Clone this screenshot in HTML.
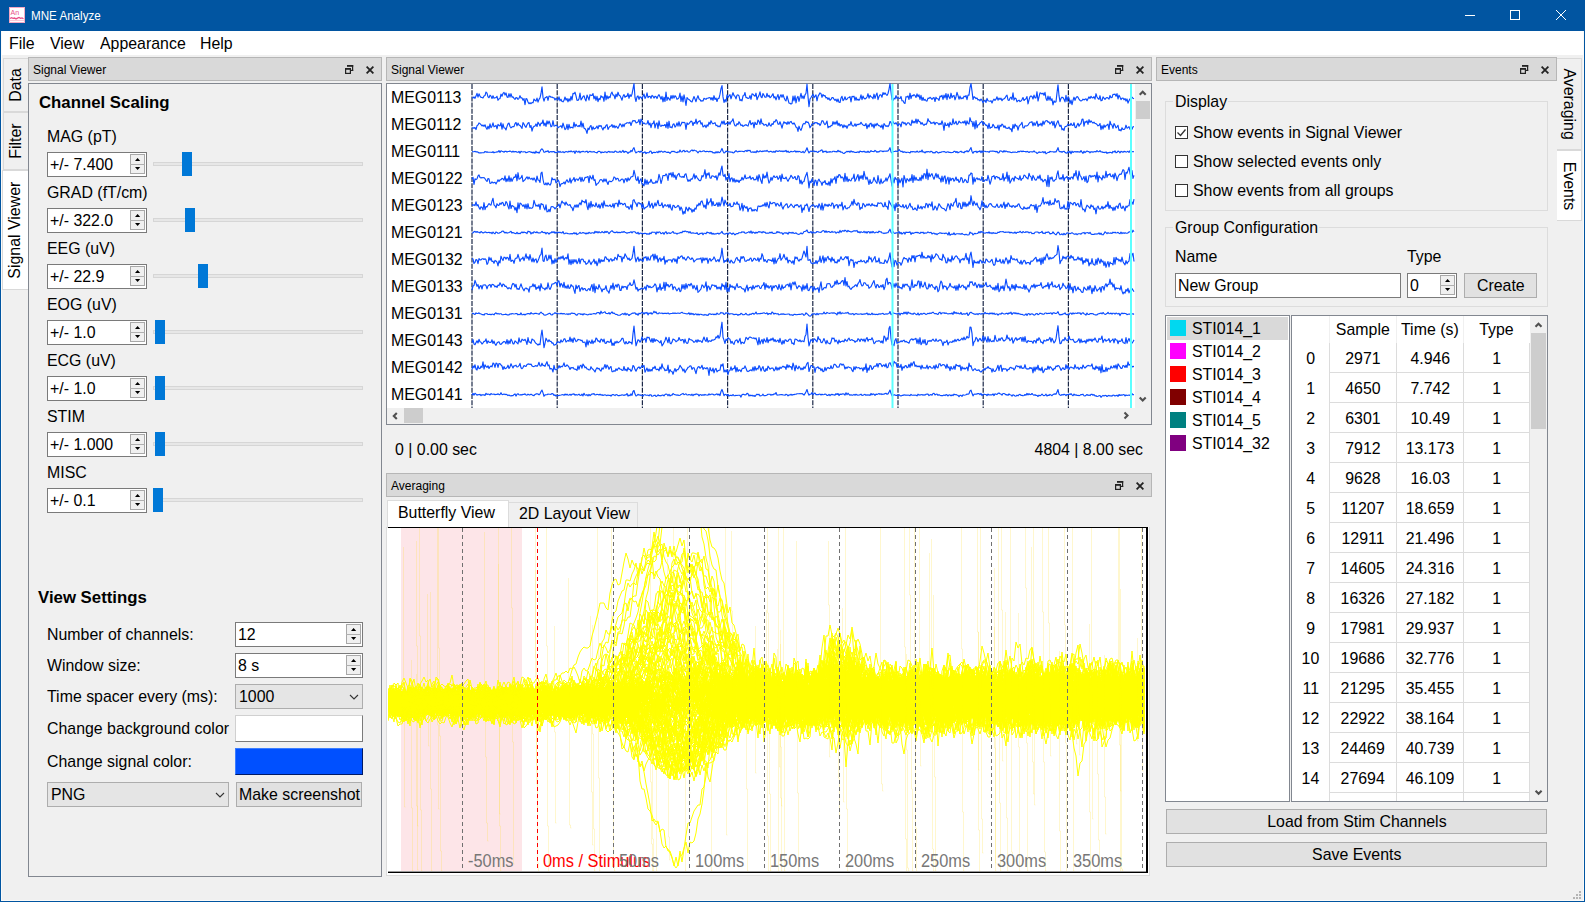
<!DOCTYPE html><html><head><meta charset="utf-8"><style>
*{box-sizing:border-box;margin:0;padding:0}
html,body{width:1585px;height:902px;overflow:hidden;background:#f0f0f0;font-family:"Liberation Sans",sans-serif;color:#000}
div{position:absolute}
.t{font-size:17px;line-height:19px;white-space:nowrap}
.s{display:inline-block;transform:scaleX(0.935);transform-origin:0 50%}
.c .s{transform-origin:50% 50%}
.r .s{transform-origin:100% 50%}
.dt{font-size:12px;line-height:14px;white-space:nowrap}
.dock{background:#d9d9d9;border:1px solid #b6b6b6}
.frame{border:1px solid #828790}
.spin{background:#fff;border:1px solid #7a7a7a}
.sbtn{background:#f0f0f0;border:1px solid #c8c8c8}
.btn{background:#e1e1e1;border:1px solid #adadad}
.groove{background:#e7e7e7;border:1px solid #d6d6d6}
.handle{background:#0078d7}
.grp{border:1px solid #dcdcdc}
svg{position:absolute}
</style></head><body><div class="" style="left:0px;top:0px;width:1585px;height:31px;background:#0155a1"></div><div class="" style="left:0px;top:0px;width:1px;height:902px;background:#0155a1;z-index:50"></div><div class="" style="left:1584px;top:0px;width:1px;height:902px;background:#0155a1;z-index:50"></div><div class="" style="left:0px;top:901px;width:1585px;height:1px;background:#0155a1;z-index:50"></div><div class="" style="left:1px;top:31px;width:1px;height:870px;background:#fbfaf8;z-index:49"></div><div class="" style="left:1583px;top:31px;width:1px;height:870px;background:#fbfaf8;z-index:49"></div><div class="" style="left:1px;top:900px;width:1583px;height:1px;background:#fbfaf8;z-index:49"></div><div class="" style="left:1579px;top:891px;width:2px;height:2px;background:#b4b4b4"></div><div class="" style="left:1576px;top:894px;width:2px;height:2px;background:#b4b4b4"></div><div class="" style="left:1579px;top:894px;width:2px;height:2px;background:#b4b4b4"></div><div class="" style="left:1573px;top:897px;width:2px;height:2px;background:#b4b4b4"></div><div class="" style="left:1576px;top:897px;width:2px;height:2px;background:#b4b4b4"></div><div class="" style="left:1579px;top:897px;width:2px;height:2px;background:#b4b4b4"></div><svg style="left:9px;top:7px" width="16" height="16" viewBox="0 0 16 16"><rect x="0" y="0" width="16" height="16" fill="#fff"/><rect x="0.5" y="0.5" width="15" height="15" fill="none" stroke="#f4a8c4"/><text x="1.6" y="7.6" font-size="7" font-family="Liberation Sans" fill="#e8508a">An</text><path d="M1 11.5l1.5 -0.8l1.5 0.6l1.5 -0.3l1.5 0.9l1.5 -0.8l1.5 -0.7l1.5 1l1.5 -0.5l1.5 0.9" fill="none" stroke="#e8508a" stroke-width="1.3"/><path d="M1 13.5h14" stroke="#f8c8d8" stroke-width="1.2"/></svg><div class="t b" style="left:30.5px;top:9px;color:#fff;font-size:12.3px;line-height:15px"><span style="display:inline-block;transform:scaleX(0.945);transform-origin:0 50%">MNE Analyze</span></div><div class="" style="left:1465px;top:15px;width:10px;height:1px;background:#fff"></div><div class="" style="left:1510px;top:10px;width:10px;height:10px;border:1px solid #fff"></div><svg style="left:1555px;top:9px" width="12" height="12" viewBox="0 0 12 12"><path d="M1 1L11 11M11 1L1 11" stroke="#fff" stroke-width="1"/></svg><div class="" style="left:1px;top:31px;width:1583px;height:24px;background:#fff"></div><div class="t" style="left:8.5px;top:34px;"><span class="s">File</span></div><div class="t" style="left:50px;top:34px;"><span class="s">View</span></div><div class="t" style="left:100px;top:34px;"><span class="s">Appearance</span></div><div class="t" style="left:200px;top:34px;"><span class="s">Help</span></div><div class="" style="left:3px;top:58px;width:25px;height:54px;background:#f0f0f0;border:1px solid #d9d9d9;border-right:none"></div><div class="t" style="left:3px;top:58px;width:54px;height:25px;transform-origin:0 0;transform:translate(0px,54px) rotate(-90deg);text-align:center;line-height:25px"><span class="s" style="transform-origin:50% 50%">Data</span></div><div class="" style="left:3px;top:112px;width:25px;height:58px;background:#f0f0f0;border:1px solid #d9d9d9;border-right:none"></div><div class="t" style="left:3px;top:112px;width:58px;height:25px;transform-origin:0 0;transform:translate(0px,58px) rotate(-90deg);text-align:center;line-height:25px"><span class="s" style="transform-origin:50% 50%">Filter</span></div><div class="" style="left:2px;top:170px;width:26px;height:120px;background:#ffffff;border:1px solid #d9d9d9;border-right:none"></div><div class="t" style="left:2px;top:170px;width:120px;height:26px;transform-origin:0 0;transform:translate(0px,120px) rotate(-90deg);text-align:center;line-height:26px"><span class="s" style="transform-origin:50% 50%">Signal Viewer</span></div><div class="dock" style="left:28px;top:57px;width:354px;height:24px;"></div><div class="dt" style="left:33px;top:62.5px;">Signal Viewer</div><svg style="left:345px;top:65px" width="9" height="10" viewBox="0 0 9 10"><g fill="#222"><rect x="2" y="0" width="6.2" height="1.8"/><rect x="7" y="0" width="1.2" height="6"/><rect x="6" y="4.8" width="2.2" height="1.2"/><rect x="0" y="3" width="6" height="1.8"/><rect x="0" y="3" width="1.2" height="6"/><rect x="4.8" y="3" width="1.2" height="6"/><rect x="0" y="7.8" width="6" height="1.2"/></g></svg><svg style="left:366px;top:66px" width="8" height="8" viewBox="0 0 8 8"><path d="M0.6 0.6L7.4 7.4M7.4 0.6L0.6 7.4" stroke="#222" stroke-width="1.8"/></svg><div class="frame" style="left:28px;top:83px;width:354px;height:794px;"></div><div class="t b" style="left:39px;top:93px;font-weight:bold;font-size:16.8px;line-height:19px">Channel Scaling</div><div class="t" style="left:47px;top:127px;"><span class="s">MAG (pT)</span></div><div class="spin" style="left:47px;top:152px;width:100px;height:25px;"></div><div class="t" style="left:50px;top:155px;"><span class="s">+/- 7.400</span></div><div class="" style="left:130px;top:154px;width:15px;height:20px;background:#f0f0f0;border:1px solid #a8a8a8"></div><div class="" style="left:130px;top:164px;width:15px;height:1px;background:#b0b0b0"></div><svg style="left:130px;top:152px" width="15" height="25"><path d="M5 9l2.6 -3l2.6 3z M5 15l2.6 3l2.6 -3z" fill="#000"/></svg><div class="groove" style="left:153px;top:162px;width:210px;height:4px;"></div><div class="handle" style="left:182px;top:152px;width:10px;height:24px;"></div><div class="t" style="left:47px;top:183px;"><span class="s">GRAD (fT/cm)</span></div><div class="spin" style="left:47px;top:208px;width:100px;height:25px;"></div><div class="t" style="left:50px;top:211px;"><span class="s">+/- 322.0</span></div><div class="" style="left:130px;top:210px;width:15px;height:20px;background:#f0f0f0;border:1px solid #a8a8a8"></div><div class="" style="left:130px;top:220px;width:15px;height:1px;background:#b0b0b0"></div><svg style="left:130px;top:208px" width="15" height="25"><path d="M5 9l2.6 -3l2.6 3z M5 15l2.6 3l2.6 -3z" fill="#000"/></svg><div class="groove" style="left:153px;top:218px;width:210px;height:4px;"></div><div class="handle" style="left:185px;top:208px;width:10px;height:24px;"></div><div class="t" style="left:47px;top:239px;"><span class="s">EEG (uV)</span></div><div class="spin" style="left:47px;top:264px;width:100px;height:25px;"></div><div class="t" style="left:50px;top:267px;"><span class="s">+/- 22.9</span></div><div class="" style="left:130px;top:266px;width:15px;height:20px;background:#f0f0f0;border:1px solid #a8a8a8"></div><div class="" style="left:130px;top:276px;width:15px;height:1px;background:#b0b0b0"></div><svg style="left:130px;top:264px" width="15" height="25"><path d="M5 9l2.6 -3l2.6 3z M5 15l2.6 3l2.6 -3z" fill="#000"/></svg><div class="groove" style="left:153px;top:274px;width:210px;height:4px;"></div><div class="handle" style="left:198px;top:264px;width:10px;height:24px;"></div><div class="t" style="left:47px;top:295px;"><span class="s">EOG (uV)</span></div><div class="spin" style="left:47px;top:320px;width:100px;height:25px;"></div><div class="t" style="left:50px;top:323px;"><span class="s">+/- 1.0</span></div><div class="" style="left:130px;top:322px;width:15px;height:20px;background:#f0f0f0;border:1px solid #a8a8a8"></div><div class="" style="left:130px;top:332px;width:15px;height:1px;background:#b0b0b0"></div><svg style="left:130px;top:320px" width="15" height="25"><path d="M5 9l2.6 -3l2.6 3z M5 15l2.6 3l2.6 -3z" fill="#000"/></svg><div class="groove" style="left:153px;top:330px;width:210px;height:4px;"></div><div class="handle" style="left:155px;top:320px;width:10px;height:24px;"></div><div class="t" style="left:47px;top:351px;"><span class="s">ECG (uV)</span></div><div class="spin" style="left:47px;top:376px;width:100px;height:25px;"></div><div class="t" style="left:50px;top:379px;"><span class="s">+/- 1.0</span></div><div class="" style="left:130px;top:378px;width:15px;height:20px;background:#f0f0f0;border:1px solid #a8a8a8"></div><div class="" style="left:130px;top:388px;width:15px;height:1px;background:#b0b0b0"></div><svg style="left:130px;top:376px" width="15" height="25"><path d="M5 9l2.6 -3l2.6 3z M5 15l2.6 3l2.6 -3z" fill="#000"/></svg><div class="groove" style="left:153px;top:386px;width:210px;height:4px;"></div><div class="handle" style="left:155px;top:376px;width:10px;height:24px;"></div><div class="t" style="left:47px;top:407px;"><span class="s">STIM</span></div><div class="spin" style="left:47px;top:432px;width:100px;height:25px;"></div><div class="t" style="left:50px;top:435px;"><span class="s">+/- 1.000</span></div><div class="" style="left:130px;top:434px;width:15px;height:20px;background:#f0f0f0;border:1px solid #a8a8a8"></div><div class="" style="left:130px;top:444px;width:15px;height:1px;background:#b0b0b0"></div><svg style="left:130px;top:432px" width="15" height="25"><path d="M5 9l2.6 -3l2.6 3z M5 15l2.6 3l2.6 -3z" fill="#000"/></svg><div class="groove" style="left:153px;top:442px;width:210px;height:4px;"></div><div class="handle" style="left:155px;top:432px;width:10px;height:24px;"></div><div class="t" style="left:47px;top:463px;"><span class="s">MISC</span></div><div class="spin" style="left:47px;top:488px;width:100px;height:25px;"></div><div class="t" style="left:50px;top:491px;"><span class="s">+/- 0.1</span></div><div class="" style="left:130px;top:490px;width:15px;height:20px;background:#f0f0f0;border:1px solid #a8a8a8"></div><div class="" style="left:130px;top:500px;width:15px;height:1px;background:#b0b0b0"></div><svg style="left:130px;top:488px" width="15" height="25"><path d="M5 9l2.6 -3l2.6 3z M5 15l2.6 3l2.6 -3z" fill="#000"/></svg><div class="groove" style="left:153px;top:498px;width:210px;height:4px;"></div><div class="handle" style="left:153px;top:488px;width:10px;height:24px;"></div><div class="t b" style="left:38px;top:588px;font-weight:bold;font-size:16.8px;line-height:19px">View Settings</div><div class="t" style="left:47px;top:625px;"><span class="s">Number of channels:</span></div><div class="t" style="left:47px;top:656px;"><span class="s">Window size:</span></div><div class="t" style="left:47px;top:687px;"><span class="s">Time spacer every (ms):</span></div><div class="t" style="left:47px;top:719px;"><span class="s">Change background color</span></div><div class="t" style="left:47px;top:752px;"><span class="s">Change signal color:</span></div><div class="spin" style="left:235px;top:622px;width:128px;height:25px;"></div><div class="t" style="left:238px;top:625px;"><span class="s">12</span></div><div class="" style="left:346px;top:624px;width:15px;height:20px;background:#f0f0f0;border:1px solid #a8a8a8"></div><div class="" style="left:346px;top:634px;width:15px;height:1px;background:#b0b0b0"></div><svg style="left:346px;top:622px" width="15" height="25"><path d="M5 9l2.6 -3l2.6 3z M5 15l2.6 3l2.6 -3z" fill="#000"/></svg><div class="spin" style="left:235px;top:653px;width:128px;height:25px;"></div><div class="t" style="left:238px;top:656px;"><span class="s">8 s</span></div><div class="" style="left:346px;top:655px;width:15px;height:20px;background:#f0f0f0;border:1px solid #a8a8a8"></div><div class="" style="left:346px;top:665px;width:15px;height:1px;background:#b0b0b0"></div><svg style="left:346px;top:653px" width="15" height="25"><path d="M5 9l2.6 -3l2.6 3z M5 15l2.6 3l2.6 -3z" fill="#000"/></svg><div class="btn" style="left:235px;top:684px;width:128px;height:25px;background:#e5e5e5"></div><div class="t" style="left:239px;top:687px;"><span class="s">1000</span></div><svg style="left:349px;top:694px" width="10" height="6"><path d="M1 1l4 4l4 -4" fill="none" stroke="#333" stroke-width="1.1"/></svg><div class="" style="left:235px;top:715px;width:128px;height:27px;background:#fff;border:1px solid #d0d0d0;border-right-color:#7a7a7a;border-bottom-color:#7a7a7a"></div><div class="" style="left:235px;top:748px;width:128px;height:27px;background:#0050ff;border:1px solid #3a7cff;border-right-color:#001a66;border-bottom-color:#001a66"></div><div class="btn" style="left:47px;top:782px;width:182px;height:25px;background:#e5e5e5"></div><div class="t" style="left:51px;top:785px;"><span class="s">PNG</span></div><svg style="left:215px;top:792px" width="10" height="6"><path d="M1 1l4 4l4 -4" fill="none" stroke="#333" stroke-width="1.1"/></svg><div class="btn" style="left:236px;top:782px;width:126px;height:25px;"></div><div class="t" style="left:238.5px;top:785px;"><span class="s">Make screenshot</span></div><div class="dock" style="left:386px;top:57px;width:766px;height:24px;"></div><div class="dt" style="left:391px;top:62.5px;">Signal Viewer</div><svg style="left:1115px;top:65px" width="9" height="10" viewBox="0 0 9 10"><g fill="#222"><rect x="2" y="0" width="6.2" height="1.8"/><rect x="7" y="0" width="1.2" height="6"/><rect x="6" y="4.8" width="2.2" height="1.2"/><rect x="0" y="3" width="6" height="1.8"/><rect x="0" y="3" width="1.2" height="6"/><rect x="4.8" y="3" width="1.2" height="6"/><rect x="0" y="7.8" width="6" height="1.2"/></g></svg><svg style="left:1136px;top:66px" width="8" height="8" viewBox="0 0 8 8"><path d="M0.6 0.6L7.4 7.4M7.4 0.6L0.6 7.4" stroke="#222" stroke-width="1.8"/></svg><div class="frame" style="left:386px;top:83px;width:766px;height:342px;"></div><div class="" style="left:387px;top:84px;width:748px;height:324px;background:#fff"></div><div class="" style="left:1135px;top:84px;width:16px;height:324px;background:#f0f0f0"></div><svg style="left:0;top:0" width="1585" height="902"><path d="M1139.7 94.8L1142.7 91.8L1145.7 94.8" fill="none" stroke="#505050" stroke-width="2.1"/></svg><svg style="left:0;top:0" width="1585" height="902"><path d="M1139.7 397.5L1142.7 400.5L1145.7 397.5" fill="none" stroke="#505050" stroke-width="2.1"/></svg><div class="" style="left:1136px;top:101px;width:14px;height:18px;background:#cdcdcd"></div><div class="" style="left:387px;top:408px;width:748px;height:15px;background:#f0f0f0"></div><svg style="left:0;top:0" width="1585" height="902"><path d="M396.8 413L393.8 416L396.8 419" fill="none" stroke="#505050" stroke-width="2.1"/></svg><svg style="left:0;top:0" width="1585" height="902"><path d="M1124.5 412.5L1127.5 415.5L1124.5 418.5" fill="none" stroke="#505050" stroke-width="2.1"/></svg><div class="" style="left:404px;top:408px;width:19px;height:15px;background:#cdcdcd"></div><div class="t" style="left:391px;top:88px;"><span class="s">MEG0113</span></div><div class="t" style="left:391px;top:115px;"><span class="s">MEG0112</span></div><div class="t" style="left:391px;top:142px;"><span class="s">MEG0111</span></div><div class="t" style="left:391px;top:169px;"><span class="s">MEG0122</span></div><div class="t" style="left:391px;top:196px;"><span class="s">MEG0123</span></div><div class="t" style="left:391px;top:223px;"><span class="s">MEG0121</span></div><div class="t" style="left:391px;top:250px;"><span class="s">MEG0132</span></div><div class="t" style="left:391px;top:277px;"><span class="s">MEG0133</span></div><div class="t" style="left:391px;top:304px;"><span class="s">MEG0131</span></div><div class="t" style="left:391px;top:331px;"><span class="s">MEG0143</span></div><div class="t" style="left:391px;top:358px;"><span class="s">MEG0142</span></div><div class="t" style="left:391px;top:385px;"><span class="s">MEG0141</span></div><div class="t" style="left:395px;top:440px;"><span class="s">0 | 0.00 sec</span></div><div class="t r" style="right:442px;top:440px"><span class="s">4804 | 8.00 sec</span></div><div class="dock" style="left:386px;top:473px;width:766px;height:24px;"></div><div class="dt" style="left:391px;top:478.5px;">Averaging</div><svg style="left:1115px;top:481px" width="9" height="10" viewBox="0 0 9 10"><g fill="#222"><rect x="2" y="0" width="6.2" height="1.8"/><rect x="7" y="0" width="1.2" height="6"/><rect x="6" y="4.8" width="2.2" height="1.2"/><rect x="0" y="3" width="6" height="1.8"/><rect x="0" y="3" width="1.2" height="6"/><rect x="4.8" y="3" width="1.2" height="6"/><rect x="0" y="7.8" width="6" height="1.2"/></g></svg><svg style="left:1136px;top:482px" width="8" height="8" viewBox="0 0 8 8"><path d="M0.6 0.6L7.4 7.4M7.4 0.6L0.6 7.4" stroke="#222" stroke-width="1.8"/></svg><div class="" style="left:386px;top:527px;width:764px;height:349px;background:#fff;border:1px solid #dcdcdc;border-top:none"></div><div class="" style="left:508px;top:502px;width:130px;height:26px;background:#f0f0f0;border:1px solid #dcdcdc;border-bottom:none"></div><div class="t" style="left:519px;top:504px;"><span class="s">2D Layout View</span></div><div class="" style="left:387px;top:500px;width:122px;height:28px;background:#fff;border:1px solid #dcdcdc;border-bottom:none"></div><div class="t" style="left:398px;top:503px;"><span class="s">Butterfly View</span></div><div class="dock" style="left:1156px;top:57px;width:401px;height:24px;"></div><div class="dt" style="left:1161px;top:62.5px;">Events</div><svg style="left:1520px;top:65px" width="9" height="10" viewBox="0 0 9 10"><g fill="#222"><rect x="2" y="0" width="6.2" height="1.8"/><rect x="7" y="0" width="1.2" height="6"/><rect x="6" y="4.8" width="2.2" height="1.2"/><rect x="0" y="3" width="6" height="1.8"/><rect x="0" y="3" width="1.2" height="6"/><rect x="4.8" y="3" width="1.2" height="6"/><rect x="0" y="7.8" width="6" height="1.2"/></g></svg><svg style="left:1541px;top:66px" width="8" height="8" viewBox="0 0 8 8"><path d="M0.6 0.6L7.4 7.4M7.4 0.6L0.6 7.4" stroke="#222" stroke-width="1.8"/></svg><div class="" style="left:1557px;top:58px;width:25px;height:92px;background:#f0f0f0;border:1px solid #d9d9d9;border-left:none"></div><div class="t" style="left:1557px;top:58px;width:92px;height:25px;transform-origin:0 0;transform:translate(25px,0px) rotate(90deg);text-align:center;line-height:25px"><span class="s" style="transform-origin:50% 50%">Averaging</span></div><div class="" style="left:1557px;top:150px;width:25px;height:71px;background:#ffffff;border:1px solid #d9d9d9;border-left:none"></div><div class="t" style="left:1557px;top:150px;width:71px;height:25px;transform-origin:0 0;transform:translate(25px,0px) rotate(90deg);text-align:center;line-height:25px"><span class="s" style="transform-origin:50% 50%">Events</span></div><div class="grp" style="left:1165px;top:101px;width:383px;height:110px;"></div><div class="" style="left:1173px;top:99px;width:55px;height:4px;background:#f0f0f0"></div><div class="t" style="left:1175px;top:92px;"><span class="s">Display</span></div><div class="" style="left:1175px;top:126px;width:13px;height:13px;background:#fff;border:1px solid #333"></div><div class="t" style="left:1193px;top:123px;"><span class="s">Show events in Signal Viewer</span></div><div class="" style="left:1175px;top:155px;width:13px;height:13px;background:#fff;border:1px solid #333"></div><div class="t" style="left:1193px;top:152px;"><span class="s">Show selected events only</span></div><div class="" style="left:1175px;top:184px;width:13px;height:13px;background:#fff;border:1px solid #333"></div><div class="t" style="left:1193px;top:181px;"><span class="s">Show events from all groups</span></div><svg style="left:1175px;top:126px" width="13" height="13"><path d="M2.5 6.5l3 3l5 -6" fill="none" stroke="#333" stroke-width="1.3"/></svg><div class="grp" style="left:1165px;top:227px;width:383px;height:80px;"></div><div class="" style="left:1173px;top:225px;width:146px;height:4px;background:#f0f0f0"></div><div class="t" style="left:1175px;top:218px;"><span class="s">Group Configuration</span></div><div class="t" style="left:1175px;top:247px;"><span class="s">Name</span></div><div class="t" style="left:1407px;top:247px;"><span class="s">Type</span></div><div class="" style="left:1175px;top:273px;width:226px;height:25px;background:#fff;border:1px solid #7a7a7a"></div><div class="t" style="left:1178px;top:276px;"><span class="s">New Group</span></div><div class="spin" style="left:1407px;top:273px;width:50px;height:25px;"></div><div class="t" style="left:1410px;top:276px;"><span class="s">0</span></div><div class="" style="left:1440px;top:275px;width:15px;height:20px;background:#f0f0f0;border:1px solid #a8a8a8"></div><div class="" style="left:1440px;top:285px;width:15px;height:1px;background:#b0b0b0"></div><svg style="left:1440px;top:273px" width="15" height="25"><path d="M5 9l2.6 -3l2.6 3z M5 15l2.6 3l2.6 -3z" fill="#000"/></svg><div class="btn" style="left:1464px;top:273px;width:73px;height:25px;"></div><div class="t" style="left:1476.5px;top:276px;"><span class="s">Create</span></div><div class="frame" style="left:1165px;top:315px;width:125px;height:487px;background:#fff"></div><div class="" style="left:1167px;top:317px;width:121px;height:23px;background:#d9d9d9"></div><div class="" style="left:1170px;top:320px;width:16px;height:16px;background:#00d8f0"></div><div class="t" style="left:1192px;top:319px;"><span class="s">STI014_1</span></div><div class="" style="left:1170px;top:343px;width:16px;height:16px;background:#ff00ff"></div><div class="t" style="left:1192px;top:342px;"><span class="s">STI014_2</span></div><div class="" style="left:1170px;top:366px;width:16px;height:16px;background:#ff0000"></div><div class="t" style="left:1192px;top:365px;"><span class="s">STI014_3</span></div><div class="" style="left:1170px;top:389px;width:16px;height:16px;background:#800000"></div><div class="t" style="left:1192px;top:388px;"><span class="s">STI014_4</span></div><div class="" style="left:1170px;top:412px;width:16px;height:16px;background:#008080"></div><div class="t" style="left:1192px;top:411px;"><span class="s">STI014_5</span></div><div class="" style="left:1170px;top:435px;width:16px;height:16px;background:#800080"></div><div class="t" style="left:1192px;top:434px;"><span class="s">STI014_32</span></div><div class="frame" style="left:1291px;top:315px;width:257px;height:487px;background:#fff"></div><div style="left:1329px;top:343px;width:1px;height:458px;background:#dcdcdc"></div><div style="left:1396px;top:343px;width:1px;height:458px;background:#dcdcdc"></div><div style="left:1463px;top:343px;width:1px;height:458px;background:#dcdcdc"></div><div style="left:1529px;top:343px;width:1px;height:458px;background:#dcdcdc"></div><div style="left:1330px;top:372px;width:199px;height:1px;background:#dcdcdc"></div><div style="left:1330px;top:402px;width:199px;height:1px;background:#dcdcdc"></div><div style="left:1330px;top:432px;width:199px;height:1px;background:#dcdcdc"></div><div style="left:1330px;top:462px;width:199px;height:1px;background:#dcdcdc"></div><div style="left:1330px;top:492px;width:199px;height:1px;background:#dcdcdc"></div><div style="left:1330px;top:522px;width:199px;height:1px;background:#dcdcdc"></div><div style="left:1330px;top:552px;width:199px;height:1px;background:#dcdcdc"></div><div style="left:1330px;top:582px;width:199px;height:1px;background:#dcdcdc"></div><div style="left:1330px;top:612px;width:199px;height:1px;background:#dcdcdc"></div><div style="left:1330px;top:642px;width:199px;height:1px;background:#dcdcdc"></div><div style="left:1330px;top:672px;width:199px;height:1px;background:#dcdcdc"></div><div style="left:1330px;top:702px;width:199px;height:1px;background:#dcdcdc"></div><div style="left:1330px;top:732px;width:199px;height:1px;background:#dcdcdc"></div><div style="left:1330px;top:762px;width:199px;height:1px;background:#dcdcdc"></div><div style="left:1330px;top:792px;width:199px;height:1px;background:#dcdcdc"></div><div style="left:1396px;top:316px;width:1px;height:27px;background:#f0f0f0"></div><div style="left:1463px;top:316px;width:1px;height:27px;background:#f0f0f0"></div><div style="left:1329px;top:316px;width:1px;height:27px;background:#f0f0f0"></div><div class="t c" style="left:1330px;top:320px;width:66px;text-align:center"><span class="s">Sample</span></div><div class="t c" style="left:1397px;top:320px;width:66px;text-align:center"><span class="s">Time (s)</span></div><div class="t c" style="left:1464px;top:320px;width:65px;text-align:center"><span class="s">Type</span></div><div class="t c" style="left:1292px;top:349px;width:37px;text-align:center"><span class="s">0</span></div><div class="t c" style="left:1330px;top:349px;width:66px;text-align:center"><span class="s">2971</span></div><div class="t c" style="left:1397px;top:349px;width:66px;text-align:center"><span class="s">4.946</span></div><div class="t c" style="left:1464px;top:349px;width:65px;text-align:center"><span class="s">1</span></div><div class="t c" style="left:1292px;top:379px;width:37px;text-align:center"><span class="s">1</span></div><div class="t c" style="left:1330px;top:379px;width:66px;text-align:center"><span class="s">4650</span></div><div class="t c" style="left:1397px;top:379px;width:66px;text-align:center"><span class="s">7.742</span></div><div class="t c" style="left:1464px;top:379px;width:65px;text-align:center"><span class="s">1</span></div><div class="t c" style="left:1292px;top:409px;width:37px;text-align:center"><span class="s">2</span></div><div class="t c" style="left:1330px;top:409px;width:66px;text-align:center"><span class="s">6301</span></div><div class="t c" style="left:1397px;top:409px;width:66px;text-align:center"><span class="s">10.49</span></div><div class="t c" style="left:1464px;top:409px;width:65px;text-align:center"><span class="s">1</span></div><div class="t c" style="left:1292px;top:439px;width:37px;text-align:center"><span class="s">3</span></div><div class="t c" style="left:1330px;top:439px;width:66px;text-align:center"><span class="s">7912</span></div><div class="t c" style="left:1397px;top:439px;width:66px;text-align:center"><span class="s">13.173</span></div><div class="t c" style="left:1464px;top:439px;width:65px;text-align:center"><span class="s">1</span></div><div class="t c" style="left:1292px;top:469px;width:37px;text-align:center"><span class="s">4</span></div><div class="t c" style="left:1330px;top:469px;width:66px;text-align:center"><span class="s">9628</span></div><div class="t c" style="left:1397px;top:469px;width:66px;text-align:center"><span class="s">16.03</span></div><div class="t c" style="left:1464px;top:469px;width:65px;text-align:center"><span class="s">1</span></div><div class="t c" style="left:1292px;top:499px;width:37px;text-align:center"><span class="s">5</span></div><div class="t c" style="left:1330px;top:499px;width:66px;text-align:center"><span class="s">11207</span></div><div class="t c" style="left:1397px;top:499px;width:66px;text-align:center"><span class="s">18.659</span></div><div class="t c" style="left:1464px;top:499px;width:65px;text-align:center"><span class="s">1</span></div><div class="t c" style="left:1292px;top:529px;width:37px;text-align:center"><span class="s">6</span></div><div class="t c" style="left:1330px;top:529px;width:66px;text-align:center"><span class="s">12911</span></div><div class="t c" style="left:1397px;top:529px;width:66px;text-align:center"><span class="s">21.496</span></div><div class="t c" style="left:1464px;top:529px;width:65px;text-align:center"><span class="s">1</span></div><div class="t c" style="left:1292px;top:559px;width:37px;text-align:center"><span class="s">7</span></div><div class="t c" style="left:1330px;top:559px;width:66px;text-align:center"><span class="s">14605</span></div><div class="t c" style="left:1397px;top:559px;width:66px;text-align:center"><span class="s">24.316</span></div><div class="t c" style="left:1464px;top:559px;width:65px;text-align:center"><span class="s">1</span></div><div class="t c" style="left:1292px;top:589px;width:37px;text-align:center"><span class="s">8</span></div><div class="t c" style="left:1330px;top:589px;width:66px;text-align:center"><span class="s">16326</span></div><div class="t c" style="left:1397px;top:589px;width:66px;text-align:center"><span class="s">27.182</span></div><div class="t c" style="left:1464px;top:589px;width:65px;text-align:center"><span class="s">1</span></div><div class="t c" style="left:1292px;top:619px;width:37px;text-align:center"><span class="s">9</span></div><div class="t c" style="left:1330px;top:619px;width:66px;text-align:center"><span class="s">17981</span></div><div class="t c" style="left:1397px;top:619px;width:66px;text-align:center"><span class="s">29.937</span></div><div class="t c" style="left:1464px;top:619px;width:65px;text-align:center"><span class="s">1</span></div><div class="t c" style="left:1292px;top:649px;width:37px;text-align:center"><span class="s">10</span></div><div class="t c" style="left:1330px;top:649px;width:66px;text-align:center"><span class="s">19686</span></div><div class="t c" style="left:1397px;top:649px;width:66px;text-align:center"><span class="s">32.776</span></div><div class="t c" style="left:1464px;top:649px;width:65px;text-align:center"><span class="s">1</span></div><div class="t c" style="left:1292px;top:679px;width:37px;text-align:center"><span class="s">11</span></div><div class="t c" style="left:1330px;top:679px;width:66px;text-align:center"><span class="s">21295</span></div><div class="t c" style="left:1397px;top:679px;width:66px;text-align:center"><span class="s">35.455</span></div><div class="t c" style="left:1464px;top:679px;width:65px;text-align:center"><span class="s">1</span></div><div class="t c" style="left:1292px;top:709px;width:37px;text-align:center"><span class="s">12</span></div><div class="t c" style="left:1330px;top:709px;width:66px;text-align:center"><span class="s">22922</span></div><div class="t c" style="left:1397px;top:709px;width:66px;text-align:center"><span class="s">38.164</span></div><div class="t c" style="left:1464px;top:709px;width:65px;text-align:center"><span class="s">1</span></div><div class="t c" style="left:1292px;top:739px;width:37px;text-align:center"><span class="s">13</span></div><div class="t c" style="left:1330px;top:739px;width:66px;text-align:center"><span class="s">24469</span></div><div class="t c" style="left:1397px;top:739px;width:66px;text-align:center"><span class="s">40.739</span></div><div class="t c" style="left:1464px;top:739px;width:65px;text-align:center"><span class="s">1</span></div><div class="t c" style="left:1292px;top:769px;width:37px;text-align:center"><span class="s">14</span></div><div class="t c" style="left:1330px;top:769px;width:66px;text-align:center"><span class="s">27694</span></div><div class="t c" style="left:1397px;top:769px;width:66px;text-align:center"><span class="s">46.109</span></div><div class="t c" style="left:1464px;top:769px;width:65px;text-align:center"><span class="s">1</span></div><div class="" style="left:1530px;top:316px;width:17px;height:485px;background:#f0f0f0"></div><div class="" style="left:1531px;top:333px;width:15px;height:96px;background:#cdcdcd"></div><svg style="left:0;top:0" width="1585" height="902"><path d="M1535.5 326.8L1538.5 323.8L1541.5 326.8" fill="none" stroke="#505050" stroke-width="2.1"/></svg><svg style="left:0;top:0" width="1585" height="902"><path d="M1535.6 790.8L1538.6 793.8L1541.6 790.8" fill="none" stroke="#505050" stroke-width="2.1"/></svg><div class="btn" style="left:1166px;top:809px;width:381px;height:25px;"></div><div class="t c" style="left:1166px;top:812px;width:381px;text-align:center"><span class="s">Load from Stim Channels</span></div><div class="btn" style="left:1166px;top:842px;width:381px;height:25px;"></div><div class="t c" style="left:1166px;top:845px;width:381px;text-align:center"><span class="s">Save Events</span></div><svg style="left:0;top:0" width="1585" height="902"><g fill="none"><line x1="472.0" y1="84" x2="472.0" y2="408" stroke="#1c2848" stroke-width="1.2" stroke-dasharray="5 1.2"/><line x1="557.2" y1="84" x2="557.2" y2="408" stroke="#1c2848" stroke-width="1.2" stroke-dasharray="5 1.2"/><line x1="642.4" y1="84" x2="642.4" y2="408" stroke="#1c2848" stroke-width="1.2" stroke-dasharray="5 1.2"/><line x1="727.6" y1="84" x2="727.6" y2="408" stroke="#1c2848" stroke-width="1.2" stroke-dasharray="5 1.2"/><line x1="812.8" y1="84" x2="812.8" y2="408" stroke="#1c2848" stroke-width="1.2" stroke-dasharray="5 1.2"/><line x1="898.0" y1="84" x2="898.0" y2="408" stroke="#1c2848" stroke-width="1.2" stroke-dasharray="5 1.2"/><line x1="983.2" y1="84" x2="983.2" y2="408" stroke="#1c2848" stroke-width="1.2" stroke-dasharray="5 1.2"/><line x1="1068.4" y1="84" x2="1068.4" y2="408" stroke="#1c2848" stroke-width="1.2" stroke-dasharray="5 1.2"/><g stroke="#0a4cff" stroke-width="1.15" stroke-linejoin="round"><polyline points="472,97.7 473,98.0 474,96.9 475,98.3 476,96.1 477,93.4 478,97.2 479,93.8 480,96.1 481,97.5 482,97.4 483,98.0 484,96.1 485,95.6 486,92.0 487,93.2 488,96.9 489,97.7 490,95.2 491,96.1 492,98.5 493,95.8 494,98.2 495,97.8 496,97.7 497,96.3 498,100.3 499,98.7 500,98.6 501,94.2 502,96.3 503,93.4 504,92.4 505,95.1 506,92.9 507,96.9 508,97.4 509,93.7 510,97.1 511,93.7 512,97.1 513,96.9 514,98.3 515,99.4 516,97.6 517,97.9 518,99.3 519,98.3 520,95.7 521,97.9 522,97.9 523,100.2 524,98.6 525,104.7 526,98.5 527,99.1 528,102.0 529,103.7 530,102.8 531,103.7 532,102.5 533,102.8 534,99.0 535,100.3 536,101.1 537,98.1 538,102.1 539,99.4 540,97.9 541,93.5 542,86.8 543,97.4 544,101.1 545,97.8 546,97.2 547,96.5 548,100.3 549,96.1 550,96.3 551,97.2 552,97.0 553,97.7 554,97.7 555,99.9 556,98.3 557,99.2 558,100.0 559,96.8 560,100.8 561,99.2 562,101.5 563,101.8 564,100.4 565,97.0 566,100.1 567,98.5 568,101.8 569,98.8 570,100.9 571,96.3 572,100.0 573,93.4 574,93.8 575,92.2 576,95.9 577,100.3 578,100.4 579,98.9 580,93.0 581,99.9 582,98.4 583,96.5 584,95.8 585,98.9 586,101.0 587,95.1 588,97.3 589,100.1 590,94.7 591,95.4 592,95.4 593,93.5 594,98.8 595,96.1 596,100.3 597,96.3 598,101.6 599,98.3 600,99.7 601,95.7 602,97.3 603,96.8 604,101.3 605,92.1 606,99.8 607,95.7 608,98.7 609,96.6 610,97.6 611,93.7 612,92.1 613,95.1 614,95.1 615,98.8 616,94.1 617,96.7 618,92.2 619,95.2 620,95.8 621,97.8 622,100.2 623,96.3 624,94.6 625,97.3 626,96.1 627,96.4 628,93.3 629,98.3 630,94.6 631,96.5 632,94.1 633,88.8 634,83.6 635,97.5 636,101.5 637,97.0 638,95.9 639,99.4 640,96.7 641,97.4 642,98.9 643,96.3 644,94.0 645,98.5 646,96.8 647,92.9 648,97.6 649,96.5 650,96.3 651,98.3 652,95.4 653,96.2 654,98.1 655,96.4 656,96.6 657,98.6 658,96.0 659,94.7 660,96.7 661,99.2 662,96.4 663,101.8 664,97.2 665,101.5 666,92.0 667,100.4 668,97.4 669,98.8 670,100.2 671,95.5 672,98.6 673,95.4 674,98.1 675,95.7 676,96.9 677,99.3 678,98.8 679,97.7 680,93.0 681,101.4 682,96.1 683,102.0 684,94.9 685,99.4 686,105.5 687,97.5 688,98.9 689,99.5 690,100.4 691,101.5 692,102.0 693,99.2 694,96.5 695,99.0 696,101.7 697,98.1 698,95.7 699,99.0 700,99.6 701,101.1 702,100.7 703,101.0 704,98.3 705,98.9 706,99.3 707,98.2 708,98.1 709,97.7 710,97.5 711,99.8 712,97.6 713,100.4 714,95.7 715,99.5 716,98.0 717,101.5 718,98.3 719,98.4 720,94.2 721,88.6 722,85.6 723,96.9 724,102.5 725,99.6 726,101.8 727,94.9 728,97.4 729,95.8 730,94.7 731,98.8 732,95.5 733,92.7 734,95.5 735,96.4 736,98.9 737,95.2 738,94.8 739,95.8 740,100.6 741,99.6 742,100.8 743,95.9 744,95.5 745,92.5 746,97.6 747,97.6 748,98.5 749,98.3 750,95.6 751,99.3 752,93.9 753,94.2 754,95.5 755,96.2 756,93.2 757,99.7 758,97.2 759,95.4 760,91.8 761,96.8 762,97.7 763,93.5 764,95.3 765,97.2 766,97.3 767,93.4 768,96.6 769,95.3 770,97.7 771,96.9 772,95.4 773,93.7 774,98.0 775,96.6 776,99.9 777,96.9 778,94.5 779,99.6 780,96.5 781,94.7 782,97.2 783,94.6 784,97.5 785,99.8 786,101.0 787,96.0 788,99.5 789,103.2 790,103.2 791,104.1 792,103.5 793,96.1 794,100.9 795,95.8 796,102.8 797,98.0 798,96.4 799,101.3 800,97.4 801,93.4 802,98.4 803,95.9 804,98.7 805,94.9 806,93.3 807,84.2 808,96.6 809,106.7 810,99.0 811,97.5 812,95.9 813,94.2 814,97.6 815,96.2 816,94.9 817,100.8 818,96.4 819,94.6 820,92.9 821,93.6 822,97.3 823,94.5 824,95.9 825,95.6 826,97.9 827,97.5 828,99.5 829,97.9 830,100.4 831,99.4 832,97.5 833,97.6 834,99.1 835,100.3 836,99.2 837,101.7 838,99.0 839,102.3 840,102.5 841,98.1 842,96.3 843,100.6 844,99.5 845,96.8 846,99.8 847,99.3 848,97.7 849,97.5 850,96.6 851,101.9 852,96.3 853,96.8 854,96.2 855,100.3 856,97.2 857,100.2 858,99.2 859,100.3 860,98.7 861,94.8 862,99.7 863,96.0 864,98.3 865,99.0 866,98.3 867,97.0 868,93.7 869,98.2 870,95.4 871,96.8 872,97.2 873,98.8 874,94.2 875,98.4 876,95.2 877,93.0 878,99.7 879,96.5 880,94.8 881,94.9 882,97.2 883,92.5 884,94.5 885,92.9 886,94.3 887,95.4 888,93.5 889,89.3 890,83.6 891,91.9 892,99.8 893,100.4 894,98.2 895,99.0 896,95.6 897,98.3 898,97.8 899,98.3 900,98.5 901,96.4 902,100.8 903,100.7 904,102.7 905,103.5 906,96.7 907,97.0 908,96.0 909,99.5 910,93.2 911,98.7 912,95.4 913,95.8 914,94.6 915,95.6 916,97.5 917,93.9 918,96.6 919,94.8 920,99.4 921,95.4 922,100.5 923,97.3 924,100.4 925,99.3 926,100.8 927,101.1 928,98.1 929,98.5 930,97.3 931,98.2 932,99.3 933,98.1 934,97.5 935,101.5 936,97.2 937,98.7 938,98.7 939,100.4 940,96.1 941,96.7 942,95.3 943,99.4 944,95.1 945,97.9 946,93.5 947,99.6 948,94.0 949,97.0 950,98.6 951,93.2 952,97.7 953,95.9 954,95.4 955,99.8 956,96.7 957,92.4 958,95.5 959,99.2 960,96.1 961,98.9 962,97.8 963,98.6 964,96.1 965,96.8 966,95.5 967,99.6 968,95.0 969,95.1 970,87.5 971,83.6 972,91.1 973,99.5 974,96.6 975,97.5 976,98.6 977,98.0 978,100.1 979,99.5 980,100.8 981,99.0 982,100.4 983,102.8 984,101.1 985,100.2 986,102.4 987,98.4 988,100.7 989,101.0 990,101.2 991,100.7 992,103.0 993,100.5 994,99.2 995,100.4 996,99.2 997,96.8 998,100.2 999,98.1 1000,99.5 1001,98.2 1002,100.7 1003,99.1 1004,98.9 1005,98.0 1006,96.2 1007,95.2 1008,100.0 1009,100.5 1010,98.1 1011,97.1 1012,99.5 1013,92.9 1014,100.1 1015,98.1 1016,98.6 1017,101.8 1018,100.7 1019,100.2 1020,101.6 1021,101.0 1022,99.6 1023,97.5 1024,100.5 1025,99.4 1026,98.8 1027,96.5 1028,103.8 1029,99.9 1030,96.7 1031,95.9 1032,96.5 1033,99.0 1034,95.1 1035,97.8 1036,97.8 1037,91.7 1038,101.0 1039,96.8 1040,92.9 1041,93.3 1042,94.0 1043,93.1 1044,95.3 1045,92.4 1046,98.5 1047,100.6 1048,96.1 1049,100.1 1050,96.6 1051,100.4 1052,98.8 1053,104.9 1054,100.8 1055,102.3 1056,101.8 1057,92.9 1058,84.9 1059,95.7 1060,101.6 1061,98.4 1062,97.2 1063,97.6 1064,99.3 1065,101.9 1066,95.4 1067,101.3 1068,97.2 1069,98.0 1070,103.7 1071,100.1 1072,104.6 1073,100.3 1074,97.2 1075,100.4 1076,97.8 1077,96.5 1078,97.3 1079,99.1 1080,100.4 1081,100.9 1082,100.5 1083,99.2 1084,99.9 1085,99.3 1086,98.8 1087,100.7 1088,98.7 1089,96.9 1090,98.4 1091,96.3 1092,97.6 1093,98.0 1094,96.6 1095,99.1 1096,93.7 1097,97.0 1098,98.5 1099,99.3 1100,95.7 1101,100.8 1102,100.5 1103,96.9 1104,98.2 1105,99.4 1106,98.1 1107,97.5 1108,98.1 1109,99.1 1110,95.5 1111,97.7 1112,97.5 1113,94.3 1114,94.5 1115,94.1 1116,96.2 1117,93.6 1118,99.0 1119,95.2 1120,97.1 1121,99.6 1122,98.2 1123,98.0 1124,99.8 1125,98.5 1126,101.1 1127,98.9 1128,103.1 1129,100.6 1130,98.8 1131,99.0 1132,97.2 1133,98.3 1134,98.7"/><polyline points="472,128.4 473,127.7 474,128.3 475,127.5 476,129.6 477,125.8 478,124.9 479,122.9 480,123.6 481,124.7 482,126.0 483,125.0 484,126.4 485,124.8 486,127.5 487,129.3 488,126.2 489,128.8 490,123.8 491,127.7 492,126.2 493,122.8 494,126.8 495,126.3 496,125.3 497,128.8 498,124.3 499,125.5 500,125.9 501,122.8 502,129.1 503,123.8 504,127.9 505,128.0 506,129.9 507,126.4 508,123.7 509,123.0 510,126.5 511,127.8 512,127.0 513,126.5 514,126.6 515,123.6 516,122.5 517,125.8 518,123.1 519,125.1 520,125.4 521,126.8 522,128.4 523,122.5 524,124.1 525,126.2 526,127.4 527,124.7 528,123.1 529,122.6 530,127.5 531,125.5 532,131.1 533,127.5 534,126.4 535,126.0 536,123.9 537,126.5 538,122.2 539,123.9 540,126.0 541,123.1 542,123.5 543,120.0 544,125.6 545,123.0 546,126.4 547,120.9 548,124.0 549,121.1 550,123.4 551,126.8 552,126.0 553,120.7 554,126.1 555,125.7 556,125.2 557,125.8 558,127.8 559,126.9 560,126.4 561,125.7 562,128.0 563,123.1 564,126.4 565,129.7 566,128.7 567,124.3 568,129.7 569,124.4 570,128.2 571,127.2 572,127.4 573,127.9 574,122.4 575,126.9 576,124.3 577,125.9 578,126.6 579,125.5 580,126.6 581,121.0 582,127.1 583,123.2 584,128.2 585,128.6 586,130.2 587,133.4 588,128.1 589,129.6 590,126.6 591,125.5 592,130.0 593,126.8 594,129.1 595,128.6 596,127.7 597,126.1 598,128.8 599,125.4 600,126.4 601,125.5 602,127.9 603,129.9 604,127.3 605,128.0 606,125.4 607,124.6 608,129.4 609,127.5 610,126.3 611,126.1 612,124.6 613,127.5 614,125.3 615,127.8 616,126.1 617,127.0 618,128.4 619,126.0 620,123.7 621,124.8 622,126.9 623,124.2 624,126.6 625,123.8 626,123.5 627,122.7 628,122.7 629,123.2 630,122.2 631,125.5 632,122.3 633,120.4 634,121.0 635,120.5 636,122.9 637,122.4 638,121.9 639,119.5 640,124.6 641,119.0 642,121.2 643,123.8 644,122.9 645,123.9 646,124.0 647,123.8 648,120.5 649,125.0 650,123.1 651,127.7 652,123.6 653,123.6 654,120.9 655,127.9 656,123.8 657,122.8 658,128.6 659,120.8 660,125.7 661,126.4 662,125.2 663,125.6 664,125.5 665,124.5 666,127.7 667,122.2 668,128.3 669,121.2 670,127.4 671,126.9 672,127.9 673,124.3 674,123.9 675,127.1 676,125.9 677,122.9 678,126.2 679,121.7 680,126.2 681,124.7 682,122.1 683,122.8 684,122.3 685,123.0 686,129.3 687,122.8 688,124.4 689,123.7 690,122.3 691,121.0 692,121.7 693,125.5 694,122.5 695,123.4 696,119.1 697,124.1 698,122.0 699,121.3 700,120.6 701,124.2 702,122.7 703,126.9 704,126.3 705,125.1 706,127.6 707,124.9 708,126.2 709,122.2 710,124.3 711,120.7 712,122.8 713,123.8 714,123.4 715,122.6 716,125.6 717,125.2 718,126.8 719,125.8 720,126.9 721,123.9 722,121.2 723,124.0 724,120.8 725,124.5 726,123.8 727,123.0 728,124.2 729,122.1 730,124.3 731,121.8 732,120.9 733,118.8 734,123.2 735,125.7 736,126.0 737,123.6 738,124.6 739,121.7 740,123.4 741,125.6 742,124.9 743,126.4 744,125.7 745,125.1 746,124.7 747,125.5 748,126.1 749,122.9 750,120.5 751,124.6 752,123.5 753,122.6 754,128.0 755,122.2 756,124.3 757,124.3 758,120.0 759,121.4 760,124.4 761,118.8 762,123.6 763,123.5 764,125.3 765,124.7 766,124.3 767,126.2 768,125.7 769,122.8 770,125.2 771,126.1 772,123.6 773,124.5 774,121.4 775,122.0 776,119.6 777,120.9 778,124.1 779,124.3 780,121.8 781,124.7 782,128.1 783,124.1 784,121.7 785,123.3 786,122.5 787,124.4 788,121.7 789,123.9 790,122.0 791,121.4 792,123.1 793,124.1 794,122.9 795,124.6 796,127.1 797,127.5 798,131.4 799,126.2 800,129.0 801,130.3 802,127.5 803,124.2 804,123.4 805,123.9 806,121.3 807,122.4 808,122.1 809,124.0 810,127.8 811,126.1 812,124.0 813,123.5 814,124.0 815,122.4 816,123.0 817,122.6 818,124.1 819,123.5 820,125.6 821,123.4 822,120.7 823,120.9 824,123.3 825,124.6 826,123.3 827,121.1 828,127.8 829,126.4 830,127.0 831,125.5 832,125.6 833,121.6 834,124.3 835,122.0 836,124.2 837,120.8 838,125.4 839,123.2 840,126.1 841,124.6 842,125.0 843,127.7 844,124.9 845,127.0 846,125.7 847,128.3 848,125.6 849,124.4 850,125.2 851,121.7 852,125.3 853,126.1 854,125.7 855,123.8 856,126.2 857,124.2 858,124.7 859,124.0 860,124.1 861,122.3 862,123.9 863,124.9 864,125.4 865,125.6 866,123.6 867,128.7 868,124.8 869,127.0 870,123.6 871,123.2 872,126.6 873,124.2 874,128.0 875,123.9 876,125.8 877,123.4 878,125.0 879,125.8 880,125.8 881,127.4 882,124.9 883,129.1 884,123.6 885,125.0 886,126.5 887,125.6 888,126.6 889,125.1 890,121.5 891,122.3 892,125.9 893,121.4 894,123.3 895,123.9 896,122.7 897,124.4 898,126.1 899,123.8 900,124.0 901,126.8 902,122.1 903,122.1 904,123.8 905,122.6 906,125.1 907,123.7 908,122.7 909,123.0 910,124.7 911,125.4 912,120.0 913,123.0 914,121.4 915,122.8 916,119.0 917,123.4 918,119.4 919,121.4 920,121.7 921,124.2 922,122.6 923,124.4 924,125.4 925,124.0 926,124.6 927,122.9 928,118.7 929,121.4 930,121.4 931,123.6 932,122.7 933,123.1 934,122.0 935,124.6 936,122.5 937,122.7 938,123.2 939,124.7 940,123.3 941,124.5 942,120.8 943,124.1 944,130.3 945,122.7 946,125.5 947,125.5 948,123.3 949,127.2 950,122.2 951,124.6 952,124.7 953,118.9 954,123.9 955,123.3 956,121.2 957,124.6 958,123.9 959,121.1 960,122.3 961,123.0 962,122.8 963,121.6 964,123.1 965,120.8 966,125.2 967,120.9 968,123.5 969,124.0 970,117.7 971,121.3 972,121.6 973,126.7 974,121.7 975,129.0 976,120.5 977,127.7 978,124.9 979,124.7 980,123.0 981,122.1 982,121.1 983,124.6 984,122.5 985,124.2 986,125.4 987,125.1 988,128.7 989,123.4 990,128.4 991,127.4 992,127.4 993,124.3 994,125.9 995,127.9 996,127.3 997,128.1 998,125.1 999,130.1 1000,125.2 1001,126.3 1002,124.0 1003,125.2 1004,127.4 1005,125.9 1006,128.2 1007,128.1 1008,128.5 1009,127.0 1010,129.1 1011,128.7 1012,131.7 1013,124.6 1014,128.4 1015,124.1 1016,126.1 1017,125.8 1018,130.2 1019,126.4 1020,125.2 1021,124.2 1022,122.3 1023,127.8 1024,128.0 1025,125.8 1026,126.0 1027,125.9 1028,125.1 1029,123.5 1030,122.3 1031,122.1 1032,121.7 1033,125.9 1034,122.6 1035,125.4 1036,123.2 1037,121.2 1038,126.4 1039,124.1 1040,125.2 1041,123.2 1042,126.0 1043,121.0 1044,124.4 1045,121.7 1046,120.7 1047,120.6 1048,122.1 1049,121.9 1050,123.9 1051,122.7 1052,121.4 1053,125.3 1054,121.4 1055,127.9 1056,125.0 1057,122.6 1058,120.7 1059,124.2 1060,126.5 1061,125.1 1062,129.8 1063,128.7 1064,130.4 1065,126.7 1066,126.4 1067,126.0 1068,124.1 1069,124.8 1070,125.5 1071,123.3 1072,125.2 1073,125.5 1074,122.7 1075,127.2 1076,127.7 1077,125.2 1078,123.3 1079,126.2 1080,124.5 1081,123.5 1082,119.4 1083,119.1 1084,126.2 1085,121.6 1086,122.3 1087,120.8 1088,124.4 1089,119.6 1090,122.5 1091,120.8 1092,122.1 1093,123.1 1094,122.1 1095,123.5 1096,123.6 1097,124.5 1098,125.9 1099,125.2 1100,123.6 1101,129.6 1102,125.7 1103,129.0 1104,124.9 1105,127.3 1106,125.6 1107,125.0 1108,124.1 1109,129.5 1110,121.2 1111,124.5 1112,125.1 1113,128.3 1114,123.5 1115,125.3 1116,127.9 1117,126.8 1118,125.3 1119,130.5 1120,129.7 1121,130.9 1122,127.8 1123,129.4 1124,129.5 1125,128.6 1126,125.2 1127,128.1 1128,127.7 1129,126.6 1130,129.4 1131,128.9 1132,129.2 1133,126.8 1134,126.6"/><polyline points="472,151.6 473,151.7 474,151.7 475,151.3 476,151.9 477,151.9 478,152.1 479,153.0 480,152.7 481,152.9 482,152.7 483,152.7 484,152.6 485,151.5 486,152.1 487,151.9 488,152.3 489,152.2 490,152.2 491,152.3 492,152.5 493,151.7 494,152.8 495,152.2 496,152.3 497,151.8 498,151.9 499,150.6 500,152.4 501,150.8 502,151.3 503,151.6 504,152.2 505,151.3 506,151.3 507,152.1 508,151.5 509,151.4 510,151.1 511,151.6 512,152.2 513,151.1 514,152.1 515,151.5 516,151.6 517,152.2 518,152.3 519,151.4 520,153.1 521,151.4 522,151.8 523,152.0 524,151.7 525,151.8 526,152.7 527,152.4 528,151.9 529,151.8 530,151.6 531,152.4 532,152.1 533,153.0 534,152.0 535,153.3 536,151.2 537,152.8 538,152.1 539,153.2 540,151.5 541,149.6 542,148.8 543,150.0 544,152.2 545,152.1 546,151.2 547,151.6 548,150.7 549,152.6 550,151.8 551,151.5 552,152.1 553,151.6 554,151.5 555,152.6 556,152.4 557,152.5 558,151.1 559,152.5 560,151.3 561,152.3 562,152.1 563,151.7 564,152.7 565,152.0 566,151.6 567,151.8 568,152.2 569,151.1 570,151.9 571,150.8 572,151.8 573,151.9 574,151.1 575,153.4 576,150.9 577,151.8 578,152.2 579,151.1 580,152.8 581,151.5 582,151.9 583,151.2 584,151.8 585,152.0 586,151.4 587,151.2 588,152.6 589,151.7 590,151.3 591,151.9 592,151.8 593,152.0 594,151.5 595,152.2 596,152.5 597,152.9 598,151.6 599,151.3 600,151.5 601,153.0 602,151.9 603,152.5 604,152.4 605,151.7 606,152.0 607,152.7 608,151.7 609,151.4 610,152.3 611,151.8 612,152.1 613,151.9 614,152.5 615,151.0 616,151.4 617,152.2 618,152.1 619,152.2 620,151.1 621,152.5 622,151.6 623,150.4 624,152.5 625,151.4 626,151.6 627,152.1 628,153.3 629,152.1 630,152.2 631,150.4 632,151.6 633,149.0 634,147.6 635,151.2 636,152.9 637,152.0 638,151.7 639,151.3 640,152.3 641,151.0 642,151.9 643,152.9 644,152.6 645,151.8 646,153.6 647,152.5 648,152.7 649,152.6 650,151.2 651,151.1 652,153.5 653,152.5 654,152.2 655,152.6 656,152.3 657,151.8 658,152.7 659,151.1 660,152.1 661,151.1 662,151.6 663,152.3 664,151.6 665,151.4 666,152.0 667,152.5 668,152.1 669,152.4 670,153.3 671,152.1 672,151.3 673,151.6 674,151.3 675,152.1 676,152.3 677,152.7 678,151.8 679,152.2 680,150.1 681,151.7 682,152.0 683,150.7 684,150.4 685,151.8 686,151.3 687,150.8 688,151.7 689,152.1 690,151.7 691,150.5 692,149.9 693,151.0 694,150.1 695,150.6 696,150.7 697,151.7 698,152.9 699,151.5 700,151.0 701,151.8 702,151.5 703,151.0 704,150.8 705,151.6 706,151.6 707,151.4 708,151.5 709,151.9 710,151.2 711,151.9 712,151.5 713,152.9 714,152.4 715,153.2 716,151.7 717,152.8 718,151.7 719,152.7 720,152.2 721,150.6 722,148.4 723,151.3 724,153.0 725,152.4 726,151.1 727,151.6 728,151.6 729,152.0 730,151.9 731,152.2 732,152.0 733,152.9 734,152.6 735,151.5 736,150.7 737,151.7 738,151.9 739,151.2 740,151.4 741,151.2 742,151.2 743,151.5 744,151.8 745,150.9 746,150.4 747,151.5 748,150.2 749,150.8 750,150.3 751,152.2 752,152.3 753,151.8 754,152.5 755,151.7 756,152.7 757,150.7 758,151.9 759,151.8 760,150.9 761,151.2 762,151.7 763,150.9 764,151.4 765,150.7 766,151.4 767,150.3 768,151.5 769,152.0 770,151.4 771,151.3 772,151.9 773,152.2 774,151.3 775,152.4 776,150.7 777,151.1 778,151.5 779,150.9 780,150.9 781,151.5 782,150.9 783,151.7 784,150.9 785,151.4 786,150.4 787,152.2 788,151.0 789,152.4 790,152.0 791,151.3 792,151.8 793,151.6 794,151.3 795,150.8 796,152.2 797,151.1 798,152.0 799,151.3 800,151.7 801,152.1 802,152.4 803,151.3 804,152.8 805,151.8 806,150.1 807,147.8 808,150.7 809,153.0 810,151.6 811,151.1 812,151.5 813,151.4 814,150.8 815,151.8 816,151.3 817,151.9 818,152.4 819,151.2 820,151.1 821,150.2 822,149.9 823,152.5 824,151.2 825,151.9 826,151.0 827,152.6 828,151.8 829,152.2 830,151.6 831,152.0 832,152.0 833,151.3 834,151.2 835,151.8 836,151.6 837,151.9 838,150.3 839,151.7 840,151.0 841,152.3 842,152.0 843,153.2 844,153.5 845,152.7 846,152.1 847,151.3 848,151.9 849,151.2 850,152.3 851,150.8 852,151.9 853,151.6 854,152.0 855,152.5 856,152.4 857,152.4 858,151.7 859,152.6 860,151.1 861,151.6 862,151.5 863,151.9 864,151.1 865,152.2 866,151.9 867,152.3 868,151.2 869,152.4 870,151.9 871,150.6 872,151.5 873,151.5 874,151.7 875,150.4 876,151.3 877,152.2 878,151.6 879,152.0 880,150.8 881,151.0 882,151.1 883,151.7 884,151.0 885,151.2 886,151.1 887,151.1 888,150.9 889,149.6 890,147.7 891,151.9 892,153.0 893,151.6 894,151.5 895,151.4 896,151.0 897,151.5 898,151.4 899,149.5 900,150.6 901,151.6 902,151.2 903,152.5 904,151.7 905,152.1 906,152.6 907,152.3 908,152.2 909,152.5 910,152.9 911,151.4 912,151.9 913,151.6 914,151.8 915,151.8 916,152.2 917,151.0 918,152.0 919,152.2 920,151.2 921,151.9 922,150.0 923,152.2 924,151.8 925,153.0 926,151.6 927,152.1 928,151.5 929,151.8 930,152.1 931,151.2 932,151.7 933,153.0 934,152.4 935,153.0 936,151.5 937,151.9 938,152.8 939,152.8 940,152.2 941,152.4 942,151.7 943,151.8 944,151.5 945,151.9 946,152.6 947,152.0 948,151.8 949,152.4 950,152.3 951,152.7 952,152.5 953,152.4 954,151.3 955,151.4 956,152.5 957,151.5 958,152.8 959,152.1 960,151.8 961,151.2 962,152.3 963,152.1 964,152.9 965,151.4 966,151.7 967,150.7 968,151.9 969,151.0 970,149.3 971,147.6 972,151.5 973,153.3 974,151.5 975,151.8 976,151.2 977,152.6 978,151.4 979,151.7 980,150.8 981,152.7 982,150.9 983,152.3 984,151.2 985,151.3 986,151.8 987,151.7 988,151.6 989,152.3 990,151.1 991,151.2 992,151.1 993,151.0 994,151.3 995,151.3 996,152.0 997,151.3 998,152.9 999,152.6 1000,150.9 1001,151.0 1002,151.4 1003,152.2 1004,150.6 1005,151.8 1006,150.9 1007,151.6 1008,151.9 1009,151.8 1010,152.1 1011,152.5 1012,152.6 1013,152.0 1014,152.3 1015,152.0 1016,152.3 1017,152.5 1018,151.3 1019,151.9 1020,151.3 1021,151.0 1022,151.7 1023,151.1 1024,151.5 1025,151.5 1026,151.9 1027,151.4 1028,151.8 1029,152.5 1030,151.7 1031,151.8 1032,151.9 1033,151.9 1034,150.9 1035,152.0 1036,152.2 1037,153.5 1038,152.8 1039,151.8 1040,152.4 1041,152.2 1042,152.2 1043,151.6 1044,152.8 1045,151.5 1046,153.8 1047,153.1 1048,152.4 1049,152.5 1050,151.4 1051,151.7 1052,151.7 1053,151.7 1054,152.1 1055,151.7 1056,151.9 1057,150.1 1058,147.6 1059,151.1 1060,151.9 1061,151.5 1062,152.3 1063,151.5 1064,151.3 1065,152.2 1066,153.0 1067,153.1 1068,151.5 1069,152.6 1070,151.2 1071,153.7 1072,151.2 1073,152.5 1074,151.7 1075,151.6 1076,152.0 1077,151.6 1078,151.9 1079,151.9 1080,152.2 1081,150.6 1082,152.2 1083,153.3 1084,151.3 1085,152.6 1086,151.7 1087,151.0 1088,151.6 1089,151.5 1090,152.8 1091,151.7 1092,151.9 1093,152.1 1094,151.7 1095,151.5 1096,151.9 1097,150.7 1098,151.7 1099,151.6 1100,150.7 1101,152.0 1102,151.8 1103,152.5 1104,152.2 1105,152.6 1106,151.9 1107,153.4 1108,152.5 1109,152.9 1110,152.2 1111,152.5 1112,153.1 1113,151.4 1114,152.1 1115,150.9 1116,152.7 1117,152.4 1118,151.1 1119,151.5 1120,152.9 1121,151.4 1122,151.7 1123,152.3 1124,151.4 1125,151.6 1126,152.1 1127,151.8 1128,151.3 1129,152.5 1130,150.7 1131,152.4 1132,151.5 1133,151.7 1134,151.6"/><polyline points="472,179.0 473,177.3 474,184.5 475,178.8 476,179.6 477,178.9 478,176.0 479,174.9 480,177.5 481,177.9 482,177.6 483,177.8 484,177.5 485,178.7 486,180.3 487,181.5 488,178.5 489,178.8 490,183.4 491,183.3 492,181.8 493,183.0 494,182.6 495,182.3 496,184.0 497,182.0 498,179.8 499,181.5 500,179.9 501,179.7 502,178.4 503,178.7 504,180.3 505,175.9 506,181.7 507,178.6 508,181.3 509,175.8 510,181.6 511,177.8 512,181.4 513,179.0 514,177.1 515,177.4 516,174.3 517,180.8 518,172.7 519,179.1 520,178.7 521,177.7 522,175.4 523,181.6 524,180.6 525,179.8 526,178.1 527,176.8 528,179.1 529,177.1 530,178.7 531,179.2 532,178.2 533,180.1 534,177.9 535,179.7 536,182.1 537,176.0 538,180.0 539,180.2 540,182.4 541,173.2 542,172.2 543,179.5 544,184.0 545,184.7 546,182.9 547,184.9 548,182.8 549,184.4 550,185.1 551,183.4 552,177.7 553,179.8 554,179.4 555,179.2 556,182.9 557,182.1 558,179.9 559,181.6 560,186.6 561,184.0 562,183.6 563,183.4 564,182.0 565,184.1 566,181.2 567,179.7 568,181.9 569,182.2 570,178.1 571,183.1 572,180.1 573,179.8 574,177.5 575,181.6 576,179.0 577,179.0 578,180.5 579,178.7 580,177.2 581,181.6 582,177.3 583,181.2 584,180.4 585,177.4 586,177.6 587,177.1 588,176.6 589,182.6 590,175.7 591,177.9 592,179.1 593,175.2 594,180.5 595,179.6 596,185.4 597,183.9 598,183.4 599,182.0 600,180.1 601,179.6 602,180.0 603,182.0 604,178.9 605,181.4 606,179.0 607,182.3 608,184.5 609,181.2 610,181.1 611,181.8 612,181.1 613,180.2 614,176.9 615,177.6 616,179.8 617,178.3 618,178.5 619,181.0 620,181.0 621,179.7 622,179.0 623,179.2 624,182.8 625,179.3 626,178.5 627,181.7 628,177.8 629,180.3 630,178.9 631,176.9 632,176.8 633,176.2 634,170.3 635,174.3 636,179.6 637,180.6 638,176.7 639,183.5 640,180.2 641,178.7 642,184.0 643,184.4 644,185.8 645,179.1 646,184.4 647,180.1 648,184.3 649,182.1 650,182.3 651,179.3 652,182.1 653,183.5 654,182.8 655,183.2 656,180.9 657,182.8 658,180.4 659,174.4 660,177.8 661,183.5 662,179.9 663,175.5 664,175.5 665,175.8 666,173.9 667,175.4 668,180.4 669,173.3 670,174.7 671,172.8 672,177.0 673,172.3 674,177.4 675,175.0 676,179.5 677,175.9 678,174.3 679,173.3 680,176.6 681,176.7 682,177.3 683,176.4 684,177.5 685,174.2 686,173.8 687,178.4 688,181.4 689,179.7 690,181.2 691,178.9 692,179.3 693,177.2 694,173.8 695,178.8 696,175.5 697,177.5 698,178.8 699,180.2 700,180.8 701,179.9 702,175.5 703,176.9 704,174.4 705,169.7 706,178.4 707,173.4 708,175.0 709,172.7 710,178.0 711,178.3 712,175.8 713,176.0 714,176.5 715,177.4 716,175.7 717,180.0 718,176.6 719,172.8 720,175.3 721,169.6 722,166.0 723,175.1 724,176.4 725,174.3 726,180.1 727,177.5 728,179.1 729,173.5 730,181.7 731,178.4 732,177.8 733,181.8 734,178.5 735,182.2 736,179.9 737,181.6 738,180.2 739,182.5 740,180.3 741,180.3 742,177.3 743,179.9 744,178.3 745,174.8 746,178.6 747,178.2 748,177.7 749,178.0 750,176.0 751,179.3 752,178.1 753,177.6 754,179.9 755,179.4 756,179.7 757,175.9 758,181.2 759,174.6 760,177.7 761,181.1 762,183.4 763,174.0 764,178.2 765,175.9 766,177.7 767,172.0 768,178.5 769,183.1 770,181.2 771,177.4 772,180.3 773,177.3 774,175.7 775,177.5 776,177.2 777,176.1 778,179.4 779,178.1 780,175.5 781,181.5 782,174.1 783,178.3 784,178.3 785,178.7 786,177.0 787,179.4 788,181.3 789,179.2 790,177.9 791,175.3 792,176.7 793,178.6 794,177.6 795,176.5 796,179.5 797,179.6 798,175.6 799,176.7 800,183.7 801,180.1 802,184.1 803,181.7 804,181.5 805,177.4 806,175.1 807,172.4 808,178.9 809,188.0 810,181.0 811,182.6 812,178.8 813,181.6 814,185.7 815,180.0 816,180.8 817,185.7 818,180.5 819,179.2 820,181.4 821,182.1 822,185.3 823,182.0 824,182.5 825,180.6 826,184.4 827,183.3 828,185.0 829,181.7 830,185.6 831,178.7 832,182.9 833,179.0 834,179.2 835,176.8 836,183.3 837,176.1 838,177.3 839,174.5 840,175.0 841,178.0 842,176.9 843,177.8 844,181.6 845,173.4 846,181.1 847,176.7 848,181.6 849,179.2 850,180.5 851,180.9 852,178.2 853,178.3 854,174.1 855,181.3 856,179.5 857,176.8 858,174.6 859,180.9 860,175.8 861,178.6 862,175.3 863,179.4 864,171.3 865,176.1 866,179.3 867,177.0 868,180.1 869,184.5 870,179.6 871,183.5 872,182.7 873,181.2 874,177.4 875,180.4 876,182.0 877,183.3 878,175.6 879,181.6 880,184.0 881,178.8 882,183.1 883,182.7 884,181.1 885,181.0 886,177.8 887,181.1 888,178.3 889,176.6 890,173.8 891,180.0 892,186.1 893,178.3 894,183.0 895,177.4 896,179.1 897,179.1 898,185.3 899,178.8 900,182.8 901,180.3 902,178.2 903,187.0 904,175.5 905,178.8 906,182.8 907,178.6 908,179.8 909,181.3 910,178.4 911,180.7 912,174.6 913,182.5 914,175.5 915,180.3 916,177.2 917,180.1 918,179.8 919,180.6 920,177.4 921,180.7 922,175.2 923,178.9 924,173.7 925,173.8 926,178.6 927,169.2 928,179.7 929,173.1 930,176.6 931,174.9 932,173.6 933,176.9 934,179.2 935,176.2 936,173.4 937,177.6 938,174.3 939,178.4 940,178.2 941,182.1 942,176.0 943,181.6 944,177.2 945,175.9 946,183.6 947,179.2 948,177.2 949,184.1 950,177.7 951,180.6 952,178.6 953,178.3 954,181.2 955,179.9 956,177.0 957,180.5 958,179.3 959,182.4 960,181.1 961,177.5 962,178.2 963,182.7 964,181.6 965,179.3 966,180.3 967,182.6 968,182.3 969,175.1 970,175.1 971,172.9 972,173.4 973,184.2 974,177.4 975,181.8 976,178.6 977,177.9 978,179.7 979,178.5 980,179.9 981,180.3 982,176.7 983,181.4 984,181.5 985,179.8 986,179.8 987,180.6 988,175.3 989,179.4 990,184.2 991,181.1 992,176.6 993,176.5 994,175.6 995,179.2 996,176.5 997,176.5 998,178.0 999,177.3 1000,179.8 1001,179.0 1002,179.4 1003,173.6 1004,180.9 1005,177.6 1006,178.3 1007,172.0 1008,181.2 1009,175.3 1010,183.1 1011,181.1 1012,178.8 1013,178.0 1014,181.2 1015,176.4 1016,177.8 1017,178.3 1018,178.8 1019,179.7 1020,175.7 1021,180.5 1022,178.8 1023,178.3 1024,175.1 1025,175.5 1026,177.2 1027,178.0 1028,179.0 1029,173.3 1030,176.1 1031,176.8 1032,180.5 1033,175.4 1034,177.4 1035,179.7 1036,180.2 1037,178.5 1038,176.2 1039,178.6 1040,175.0 1041,180.1 1042,179.1 1043,181.8 1044,180.6 1045,179.4 1046,180.7 1047,186.4 1048,175.4 1049,186.6 1050,177.4 1051,179.0 1052,176.9 1053,180.9 1054,181.2 1055,179.7 1056,179.4 1057,174.3 1058,170.8 1059,177.9 1060,179.2 1061,177.5 1062,179.2 1063,174.5 1064,180.7 1065,177.8 1066,177.6 1067,176.4 1068,179.4 1069,177.6 1070,179.5 1071,177.2 1072,177.1 1073,179.1 1074,173.6 1075,175.9 1076,170.5 1077,177.0 1078,180.2 1079,171.0 1080,175.6 1081,176.6 1082,179.8 1083,178.5 1084,176.6 1085,181.4 1086,176.1 1087,182.6 1088,181.4 1089,175.9 1090,175.3 1091,177.3 1092,175.7 1093,176.6 1094,175.8 1095,175.3 1096,179.1 1097,172.0 1098,182.0 1099,175.7 1100,177.5 1101,178.1 1102,180.0 1103,175.4 1104,177.9 1105,177.8 1106,171.2 1107,177.4 1108,174.5 1109,174.9 1110,173.6 1111,176.5 1112,176.8 1113,174.4 1114,178.9 1115,173.1 1116,175.9 1117,180.6 1118,177.0 1119,175.1 1120,174.0 1121,174.5 1122,172.3 1123,169.6 1124,170.4 1125,179.4 1126,172.3 1127,173.2 1128,170.4 1129,167.3 1130,173.3 1131,177.0 1132,170.5 1133,178.4 1134,175.4"/><polyline points="472,204.4 473,205.4 474,204.7 475,205.6 476,201.9 477,205.9 478,204.7 479,207.6 480,209.3 481,206.8 482,207.4 483,209.8 484,202.7 485,209.6 486,206.6 487,207.0 488,205.0 489,203.5 490,204.7 491,205.1 492,201.1 493,198.3 494,204.8 495,205.8 496,207.8 497,203.7 498,205.3 499,205.3 500,203.0 501,204.4 502,202.4 503,202.7 504,205.7 505,205.2 506,201.5 507,203.0 508,206.4 509,209.0 510,201.0 511,208.5 512,205.5 513,206.1 514,206.8 515,210.1 516,207.3 517,212.7 518,202.9 519,208.9 520,203.0 521,203.7 522,205.0 523,206.4 524,204.7 525,208.3 526,204.2 527,209.0 528,203.7 529,208.5 530,207.6 531,208.3 532,208.1 533,206.9 534,200.4 535,203.6 536,206.2 537,205.0 538,206.4 539,204.2 540,209.4 541,203.5 542,204.4 543,204.3 544,208.1 545,210.0 546,204.9 547,211.8 548,211.7 549,209.3 550,211.7 551,207.1 552,206.5 553,206.8 554,207.4 555,209.0 556,207.7 557,206.2 558,205.7 559,204.1 560,207.8 561,203.9 562,201.0 563,202.9 564,202.7 565,205.1 566,202.0 567,204.0 568,205.1 569,205.2 570,204.5 571,207.0 572,207.7 573,210.7 574,207.1 575,205.1 576,207.2 577,204.7 578,207.2 579,204.4 580,202.8 581,204.8 582,200.2 583,201.8 584,201.6 585,202.8 586,199.7 587,206.1 588,209.6 589,202.8 590,207.9 591,201.3 592,206.9 593,204.5 594,205.9 595,206.6 596,202.9 597,206.0 598,207.4 599,204.3 600,208.3 601,205.3 602,202.9 603,207.8 604,200.9 605,205.2 606,206.1 607,205.3 608,206.2 609,206.0 610,204.8 611,206.6 612,206.6 613,203.6 614,207.9 615,203.5 616,203.3 617,203.2 618,206.6 619,200.0 620,204.3 621,203.2 622,203.6 623,204.9 624,203.8 625,203.4 626,206.6 627,207.4 628,206.5 629,209.1 630,207.3 631,204.8 632,209.7 633,200.4 634,199.6 635,202.4 636,203.5 637,206.7 638,202.9 639,202.7 640,204.0 641,203.4 642,208.1 643,203.8 644,209.1 645,208.0 646,207.3 647,206.8 648,205.7 649,201.2 650,207.5 651,205.0 652,203.2 653,208.3 654,206.1 655,202.8 656,206.0 657,203.4 658,200.3 659,205.3 660,205.7 661,205.3 662,202.8 663,207.7 664,205.9 665,204.5 666,206.0 667,206.1 668,204.6 669,207.7 670,204.3 671,208.5 672,210.2 673,205.4 674,205.6 675,207.6 676,207.2 677,206.7 678,205.4 679,206.5 680,210.3 681,207.0 682,209.1 683,214.2 684,211.4 685,213.4 686,207.1 687,209.1 688,211.0 689,207.4 690,209.2 691,208.8 692,212.2 693,209.5 694,211.5 695,208.0 696,209.2 697,204.8 698,205.9 699,203.2 700,205.2 701,201.5 702,200.9 703,204.2 704,207.2 705,205.1 706,208.7 707,198.8 708,204.9 709,202.2 710,201.9 711,198.5 712,205.9 713,201.5 714,205.4 715,205.5 716,204.5 717,202.7 718,206.5 719,202.3 720,206.1 721,203.5 722,197.0 723,201.3 724,206.0 725,200.1 726,202.8 727,204.6 728,205.1 729,205.7 730,203.3 731,206.8 732,206.5 733,206.2 734,202.4 735,204.3 736,204.2 737,201.9 738,204.5 739,204.0 740,210.1 741,208.3 742,203.4 743,211.0 744,205.4 745,207.0 746,208.1 747,206.7 748,211.6 749,208.3 750,208.3 751,207.9 752,211.1 753,209.7 754,210.8 755,209.4 756,210.0 757,211.2 758,206.0 759,206.1 760,206.7 761,205.9 762,206.3 763,204.7 764,206.0 765,202.9 766,206.6 767,202.4 768,205.7 769,208.0 770,201.7 771,203.6 772,203.7 773,202.8 774,202.6 775,203.1 776,206.1 777,203.4 778,204.0 779,205.8 780,205.8 781,202.3 782,206.7 783,209.1 784,206.3 785,205.3 786,204.1 787,203.8 788,207.8 789,206.9 790,205.7 791,204.0 792,205.3 793,206.8 794,207.6 795,205.0 796,205.6 797,204.5 798,205.5 799,207.2 800,205.9 801,204.9 802,212.5 803,207.9 804,210.0 805,205.2 806,205.4 807,203.9 808,207.3 809,211.5 810,207.2 811,206.1 812,205.3 813,204.7 814,205.5 815,207.2 816,205.8 817,205.7 818,207.9 819,203.8 820,205.8 821,209.9 822,203.1 823,210.2 824,206.1 825,204.1 826,206.0 827,204.6 828,206.4 829,204.2 830,205.5 831,206.0 832,202.9 833,203.7 834,208.4 835,205.5 836,205.0 837,204.5 838,208.2 839,205.1 840,204.9 841,206.0 842,202.2 843,209.9 844,207.1 845,205.6 846,208.6 847,208.8 848,207.7 849,207.8 850,206.2 851,204.9 852,201.3 853,205.2 854,199.4 855,203.4 856,203.9 857,205.4 858,202.7 859,203.4 860,209.6 861,207.5 862,208.3 863,203.3 864,204.4 865,206.9 866,205.7 867,204.0 868,205.5 869,203.7 870,205.2 871,206.0 872,203.6 873,205.4 874,204.9 875,206.1 876,205.4 877,206.5 878,202.7 879,203.4 880,203.3 881,202.8 882,203.8 883,206.6 884,206.7 885,202.3 886,206.5 887,206.5 888,209.4 889,200.7 890,202.9 891,204.7 892,206.4 893,208.1 894,204.5 895,210.6 896,203.0 897,207.0 898,205.3 899,204.5 900,206.0 901,206.8 902,206.9 903,204.6 904,207.8 905,206.8 906,204.9 907,208.8 908,207.9 909,205.5 910,203.3 911,207.0 912,206.7 913,209.7 914,209.3 915,207.9 916,209.3 917,210.5 918,204.9 919,208.3 920,208.1 921,206.3 922,209.0 923,206.7 924,206.7 925,208.0 926,203.4 927,204.0 928,207.6 929,204.0 930,204.4 931,206.3 932,201.8 933,210.0 934,209.3 935,206.0 936,207.6 937,210.2 938,207.0 939,203.7 940,205.4 941,207.0 942,208.0 943,208.4 944,208.6 945,209.8 946,210.9 947,207.3 948,203.7 949,205.4 950,209.7 951,203.4 952,205.4 953,206.2 954,202.5 955,201.9 956,198.4 957,205.8 958,207.5 959,202.9 960,203.5 961,208.7 962,208.5 963,202.0 964,206.4 965,202.2 966,206.7 967,203.7 968,205.9 969,201.8 970,204.5 971,195.7 972,201.8 973,205.7 974,201.2 975,203.7 976,205.1 977,202.9 978,206.7 979,207.6 980,209.8 981,207.1 982,200.8 983,206.2 984,203.4 985,207.7 986,205.1 987,207.7 988,206.7 989,204.4 990,203.6 991,203.9 992,205.6 993,206.7 994,206.9 995,207.3 996,206.0 997,204.0 998,207.0 999,207.4 1000,206.3 1001,204.3 1002,207.5 1003,205.2 1004,202.1 1005,208.5 1006,204.3 1007,206.7 1008,202.8 1009,204.1 1010,206.5 1011,205.9 1012,207.3 1013,205.4 1014,206.0 1015,207.5 1016,205.8 1017,206.4 1018,204.3 1019,203.9 1020,206.7 1021,208.1 1022,208.8 1023,209.4 1024,206.8 1025,208.7 1026,208.0 1027,209.0 1028,207.3 1029,208.5 1030,206.2 1031,204.5 1032,205.6 1033,205.7 1034,205.2 1035,209.7 1036,204.3 1037,212.5 1038,206.6 1039,205.8 1040,206.2 1041,204.5 1042,202.5 1043,197.6 1044,204.2 1045,202.6 1046,202.0 1047,203.6 1048,201.6 1049,205.4 1050,200.3 1051,204.8 1052,204.3 1053,202.9 1054,204.3 1055,198.6 1056,201.4 1057,202.4 1058,200.5 1059,201.3 1060,208.1 1061,208.8 1062,207.1 1063,208.4 1064,204.9 1065,209.2 1066,208.6 1067,209.3 1068,201.3 1069,208.8 1070,202.3 1071,203.1 1072,203.7 1073,204.9 1074,202.5 1075,202.6 1076,205.6 1077,204.1 1078,203.4 1079,206.2 1080,207.0 1081,199.5 1082,207.1 1083,209.8 1084,209.1 1085,211.8 1086,207.8 1087,205.2 1088,206.1 1089,207.2 1090,208.5 1091,204.9 1092,206.7 1093,205.9 1094,209.5 1095,208.0 1096,213.8 1097,207.5 1098,206.0 1099,208.8 1100,209.2 1101,208.6 1102,206.3 1103,209.0 1104,207.0 1105,207.8 1106,205.0 1107,206.6 1108,201.7 1109,208.5 1110,205.2 1111,208.0 1112,207.5 1113,210.6 1114,207.2 1115,210.2 1116,206.2 1117,206.1 1118,208.4 1119,204.1 1120,203.2 1121,207.6 1122,208.5 1123,206.1 1124,207.9 1125,210.8 1126,206.0 1127,207.3 1128,205.7 1129,205.8 1130,199.7 1131,203.4 1132,201.9 1133,204.3 1134,199.1"/><polyline points="472,233.2 473,232.7 474,231.8 475,231.4 476,232.4 477,231.5 478,232.3 479,232.2 480,233.0 481,231.5 482,232.3 483,233.0 484,232.6 485,231.9 486,232.2 487,232.8 488,232.5 489,232.3 490,233.0 491,232.4 492,233.7 493,232.0 494,233.2 495,233.8 496,231.9 497,232.4 498,233.3 499,233.2 500,232.6 501,232.3 502,231.2 503,231.0 504,232.0 505,233.0 506,232.3 507,233.1 508,232.8 509,232.6 510,232.1 511,231.3 512,233.1 513,232.6 514,233.0 515,233.4 516,233.6 517,232.3 518,233.8 519,233.2 520,233.7 521,232.8 522,231.8 523,232.8 524,232.0 525,232.6 526,232.6 527,233.6 528,231.1 529,231.9 530,231.6 531,234.0 532,232.5 533,233.3 534,231.7 535,232.2 536,232.7 537,231.8 538,232.9 539,232.9 540,233.0 541,232.4 542,231.4 543,232.5 544,232.6 545,232.4 546,233.9 547,232.5 548,233.0 549,234.1 550,232.9 551,232.9 552,231.7 553,232.6 554,231.6 555,233.3 556,232.1 557,233.2 558,232.2 559,232.6 560,232.2 561,232.9 562,232.9 563,231.6 564,233.8 565,233.6 566,233.0 567,233.2 568,233.6 569,233.7 570,234.0 571,233.5 572,233.9 573,233.6 574,232.7 575,233.9 576,232.8 577,234.6 578,234.1 579,233.4 580,232.3 581,233.3 582,233.1 583,232.5 584,233.1 585,233.0 586,234.0 587,232.9 588,233.7 589,232.3 590,233.1 591,233.3 592,232.8 593,232.7 594,233.4 595,231.3 596,232.6 597,231.5 598,233.0 599,231.7 600,232.7 601,232.7 602,231.5 603,232.4 604,232.8 605,231.4 606,232.5 607,231.4 608,232.2 609,233.7 610,232.4 611,231.4 612,230.7 613,231.8 614,232.4 615,232.6 616,232.4 617,231.8 618,232.9 619,232.2 620,232.8 621,232.4 622,231.8 623,232.4 624,231.5 625,232.2 626,232.6 627,233.3 628,232.6 629,232.8 630,232.4 631,231.7 632,233.0 633,231.7 634,231.7 635,231.8 636,233.1 637,233.6 638,232.3 639,234.2 640,233.1 641,233.3 642,233.6 643,233.6 644,233.6 645,233.2 646,233.5 647,234.3 648,233.7 649,234.4 650,232.9 651,233.7 652,232.1 653,232.2 654,232.3 655,232.2 656,234.2 657,231.8 658,233.0 659,231.8 660,232.2 661,233.6 662,233.2 663,232.6 664,234.3 665,232.4 666,231.7 667,233.8 668,233.0 669,232.8 670,233.5 671,233.1 672,232.4 673,231.5 674,233.3 675,233.1 676,233.2 677,234.2 678,233.2 679,233.2 680,232.7 681,232.4 682,232.6 683,231.2 684,231.7 685,231.0 686,231.4 687,231.9 688,231.5 689,232.8 690,231.6 691,233.1 692,233.1 693,232.8 694,233.3 695,233.2 696,233.5 697,232.6 698,234.3 699,234.3 700,233.3 701,233.6 702,232.9 703,234.7 704,233.2 705,233.3 706,233.8 707,232.1 708,232.7 709,232.6 710,233.7 711,232.4 712,234.2 713,233.3 714,234.2 715,233.9 716,233.9 717,233.4 718,233.2 719,234.1 720,233.3 721,232.7 722,231.4 723,233.5 724,233.9 725,234.2 726,233.6 727,233.3 728,234.4 729,233.1 730,232.8 731,233.4 732,234.3 733,233.0 734,233.8 735,234.8 736,234.0 737,233.5 738,233.7 739,232.7 740,232.8 741,232.7 742,231.8 743,232.2 744,231.9 745,233.2 746,233.1 747,232.7 748,232.3 749,231.7 750,232.9 751,230.9 752,233.3 753,231.9 754,232.5 755,233.3 756,232.2 757,233.0 758,232.2 759,231.6 760,232.2 761,231.8 762,233.0 763,231.5 764,232.4 765,232.0 766,233.3 767,233.1 768,233.0 769,233.2 770,232.2 771,233.0 772,232.0 773,233.5 774,233.4 775,233.3 776,233.2 777,231.5 778,232.6 779,231.8 780,233.0 781,232.9 782,232.9 783,234.3 784,233.0 785,232.7 786,233.1 787,232.9 788,234.2 789,232.2 790,232.9 791,232.4 792,233.2 793,232.3 794,233.5 795,233.2 796,232.9 797,233.8 798,234.2 799,234.4 800,233.7 801,232.9 802,233.9 803,233.3 804,231.5 805,231.5 806,231.0 807,230.0 808,232.2 809,232.7 810,232.4 811,231.5 812,233.2 813,231.8 814,232.7 815,232.9 816,232.5 817,231.5 818,231.8 819,232.1 820,232.2 821,232.4 822,231.3 823,230.6 824,230.7 825,232.4 826,230.9 827,232.3 828,231.6 829,231.5 830,232.4 831,232.4 832,231.3 833,232.3 834,232.0 835,231.7 836,233.2 837,232.4 838,232.0 839,232.9 840,230.4 841,232.3 842,231.0 843,230.6 844,231.3 845,230.2 846,230.8 847,231.8 848,230.4 849,231.4 850,231.4 851,231.9 852,231.9 853,231.1 854,230.9 855,230.7 856,231.1 857,230.4 858,232.5 859,231.7 860,232.8 861,231.7 862,232.3 863,232.5 864,231.3 865,232.8 866,231.7 867,233.1 868,231.5 869,231.7 870,233.1 871,231.7 872,232.9 873,231.4 874,232.7 875,232.9 876,232.1 877,232.3 878,232.6 879,231.1 880,231.9 881,231.7 882,233.0 883,233.0 884,233.6 885,233.0 886,233.1 887,232.7 888,232.6 889,230.9 890,229.2 891,232.3 892,233.3 893,231.6 894,233.0 895,233.5 896,232.8 897,232.8 898,232.6 899,231.5 900,233.7 901,232.4 902,234.1 903,233.1 904,232.3 905,234.1 906,232.1 907,232.5 908,232.2 909,232.5 910,231.8 911,234.4 912,232.7 913,233.5 914,232.9 915,232.7 916,232.3 917,232.6 918,232.4 919,233.0 920,233.5 921,232.1 922,232.9 923,232.1 924,233.6 925,232.8 926,233.2 927,232.8 928,231.9 929,232.6 930,232.7 931,232.3 932,234.0 933,233.3 934,233.0 935,234.2 936,233.6 937,234.7 938,233.7 939,233.3 940,232.8 941,233.1 942,233.4 943,233.2 944,233.2 945,233.6 946,233.0 947,233.5 948,235.0 949,232.2 950,235.2 951,234.5 952,233.9 953,234.4 954,232.9 955,234.7 956,234.0 957,233.7 958,233.8 959,233.9 960,233.9 961,234.3 962,233.4 963,234.3 964,234.5 965,234.9 966,234.2 967,234.9 968,235.0 969,234.8 970,232.0 971,233.2 972,233.0 973,234.9 974,233.8 975,233.4 976,233.7 977,233.5 978,233.1 979,231.7 980,232.9 981,231.4 982,232.3 983,231.9 984,233.0 985,233.2 986,232.7 987,232.5 988,233.1 989,231.9 990,233.3 991,232.7 992,233.7 993,232.5 994,233.3 995,233.1 996,233.4 997,233.3 998,232.2 999,232.5 1000,231.6 1001,231.8 1002,231.7 1003,231.5 1004,232.2 1005,232.4 1006,232.1 1007,232.2 1008,232.1 1009,232.0 1010,233.0 1011,232.1 1012,232.9 1013,232.8 1014,233.1 1015,232.0 1016,233.5 1017,232.4 1018,232.4 1019,232.3 1020,231.3 1021,232.2 1022,232.9 1023,231.5 1024,232.2 1025,232.5 1026,231.7 1027,232.1 1028,231.8 1029,233.0 1030,232.3 1031,232.2 1032,233.7 1033,233.3 1034,233.7 1035,232.2 1036,232.0 1037,232.0 1038,232.1 1039,233.2 1040,232.5 1041,232.4 1042,231.3 1043,233.4 1044,233.1 1045,233.6 1046,232.2 1047,232.5 1048,231.9 1049,232.3 1050,233.9 1051,233.6 1052,233.5 1053,231.9 1054,233.3 1055,234.1 1056,234.8 1057,233.4 1058,232.0 1059,232.9 1060,234.7 1061,234.5 1062,233.8 1063,234.8 1064,233.4 1065,234.7 1066,234.0 1067,232.8 1068,233.0 1069,233.3 1070,233.7 1071,233.2 1072,232.7 1073,233.4 1074,234.1 1075,234.3 1076,233.6 1077,234.7 1078,233.9 1079,233.8 1080,233.7 1081,234.2 1082,233.0 1083,232.9 1084,232.4 1085,234.0 1086,232.7 1087,232.8 1088,232.6 1089,233.5 1090,232.3 1091,233.9 1092,234.5 1093,234.4 1094,234.5 1095,233.8 1096,234.2 1097,233.8 1098,233.8 1099,232.8 1100,234.4 1101,233.1 1102,234.7 1103,234.8 1104,233.7 1105,231.8 1106,232.6 1107,233.7 1108,232.6 1109,233.3 1110,233.2 1111,232.9 1112,233.5 1113,232.1 1114,232.9 1115,232.2 1116,233.0 1117,232.8 1118,232.4 1119,233.2 1120,233.6 1121,232.2 1122,233.6 1123,232.6 1124,233.4 1125,232.8 1126,233.1 1127,233.2 1128,232.9 1129,231.8 1130,231.9 1131,231.7 1132,232.4 1133,230.2 1134,231.7"/><polyline points="472,258.6 473,259.1 474,263.5 475,262.3 476,259.5 477,260.0 478,263.7 479,258.6 480,259.9 481,259.9 482,258.8 483,258.7 484,259.5 485,258.8 486,259.6 487,264.4 488,263.0 489,257.1 490,260.2 491,257.9 492,261.5 493,261.2 494,263.3 495,260.4 496,261.0 497,262.1 498,265.9 499,260.8 500,263.0 501,256.2 502,258.7 503,260.6 504,257.2 505,257.4 506,259.1 507,257.3 508,258.0 509,260.4 510,254.3 511,261.5 512,260.4 513,260.4 514,263.4 515,259.2 516,258.0 517,258.1 518,254.3 519,257.8 520,261.4 521,258.9 522,258.9 523,257.1 524,260.6 525,257.5 526,253.9 527,258.3 528,256.7 529,260.2 530,254.6 531,259.0 532,261.8 533,258.0 534,262.0 535,259.5 536,258.9 537,262.8 538,260.8 539,258.2 540,255.4 541,254.5 542,248.0 543,260.8 544,261.5 545,256.8 546,255.0 547,260.6 548,259.6 549,255.1 550,258.9 551,255.2 552,263.9 553,260.2 554,263.5 555,258.6 556,262.3 557,259.6 558,259.3 559,257.2 560,259.1 561,256.6 562,258.5 563,255.9 564,259.9 565,258.2 566,257.5 567,258.8 568,253.8 569,264.2 570,259.7 571,264.7 572,259.6 573,263.7 574,259.5 575,262.1 576,259.7 577,263.7 578,261.8 579,258.4 580,263.7 581,259.5 582,259.1 583,259.2 584,261.9 585,261.4 586,264.4 587,263.5 588,262.8 589,259.9 590,262.2 591,264.6 592,262.3 593,261.6 594,259.2 595,263.6 596,261.1 597,265.7 598,262.8 599,258.6 600,263.0 601,259.6 602,261.6 603,260.2 604,261.3 605,256.8 606,257.1 607,259.5 608,259.0 609,261.7 610,259.4 611,258.6 612,261.1 613,259.6 614,260.4 615,257.3 616,258.3 617,259.9 618,254.4 619,256.2 620,256.7 621,256.4 622,261.9 623,257.0 624,258.4 625,253.8 626,255.7 627,257.6 628,259.6 629,258.0 630,260.5 631,259.3 632,258.3 633,253.2 634,246.3 635,256.9 636,261.9 637,258.9 638,257.1 639,261.4 640,258.9 641,260.3 642,259.9 643,261.3 644,257.1 645,257.8 646,256.7 647,260.7 648,256.9 649,260.0 650,260.0 651,256.0 652,255.9 653,254.2 654,260.1 655,254.1 656,258.9 657,255.6 658,262.2 659,259.0 660,257.8 661,261.3 662,258.7 663,259.6 664,256.4 665,264.2 666,260.2 667,262.1 668,260.1 669,259.8 670,260.0 671,259.8 672,262.2 673,259.0 674,258.7 675,261.6 676,259.0 677,263.3 678,256.5 679,258.5 680,257.4 681,256.2 682,255.9 683,258.9 684,257.3 685,259.3 686,260.2 687,258.2 688,256.5 689,257.7 690,259.0 691,259.5 692,257.8 693,259.0 694,262.0 695,260.6 696,259.9 697,258.9 698,259.2 699,258.7 700,258.9 701,257.9 702,262.8 703,257.7 704,260.6 705,258.1 706,259.8 707,258.0 708,263.3 709,259.6 710,258.5 711,261.1 712,259.8 713,259.3 714,256.9 715,258.8 716,261.6 717,260.7 718,259.5 719,261.7 720,258.7 721,255.8 722,248.2 723,256.7 724,262.6 725,260.5 726,261.5 727,259.0 728,258.7 729,261.5 730,263.0 731,260.1 732,261.4 733,262.9 734,263.0 735,260.9 736,258.4 737,257.4 738,260.2 739,259.9 740,262.5 741,256.6 742,258.6 743,256.5 744,257.5 745,261.2 746,261.3 747,260.3 748,259.9 749,260.3 750,258.4 751,258.1 752,261.4 753,260.4 754,258.3 755,258.6 756,260.2 757,260.3 758,257.8 759,261.6 760,258.3 761,259.2 762,253.7 763,256.3 764,261.4 765,259.5 766,261.2 767,262.3 768,259.7 769,259.6 770,260.4 771,260.1 772,261.5 773,258.0 774,264.0 775,257.9 776,263.3 777,260.8 778,258.8 779,258.4 780,253.7 781,260.3 782,258.8 783,257.3 784,254.3 785,258.0 786,259.8 787,257.2 788,263.0 789,260.2 790,260.6 791,261.6 792,263.1 793,260.7 794,264.3 795,256.9 796,258.5 797,257.2 798,259.9 799,261.2 800,259.2 801,260.0 802,258.2 803,254.3 804,251.0 805,254.0 806,257.0 807,246.3 808,260.2 809,260.2 810,259.4 811,262.8 812,263.4 813,263.6 814,262.6 815,263.5 816,260.5 817,263.7 818,261.0 819,261.3 820,256.1 821,262.5 822,259.5 823,255.9 824,262.8 825,257.6 826,261.1 827,257.8 828,256.3 829,259.7 830,258.7 831,261.9 832,257.2 833,260.7 834,259.1 835,262.8 836,262.0 837,263.0 838,259.6 839,261.6 840,259.2 841,256.7 842,259.1 843,259.9 844,259.0 845,257.4 846,256.5 847,258.7 848,256.6 849,265.6 850,260.8 851,259.3 852,260.6 853,260.1 854,267.4 855,262.2 856,262.0 857,263.7 858,261.6 859,261.3 860,261.8 861,259.9 862,261.8 863,261.3 864,260.6 865,262.6 866,263.0 867,260.5 868,262.0 869,256.4 870,259.1 871,257.8 872,262.0 873,260.3 874,258.2 875,256.5 876,262.1 877,261.0 878,261.9 879,258.0 880,263.3 881,262.6 882,263.2 883,263.2 884,263.5 885,259.8 886,261.2 887,262.9 888,260.6 889,257.8 890,252.8 891,261.5 892,267.0 893,258.5 894,266.7 895,260.4 896,261.3 897,265.1 898,262.8 899,262.7 900,262.6 901,265.2 902,263.1 903,259.5 904,257.4 905,258.7 906,258.5 907,259.2 908,262.3 909,257.9 910,258.7 911,261.5 912,255.6 913,257.9 914,255.6 915,261.9 916,256.1 917,256.5 918,255.6 919,255.6 920,255.0 921,258.2 922,252.2 923,258.1 924,256.2 925,258.0 926,257.8 927,258.0 928,255.5 929,257.6 930,256.0 931,262.0 932,254.7 933,258.8 934,257.5 935,256.5 936,253.8 937,254.6 938,255.6 939,258.0 940,259.5 941,259.1 942,260.3 943,254.2 944,257.3 945,258.2 946,262.8 947,262.9 948,257.8 949,261.1 950,259.5 951,261.9 952,255.9 953,260.0 954,258.9 955,256.8 956,255.8 957,256.4 958,258.6 959,258.9 960,262.8 961,259.4 962,259.6 963,258.4 964,260.1 965,257.9 966,253.4 967,259.6 968,257.9 969,263.7 970,255.4 971,252.1 972,258.9 973,267.5 974,260.3 975,262.9 976,262.0 977,263.2 978,261.3 979,263.4 980,260.0 981,260.6 982,263.1 983,261.3 984,262.2 985,263.2 986,259.0 987,259.7 988,261.6 989,262.1 990,262.0 991,260.5 992,259.4 993,263.5 994,265.4 995,264.5 996,257.8 997,261.7 998,261.1 999,261.6 1000,259.2 1001,262.9 1002,263.0 1003,259.7 1004,263.6 1005,260.9 1006,257.8 1007,259.8 1008,263.9 1009,260.1 1010,262.8 1011,255.6 1012,258.7 1013,259.7 1014,258.6 1015,259.9 1016,260.0 1017,258.9 1018,262.0 1019,262.3 1020,263.8 1021,260.3 1022,264.3 1023,262.1 1024,260.3 1025,261.0 1026,264.0 1027,262.6 1028,262.6 1029,262.5 1030,264.6 1031,261.0 1032,261.3 1033,260.7 1034,259.4 1035,258.1 1036,257.3 1037,261.9 1038,259.5 1039,261.3 1040,258.4 1041,264.7 1042,257.8 1043,263.5 1044,257.0 1045,260.2 1046,255.8 1047,253.8 1048,257.2 1049,259.6 1050,257.3 1051,258.9 1052,257.9 1053,258.2 1054,257.2 1055,255.8 1056,255.1 1057,254.2 1058,245.5 1059,251.9 1060,263.6 1061,260.7 1062,260.0 1063,256.2 1064,258.4 1065,257.1 1066,259.1 1067,256.6 1068,256.0 1069,256.8 1070,258.6 1071,255.3 1072,257.9 1073,256.6 1074,260.2 1075,259.5 1076,260.1 1077,259.2 1078,256.9 1079,259.6 1080,258.1 1081,260.6 1082,257.5 1083,264.1 1084,260.5 1085,262.5 1086,258.6 1087,261.4 1088,259.1 1089,265.9 1090,262.8 1091,263.9 1092,258.5 1093,263.8 1094,264.7 1095,265.1 1096,259.3 1097,264.4 1098,258.0 1099,260.5 1100,263.3 1101,259.2 1102,262.0 1103,261.0 1104,265.7 1105,261.7 1106,267.3 1107,263.9 1108,261.5 1109,266.9 1110,262.1 1111,263.5 1112,263.5 1113,264.9 1114,257.6 1115,264.2 1116,257.3 1117,259.6 1118,258.9 1119,261.1 1120,259.7 1121,261.8 1122,257.1 1123,261.5 1124,263.4 1125,264.8 1126,260.6 1127,263.6 1128,261.9 1129,261.0 1130,253.7 1131,260.4 1132,254.8 1133,253.3 1134,261.5"/><polyline points="472,290.2 473,286.0 474,285.5 475,280.4 476,283.1 477,286.3 478,284.6 479,288.9 480,286.3 481,285.5 482,289.0 483,285.1 484,285.0 485,284.8 486,285.6 487,288.8 488,285.9 489,285.1 490,284.5 491,287.3 492,284.4 493,284.5 494,285.3 495,286.9 496,286.0 497,287.5 498,285.0 499,285.6 500,282.8 501,284.6 502,286.7 503,284.0 504,284.5 505,286.5 506,286.1 507,287.7 508,288.9 509,287.7 510,288.3 511,289.1 512,285.1 513,283.4 514,284.0 515,287.1 516,284.3 517,289.2 518,288.6 519,289.5 520,286.6 521,283.9 522,287.0 523,288.9 524,290.8 525,288.6 526,287.9 527,289.0 528,288.9 529,292.2 530,286.7 531,286.8 532,286.5 533,283.9 534,286.7 535,284.6 536,289.5 537,287.1 538,288.4 539,285.7 540,290.9 541,283.7 542,287.3 543,288.3 544,288.4 545,289.8 546,287.7 547,288.8 548,282.9 549,287.7 550,289.4 551,287.3 552,284.0 553,283.9 554,283.7 555,282.7 556,282.4 557,285.3 558,280.8 559,281.1 560,287.0 561,283.3 562,284.7 563,287.4 564,282.3 565,288.0 566,286.0 567,288.4 568,284.8 569,288.4 570,287.9 571,284.6 572,286.1 573,286.1 574,290.1 575,293.4 576,285.0 577,288.7 578,286.5 579,285.5 580,291.4 581,288.7 582,287.6 583,289.9 584,288.6 585,288.6 586,290.5 587,290.8 588,289.2 589,288.6 590,290.5 591,286.9 592,284.5 593,291.3 594,283.8 595,292.7 596,286.2 597,288.5 598,289.1 599,284.6 600,287.5 601,288.7 602,291.8 603,289.0 604,289.5 605,288.7 606,285.7 607,290.7 608,291.1 609,293.2 610,289.1 611,285.5 612,288.7 613,283.0 614,289.7 615,286.2 616,284.7 617,287.2 618,284.1 619,285.1 620,290.4 621,290.5 622,286.1 623,287.9 624,286.4 625,287.0 626,286.5 627,289.5 628,285.4 629,285.0 630,282.7 631,285.3 632,285.3 633,284.3 634,279.8 635,284.1 636,289.1 637,287.4 638,291.1 639,289.2 640,289.6 641,288.5 642,288.1 643,289.2 644,288.6 645,286.7 646,290.1 647,285.2 648,285.8 649,287.6 650,286.2 651,287.7 652,287.3 653,286.9 654,285.7 655,283.9 656,285.4 657,292.0 658,287.5 659,289.4 660,283.8 661,290.2 662,287.7 663,288.5 664,282.2 665,290.5 666,282.4 667,286.0 668,284.4 669,287.0 670,286.0 671,284.2 672,284.2 673,289.6 674,286.8 675,287.0 676,289.4 677,290.8 678,289.2 679,287.9 680,291.7 681,290.9 682,284.6 683,288.6 684,284.6 685,289.3 686,283.5 687,288.1 688,284.8 689,284.4 690,285.8 691,283.4 692,285.2 693,288.7 694,285.4 695,287.7 696,289.8 697,285.4 698,292.3 699,291.3 700,290.2 701,288.9 702,284.9 703,285.8 704,287.8 705,286.3 706,281.9 707,291.1 708,285.9 709,286.7 710,289.7 711,287.5 712,284.8 713,285.3 714,285.2 715,286.6 716,285.4 717,289.0 718,287.0 719,288.8 720,286.9 721,289.9 722,283.7 723,286.4 724,285.1 725,289.5 726,282.3 727,291.7 728,287.8 729,291.7 730,284.4 731,287.3 732,285.8 733,287.6 734,286.6 735,289.7 736,286.4 737,283.6 738,287.3 739,287.4 740,286.5 741,287.1 742,288.6 743,289.1 744,288.8 745,292.0 746,288.0 747,285.1 748,290.9 749,287.6 750,287.6 751,286.9 752,289.8 753,285.4 754,288.6 755,287.2 756,285.8 757,286.8 758,285.4 759,285.9 760,288.4 761,288.4 762,285.7 763,285.3 764,282.5 765,289.4 766,283.7 767,287.4 768,285.6 769,288.2 770,286.5 771,285.6 772,291.0 773,285.8 774,287.8 775,285.8 776,285.6 777,287.4 778,289.5 779,284.3 780,288.0 781,290.1 782,284.8 783,288.6 784,287.0 785,287.4 786,285.0 787,284.9 788,284.2 789,286.8 790,283.0 791,289.9 792,283.7 793,282.2 794,284.9 795,281.8 796,285.4 797,288.7 798,287.1 799,285.7 800,286.7 801,287.0 802,291.1 803,284.9 804,289.6 805,285.8 806,288.9 807,283.6 808,290.3 809,290.6 810,288.1 811,286.4 812,286.6 813,291.3 814,286.5 815,289.9 816,288.7 817,288.9 818,287.6 819,292.5 820,286.3 821,281.8 822,289.9 823,289.4 824,287.7 825,287.6 826,288.0 827,283.8 828,283.7 829,283.6 830,284.1 831,287.1 832,287.3 833,285.9 834,285.6 835,281.3 836,284.4 837,280.2 838,284.2 839,283.3 840,283.6 841,282.2 842,280.9 843,280.5 844,285.3 845,277.6 846,285.9 847,281.5 848,286.9 849,286.1 850,288.5 851,289.4 852,287.9 853,287.0 854,286.6 855,285.3 856,284.7 857,286.7 858,283.5 859,282.4 860,279.5 861,284.1 862,286.0 863,285.4 864,282.7 865,282.8 866,284.3 867,285.5 868,284.9 869,288.3 870,287.3 871,286.7 872,284.6 873,282.5 874,280.5 875,285.4 876,288.0 877,284.5 878,285.0 879,287.5 880,286.7 881,285.3 882,287.1 883,284.5 884,289.6 885,286.7 886,279.9 887,278.2 888,284.6 889,282.6 890,282.6 891,283.9 892,289.0 893,286.7 894,283.7 895,287.3 896,283.1 897,286.0 898,287.8 899,286.2 900,288.0 901,287.6 902,288.8 903,284.0 904,287.2 905,284.1 906,285.1 907,284.1 908,286.1 909,286.4 910,290.6 911,287.0 912,279.9 913,287.3 914,287.2 915,284.5 916,285.9 917,285.0 918,281.1 919,281.1 920,288.1 921,281.4 922,286.1 923,287.0 924,284.9 925,282.2 926,287.0 927,289.0 928,288.7 929,283.8 930,287.1 931,284.9 932,284.6 933,287.1 934,287.3 935,289.5 936,286.1 937,286.9 938,291.8 939,290.2 940,284.4 941,281.0 942,282.8 943,288.9 944,285.7 945,286.6 946,286.3 947,289.9 948,287.6 949,286.8 950,283.3 951,286.4 952,287.1 953,286.9 954,288.1 955,285.8 956,290.3 957,285.7 958,290.1 959,284.0 960,287.6 961,287.0 962,285.3 963,285.2 964,287.7 965,286.7 966,289.7 967,287.3 968,285.1 969,286.9 970,281.7 971,282.5 972,281.6 973,284.9 974,285.6 975,282.6 976,284.7 977,287.7 978,285.2 979,284.1 980,287.6 981,284.7 982,287.5 983,285.3 984,285.8 985,284.8 986,282.4 987,286.7 988,286.4 989,286.2 990,285.1 991,287.3 992,287.4 993,289.5 994,287.3 995,290.2 996,285.7 997,289.8 998,283.3 999,291.7 1000,290.2 1001,286.2 1002,288.5 1003,285.8 1004,290.6 1005,285.5 1006,279.1 1007,284.4 1008,288.0 1009,286.6 1010,290.8 1011,288.3 1012,284.5 1013,288.5 1014,285.3 1015,290.1 1016,284.2 1017,287.3 1018,286.6 1019,287.9 1020,286.5 1021,288.0 1022,287.9 1023,288.4 1024,284.4 1025,289.4 1026,285.5 1027,289.0 1028,289.1 1029,292.1 1030,289.6 1031,287.1 1032,285.4 1033,287.1 1034,284.1 1035,288.0 1036,285.0 1037,286.4 1038,285.2 1039,285.4 1040,285.2 1041,282.6 1042,287.0 1043,288.3 1044,286.4 1045,286.8 1046,285.4 1047,286.4 1048,282.6 1049,289.0 1050,284.2 1051,284.8 1052,281.8 1053,286.8 1054,286.7 1055,285.2 1056,287.5 1057,287.0 1058,286.2 1059,284.3 1060,289.7 1061,288.1 1062,287.2 1063,283.2 1064,285.8 1065,286.1 1066,288.6 1067,288.0 1068,285.1 1069,290.2 1070,283.6 1071,289.5 1072,287.1 1073,292.8 1074,286.8 1075,286.2 1076,290.8 1077,289.2 1078,287.0 1079,289.5 1080,289.3 1081,291.2 1082,292.5 1083,292.1 1084,287.1 1085,288.3 1086,289.7 1087,290.1 1088,286.3 1089,289.8 1090,285.5 1091,288.1 1092,293.7 1093,288.1 1094,291.4 1095,285.7 1096,288.6 1097,291.1 1098,289.7 1099,289.1 1100,287.3 1101,292.2 1102,286.6 1103,286.6 1104,290.1 1105,285.5 1106,283.7 1107,286.7 1108,284.3 1109,284.3 1110,279.1 1111,284.3 1112,282.8 1113,287.0 1114,284.1 1115,290.0 1116,287.7 1117,288.6 1118,288.2 1119,288.2 1120,289.8 1121,285.7 1122,291.1 1123,293.9 1124,292.0 1125,293.2 1126,289.5 1127,291.2 1128,288.3 1129,292.9 1130,290.5 1131,288.3 1132,288.6 1133,290.1 1134,291.7"/><polyline points="472,313.5 473,313.3 474,313.9 475,314.5 476,312.9 477,313.5 478,313.5 479,312.8 480,313.8 481,313.9 482,314.6 483,314.6 484,315.1 485,313.7 486,313.7 487,313.6 488,314.5 489,314.4 490,314.2 491,314.8 492,314.1 493,314.2 494,314.8 495,313.4 496,312.8 497,314.0 498,313.4 499,314.1 500,313.7 501,313.7 502,314.7 503,314.8 504,314.5 505,314.4 506,314.1 507,314.9 508,314.8 509,314.8 510,313.8 511,314.2 512,313.6 513,313.8 514,314.0 515,313.8 516,313.5 517,313.6 518,314.8 519,314.3 520,314.7 521,312.9 522,314.8 523,314.6 524,314.2 525,315.0 526,314.1 527,313.9 528,313.5 529,313.6 530,314.2 531,312.6 532,313.7 533,313.8 534,313.8 535,313.4 536,313.3 537,313.6 538,313.7 539,314.3 540,313.2 541,312.2 542,313.2 543,313.6 544,315.0 545,315.1 546,314.9 547,314.5 548,313.9 549,313.4 550,313.4 551,314.7 552,315.0 553,314.0 554,313.7 555,312.6 556,313.5 557,313.2 558,313.8 559,313.7 560,313.8 561,313.4 562,313.6 563,313.9 564,313.5 565,314.0 566,314.2 567,313.8 568,314.6 569,313.6 570,314.4 571,313.4 572,313.0 573,313.5 574,313.4 575,313.8 576,314.9 577,315.3 578,313.8 579,313.7 580,313.7 581,314.5 582,313.9 583,315.0 584,313.7 585,314.1 586,314.3 587,314.7 588,314.9 589,314.2 590,314.1 591,314.4 592,314.0 593,313.8 594,313.5 595,313.8 596,313.8 597,312.7 598,312.5 599,312.6 600,314.1 601,311.2 602,313.2 603,312.7 604,312.3 605,311.8 606,313.5 607,313.5 608,313.6 609,312.6 610,314.1 611,312.9 612,311.9 613,313.4 614,313.0 615,313.9 616,314.4 617,314.5 618,315.2 619,315.3 620,315.2 621,314.6 622,314.1 623,313.6 624,314.6 625,313.0 626,314.9 627,313.6 628,314.4 629,315.5 630,314.5 631,314.0 632,313.4 633,313.0 634,313.1 635,312.8 636,314.5 637,313.7 638,315.3 639,313.2 640,313.8 641,313.1 642,312.6 643,312.6 644,314.2 645,312.6 646,313.3 647,312.4 648,314.9 649,312.9 650,313.6 651,312.6 652,314.2 653,313.0 654,311.2 655,312.7 656,311.8 657,313.6 658,313.8 659,312.8 660,313.1 661,313.2 662,313.1 663,313.7 664,313.2 665,313.4 666,313.2 667,313.6 668,312.9 669,313.8 670,313.8 671,313.5 672,313.5 673,312.9 674,313.5 675,312.9 676,313.5 677,313.2 678,313.0 679,313.2 680,313.4 681,312.7 682,312.3 683,313.1 684,313.2 685,313.5 686,313.8 687,313.9 688,313.7 689,312.8 690,314.6 691,313.2 692,314.4 693,313.5 694,314.8 695,314.1 696,313.8 697,315.0 698,314.0 699,315.0 700,314.2 701,314.2 702,314.7 703,314.9 704,315.2 705,314.4 706,315.1 707,314.9 708,315.4 709,313.9 710,313.9 711,314.3 712,314.3 713,314.0 714,314.7 715,314.1 716,314.7 717,313.0 718,314.2 719,314.1 720,313.7 721,312.4 722,313.1 723,312.8 724,314.5 725,314.0 726,312.7 727,313.4 728,312.8 729,314.2 730,313.9 731,313.7 732,313.7 733,314.1 734,314.7 735,314.4 736,314.4 737,314.3 738,315.3 739,314.5 740,314.7 741,313.3 742,313.9 743,314.8 744,314.6 745,314.2 746,313.3 747,314.8 748,314.9 749,315.0 750,314.0 751,314.5 752,313.6 753,313.3 754,314.2 755,313.6 756,312.0 757,314.0 758,313.7 759,313.6 760,313.8 761,313.4 762,313.5 763,313.0 764,312.9 765,313.3 766,313.6 767,312.8 768,314.6 769,313.5 770,313.6 771,314.2 772,312.0 773,312.8 774,314.1 775,313.3 776,313.8 777,313.9 778,313.7 779,314.8 780,314.5 781,313.9 782,314.3 783,313.9 784,314.1 785,314.5 786,314.3 787,314.2 788,314.0 789,314.0 790,315.0 791,314.9 792,314.8 793,315.4 794,314.4 795,314.4 796,314.7 797,314.6 798,314.5 799,314.3 800,314.4 801,314.2 802,313.7 803,314.1 804,315.3 805,314.6 806,312.8 807,313.8 808,314.6 809,315.8 810,316.1 811,315.8 812,314.0 813,314.1 814,313.7 815,313.9 816,314.9 817,313.3 818,314.7 819,313.8 820,313.7 821,313.8 822,313.9 823,313.8 824,312.1 825,313.6 826,313.6 827,312.4 828,313.0 829,313.3 830,313.3 831,313.0 832,312.9 833,313.3 834,312.7 835,313.4 836,313.7 837,314.9 838,312.3 839,313.8 840,311.8 841,314.0 842,312.8 843,313.3 844,313.2 845,313.1 846,312.8 847,313.1 848,312.3 849,314.0 850,313.8 851,314.3 852,313.9 853,313.5 854,314.9 855,314.0 856,313.6 857,314.1 858,314.0 859,314.2 860,314.0 861,313.8 862,314.5 863,314.1 864,314.1 865,313.9 866,313.9 867,313.0 868,314.7 869,313.8 870,314.6 871,314.4 872,313.2 873,314.6 874,314.1 875,314.6 876,314.3 877,314.4 878,314.6 879,313.8 880,314.1 881,313.9 882,313.8 883,313.3 884,314.4 885,314.2 886,313.8 887,314.1 888,313.8 889,313.5 890,311.4 891,314.7 892,314.0 893,312.9 894,313.2 895,313.5 896,313.8 897,313.8 898,313.7 899,313.0 900,315.1 901,313.3 902,313.5 903,314.0 904,312.2 905,313.6 906,312.1 907,314.3 908,312.0 909,313.1 910,313.0 911,313.9 912,313.7 913,314.3 914,313.0 915,313.6 916,314.4 917,314.7 918,313.1 919,315.1 920,314.2 921,313.4 922,314.4 923,313.6 924,313.2 925,313.8 926,314.4 927,314.0 928,313.3 929,313.7 930,312.9 931,313.4 932,312.8 933,312.2 934,313.1 935,313.8 936,313.5 937,314.1 938,314.4 939,312.7 940,312.2 941,314.0 942,312.9 943,313.0 944,312.7 945,313.5 946,312.9 947,313.5 948,313.9 949,313.7 950,313.6 951,313.8 952,312.8 953,314.4 954,311.6 955,313.4 956,312.4 957,313.6 958,312.9 959,313.7 960,313.9 961,312.4 962,314.5 963,313.9 964,313.7 965,314.1 966,313.8 967,312.8 968,315.5 969,314.4 970,312.6 971,312.3 972,313.0 973,313.5 974,314.1 975,314.0 976,314.4 977,313.6 978,314.7 979,313.5 980,313.8 981,314.2 982,313.6 983,313.7 984,313.8 985,312.4 986,313.7 987,313.3 988,313.6 989,314.1 990,313.0 991,313.8 992,312.9 993,314.2 994,313.0 995,314.5 996,314.0 997,313.9 998,315.2 999,314.0 1000,313.8 1001,314.2 1002,312.9 1003,313.5 1004,314.0 1005,314.0 1006,313.4 1007,313.3 1008,314.2 1009,312.8 1010,313.5 1011,312.1 1012,314.5 1013,313.1 1014,312.7 1015,313.7 1016,312.8 1017,314.0 1018,313.1 1019,314.0 1020,313.9 1021,314.5 1022,314.4 1023,314.8 1024,315.1 1025,314.9 1026,313.8 1027,315.5 1028,313.7 1029,313.5 1030,314.8 1031,314.0 1032,313.9 1033,314.3 1034,315.1 1035,314.7 1036,313.8 1037,313.5 1038,314.6 1039,314.2 1040,313.2 1041,313.4 1042,313.9 1043,314.1 1044,314.2 1045,313.0 1046,313.0 1047,313.7 1048,313.3 1049,313.3 1050,313.3 1051,312.8 1052,314.3 1053,312.9 1054,312.7 1055,313.4 1056,313.5 1057,313.0 1058,311.7 1059,314.1 1060,315.0 1061,314.4 1062,314.7 1063,313.9 1064,313.9 1065,312.8 1066,314.4 1067,314.6 1068,314.4 1069,314.8 1070,313.2 1071,313.0 1072,314.3 1073,312.8 1074,313.9 1075,313.1 1076,313.2 1077,313.5 1078,312.7 1079,313.2 1080,312.9 1081,314.5 1082,313.2 1083,312.7 1084,313.8 1085,314.2 1086,315.1 1087,313.0 1088,314.5 1089,314.5 1090,313.6 1091,313.6 1092,313.5 1093,313.7 1094,314.5 1095,314.8 1096,314.8 1097,314.9 1098,313.9 1099,313.7 1100,313.4 1101,312.9 1102,313.8 1103,312.5 1104,313.6 1105,314.4 1106,314.1 1107,313.6 1108,312.3 1109,313.6 1110,313.7 1111,313.0 1112,314.2 1113,313.2 1114,313.3 1115,314.1 1116,313.1 1117,313.6 1118,313.9 1119,313.3 1120,315.6 1121,313.7 1122,313.1 1123,313.7 1124,313.2 1125,313.5 1126,313.6 1127,314.6 1128,314.2 1129,314.1 1130,314.1 1131,313.8 1132,314.0 1133,313.7 1134,314.5"/><polyline points="472,342.5 473,339.5 474,344.1 475,344.7 476,342.6 477,340.8 478,343.0 479,339.3 480,341.7 481,342.2 482,344.1 483,342.8 484,341.4 485,341.4 486,338.9 487,343.5 488,340.9 489,342.2 490,342.4 491,342.4 492,339.8 493,343.5 494,341.1 495,344.0 496,345.4 497,343.0 498,342.1 499,341.8 500,344.0 501,344.5 502,343.2 503,342.3 504,341.5 505,341.7 506,343.7 507,339.6 508,344.2 509,340.7 510,343.5 511,339.0 512,340.9 513,343.8 514,343.8 515,340.9 516,341.8 517,342.8 518,343.8 519,337.8 520,342.0 521,342.0 522,339.1 523,340.1 524,340.4 525,339.3 526,341.2 527,344.5 528,337.5 529,342.1 530,342.1 531,343.3 532,339.0 533,339.7 534,340.2 535,342.2 536,343.5 537,344.1 538,345.1 539,344.0 540,344.7 541,336.1 542,330.0 543,338.5 544,347.7 545,343.3 546,338.2 547,340.3 548,341.8 549,339.8 550,341.5 551,341.3 552,343.1 553,342.9 554,345.2 555,344.7 556,344.4 557,342.3 558,341.9 559,342.1 560,342.8 561,339.9 562,342.0 563,341.1 564,338.9 565,338.8 566,342.0 567,341.1 568,340.5 569,341.3 570,337.1 571,341.6 572,338.7 573,342.5 574,337.8 575,339.2 576,341.6 577,341.0 578,339.4 579,339.7 580,339.7 581,340.6 582,340.2 583,342.4 584,342.2 585,342.0 586,347.0 587,339.8 588,345.0 589,340.8 590,342.0 591,343.5 592,339.8 593,343.6 594,341.1 595,342.1 596,338.0 597,339.0 598,341.2 599,340.9 600,342.3 601,339.1 602,339.6 603,341.7 604,339.1 605,343.2 606,343.4 607,341.6 608,341.4 609,342.3 610,342.2 611,339.1 612,345.5 613,343.0 614,345.5 615,341.6 616,343.1 617,341.2 618,342.8 619,342.1 620,341.5 621,340.1 622,338.4 623,338.3 624,342.3 625,344.0 626,341.5 627,343.6 628,343.4 629,341.4 630,342.6 631,342.3 632,344.1 633,333.6 634,326.1 635,336.9 636,345.8 637,342.8 638,339.8 639,340.3 640,342.2 641,340.6 642,336.8 643,340.2 644,339.1 645,338.4 646,342.3 647,337.1 648,337.7 649,337.2 650,340.1 651,342.0 652,338.5 653,342.5 654,338.5 655,341.5 656,339.6 657,340.4 658,340.8 659,341.9 660,342.8 661,340.5 662,345.9 663,344.4 664,342.4 665,340.5 666,337.2 667,339.9 668,342.7 669,337.3 670,343.0 671,343.8 672,342.1 673,339.0 674,339.5 675,340.2 676,341.8 677,340.9 678,340.5 679,337.5 680,339.7 681,340.6 682,339.6 683,339.5 684,343.1 685,339.1 686,342.3 687,343.5 688,342.7 689,338.4 690,339.6 691,339.7 692,340.3 693,341.1 694,342.3 695,341.7 696,340.0 697,342.3 698,339.7 699,341.5 700,340.6 701,341.3 702,342.5 703,339.8 704,337.0 705,340.0 706,341.5 707,337.5 708,342.2 709,340.8 710,340.9 711,341.4 712,339.9 713,340.2 714,339.7 715,339.4 716,336.9 717,337.8 718,335.3 719,338.3 720,336.2 721,328.7 722,322.2 723,337.2 724,340.1 725,343.5 726,339.0 727,340.4 728,337.6 729,338.8 730,339.3 731,343.3 732,341.3 733,343.3 734,344.3 735,341.1 736,340.3 737,339.9 738,342.7 739,340.7 740,338.4 741,344.0 742,342.1 743,342.8 744,343.5 745,341.0 746,337.4 747,338.3 748,339.6 749,337.6 750,336.9 751,337.4 752,338.0 753,338.3 754,337.9 755,338.9 756,338.0 757,341.1 758,344.8 759,337.5 760,344.1 761,341.2 762,339.5 763,343.6 764,338.8 765,340.8 766,342.1 767,337.5 768,342.7 769,339.7 770,340.7 771,338.7 772,340.1 773,337.9 774,341.4 775,339.6 776,341.7 777,340.9 778,340.0 779,342.5 780,338.4 781,342.1 782,344.3 783,340.5 784,343.7 785,339.8 786,340.1 787,341.5 788,341.1 789,339.6 790,339.1 791,339.6 792,343.6 793,343.0 794,344.6 795,339.0 796,339.3 797,339.8 798,340.9 799,341.3 800,339.9 801,341.8 802,340.8 803,341.2 804,341.7 805,336.4 806,334.4 807,324.0 808,337.5 809,345.9 810,342.5 811,339.3 812,340.4 813,341.8 814,338.7 815,339.3 816,340.7 817,341.9 818,336.5 819,339.3 820,339.3 821,342.4 822,342.7 823,340.8 824,338.6 825,341.1 826,343.9 827,340.4 828,343.0 829,343.3 830,343.9 831,342.1 832,337.9 833,338.7 834,338.1 835,341.8 836,340.1 837,341.4 838,343.9 839,340.0 840,342.5 841,341.5 842,341.4 843,340.8 844,341.9 845,339.2 846,340.6 847,341.2 848,339.3 849,338.0 850,340.4 851,340.1 852,339.6 853,340.5 854,340.6 855,342.3 856,341.1 857,341.3 858,338.7 859,339.5 860,341.6 861,339.0 862,339.4 863,340.9 864,339.0 865,341.9 866,339.1 867,337.5 868,341.1 869,339.3 870,339.5 871,339.7 872,337.8 873,340.1 874,343.7 875,342.9 876,341.3 877,341.0 878,341.2 879,340.6 880,341.3 881,342.6 882,340.9 883,343.2 884,336.0 885,337.1 886,341.2 887,337.9 888,339.3 889,328.2 890,326.4 891,338.5 892,345.0 893,344.1 894,345.7 895,340.2 896,338.6 897,343.3 898,342.6 899,342.3 900,341.9 901,340.8 902,341.7 903,340.8 904,340.1 905,342.0 906,341.3 907,342.1 908,342.5 909,343.2 910,340.4 911,339.3 912,338.9 913,340.1 914,339.1 915,339.2 916,338.3 917,343.5 918,339.0 919,343.8 920,337.7 921,344.7 922,343.1 923,339.9 924,343.4 925,339.5 926,344.9 927,344.2 928,340.7 929,341.3 930,340.3 931,341.5 932,340.1 933,339.2 934,340.6 935,341.4 936,338.9 937,341.0 938,341.3 939,340.2 940,339.9 941,340.1 942,342.1 943,345.7 944,341.8 945,342.6 946,342.0 947,340.2 948,345.0 949,342.6 950,342.0 951,341.9 952,342.4 953,340.7 954,341.8 955,339.4 956,341.5 957,340.0 958,339.1 959,340.6 960,340.2 961,339.5 962,338.2 963,339.9 964,337.1 965,339.7 966,338.6 967,336.3 968,337.9 969,337.4 970,327.1 971,327.4 972,333.3 973,345.6 974,341.9 975,340.8 976,337.3 977,338.5 978,341.6 979,339.7 980,338.4 981,340.1 982,341.0 983,335.8 984,341.2 985,336.9 986,339.8 987,342.1 988,336.6 989,342.0 990,338.9 991,341.2 992,341.7 993,340.7 994,341.7 995,335.4 996,339.4 997,341.3 998,341.0 999,338.4 1000,340.6 1001,338.2 1002,337.7 1003,340.0 1004,341.1 1005,340.3 1006,339.3 1007,335.0 1008,338.9 1009,337.9 1010,340.7 1011,339.6 1012,337.7 1013,343.2 1014,341.0 1015,338.9 1016,337.7 1017,340.4 1018,338.8 1019,339.5 1020,337.7 1021,337.5 1022,341.4 1023,337.2 1024,341.6 1025,336.6 1026,341.6 1027,342.6 1028,340.5 1029,341.2 1030,341.4 1031,341.4 1032,341.4 1033,343.3 1034,340.5 1035,340.7 1036,343.0 1037,338.8 1038,340.5 1039,337.7 1040,339.5 1041,342.4 1042,342.0 1043,343.7 1044,340.1 1045,341.0 1046,340.9 1047,339.4 1048,340.5 1049,339.2 1050,337.4 1051,342.0 1052,338.2 1053,340.4 1054,343.0 1055,341.7 1056,338.9 1057,331.9 1058,325.7 1059,336.9 1060,343.7 1061,343.5 1062,340.8 1063,339.5 1064,340.7 1065,337.4 1066,339.7 1067,340.7 1068,340.4 1069,336.0 1070,339.4 1071,339.6 1072,339.7 1073,339.2 1074,341.5 1075,342.5 1076,342.0 1077,341.6 1078,340.4 1079,338.7 1080,342.8 1081,339.1 1082,342.3 1083,341.2 1084,341.8 1085,340.6 1086,343.2 1087,339.4 1088,341.4 1089,339.0 1090,340.6 1091,339.0 1092,341.6 1093,339.2 1094,340.1 1095,337.9 1096,340.2 1097,342.1 1098,342.0 1099,338.4 1100,339.4 1101,339.0 1102,336.0 1103,342.6 1104,340.2 1105,339.2 1106,341.2 1107,340.3 1108,340.1 1109,338.7 1110,342.4 1111,340.8 1112,340.1 1113,339.0 1114,342.8 1115,338.6 1116,340.0 1117,340.0 1118,343.7 1119,340.8 1120,341.4 1121,340.9 1122,338.8 1123,342.4 1124,343.0 1125,343.6 1126,337.6 1127,343.2 1128,340.5 1129,338.4 1130,341.3 1131,339.8 1132,343.2 1133,341.7 1134,339.9"/><polyline points="472,369.3 473,365.9 474,367.8 475,364.8 476,369.0 477,370.0 478,365.7 479,368.6 480,368.5 481,366.2 482,367.5 483,361.9 484,369.0 485,364.9 486,366.5 487,367.4 488,365.8 489,368.5 490,366.7 491,366.0 492,366.8 493,363.0 494,363.8 495,367.3 496,363.1 497,363.5 498,367.4 499,363.5 500,363.7 501,365.0 502,366.0 503,369.5 504,366.6 505,368.7 506,368.4 507,367.4 508,365.2 509,368.5 510,366.9 511,363.8 512,366.0 513,367.9 514,365.8 515,365.9 516,365.2 517,367.0 518,366.7 519,365.7 520,363.4 521,367.8 522,368.7 523,367.6 524,365.6 525,366.1 526,366.5 527,364.5 528,364.1 529,363.9 530,364.5 531,364.1 532,365.9 533,366.5 534,366.6 535,365.9 536,365.6 537,366.3 538,365.0 539,362.3 540,365.8 541,366.1 542,363.2 543,365.6 544,365.3 545,366.3 546,363.8 547,361.7 548,365.8 549,364.9 550,369.1 551,368.5 552,369.0 553,372.0 554,365.3 555,369.5 556,369.8 557,368.9 558,368.3 559,365.6 560,367.7 561,366.2 562,366.8 563,365.6 564,362.9 565,366.5 566,366.2 567,364.8 568,365.8 569,367.2 570,369.4 571,367.4 572,368.0 573,367.4 574,369.0 575,369.1 576,369.5 577,370.3 578,365.8 579,369.3 580,365.9 581,365.1 582,368.2 583,364.0 584,365.6 585,367.8 586,367.0 587,368.9 588,369.1 589,370.0 590,369.8 591,366.7 592,368.5 593,369.3 594,370.4 595,372.0 596,369.3 597,367.7 598,368.9 599,368.3 600,370.1 601,371.1 602,367.9 603,369.1 604,367.3 605,364.5 606,368.3 607,365.0 608,366.5 609,369.3 610,367.4 611,366.5 612,371.7 613,371.7 614,370.7 615,371.4 616,368.8 617,370.5 618,368.7 619,367.8 620,369.1 621,369.2 622,370.3 623,370.4 624,366.5 625,370.4 626,369.2 627,371.1 628,367.5 629,369.5 630,369.2 631,371.3 632,369.9 633,365.5 634,366.5 635,369.4 636,371.2 637,369.1 638,367.5 639,366.9 640,368.6 641,367.5 642,365.6 643,366.8 644,365.4 645,372.2 646,370.3 647,368.1 648,371.4 649,369.1 650,371.3 651,369.4 652,370.9 653,367.3 654,368.4 655,366.2 656,369.4 657,369.6 658,369.0 659,370.8 660,367.0 661,369.1 662,363.8 663,367.8 664,368.2 665,370.7 666,369.9 667,370.4 668,365.0 669,372.9 670,369.6 671,371.2 672,371.5 673,374.2 674,371.1 675,368.5 676,371.6 677,369.6 678,369.8 679,368.1 680,365.4 681,366.9 682,368.3 683,371.1 684,369.1 685,372.6 686,370.4 687,369.2 688,367.4 689,367.0 690,365.8 691,366.0 692,369.4 693,367.7 694,367.8 695,370.5 696,373.7 697,369.1 698,367.0 699,366.6 700,368.3 701,367.4 702,365.3 703,369.4 704,367.7 705,368.1 706,368.9 707,367.5 708,368.9 709,375.4 710,367.5 711,370.3 712,371.1 713,368.1 714,372.9 715,369.7 716,368.4 717,371.9 718,370.7 719,370.2 720,370.2 721,364.6 722,366.0 723,363.8 724,371.9 725,370.0 726,372.0 727,369.6 728,374.6 729,370.9 730,370.4 731,366.9 732,370.3 733,368.5 734,368.7 735,365.7 736,371.9 737,367.5 738,371.4 739,369.9 740,370.1 741,371.7 742,368.9 743,368.2 744,368.4 745,365.9 746,368.3 747,371.0 748,371.6 749,371.0 750,370.2 751,369.9 752,370.9 753,367.1 754,370.9 755,366.5 756,370.2 757,368.3 758,369.1 759,365.6 760,367.4 761,371.0 762,368.3 763,366.6 764,370.6 765,371.5 766,368.6 767,370.5 768,366.2 769,367.6 770,369.2 771,368.4 772,368.0 773,368.1 774,370.9 775,369.7 776,366.8 777,370.2 778,367.7 779,369.8 780,367.0 781,368.5 782,367.2 783,366.1 784,367.2 785,366.7 786,369.4 787,364.5 788,367.6 789,365.2 790,367.1 791,366.5 792,369.6 793,363.0 794,366.3 795,370.8 796,365.3 797,367.9 798,368.9 799,366.2 800,367.7 801,369.8 802,368.1 803,369.6 804,366.8 805,368.4 806,365.9 807,363.4 808,362.4 809,371.5 810,368.3 811,365.5 812,365.5 813,367.2 814,366.8 815,372.5 816,367.7 817,367.6 818,366.8 819,368.6 820,368.0 821,370.6 822,368.7 823,371.7 824,371.2 825,367.4 826,370.6 827,368.2 828,367.5 829,368.3 830,368.6 831,365.7 832,368.6 833,367.8 834,364.3 835,364.3 836,365.4 837,367.1 838,367.1 839,367.0 840,364.0 841,363.8 842,365.3 843,364.0 844,365.3 845,369.0 846,367.1 847,368.3 848,366.8 849,367.2 850,367.7 851,367.9 852,370.4 853,371.6 854,366.7 855,369.6 856,366.7 857,368.0 858,367.8 859,367.6 860,368.9 861,368.3 862,368.0 863,371.0 864,367.5 865,369.5 866,363.9 867,372.5 868,367.9 869,370.2 870,365.4 871,366.0 872,369.5 873,368.4 874,366.2 875,366.0 876,366.3 877,363.5 878,367.1 879,363.6 880,363.5 881,364.3 882,366.6 883,365.5 884,364.8 885,366.7 886,363.8 887,367.8 888,367.2 889,363.4 890,362.6 891,365.0 892,366.8 893,366.2 894,361.4 895,362.9 896,362.7 897,367.2 898,364.5 899,366.3 900,367.4 901,364.4 902,370.3 903,366.7 904,368.0 905,365.9 906,365.6 907,367.8 908,367.2 909,364.3 910,367.4 911,362.8 912,365.9 913,363.0 914,361.6 915,366.4 916,365.2 917,366.8 918,366.0 919,366.8 920,365.8 921,369.2 922,365.2 923,368.0 924,367.8 925,367.9 926,368.1 927,365.1 928,368.9 929,366.8 930,366.3 931,367.7 932,368.1 933,367.9 934,365.7 935,369.2 936,364.8 937,367.5 938,367.9 939,363.8 940,363.7 941,366.0 942,365.2 943,364.6 944,364.8 945,365.7 946,368.3 947,364.2 948,367.9 949,366.9 950,370.6 951,366.5 952,369.0 953,368.9 954,366.0 955,369.3 956,364.4 957,365.7 958,365.5 959,366.5 960,365.2 961,370.7 962,366.7 963,369.0 964,367.8 965,369.1 966,368.2 967,367.2 968,370.8 969,363.1 970,366.7 971,365.6 972,369.2 973,370.7 974,369.4 975,368.7 976,369.9 977,370.5 978,370.1 979,369.9 980,371.5 981,372.1 982,370.8 983,370.6 984,368.6 985,370.1 986,368.0 987,368.2 988,366.6 989,368.1 990,368.4 991,368.7 992,372.1 993,368.7 994,371.3 995,371.5 996,370.2 997,368.0 998,365.3 999,370.7 1000,366.2 1001,365.2 1002,371.5 1003,368.4 1004,369.2 1005,368.7 1006,368.9 1007,371.1 1008,369.4 1009,369.4 1010,367.6 1011,367.3 1012,368.3 1013,368.1 1014,370.0 1015,368.7 1016,365.9 1017,365.9 1018,366.8 1019,366.1 1020,368.2 1021,365.8 1022,368.4 1023,368.1 1024,368.1 1025,364.7 1026,368.5 1027,369.1 1028,368.7 1029,369.0 1030,367.4 1031,368.5 1032,367.8 1033,372.8 1034,367.0 1035,371.2 1036,367.0 1037,369.4 1038,365.2 1039,370.2 1040,368.4 1041,370.7 1042,367.1 1043,372.6 1044,371.3 1045,368.9 1046,369.1 1047,369.5 1048,366.0 1049,369.2 1050,366.6 1051,367.5 1052,368.9 1053,370.4 1054,368.4 1055,368.8 1056,366.0 1057,366.6 1058,365.5 1059,366.1 1060,367.8 1061,370.4 1062,368.8 1063,367.7 1064,369.3 1065,369.3 1066,364.7 1067,368.5 1068,365.7 1069,369.4 1070,367.5 1071,367.0 1072,367.7 1073,367.9 1074,368.8 1075,364.7 1076,367.9 1077,368.2 1078,367.1 1079,369.5 1080,368.0 1081,367.3 1082,368.8 1083,365.0 1084,367.1 1085,368.1 1086,367.0 1087,366.0 1088,365.4 1089,365.7 1090,365.9 1091,366.0 1092,363.9 1093,369.0 1094,367.9 1095,369.6 1096,366.0 1097,368.5 1098,366.8 1099,370.3 1100,366.5 1101,372.8 1102,364.7 1103,371.8 1104,370.4 1105,371.7 1106,367.4 1107,371.3 1108,368.1 1109,369.0 1110,369.0 1111,366.1 1112,368.0 1113,367.8 1114,365.5 1115,368.0 1116,364.9 1117,369.2 1118,363.9 1119,365.4 1120,366.8 1121,368.4 1122,368.4 1123,365.5 1124,365.7 1125,367.4 1126,365.2 1127,367.4 1128,361.8 1129,365.3 1130,364.4 1131,363.8 1132,367.1 1133,366.4 1134,366.6"/><polyline points="472,395.1 473,393.4 474,395.1 475,393.3 476,394.1 477,395.2 478,394.5 479,394.7 480,394.4 481,395.7 482,394.7 483,394.9 484,394.8 485,395.5 486,393.3 487,394.4 488,394.1 489,394.3 490,394.9 491,393.6 492,394.2 493,394.2 494,394.0 495,394.7 496,394.4 497,394.5 498,393.8 499,394.6 500,394.6 501,392.7 502,394.5 503,394.6 504,394.1 505,394.6 506,394.2 507,394.7 508,395.6 509,395.0 510,395.7 511,395.9 512,395.6 513,395.7 514,394.5 515,393.9 516,396.1 517,394.3 518,393.8 519,394.7 520,395.0 521,394.6 522,395.0 523,394.3 524,394.5 525,393.8 526,395.0 527,395.1 528,394.1 529,394.9 530,394.9 531,394.1 532,394.8 533,395.4 534,395.6 535,394.4 536,393.9 537,393.7 538,394.0 539,394.8 540,393.9 541,391.6 542,390.1 543,392.9 544,396.3 545,394.8 546,394.8 547,394.7 548,394.1 549,394.2 550,394.3 551,394.4 552,393.5 553,393.9 554,395.4 555,394.8 556,396.1 557,395.4 558,395.8 559,395.4 560,395.2 561,395.0 562,394.7 563,394.6 564,395.3 565,394.0 566,395.0 567,394.2 568,395.2 569,395.0 570,394.3 571,395.2 572,394.3 573,394.1 574,393.9 575,395.2 576,394.5 577,395.1 578,394.8 579,394.1 580,395.3 581,395.4 582,394.1 583,395.9 584,393.3 585,395.0 586,395.2 587,394.6 588,396.0 589,394.4 590,395.7 591,394.8 592,393.8 593,394.2 594,393.5 595,395.0 596,394.7 597,394.4 598,394.5 599,395.0 600,394.2 601,395.2 602,394.7 603,395.5 604,395.0 605,394.8 606,395.2 607,395.6 608,395.0 609,395.5 610,395.2 611,396.2 612,394.9 613,394.5 614,394.9 615,395.6 616,394.6 617,394.8 618,395.6 619,395.6 620,395.4 621,395.3 622,394.9 623,395.0 624,395.4 625,394.8 626,394.9 627,393.5 628,396.1 629,395.0 630,395.7 631,393.9 632,395.3 633,391.5 634,390.5 635,394.1 636,396.0 637,395.4 638,394.3 639,395.1 640,394.8 641,395.6 642,395.1 643,396.2 644,394.7 645,394.8 646,395.1 647,395.2 648,395.1 649,395.8 650,394.7 651,394.9 652,396.3 653,396.0 654,395.4 655,395.2 656,396.5 657,395.9 658,394.8 659,395.7 660,395.5 661,395.9 662,395.1 663,395.0 664,395.9 665,394.5 666,394.1 667,394.3 668,395.8 669,394.3 670,396.0 671,395.1 672,395.1 673,393.6 674,394.2 675,394.7 676,394.9 677,395.2 678,394.9 679,395.5 680,395.3 681,394.4 682,393.9 683,393.4 684,394.6 685,394.3 686,393.8 687,395.0 688,394.9 689,394.5 690,394.7 691,395.3 692,394.2 693,395.7 694,394.4 695,394.7 696,393.9 697,394.2 698,394.4 699,395.9 700,394.6 701,394.8 702,395.4 703,394.6 704,395.3 705,394.4 706,395.0 707,395.0 708,395.2 709,393.8 710,394.9 711,394.2 712,394.0 713,394.2 714,395.0 715,394.9 716,394.2 717,393.9 718,395.0 719,394.0 720,395.6 721,391.5 722,389.4 723,392.3 724,395.7 725,394.4 726,394.5 727,395.6 728,394.4 729,396.1 730,395.4 731,395.2 732,395.7 733,394.5 734,395.7 735,395.6 736,395.4 737,395.5 738,395.2 739,395.2 740,395.4 741,397.1 742,394.6 743,394.4 744,394.4 745,394.9 746,394.7 747,393.4 748,393.6 749,396.0 750,395.0 751,395.9 752,395.1 753,396.2 754,395.4 755,396.5 756,395.1 757,394.1 758,394.8 759,394.2 760,396.0 761,395.7 762,395.5 763,394.2 764,395.7 765,395.6 766,395.5 767,395.0 768,394.2 769,394.2 770,394.3 771,395.2 772,394.4 773,394.9 774,393.8 775,394.2 776,392.5 777,395.1 778,395.0 779,394.9 780,394.7 781,394.6 782,394.5 783,395.0 784,395.0 785,395.2 786,394.3 787,394.7 788,395.8 789,394.8 790,395.1 791,394.3 792,395.2 793,394.5 794,394.6 795,394.2 796,394.3 797,393.8 798,393.7 799,393.7 800,393.6 801,393.8 802,393.5 803,394.3 804,395.1 805,393.7 806,391.8 807,389.5 808,392.9 809,395.2 810,394.2 811,394.2 812,392.5 813,394.8 814,393.6 815,393.0 816,394.6 817,394.6 818,394.8 819,394.3 820,394.1 821,395.0 822,394.2 823,394.8 824,394.5 825,394.1 826,394.3 827,395.4 828,395.4 829,394.4 830,395.7 831,394.6 832,394.4 833,394.8 834,394.9 835,395.1 836,393.7 837,394.5 838,393.5 839,395.6 840,394.1 841,394.4 842,394.1 843,393.8 844,394.0 845,395.1 846,392.8 847,394.7 848,393.2 849,394.5 850,395.2 851,394.7 852,395.2 853,395.1 854,394.4 855,395.2 856,394.3 857,394.9 858,395.2 859,395.0 860,394.9 861,394.1 862,395.4 863,395.2 864,394.7 865,394.3 866,395.4 867,394.7 868,395.3 869,394.8 870,395.4 871,393.4 872,394.8 873,393.9 874,394.2 875,395.4 876,394.1 877,394.4 878,394.0 879,393.5 880,394.4 881,393.7 882,394.6 883,394.1 884,394.2 885,393.6 886,393.3 887,394.2 888,393.9 889,392.1 890,390.0 891,393.3 892,395.8 893,395.3 894,394.9 895,394.9 896,395.4 897,395.4 898,395.6 899,394.7 900,395.7 901,395.9 902,395.4 903,395.4 904,394.8 905,395.1 906,395.0 907,395.3 908,395.1 909,395.2 910,395.6 911,394.4 912,395.2 913,395.2 914,395.1 915,395.3 916,395.1 917,395.9 918,394.2 919,395.1 920,394.8 921,394.8 922,394.6 923,395.2 924,394.7 925,395.1 926,394.2 927,394.1 928,394.1 929,395.6 930,394.9 931,394.5 932,395.2 933,393.5 934,393.3 935,394.9 936,394.3 937,394.0 938,395.3 939,394.7 940,395.3 941,395.6 942,395.5 943,395.6 944,395.0 945,395.6 946,394.6 947,394.9 948,396.0 949,394.8 950,395.0 951,395.8 952,394.8 953,395.6 954,394.1 955,394.8 956,394.6 957,395.1 958,395.3 959,396.7 960,395.3 961,395.3 962,396.4 963,394.8 964,395.2 965,395.0 966,394.7 967,394.0 968,394.3 969,393.8 970,390.9 971,390.1 972,393.3 973,395.9 974,394.3 975,394.1 976,394.3 977,393.9 978,393.6 979,393.6 980,394.6 981,393.4 982,395.6 983,394.3 984,394.2 985,394.4 986,394.5 987,395.6 988,394.1 989,395.0 990,394.9 991,394.9 992,394.9 993,393.9 994,395.6 995,393.8 996,394.2 997,394.4 998,393.4 999,393.0 1000,393.8 1001,394.1 1002,395.1 1003,393.5 1004,393.5 1005,394.0 1006,394.9 1007,394.6 1008,395.4 1009,393.9 1010,394.7 1011,395.0 1012,396.2 1013,394.7 1014,395.2 1015,396.0 1016,396.2 1017,395.1 1018,395.8 1019,394.7 1020,394.3 1021,395.4 1022,395.4 1023,395.8 1024,395.5 1025,394.5 1026,395.2 1027,393.4 1028,394.9 1029,393.7 1030,394.6 1031,394.5 1032,393.5 1033,394.6 1034,395.3 1035,394.7 1036,395.5 1037,395.4 1038,396.5 1039,395.1 1040,395.8 1041,395.2 1042,394.0 1043,395.2 1044,395.6 1045,395.3 1046,394.2 1047,396.1 1048,395.1 1049,395.5 1050,394.4 1051,395.1 1052,395.7 1053,394.5 1054,394.1 1055,393.9 1056,394.2 1057,391.9 1058,389.6 1059,394.1 1060,395.0 1061,395.4 1062,394.5 1063,395.1 1064,394.3 1065,394.6 1066,395.6 1067,394.5 1068,394.7 1069,394.0 1070,394.6 1071,393.7 1072,394.9 1073,395.7 1074,394.1 1075,395.2 1076,394.8 1077,395.5 1078,395.3 1079,395.6 1080,395.2 1081,394.6 1082,394.6 1083,394.2 1084,395.7 1085,396.0 1086,395.3 1087,394.5 1088,395.4 1089,395.0 1090,395.6 1091,394.3 1092,394.3 1093,395.2 1094,394.5 1095,395.9 1096,395.7 1097,396.5 1098,396.2 1099,395.7 1100,395.5 1101,397.3 1102,396.1 1103,395.4 1104,396.0 1105,395.4 1106,395.5 1107,396.5 1108,395.7 1109,395.4 1110,396.0 1111,395.7 1112,396.1 1113,395.1 1114,395.3 1115,396.1 1116,395.6 1117,395.2 1118,396.4 1119,394.5 1120,395.5 1121,394.9 1122,395.2 1123,394.7 1124,394.5 1125,396.0 1126,394.9 1127,395.5 1128,395.2 1129,395.0 1130,395.4 1131,394.0 1132,393.6 1133,394.8 1134,394.6"/></g><line x1="892.5" y1="84" x2="892.5" y2="408" stroke="#5cffff" stroke-width="2"/><line x1="1131" y1="84" x2="1131" y2="408" stroke="#5cffff" stroke-width="2"/></g></svg><svg style="left:0;top:0" width="1585" height="902"><defs><clipPath id="cp"><rect x="388" y="528" width="757" height="343"/></clipPath></defs><rect x="401" y="528" width="121" height="343" fill="#fde5e8"/><g clip-path="url(#cp)"><path d="M1119.5 528V716h1V871h1M828.5 541V605h1V757h1M649.5 620V706h1V782h1V844h1V871h1M1118.5 528V672h1V745h1V791h1M592.5 625V734h1V829h1V871h1M731.5 531V611h1V722h1M673.5 528V666h1V746h1M1097.5 672V774h1V840h1V871h1M998.5 528V722h1V803h1V871h1M419.5 528V636h1V810h1V871h1M980.5 528V650h1V819h1V853h1M611.5 528V649h1V726h1V860h1V871h1M755.5 626V773h1M1001.5 528V610h1V761h1M933.5 595V710h1V777h1V871h1M416.5 541V646h1V826h1M438.5 528V648h1V736h1V851h1V871h1M1059.5 651V831h1V871h1M919.5 528V702h1V766h1M766.5 610V689h1V836h1V871h1M1025.5 528V588h1V743h1V871h1M961.5 528V649h1V812h1V871h1M1010.5 528V663h1V852h1V865h1M906.5 654V750h1V868h1V871h1M597.5 528V618h1V778h1V871h1M427.5 594V697h1V746h1M687.5 528V644h1V771h1V793h1M667.5 559V683h1V837h1V860h1M994.5 627V738h1V871h1M437.5 528V725h1V809h1M1141.5 528V720h1V771h1M535.5 570V677h1V784h1V811h1M590.5 616V712h1V792h1V845h1M416.5 674V806h1V870h1M778.5 528V686h1V767h1M554.5 626V732h1V823h1M511.5 528V608h1V742h1V864h1M498.5 564V695h1V826h1V871h1M1033.5 528V663h1V805h1M725.5 528V683h1V835h1M845.5 528V700h1V809h1V871h1M909.5 528V595h1V718h1V789h1V871h1M1091.5 528V685h1V819h1M1042.5 528V612h1V762h1V852h1V871h1M1137.5 638V741h1M880.5 528V672h1V784h1V791h1M977.5 528V632h1V830h1V871h1M842.5 608V713h1V802h1M1089.5 624V812h1V871h1M1120.5 589V688h1V869h1V871h1M1104.5 655V797h1V834h1M777.5 649V723h1V871h1M1031.5 547V684h1V762h1V794h1M568.5 578V688h1V825h1V828h1M746.5 667V789h1V871h1M796.5 541V686h1V793h1V871h1M914.5 528V724h1V828h1V871h1M430.5 592V789h1V871h1M929.5 553V696h1V722h1M1076.5 667V744h1M535.5 528V658h1V765h1V863h1V871h1M684.5 602V702h1V871h1M1072.5 528V722h1V871h1M655.5 593V729h1V871h1M931.5 539V689h1V849h1V871h1M978.5 632V770h1M780.5 630V798h1V871h1M767.5 528V613h1V692h1V794h1V871h1M994.5 568V748h1V863h1M1048.5 528V623h1V692h1V756h1M1005.5 612V727h1V818h1V871h1M498.5 528V683h1V814h1M650.5 528V665h1V728h1V839h1V871h1M904.5 528V647h1V839h1V871h1M780.5 644V747h1V806h1M403.5 547V713h1V807h1M546.5 528V646h1V826h1V871h1M1078.5 646V715h1V755h1M484.5 532V695h1V757h1V823h1V841h1M411.5 660V808h1V871h1M1064.5 528V625h1V743h1V871h1M783.5 528V680h1V871h1M838.5 633V778h1V815h1M709.5 528V628h1V701h1V871h1M1018.5 613V747h1V871h1" fill="none" stroke="#ffe040" stroke-width="1" opacity="0.26"/><path d="M388 692l2 1l2 -8l2 1l2 1l2 5l2 13l2 -9l2 2l2 -2l2 -5l2 6l2 2l2 -2l2 -2l2 9l2 -4l2 0l2 -1l2 -1l2 9l2 -8l2 -6l2 0l2 -2l2 1l2 -3l2 7l2 -3l2 6l2 6l2 -8l2 10l2 -4l2 0l2 -3l2 -6l2 0l2 -3l2 8l2 -6l2 2l2 4l2 8l2 1l2 -4l2 4l2 3l2 -3l2 2l2 -3l2 -1l2 -6l2 3l2 -8l2 1l2 8l2 -13l2 -4l2 10l2 -1l2 4l2 -5l2 -4l2 9l2 1l2 -6l2 -2l2 5l2 -3l2 9l2 -2l2 -8l2 -3l2 5l2 -2l2 -3l2 5l2 -3l2 -6l2 2l2 -2l2 -2l2 9l2 2l2 7l2 6l2 -1l2 -4l2 -7l2 8l2 -4l2 15l2 3l2 -6l2 -1l2 0l2 4l2 -6l2 -3l2 -15l2 3l2 4l2 3l2 -3l2 6l2 -5l2 5l2 -1l2 0l2 -13l2 -4l2 8l2 -10l2 3l2 -1l2 1l2 -8l2 -1l2 -15l2 2l2 -8l2 -9l2 13l2 -13l2 4l2 -1l2 -21l2 2l2 0l2 -3l2 -6l2 -9l2 10l2 5l2 0l2 -3l2 3l2 -10l2 1l2 10l2 7l2 -16l2 -13l2 12l2 3l2 11l2 14l2 10l2 -5l2 15l2 -2l2 -5l2 -4l2 6l2 -2l2 4l2 10l2 -9l2 -12l2 4l2 5l2 17l2 -3l2 -3l2 10l2 -1l2 8l2 16l2 -4l2 10l2 -16l2 1l2 -15l2 0l2 2l2 -1l2 8l2 5l2 -7l2 3l2 8l2 15l2 -10l2 -8l2 -13l2 14l2 1l2 15l2 1l2 -15l2 1l2 -3l2 4l2 5l2 -5l2 -6l2 8l2 21l2 2l2 -12l2 2l2 -10l2 -2l2 -9l2 12l2 17l2 -4l2 5l2 -12l2 7l2 -7l2 12l2 -10l2 -8l2 7l2 -7l2 -11l2 -3l2 -7l2 -3l2 0l2 0l2 -3l2 -2l2 -4l2 -4l2 -5l2 10l2 -1l2 7l2 18l2 -13l2 -3l2 13l2 -1l2 17l2 11l2 -4l2 -5l2 -5l2 -8l2 10l2 14l2 -14l2 -9l2 13l2 14l2 4l2 -13l2 1l2 -3l2 -1l2 11l2 6l2 -2l2 -8l2 -11l2 7l2 -18l2 0l2 20l2 -7l2 4l2 -11l2 7l2 2l2 -14l2 -1l2 -12l2 2l2 -5l2 -13l2 21l2 9l2 -15l2 4l2 -4l2 14l2 -7l2 14l2 2l2 11l2 -13l2 -7l2 4l2 -13l2 -13l2 23l2 -3l2 -11l2 2l2 5l2 -17l2 9l2 -7l2 -15l2 4l2 11l2 1l2 -12l2 7l2 -7l2 7l2 4l2 -6l2 -1l2 17l2 -9l2 1l2 0l2 -3l2 -10l2 15l2 -1l2 -13l2 19l2 -16l2 4l2 0l2 -17l2 24l2 -11l2 14l2 -9l2 -3l2 12l2 -1l2 6l2 -1l2 -2l2 -1l2 7l2 4l2 -3l2 9l2 -14l2 12l2 -2l2 -5l2 8l2 -15l2 -7l2 0l2 -8l2 23l2 7l2 -2l2 -2l2 9l2 -9l2 -20l2 13l2 -1l2 -3l2 -8l2 15l2 16l2 5l2 -6l2 0l2 3l2 -12l2 -10l2 10l2 -5l2 -7l2 11l2 -2l2 -11l2 -16l2 21l2 -1l2 8l2 -4l2 -11l2 6l2 19l2 -5l2 -13M388 692l2 9l2 -11l2 6l2 0l2 1l2 -2l2 -2l2 3l2 2l2 1l2 -3l2 -2l2 -2l2 4l2 -4l2 0l2 3l2 1l2 3l2 -3l2 16l2 -5l2 -2l2 5l2 -17l2 -2l2 4l2 -5l2 7l2 -5l2 1l2 4l2 3l2 10l2 -8l2 1l2 2l2 2l2 4l2 -6l2 -8l2 0l2 1l2 0l2 3l2 7l2 -2l2 1l2 0l2 -2l2 1l2 5l2 -2l2 -5l2 -8l2 4l2 2l2 -6l2 8l2 1l2 -6l2 -8l2 5l2 -4l2 1l2 -4l2 10l2 0l2 2l2 -4l2 -6l2 -5l2 19l2 -6l2 -3l2 -7l2 4l2 -1l2 7l2 -2l2 2l2 1l2 2l2 -2l2 6l2 3l2 -14l2 2l2 -5l2 -6l2 6l2 0l2 -1l2 -3l2 1l2 -10l2 6l2 -1l2 3l2 -1l2 1l2 5l2 4l2 -1l2 10l2 0l2 -4l2 1l2 9l2 -9l2 4l2 -4l2 4l2 -6l2 -4l2 0l2 6l2 -6l2 -4l2 2l2 9l2 -22l2 5l2 -2l2 -7l2 7l2 -5l2 20l2 -15l2 7l2 4l2 -6l2 -3l2 2l2 -7l2 16l2 -9l2 0l2 -23l2 -4l2 -2l2 13l2 2l2 -2l2 -3l2 -16l2 19l2 -9l2 -1l2 6l2 7l2 15l2 -5l2 10l2 1l2 -3l2 1l2 6l2 0l2 -20l2 6l2 2l2 13l2 5l2 11l2 -18l2 -21l2 -2l2 9l2 0l2 4l2 -3l2 -1l2 12l2 -10l2 8l2 -10l2 11l2 -13l2 11l2 -8l2 1l2 14l2 -12l2 -11l2 13l2 4l2 -8l2 -1l2 -8l2 16l2 3l2 1l2 -7l2 1l2 -20l2 -5l2 11l2 -14l2 3l2 5l2 13l2 1l2 -18l2 7l2 -6l2 19l2 13l2 9l2 -4l2 -17l2 -1l2 7l2 -2l2 -2l2 8l2 -5l2 7l2 -12l2 10l2 7l2 -10l2 5l2 -13l2 3l2 14l2 0l2 0l2 -17l2 19l2 -20l2 5l2 13l2 2l2 -12l2 12l2 8l2 -24l2 -5l2 12l2 20l2 -7l2 -19l2 -2l2 -1l2 -8l2 16l2 -5l2 -6l2 0l2 10l2 -5l2 -4l2 4l2 11l2 0l2 0l2 17l2 -8l2 5l2 10l2 8l2 -29l2 0l2 16l2 -11l2 -7l2 5l2 -4l2 -10l2 11l2 3l2 -7l2 -7l2 1l2 2l2 4l2 -2l2 1l2 -4l2 -16l2 -12l2 7l2 14l2 -2l2 15l2 8l2 -3l2 -2l2 4l2 -1l2 -16l2 -10l2 7l2 -3l2 -9l2 -4l2 -7l2 12l2 15l2 -4l2 10l2 -1l2 -3l2 -2l2 8l2 7l2 -6l2 -11l2 0l2 -15l2 10l2 6l2 -2l2 3l2 -11l2 -8l2 -4l2 2l2 -3l2 -9l2 26l2 -16l2 13l2 3l2 6l2 15l2 2l2 -15l2 -12l2 1l2 6l2 -6l2 -18l2 22l2 17l2 -16l2 13l2 -18l2 -1l2 2l2 1l2 -4l2 9l2 7l2 -5l2 17l2 -17l2 -8l2 -14l2 -6l2 1l2 -8l2 10l2 30l2 -14l2 1l2 -8l2 12l2 6l2 9l2 -2l2 -5l2 -8l2 3l2 -21l2 3l2 -1l2 13l2 16l2 6l2 -18l2 -5l2 12l2 -9l2 0l2 7l2 3l2 -1M388 703l2 1l2 6l2 0l2 -10l2 1l2 6l2 -4l2 2l2 0l2 9l2 -13l2 -1l2 1l2 -2l2 3l2 -1l2 1l2 -7l2 6l2 -5l2 15l2 -7l2 -8l2 1l2 5l2 -9l2 3l2 -6l2 6l2 8l2 -1l2 -1l2 -1l2 1l2 6l2 7l2 6l2 -3l2 -7l2 2l2 -7l2 -5l2 10l2 2l2 -1l2 -11l2 -10l2 -2l2 4l2 -3l2 -3l2 6l2 8l2 -6l2 -1l2 -4l2 6l2 7l2 -2l2 -6l2 -2l2 -2l2 9l2 7l2 2l2 0l2 9l2 -6l2 -7l2 -5l2 6l2 -5l2 -5l2 0l2 -8l2 -5l2 12l2 -6l2 3l2 7l2 -6l2 11l2 -9l2 -9l2 4l2 -15l2 6l2 9l2 4l2 1l2 -1l2 -5l2 7l2 -6l2 -4l2 5l2 5l2 -2l2 5l2 -4l2 2l2 -6l2 -4l2 1l2 4l2 2l2 6l2 5l2 5l2 -5l2 6l2 -6l2 -5l2 9l2 -3l2 0l2 4l2 6l2 -9l2 2l2 15l2 -1l2 5l2 0l2 -7l2 8l2 10l2 -6l2 -2l2 -3l2 9l2 10l2 15l2 8l2 -7l2 2l2 5l2 3l2 -6l2 -4l2 -5l2 -3l2 -6l2 15l2 -4l2 1l2 -7l2 -1l2 12l2 -15l2 -5l2 11l2 10l2 -13l2 -6l2 -13l2 27l2 -13l2 -3l2 -13l2 11l2 -18l2 -12l2 3l2 -5l2 -13l2 -22l2 31l2 -3l2 3l2 -1l2 4l2 -15l2 -4l2 14l2 3l2 -7l2 1l2 -3l2 -4l2 -10l2 4l2 -3l2 -5l2 6l2 4l2 1l2 -14l2 3l2 8l2 7l2 16l2 1l2 16l2 -6l2 -15l2 10l2 -7l2 -19l2 -1l2 -6l2 6l2 -4l2 -2l2 8l2 -7l2 7l2 -7l2 15l2 -2l2 -2l2 1l2 -1l2 10l2 -4l2 -1l2 4l2 -15l2 -11l2 -15l2 10l2 24l2 -4l2 6l2 -6l2 19l2 -16l2 -9l2 -1l2 -6l2 18l2 18l2 0l2 -16l2 1l2 4l2 -6l2 -6l2 -5l2 6l2 5l2 -13l2 9l2 5l2 8l2 -21l2 -7l2 18l2 5l2 -4l2 6l2 -3l2 8l2 3l2 -17l2 8l2 -14l2 0l2 12l2 -3l2 -8l2 4l2 3l2 5l2 2l2 -5l2 7l2 7l2 -13l2 2l2 -3l2 -12l2 -5l2 7l2 0l2 8l2 2l2 6l2 3l2 1l2 -1l2 -8l2 -5l2 -4l2 3l2 6l2 10l2 -20l2 11l2 -8l2 -4l2 0l2 12l2 4l2 -11l2 -3l2 5l2 0l2 6l2 -2l2 3l2 2l2 1l2 -9l2 4l2 7l2 -8l2 1l2 -1l2 8l2 -17l2 4l2 1l2 13l2 10l2 -13l2 -5l2 -2l2 -14l2 -3l2 -15l2 14l2 14l2 0l2 -4l2 6l2 -2l2 5l2 -10l2 0l2 -8l2 8l2 3l2 -2l2 10l2 -5l2 9l2 3l2 3l2 2l2 -12l2 9l2 3l2 -11l2 -14l2 19l2 -1l2 0l2 -12l2 5l2 4l2 -30l2 0l2 -5l2 15l2 15l2 8l2 3l2 -6l2 -5l2 3l2 7l2 -3l2 -7l2 -18l2 17l2 -15l2 5l2 9l2 0l2 -7l2 2l2 3l2 -7l2 1l2 -9l2 -4l2 2l2 5M388 703l2 -3l2 6l2 2l2 -3l2 -3l2 3l2 6l2 6l2 -8l2 -7l2 7l2 -8l2 0l2 -2l2 -1l2 -5l2 3l2 -1l2 -1l2 -2l2 5l2 3l2 5l2 4l2 -10l2 10l2 2l2 -8l2 12l2 -6l2 0l2 -17l2 4l2 3l2 5l2 8l2 4l2 -11l2 -4l2 0l2 -6l2 11l2 1l2 5l2 -3l2 -3l2 -5l2 2l2 -2l2 8l2 -1l2 -5l2 3l2 -3l2 2l2 0l2 1l2 6l2 -6l2 0l2 5l2 2l2 -3l2 -2l2 -11l2 7l2 -14l2 -2l2 0l2 8l2 -7l2 4l2 7l2 2l2 -9l2 10l2 0l2 -1l2 -4l2 5l2 -4l2 4l2 -2l2 -3l2 1l2 -1l2 -2l2 5l2 10l2 -4l2 4l2 -2l2 -5l2 -2l2 -4l2 5l2 9l2 -11l2 -3l2 17l2 -1l2 -6l2 8l2 -7l2 9l2 -2l2 1l2 -3l2 13l2 -3l2 -5l2 -1l2 0l2 11l2 -4l2 9l2 15l2 -2l2 4l2 1l2 -9l2 14l2 3l2 -15l2 9l2 27l2 8l2 0l2 9l2 11l2 2l2 4l2 7l2 3l2 -3l2 10l2 -3l2 1l2 17l2 2l2 4l2 5l2 7l2 3l2 -3l2 -14l2 11l2 -13l2 -14l2 -12l2 0l2 -6l2 -6l2 -3l2 -3l2 0l2 -16l2 -2l2 -11l2 -14l2 -2l2 -5l2 -4l2 -5l2 -22l2 4l2 -1l2 -12l2 -2l2 -9l2 -15l2 1l2 1l2 0l2 2l2 -11l2 -9l2 2l2 3l2 2l2 -4l2 -4l2 7l2 -4l2 -1l2 -14l2 8l2 0l2 -1l2 3l2 0l2 15l2 -27l2 12l2 3l2 9l2 -3l2 -7l2 13l2 -13l2 6l2 6l2 -21l2 2l2 14l2 -3l2 1l2 10l2 -4l2 9l2 -7l2 3l2 8l2 0l2 4l2 -3l2 5l2 -13l2 4l2 15l2 1l2 11l2 -5l2 -7l2 1l2 -12l2 5l2 1l2 -18l2 -13l2 14l2 4l2 -19l2 15l2 4l2 4l2 -7l2 6l2 1l2 -1l2 -10l2 12l2 1l2 -7l2 -3l2 23l2 -6l2 -4l2 -11l2 9l2 9l2 2l2 17l2 -19l2 -16l2 3l2 -8l2 5l2 -1l2 -1l2 5l2 15l2 -9l2 14l2 -24l2 -1l2 9l2 -11l2 -22l2 8l2 12l2 2l2 -10l2 2l2 3l2 3l2 8l2 -9l2 1l2 9l2 -6l2 -2l2 11l2 -1l2 1l2 2l2 -5l2 2l2 -2l2 17l2 -15l2 -12l2 -10l2 6l2 -12l2 1l2 0l2 11l2 0l2 -7l2 7l2 2l2 1l2 8l2 -3l2 4l2 -6l2 22l2 1l2 -3l2 -5l2 -17l2 -8l2 18l2 -16l2 7l2 14l2 11l2 -7l2 -1l2 4l2 -17l2 11l2 -12l2 -9l2 8l2 13l2 3l2 7l2 0l2 16l2 1l2 -15l2 -7l2 9l2 -18l2 15l2 1l2 7l2 -13l2 -1l2 5l2 19l2 -15l2 3l2 -6l2 -3l2 10l2 -3l2 9l2 9l2 -16l2 -4l2 -20l2 5l2 0l2 4l2 7l2 -9l2 23l2 -8l2 -4l2 -9l2 -18l2 11l2 -1l2 13l2 -1l2 0l2 -5l2 12l2 6l2 7l2 2l2 -13l2 -2l2 -16l2 -4l2 -3M388 721l2 -9l2 -4l2 -13l2 -4l2 8l2 13l2 -4l2 -8l2 -4l2 0l2 7l2 -9l2 -7l2 18l2 9l2 -11l2 -8l2 1l2 3l2 1l2 -3l2 1l2 1l2 6l2 4l2 3l2 -6l2 -1l2 -1l2 2l2 7l2 -10l2 9l2 1l2 -6l2 6l2 3l2 -7l2 -10l2 1l2 3l2 1l2 -3l2 8l2 6l2 -5l2 5l2 -1l2 -3l2 0l2 -7l2 5l2 -1l2 0l2 4l2 -6l2 -1l2 -6l2 -2l2 2l2 1l2 1l2 -1l2 0l2 8l2 2l2 -3l2 -3l2 1l2 3l2 0l2 4l2 0l2 -2l2 1l2 -14l2 1l2 4l2 -8l2 4l2 -9l2 9l2 10l2 0l2 2l2 -13l2 1l2 6l2 2l2 -6l2 11l2 -5l2 -1l2 -5l2 5l2 -3l2 -4l2 6l2 -7l2 5l2 1l2 6l2 -6l2 -3l2 1l2 -4l2 -2l2 2l2 -1l2 8l2 10l2 10l2 -6l2 -16l2 8l2 -1l2 8l2 -12l2 12l2 -8l2 4l2 5l2 -11l2 7l2 2l2 -4l2 0l2 11l2 -4l2 0l2 7l2 -4l2 1l2 0l2 -5l2 -8l2 6l2 2l2 -16l2 8l2 3l2 3l2 -9l2 8l2 -12l2 2l2 14l2 -10l2 -14l2 -2l2 -1l2 -2l2 8l2 3l2 -7l2 -13l2 12l2 -2l2 -11l2 9l2 -1l2 10l2 6l2 9l2 -11l2 9l2 -15l2 10l2 -23l2 14l2 -11l2 4l2 3l2 0l2 -11l2 5l2 -3l2 6l2 5l2 -6l2 -10l2 10l2 2l2 4l2 15l2 -1l2 7l2 1l2 -2l2 7l2 -5l2 -1l2 6l2 -9l2 -9l2 14l2 7l2 -4l2 2l2 1l2 -1l2 5l2 -2l2 -10l2 -4l2 5l2 -9l2 -2l2 4l2 -2l2 -12l2 4l2 -5l2 24l2 2l2 5l2 1l2 -24l2 -6l2 3l2 2l2 0l2 -2l2 -1l2 3l2 -7l2 -2l2 -2l2 -16l2 21l2 -16l2 2l2 5l2 15l2 -11l2 0l2 8l2 -7l2 7l2 4l2 23l2 -3l2 -2l2 1l2 0l2 5l2 0l2 -20l2 -11l2 4l2 13l2 7l2 -4l2 -9l2 4l2 -4l2 6l2 -2l2 7l2 -3l2 2l2 -3l2 -3l2 -3l2 3l2 1l2 -5l2 5l2 -9l2 1l2 12l2 7l2 2l2 -3l2 -14l2 3l2 15l2 6l2 4l2 -13l2 6l2 -15l2 0l2 -13l2 0l2 -1l2 0l2 1l2 2l2 10l2 -2l2 1l2 -7l2 -1l2 -4l2 4l2 -6l2 1l2 1l2 5l2 5l2 13l2 -3l2 3l2 4l2 -6l2 -11l2 -14l2 6l2 13l2 -17l2 -8l2 6l2 12l2 -15l2 -3l2 4l2 -7l2 -20l2 16l2 2l2 -6l2 -2l2 -2l2 23l2 -7l2 -1l2 1l2 8l2 9l2 -12l2 6l2 -11l2 12l2 2l2 1l2 12l2 8l2 9l2 -27l2 0l2 1l2 -14l2 -3l2 -1l2 4l2 -8l2 16l2 6l2 -5l2 -1l2 -10l2 -5l2 -2l2 32l2 1l2 -5l2 5l2 0l2 5l2 -8l2 6l2 -11l2 1l2 -5l2 16l2 7l2 -8l2 -14l2 -11l2 -4l2 13l2 0l2 4l2 -3l2 3l2 -2l2 17l2 -13M388 698l2 3l2 2l2 6l2 -3l2 3l2 -4l2 6l2 10l2 -4l2 0l2 1l2 -10l2 3l2 -4l2 7l2 -7l2 -2l2 11l2 -3l2 -5l2 -6l2 -7l2 9l2 8l2 2l2 7l2 0l2 -7l2 -2l2 -4l2 4l2 3l2 -2l2 -8l2 4l2 -5l2 11l2 10l2 -7l2 -18l2 -1l2 10l2 -9l2 -1l2 5l2 5l2 -9l2 0l2 1l2 1l2 -4l2 -3l2 9l2 -10l2 5l2 1l2 7l2 -11l2 -6l2 8l2 -14l2 4l2 -3l2 6l2 5l2 2l2 1l2 -8l2 0l2 12l2 -4l2 -8l2 3l2 5l2 0l2 -7l2 11l2 3l2 -1l2 -3l2 7l2 -15l2 2l2 -3l2 3l2 -3l2 2l2 12l2 10l2 -13l2 -3l2 -2l2 4l2 -1l2 3l2 -2l2 -6l2 4l2 5l2 4l2 -4l2 -19l2 -2l2 13l2 6l2 -13l2 -3l2 -2l2 -8l2 2l2 13l2 -5l2 -13l2 -11l2 0l2 -3l2 -4l2 2l2 1l2 -10l2 -11l2 -12l2 -4l2 -5l2 -6l2 -10l2 -9l2 -4l2 -12l2 -8l2 -7l2 -8l2 -11l2 -10l2 -14l2 -9l2 -4l2 -1l2 -2l2 -16l2 -10l2 -4l2 10l2 6l2 -11l2 0l2 3l2 9l2 -6l2 7l2 14l2 6l2 -11l2 10l2 -2l2 2l2 11l2 8l2 2l2 9l2 16l2 9l2 4l2 1l2 17l2 10l2 3l2 10l2 7l2 7l2 9l2 2l2 5l2 -2l2 -4l2 17l2 -7l2 1l2 10l2 20l2 13l2 -12l2 -7l2 -2l2 10l2 4l2 10l2 -3l2 -4l2 7l2 -7l2 7l2 -11l2 12l2 7l2 -1l2 -2l2 5l2 -3l2 -12l2 18l2 -17l2 2l2 12l2 9l2 -11l2 -2l2 -3l2 11l2 7l2 1l2 -7l2 8l2 -14l2 -4l2 -8l2 6l2 -3l2 3l2 -4l2 8l2 -7l2 19l2 -6l2 -6l2 -14l2 19l2 6l2 -6l2 -6l2 0l2 -1l2 -8l2 -4l2 1l2 11l2 6l2 -24l2 -1l2 3l2 -16l2 19l2 5l2 5l2 26l2 -15l2 4l2 -8l2 15l2 -14l2 -15l2 -11l2 3l2 -4l2 20l2 -6l2 22l2 3l2 0l2 0l2 1l2 -11l2 -4l2 -4l2 3l2 -9l2 9l2 -5l2 -14l2 3l2 4l2 -3l2 -4l2 14l2 6l2 5l2 -6l2 -6l2 -16l2 3l2 0l2 -10l2 2l2 7l2 -2l2 -12l2 2l2 10l2 14l2 -20l2 9l2 0l2 -8l2 11l2 7l2 -8l2 7l2 4l2 6l2 -18l2 8l2 8l2 14l2 -4l2 -5l2 5l2 10l2 -9l2 -13l2 11l2 19l2 -10l2 8l2 4l2 1l2 -12l2 2l2 17l2 -9l2 -12l2 11l2 -20l2 -4l2 3l2 -7l2 12l2 -8l2 -18l2 -10l2 14l2 6l2 -10l2 15l2 18l2 -9l2 -20l2 18l2 -10l2 -20l2 7l2 2l2 18l2 8l2 3l2 -11l2 3l2 10l2 -6l2 -5l2 0l2 -4l2 9l2 14l2 -18l2 -7l2 -8l2 0l2 -6l2 -12l2 -3l2 17l2 7l2 9l2 13l2 -1l2 -3l2 4l2 -6l2 4l2 19l2 -24l2 -2l2 8l2 -4l2 -2l2 1l2 -4l2 -5l2 -1M388 710l2 -8l2 -7l2 2l2 6l2 -2l2 4l2 9l2 -1l2 1l2 -1l2 -12l2 -6l2 -5l2 -4l2 7l2 6l2 -4l2 -6l2 4l2 -7l2 18l2 2l2 -6l2 1l2 -3l2 4l2 -4l2 0l2 11l2 -3l2 -12l2 7l2 12l2 -9l2 -5l2 -4l2 1l2 6l2 1l2 -1l2 -6l2 11l2 -7l2 7l2 -5l2 -4l2 0l2 4l2 9l2 -6l2 4l2 3l2 4l2 -3l2 6l2 -8l2 3l2 2l2 -6l2 1l2 -5l2 10l2 4l2 -4l2 -4l2 -2l2 -6l2 -3l2 0l2 3l2 -1l2 -4l2 10l2 -3l2 7l2 7l2 6l2 -9l2 -14l2 -3l2 -2l2 1l2 7l2 2l2 9l2 -7l2 4l2 -1l2 -5l2 -5l2 4l2 0l2 4l2 1l2 -3l2 8l2 2l2 -17l2 3l2 -5l2 3l2 6l2 -11l2 8l2 5l2 -6l2 7l2 -3l2 -3l2 9l2 -3l2 3l2 -4l2 -15l2 5l2 2l2 3l2 -8l2 -2l2 5l2 -8l2 -8l2 12l2 5l2 11l2 9l2 -4l2 -3l2 -6l2 -6l2 6l2 9l2 4l2 -13l2 27l2 1l2 5l2 -7l2 -5l2 1l2 13l2 -13l2 -8l2 -2l2 18l2 -6l2 6l2 6l2 -5l2 1l2 5l2 -14l2 -3l2 16l2 -4l2 -4l2 -7l2 0l2 -1l2 7l2 -6l2 22l2 -6l2 3l2 -8l2 -4l2 2l2 7l2 0l2 -9l2 -16l2 7l2 -10l2 3l2 4l2 8l2 -5l2 -8l2 -4l2 -1l2 15l2 -2l2 -4l2 -12l2 0l2 -9l2 18l2 -16l2 0l2 7l2 5l2 12l2 -13l2 -8l2 1l2 -4l2 -2l2 -8l2 12l2 -8l2 -9l2 -8l2 21l2 6l2 15l2 -1l2 11l2 -17l2 -24l2 13l2 10l2 -2l2 -5l2 -1l2 3l2 -15l2 -4l2 -1l2 5l2 -10l2 7l2 -3l2 -2l2 -12l2 -14l2 -11l2 18l2 1l2 -2l2 16l2 -9l2 -5l2 8l2 20l2 0l2 -1l2 -4l2 6l2 0l2 -15l2 -4l2 14l2 5l2 12l2 -1l2 -10l2 2l2 -2l2 -11l2 -13l2 3l2 -3l2 4l2 9l2 5l2 1l2 -11l2 2l2 -3l2 6l2 -6l2 0l2 6l2 8l2 -3l2 -8l2 6l2 8l2 -4l2 -5l2 -4l2 5l2 1l2 10l2 -10l2 24l2 5l2 -17l2 -9l2 14l2 -10l2 5l2 7l2 -1l2 -17l2 9l2 -7l2 1l2 20l2 1l2 -3l2 21l2 -15l2 -16l2 1l2 -19l2 -7l2 -2l2 -10l2 15l2 6l2 6l2 3l2 1l2 -6l2 5l2 -2l2 2l2 -3l2 11l2 3l2 0l2 -8l2 -8l2 7l2 -2l2 10l2 -5l2 4l2 1l2 2l2 -10l2 -6l2 8l2 -6l2 -11l2 10l2 -1l2 -2l2 -9l2 20l2 7l2 0l2 -24l2 7l2 6l2 -8l2 9l2 14l2 -5l2 -8l2 -3l2 9l2 -7l2 -6l2 10l2 -6l2 -15l2 12l2 6l2 5l2 6l2 -10l2 1l2 -3l2 9l2 3l2 -1l2 -12l2 3l2 -6l2 -11l2 14l2 -1l2 -3l2 9l2 1l2 5l2 -22l2 4l2 -4l2 -1l2 12l2 -3l2 -22l2 5l2 15l2 -10l2 16M388 707l2 -4l2 -5l2 6l2 -4l2 0l2 -4l2 8l2 -3l2 2l2 -6l2 -3l2 -1l2 12l2 2l2 -2l2 -3l2 -2l2 -8l2 17l2 -7l2 -3l2 1l2 -2l2 2l2 7l2 -5l2 4l2 2l2 -1l2 -3l2 -3l2 4l2 -10l2 6l2 -5l2 5l2 -2l2 2l2 0l2 -3l2 4l2 2l2 -3l2 0l2 -4l2 6l2 -4l2 -10l2 0l2 -2l2 1l2 14l2 3l2 -10l2 -5l2 5l2 0l2 4l2 1l2 -10l2 5l2 6l2 -3l2 2l2 -11l2 -1l2 1l2 6l2 -5l2 6l2 7l2 -5l2 -8l2 -1l2 9l2 10l2 -1l2 -9l2 -3l2 -2l2 -3l2 2l2 4l2 -3l2 4l2 1l2 2l2 -4l2 2l2 -7l2 1l2 2l2 -6l2 1l2 15l2 -1l2 2l2 1l2 -7l2 -3l2 1l2 11l2 -3l2 2l2 -2l2 -6l2 1l2 0l2 5l2 -12l2 17l2 -10l2 0l2 -12l2 14l2 -3l2 -3l2 11l2 0l2 1l2 -2l2 -5l2 -9l2 8l2 2l2 -14l2 1l2 4l2 -4l2 -11l2 -2l2 3l2 3l2 -5l2 7l2 -3l2 0l2 2l2 -6l2 -12l2 11l2 5l2 -5l2 -8l2 23l2 0l2 -17l2 11l2 7l2 6l2 -4l2 -7l2 2l2 -8l2 -8l2 -4l2 -4l2 -5l2 18l2 -4l2 7l2 5l2 2l2 -6l2 7l2 -10l2 -12l2 23l2 6l2 6l2 -3l2 -17l2 8l2 1l2 13l2 -5l2 -2l2 12l2 -15l2 -4l2 6l2 -3l2 4l2 -9l2 21l2 9l2 5l2 -6l2 -1l2 -2l2 1l2 5l2 -12l2 3l2 -3l2 4l2 1l2 -2l2 -8l2 9l2 1l2 -9l2 9l2 8l2 -2l2 -3l2 -7l2 5l2 6l2 0l2 -4l2 -8l2 -3l2 8l2 -7l2 2l2 -11l2 10l2 -6l2 4l2 -5l2 -2l2 9l2 -1l2 8l2 -9l2 -3l2 -2l2 0l2 0l2 3l2 -10l2 4l2 -9l2 -5l2 15l2 12l2 6l2 0l2 6l2 -25l2 -4l2 0l2 13l2 17l2 -10l2 9l2 0l2 -4l2 0l2 -5l2 2l2 5l2 -20l2 6l2 8l2 1l2 -2l2 -7l2 8l2 -15l2 9l2 2l2 14l2 -13l2 4l2 -12l2 -1l2 23l2 -7l2 -9l2 3l2 -3l2 0l2 -11l2 -21l2 29l2 -10l2 1l2 -8l2 25l2 -7l2 -15l2 6l2 -1l2 6l2 22l2 9l2 -7l2 0l2 3l2 14l2 -10l2 -8l2 -13l2 14l2 -18l2 -22l2 36l2 -13l2 11l2 12l2 -6l2 -10l2 2l2 -9l2 9l2 -1l2 16l2 -5l2 -21l2 -7l2 -3l2 17l2 -7l2 1l2 7l2 -17l2 -5l2 -15l2 21l2 9l2 8l2 -23l2 0l2 3l2 15l2 -5l2 1l2 17l2 2l2 -10l2 -5l2 -5l2 18l2 10l2 -15l2 -8l2 2l2 -9l2 4l2 9l2 8l2 -3l2 2l2 -20l2 10l2 11l2 1l2 -10l2 -8l2 0l2 -10l2 -17l2 3l2 17l2 16l2 -2l2 4l2 -7l2 -4l2 -6l2 -16l2 5l2 6l2 -24l2 6l2 9l2 -2l2 -1l2 8l2 12l2 -18l2 15l2 0l2 6l2 -33l2 -6l2 12M388 702l2 4l2 3l2 0l2 3l2 0l2 -9l2 12l2 -8l2 -8l2 15l2 -9l2 0l2 8l2 -4l2 0l2 -4l2 -8l2 3l2 10l2 2l2 0l2 -2l2 8l2 -3l2 -8l2 -12l2 5l2 -2l2 1l2 7l2 -5l2 5l2 -4l2 2l2 -2l2 -2l2 -1l2 7l2 -6l2 5l2 1l2 2l2 3l2 -7l2 -6l2 -4l2 -1l2 -4l2 0l2 9l2 -5l2 6l2 -4l2 7l2 1l2 0l2 2l2 -13l2 -6l2 -4l2 1l2 16l2 -6l2 5l2 13l2 7l2 -2l2 -6l2 -10l2 -2l2 0l2 -1l2 0l2 -1l2 7l2 -2l2 6l2 -2l2 1l2 -3l2 1l2 -5l2 6l2 0l2 -9l2 4l2 -13l2 2l2 4l2 -5l2 -3l2 0l2 -3l2 4l2 0l2 6l2 -1l2 -5l2 -3l2 0l2 5l2 0l2 9l2 -10l2 -8l2 -8l2 -16l2 -10l2 3l2 5l2 -3l2 -10l2 2l2 4l2 -12l2 -1l2 1l2 -8l2 -14l2 -8l2 -6l2 1l2 3l2 -1l2 6l2 -8l2 -4l2 -7l2 -10l2 -3l2 -1l2 -2l2 4l2 -5l2 6l2 2l2 11l2 8l2 -3l2 -2l2 5l2 -6l2 9l2 1l2 5l2 8l2 -12l2 9l2 4l2 11l2 -6l2 -1l2 2l2 16l2 15l2 -3l2 1l2 5l2 -4l2 14l2 7l2 -5l2 -14l2 26l2 0l2 6l2 11l2 0l2 7l2 -16l2 -1l2 2l2 -4l2 4l2 1l2 -4l2 10l2 4l2 4l2 -7l2 4l2 1l2 -2l2 21l2 -12l2 16l2 -11l2 7l2 1l2 -13l2 -10l2 -11l2 -15l2 10l2 4l2 0l2 -9l2 -1l2 11l2 -9l2 4l2 0l2 10l2 -21l2 21l2 -9l2 15l2 -16l2 11l2 -2l2 9l2 1l2 -9l2 -11l2 7l2 1l2 -3l2 5l2 -12l2 21l2 -9l2 7l2 0l2 1l2 -20l2 -3l2 -13l2 12l2 -7l2 2l2 -10l2 5l2 18l2 9l2 -8l2 1l2 -7l2 4l2 13l2 -6l2 4l2 0l2 -14l2 2l2 6l2 -8l2 -1l2 18l2 7l2 5l2 -11l2 0l2 2l2 -7l2 -6l2 23l2 1l2 -12l2 3l2 -19l2 2l2 9l2 -18l2 6l2 11l2 -4l2 -5l2 9l2 -1l2 -6l2 11l2 2l2 2l2 -8l2 2l2 -15l2 7l2 5l2 -19l2 12l2 -2l2 6l2 4l2 0l2 3l2 5l2 -2l2 1l2 -4l2 -8l2 -1l2 1l2 -4l2 9l2 8l2 -4l2 -6l2 16l2 3l2 -7l2 16l2 4l2 -6l2 -6l2 6l2 -4l2 -9l2 -13l2 16l2 -6l2 13l2 -15l2 6l2 -6l2 9l2 -14l2 6l2 7l2 -10l2 -4l2 -4l2 9l2 10l2 7l2 -4l2 -4l2 -1l2 -4l2 8l2 -5l2 7l2 -11l2 -11l2 9l2 14l2 -8l2 -7l2 15l2 -14l2 3l2 1l2 -1l2 -9l2 0l2 -19l2 18l2 11l2 -2l2 -5l2 1l2 -3l2 8l2 5l2 -20l2 2l2 19l2 3l2 -14l2 2l2 11l2 -3l2 9l2 -8l2 -9l2 5l2 7l2 -2l2 -14l2 5l2 -3l2 -1l2 9l2 1l2 16l2 -16l2 -9l2 6l2 -9l2 6M388 708l2 0l2 0l2 8l2 -1l2 -2l2 -5l2 4l2 -8l2 -7l2 5l2 -3l2 9l2 1l2 -2l2 2l2 -3l2 -5l2 9l2 -8l2 -3l2 -8l2 0l2 8l2 -3l2 7l2 -7l2 -2l2 -4l2 -4l2 -1l2 5l2 11l2 -5l2 3l2 -4l2 -8l2 10l2 -9l2 6l2 2l2 7l2 3l2 -8l2 2l2 4l2 5l2 -3l2 -4l2 2l2 -7l2 0l2 -2l2 -5l2 4l2 5l2 4l2 -1l2 -2l2 -5l2 -5l2 2l2 -8l2 -7l2 12l2 6l2 9l2 -6l2 -6l2 3l2 -4l2 5l2 2l2 0l2 -3l2 8l2 4l2 -12l2 -3l2 3l2 -2l2 2l2 2l2 1l2 -4l2 10l2 -5l2 -4l2 3l2 -11l2 11l2 3l2 -2l2 4l2 6l2 -17l2 6l2 -12l2 0l2 11l2 9l2 -5l2 11l2 -2l2 -4l2 0l2 5l2 -2l2 -4l2 0l2 1l2 0l2 -6l2 6l2 -4l2 5l2 7l2 -10l2 9l2 4l2 -2l2 5l2 -8l2 1l2 -5l2 -4l2 3l2 1l2 7l2 4l2 0l2 18l2 -5l2 16l2 -12l2 4l2 -8l2 1l2 5l2 -1l2 8l2 11l2 -3l2 -6l2 -4l2 13l2 0l2 13l2 9l2 -12l2 -2l2 -8l2 -2l2 15l2 -8l2 -1l2 -3l2 -9l2 -15l2 -5l2 3l2 12l2 9l2 -10l2 -12l2 -8l2 -1l2 -2l2 11l2 -8l2 -5l2 -6l2 3l2 2l2 -10l2 0l2 -8l2 -5l2 10l2 -8l2 3l2 7l2 7l2 7l2 3l2 2l2 10l2 -25l2 -5l2 -3l2 14l2 1l2 -1l2 -13l2 0l2 0l2 4l2 -9l2 0l2 -7l2 13l2 -6l2 -17l2 20l2 2l2 3l2 -7l2 -7l2 10l2 6l2 -8l2 6l2 -8l2 -9l2 -2l2 9l2 4l2 5l2 2l2 -12l2 8l2 -1l2 6l2 -17l2 -4l2 4l2 6l2 12l2 -3l2 -7l2 3l2 0l2 -4l2 -3l2 -9l2 7l2 10l2 15l2 -6l2 -6l2 17l2 -9l2 -13l2 -9l2 15l2 0l2 -4l2 -7l2 25l2 -4l2 -10l2 4l2 2l2 -24l2 -6l2 7l2 -11l2 1l2 27l2 5l2 -19l2 20l2 -15l2 -7l2 12l2 -7l2 -1l2 -15l2 15l2 5l2 11l2 0l2 -17l2 24l2 -11l2 6l2 0l2 -8l2 -20l2 11l2 -4l2 8l2 4l2 -13l2 4l2 -8l2 -7l2 17l2 2l2 -16l2 0l2 -13l2 6l2 4l2 14l2 1l2 -1l2 11l2 4l2 1l2 -5l2 0l2 -2l2 3l2 -9l2 7l2 -2l2 0l2 -2l2 1l2 2l2 3l2 -10l2 7l2 -10l2 -2l2 1l2 9l2 -10l2 5l2 -6l2 -3l2 -16l2 -3l2 -3l2 10l2 7l2 10l2 1l2 11l2 5l2 -5l2 1l2 -5l2 -7l2 -3l2 5l2 -3l2 1l2 12l2 -10l2 -19l2 -12l2 16l2 31l2 0l2 -17l2 1l2 -2l2 2l2 8l2 -5l2 -6l2 2l2 -1l2 -3l2 -8l2 3l2 -6l2 11l2 31l2 -13l2 -8l2 -6l2 -4l2 -3l2 14l2 20l2 -18l2 3l2 -11l2 5l2 1l2 -5l2 -5l2 23l2 -26l2 -1l2 -1l2 5M388 704l2 -3l2 0l2 -7l2 2l2 1l2 -2l2 -13l2 -4l2 5l2 5l2 7l2 0l2 3l2 4l2 9l2 -10l2 -3l2 -4l2 5l2 -1l2 -6l2 -8l2 -3l2 17l2 -1l2 -1l2 7l2 5l2 4l2 -7l2 -4l2 -7l2 1l2 -2l2 1l2 4l2 -6l2 16l2 -10l2 5l2 -4l2 1l2 -1l2 5l2 -2l2 3l2 -9l2 -7l2 -3l2 3l2 4l2 6l2 -10l2 2l2 2l2 2l2 -9l2 -4l2 5l2 6l2 -9l2 17l2 -4l2 3l2 -6l2 -7l2 -1l2 3l2 7l2 -11l2 10l2 -7l2 5l2 -1l2 5l2 -8l2 0l2 -2l2 -5l2 2l2 8l2 0l2 3l2 9l2 -2l2 -2l2 -10l2 8l2 -5l2 0l2 5l2 -5l2 7l2 1l2 -6l2 -10l2 12l2 -6l2 1l2 6l2 2l2 1l2 1l2 0l2 -5l2 8l2 4l2 -1l2 -6l2 4l2 -10l2 4l2 -11l2 -5l2 9l2 -1l2 -5l2 -1l2 0l2 2l2 9l2 1l2 -5l2 1l2 2l2 0l2 -5l2 -1l2 -7l2 5l2 2l2 9l2 -4l2 -3l2 0l2 -6l2 -1l2 13l2 -6l2 -3l2 -8l2 5l2 -4l2 11l2 11l2 -2l2 -1l2 -19l2 2l2 5l2 -8l2 9l2 2l2 -3l2 -2l2 9l2 -13l2 10l2 -2l2 -5l2 10l2 5l2 -6l2 -2l2 0l2 -18l2 7l2 12l2 1l2 6l2 3l2 -23l2 6l2 -14l2 -9l2 17l2 -11l2 5l2 8l2 8l2 7l2 -13l2 12l2 -5l2 -6l2 -2l2 0l2 1l2 14l2 -12l2 -3l2 2l2 -17l2 16l2 13l2 -17l2 25l2 -16l2 2l2 -11l2 11l2 9l2 9l2 2l2 -18l2 1l2 -18l2 -1l2 9l2 3l2 -5l2 -7l2 -3l2 3l2 -1l2 10l2 -16l2 -1l2 -2l2 -8l2 -6l2 -8l2 -5l2 8l2 4l2 1l2 -4l2 11l2 12l2 6l2 5l2 -6l2 -18l2 -18l2 32l2 9l2 16l2 3l2 -3l2 -2l2 -10l2 1l2 -8l2 4l2 -6l2 23l2 3l2 3l2 -5l2 1l2 9l2 -22l2 -14l2 2l2 6l2 12l2 7l2 9l2 7l2 -9l2 -20l2 5l2 -8l2 6l2 4l2 -17l2 -1l2 4l2 2l2 -10l2 15l2 3l2 4l2 -4l2 6l2 -7l2 1l2 12l2 -12l2 13l2 -7l2 -7l2 -6l2 -2l2 13l2 -3l2 6l2 15l2 -16l2 9l2 7l2 -2l2 -5l2 -14l2 -12l2 5l2 14l2 9l2 1l2 3l2 -5l2 -9l2 14l2 -11l2 -4l2 -3l2 12l2 -15l2 -3l2 -5l2 9l2 18l2 16l2 -12l2 -17l2 9l2 12l2 9l2 -9l2 -10l2 -4l2 -16l2 4l2 -4l2 3l2 15l2 3l2 -8l2 -6l2 -32l2 23l2 5l2 10l2 -1l2 8l2 -3l2 2l2 -14l2 1l2 -6l2 -11l2 6l2 13l2 12l2 -15l2 -2l2 -1l2 -4l2 4l2 -4l2 2l2 18l2 -16l2 5l2 -1l2 14l2 -19l2 13l2 10l2 -4l2 8l2 -12l2 9l2 -18l2 -1l2 1l2 6l2 -4l2 3l2 -1l2 -16l2 6l2 2l2 8l2 -1l2 -8l2 2l2 -9l2 13M388 704l2 -2l2 -6l2 8l2 2l2 11l2 -9l2 4l2 -11l2 5l2 -8l2 9l2 -8l2 6l2 -3l2 -7l2 7l2 2l2 -10l2 3l2 7l2 1l2 1l2 3l2 0l2 -6l2 7l2 -6l2 -4l2 -2l2 9l2 7l2 -11l2 -1l2 -4l2 -3l2 6l2 -4l2 10l2 -8l2 -6l2 1l2 -3l2 7l2 -1l2 4l2 1l2 -1l2 -12l2 8l2 1l2 6l2 -1l2 4l2 -5l2 1l2 10l2 -5l2 -5l2 -5l2 -7l2 -1l2 1l2 -1l2 -2l2 4l2 10l2 1l2 -2l2 -1l2 4l2 6l2 10l2 -8l2 -3l2 -2l2 2l2 6l2 -4l2 6l2 -6l2 -4l2 -6l2 0l2 0l2 8l2 -1l2 -3l2 6l2 7l2 -17l2 11l2 6l2 -4l2 -9l2 8l2 3l2 4l2 -4l2 -2l2 -1l2 1l2 -3l2 4l2 -4l2 0l2 -2l2 5l2 -10l2 -6l2 -3l2 4l2 3l2 -3l2 5l2 0l2 -12l2 16l2 -5l2 -4l2 -3l2 6l2 1l2 5l2 -13l2 4l2 -6l2 8l2 -2l2 -10l2 1l2 11l2 -5l2 -6l2 -4l2 5l2 -3l2 -9l2 8l2 3l2 4l2 3l2 -4l2 -5l2 -11l2 12l2 0l2 3l2 -5l2 -7l2 6l2 5l2 -1l2 8l2 -14l2 12l2 5l2 5l2 -3l2 -6l2 -2l2 -6l2 6l2 -6l2 9l2 -11l2 -7l2 8l2 -1l2 10l2 11l2 -16l2 11l2 0l2 -13l2 -4l2 1l2 -10l2 8l2 16l2 -17l2 -1l2 5l2 -1l2 7l2 8l2 -3l2 5l2 1l2 -5l2 5l2 16l2 3l2 -5l2 -10l2 0l2 7l2 -3l2 -14l2 0l2 23l2 -16l2 3l2 -17l2 26l2 -12l2 6l2 18l2 -17l2 2l2 -6l2 -16l2 -22l2 5l2 13l2 5l2 -7l2 8l2 12l2 -1l2 -1l2 -20l2 21l2 -2l2 13l2 -4l2 17l2 0l2 -12l2 -3l2 8l2 -3l2 -7l2 0l2 -6l2 14l2 -13l2 5l2 -24l2 8l2 0l2 -9l2 6l2 13l2 -9l2 7l2 2l2 5l2 13l2 -3l2 -9l2 -13l2 -3l2 -24l2 15l2 -5l2 0l2 -5l2 6l2 5l2 6l2 1l2 11l2 -8l2 6l2 -4l2 -3l2 -3l2 3l2 2l2 -4l2 13l2 2l2 -10l2 14l2 -27l2 8l2 15l2 -21l2 -10l2 -1l2 6l2 -2l2 -3l2 17l2 -1l2 -6l2 -3l2 17l2 1l2 9l2 -19l2 6l2 -1l2 2l2 14l2 -21l2 -3l2 0l2 15l2 -4l2 -9l2 5l2 11l2 1l2 -19l2 9l2 -12l2 -1l2 9l2 -3l2 10l2 -8l2 7l2 7l2 12l2 1l2 15l2 -15l2 -2l2 -7l2 2l2 -8l2 -11l2 6l2 17l2 -13l2 1l2 7l2 10l2 -12l2 6l2 0l2 -6l2 -14l2 2l2 12l2 4l2 -20l2 4l2 4l2 1l2 3l2 -16l2 10l2 1l2 -20l2 11l2 -2l2 9l2 15l2 -14l2 2l2 3l2 -4l2 -4l2 13l2 11l2 -7l2 1l2 -15l2 6l2 -10l2 -5l2 -5l2 12l2 1l2 13l2 16l2 -16l2 -11l2 1l2 9l2 0l2 14l2 -20l2 3l2 10l2 -10l2 2M388 707l2 3l2 -3l2 -2l2 4l2 -3l2 2l2 1l2 -1l2 -3l2 1l2 -3l2 2l2 -1l2 0l2 -7l2 0l2 -4l2 -1l2 0l2 7l2 -3l2 11l2 4l2 -1l2 -8l2 8l2 6l2 -2l2 -12l2 -4l2 8l2 -6l2 4l2 -2l2 -3l2 9l2 -6l2 0l2 -10l2 4l2 1l2 -1l2 0l2 10l2 4l2 -5l2 8l2 -6l2 -1l2 0l2 4l2 -2l2 -7l2 4l2 -5l2 5l2 10l2 -3l2 2l2 1l2 1l2 -3l2 -1l2 -7l2 2l2 -11l2 -6l2 5l2 14l2 2l2 -3l2 -2l2 -2l2 5l2 -2l2 0l2 -9l2 14l2 -3l2 -1l2 0l2 3l2 -5l2 -1l2 2l2 2l2 4l2 -1l2 -2l2 2l2 -3l2 -5l2 -8l2 11l2 -9l2 15l2 -2l2 2l2 -6l2 -1l2 2l2 4l2 0l2 -1l2 -2l2 5l2 -8l2 -3l2 3l2 1l2 -14l2 3l2 13l2 4l2 6l2 -16l2 -3l2 -4l2 12l2 -4l2 -6l2 5l2 9l2 4l2 8l2 1l2 8l2 -8l2 4l2 10l2 -1l2 0l2 0l2 0l2 0l2 6l2 2l2 -14l2 12l2 12l2 1l2 8l2 -4l2 3l2 -10l2 -2l2 -2l2 9l2 7l2 -1l2 7l2 -6l2 4l2 7l2 -16l2 5l2 -11l2 10l2 -16l2 6l2 -9l2 5l2 -5l2 -1l2 -1l2 -10l2 3l2 -13l2 3l2 -10l2 5l2 -3l2 -1l2 -18l2 2l2 3l2 -2l2 -7l2 1l2 5l2 14l2 -8l2 -10l2 0l2 -3l2 0l2 -8l2 10l2 8l2 -31l2 7l2 11l2 3l2 7l2 -5l2 10l2 12l2 -5l2 -14l2 -8l2 -1l2 -10l2 -1l2 -11l2 2l2 8l2 3l2 20l2 -19l2 -11l2 7l2 8l2 -6l2 -1l2 0l2 -12l2 2l2 27l2 0l2 5l2 -1l2 -5l2 -8l2 9l2 -2l2 4l2 -18l2 3l2 1l2 7l2 4l2 -4l2 13l2 -11l2 -1l2 -15l2 4l2 17l2 -5l2 -1l2 12l2 -1l2 22l2 5l2 -20l2 -7l2 -8l2 -4l2 -2l2 7l2 -18l2 12l2 0l2 1l2 -9l2 0l2 7l2 8l2 -7l2 -2l2 23l2 -21l2 -1l2 4l2 15l2 -7l2 -9l2 10l2 -4l2 2l2 4l2 19l2 -4l2 -8l2 1l2 8l2 0l2 -7l2 -10l2 15l2 -14l2 -8l2 -1l2 -6l2 -3l2 8l2 -8l2 -13l2 14l2 2l2 -6l2 5l2 8l2 -12l2 3l2 3l2 5l2 9l2 -4l2 -18l2 6l2 10l2 -11l2 19l2 2l2 13l2 -19l2 -1l2 6l2 -1l2 -7l2 12l2 0l2 -11l2 5l2 6l2 14l2 -5l2 5l2 -14l2 7l2 3l2 -13l2 4l2 -6l2 17l2 15l2 -21l2 1l2 -9l2 -3l2 3l2 23l2 -14l2 -2l2 -3l2 -5l2 -6l2 -9l2 10l2 16l2 -26l2 -4l2 2l2 9l2 5l2 -6l2 0l2 -11l2 8l2 9l2 -5l2 11l2 -11l2 -6l2 5l2 -9l2 -13l2 16l2 11l2 -13l2 2l2 -6l2 10l2 -9l2 2l2 -2l2 1l2 -10l2 -2l2 7l2 16l2 -12l2 -13l2 25l2 17l2 -22l2 -1l2 11M388 699l2 -2l2 5l2 3l2 -12l2 -3l2 7l2 -4l2 -5l2 3l2 7l2 -1l2 -2l2 -1l2 1l2 -4l2 3l2 -2l2 -3l2 1l2 -5l2 4l2 10l2 14l2 -17l2 2l2 5l2 -11l2 2l2 -3l2 -2l2 5l2 2l2 1l2 -2l2 0l2 0l2 -4l2 6l2 -1l2 0l2 -4l2 -2l2 1l2 0l2 -1l2 1l2 2l2 9l2 5l2 2l2 -1l2 -5l2 0l2 -1l2 2l2 8l2 -3l2 -2l2 -6l2 6l2 -4l2 -8l2 6l2 -2l2 6l2 1l2 -5l2 7l2 0l2 -5l2 7l2 -5l2 -10l2 -3l2 10l2 4l2 -1l2 4l2 9l2 -11l2 3l2 -8l2 -5l2 15l2 -14l2 2l2 4l2 -2l2 3l2 12l2 0l2 -6l2 -5l2 -4l2 0l2 -9l2 9l2 -4l2 -11l2 0l2 5l2 -2l2 7l2 0l2 -9l2 -3l2 4l2 -1l2 0l2 -7l2 -10l2 0l2 -7l2 5l2 8l2 -5l2 -1l2 -4l2 -1l2 -6l2 -9l2 0l2 -5l2 8l2 -13l2 0l2 -9l2 0l2 -3l2 -12l2 0l2 0l2 4l2 -6l2 -3l2 2l2 -6l2 4l2 -17l2 0l2 1l2 -1l2 5l2 -10l2 -4l2 -1l2 3l2 -15l2 3l2 6l2 2l2 -13l2 7l2 -6l2 13l2 8l2 12l2 4l2 9l2 -4l2 1l2 -3l2 8l2 -4l2 3l2 8l2 -8l2 6l2 4l2 9l2 -5l2 1l2 14l2 -11l2 15l2 -4l2 -1l2 18l2 -6l2 4l2 6l2 -1l2 -20l2 25l2 3l2 -8l2 2l2 6l2 9l2 3l2 6l2 -1l2 -6l2 -4l2 10l2 -15l2 -2l2 6l2 5l2 7l2 -4l2 -1l2 -4l2 10l2 -3l2 -9l2 7l2 9l2 -15l2 -18l2 26l2 3l2 -1l2 6l2 -6l2 2l2 2l2 -7l2 3l2 -3l2 -20l2 2l2 -2l2 -11l2 4l2 11l2 5l2 1l2 7l2 5l2 3l2 -11l2 -3l2 5l2 -8l2 5l2 14l2 -4l2 3l2 4l2 8l2 1l2 -21l2 12l2 -7l2 -8l2 -14l2 11l2 5l2 4l2 -2l2 15l2 -17l2 -9l2 5l2 -11l2 10l2 -1l2 9l2 2l2 8l2 12l2 -7l2 -11l2 -7l2 22l2 -4l2 12l2 1l2 10l2 -9l2 -12l2 -1l2 -6l2 14l2 6l2 -8l2 -3l2 -2l2 1l2 -11l2 7l2 1l2 -8l2 -5l2 -17l2 15l2 11l2 5l2 -3l2 8l2 -1l2 2l2 -8l2 -8l2 1l2 9l2 -20l2 -6l2 -6l2 15l2 5l2 9l2 -18l2 22l2 2l2 -5l2 -5l2 -20l2 9l2 10l2 -28l2 11l2 2l2 2l2 4l2 10l2 -6l2 6l2 17l2 -1l2 -5l2 -14l2 6l2 -1l2 -14l2 1l2 -2l2 7l2 -14l2 -6l2 -12l2 14l2 3l2 2l2 -3l2 3l2 2l2 15l2 -6l2 -13l2 -13l2 7l2 1l2 7l2 -1l2 11l2 1l2 -8l2 -10l2 2l2 -5l2 -2l2 9l2 12l2 -12l2 2l2 11l2 0l2 13l2 -10l2 0l2 3l2 14l2 -5l2 0l2 7l2 -6l2 -8l2 4l2 3l2 -10l2 -10l2 3l2 13l2 2l2 -4l2 -4l2 -4M388 695l2 7l2 3l2 -1l2 2l2 -6l2 0l2 4l2 -4l2 -5l2 9l2 -8l2 1l2 -1l2 4l2 11l2 -3l2 -10l2 -2l2 7l2 -9l2 -1l2 14l2 3l2 -2l2 -5l2 6l2 -5l2 5l2 -4l2 -3l2 0l2 -4l2 -6l2 14l2 6l2 -2l2 -6l2 6l2 -8l2 1l2 10l2 -3l2 7l2 -2l2 -4l2 -9l2 -3l2 0l2 -1l2 2l2 -12l2 10l2 9l2 -14l2 2l2 1l2 3l2 -2l2 0l2 2l2 -4l2 0l2 -3l2 3l2 9l2 2l2 2l2 -4l2 8l2 -1l2 -3l2 -5l2 6l2 -7l2 6l2 0l2 0l2 5l2 -7l2 12l2 -8l2 0l2 -4l2 -1l2 4l2 -10l2 -1l2 3l2 1l2 -4l2 5l2 3l2 -1l2 -5l2 11l2 -5l2 -4l2 -9l2 -1l2 12l2 2l2 5l2 5l2 -16l2 0l2 2l2 4l2 -10l2 -5l2 2l2 11l2 6l2 8l2 -10l2 -7l2 -6l2 7l2 10l2 -5l2 -3l2 -2l2 13l2 -2l2 11l2 -14l2 -4l2 -3l2 2l2 -13l2 -4l2 8l2 -1l2 8l2 0l2 11l2 -6l2 -11l2 12l2 -3l2 -11l2 -4l2 -7l2 19l2 3l2 -13l2 6l2 8l2 -16l2 9l2 -2l2 -3l2 6l2 1l2 -14l2 13l2 8l2 -7l2 4l2 2l2 10l2 -17l2 -6l2 11l2 -3l2 -17l2 16l2 -2l2 4l2 7l2 -7l2 -4l2 5l2 12l2 -1l2 -5l2 -18l2 -10l2 6l2 4l2 11l2 2l2 0l2 -6l2 2l2 -2l2 13l2 9l2 -14l2 -1l2 16l2 -5l2 0l2 -8l2 -4l2 -3l2 -2l2 9l2 -20l2 5l2 12l2 1l2 -10l2 -18l2 11l2 15l2 -1l2 -3l2 -7l2 -7l2 9l2 -16l2 13l2 11l2 -17l2 -4l2 14l2 5l2 -6l2 -7l2 -20l2 11l2 -3l2 -19l2 -1l2 -17l2 8l2 24l2 7l2 -9l2 13l2 -11l2 -9l2 2l2 12l2 -16l2 13l2 19l2 9l2 -1l2 0l2 -9l2 -8l2 29l2 -16l2 6l2 2l2 -2l2 1l2 4l2 -4l2 -16l2 11l2 -3l2 -4l2 2l2 7l2 -15l2 -2l2 10l2 8l2 -5l2 2l2 -11l2 -10l2 5l2 1l2 11l2 -5l2 -18l2 11l2 -8l2 -8l2 9l2 -13l2 9l2 21l2 4l2 3l2 10l2 -22l2 -7l2 -10l2 5l2 10l2 1l2 9l2 -2l2 5l2 -13l2 -6l2 -5l2 6l2 -7l2 5l2 -11l2 9l2 14l2 1l2 7l2 -8l2 18l2 -12l2 2l2 2l2 -7l2 9l2 9l2 -21l2 -19l2 16l2 -18l2 11l2 7l2 -17l2 4l2 14l2 3l2 -10l2 9l2 9l2 -12l2 2l2 -12l2 0l2 -3l2 20l2 -9l2 0l2 -10l2 0l2 13l2 1l2 -6l2 16l2 -3l2 -7l2 0l2 4l2 1l2 -14l2 -4l2 4l2 17l2 1l2 -17l2 2l2 7l2 -4l2 -16l2 6l2 -4l2 2l2 3l2 6l2 0l2 7l2 -5l2 3l2 11l2 -9l2 14l2 -3l2 4l2 -7l2 7l2 0l2 -15l2 -6l2 -6l2 -1l2 21l2 1l2 -16l2 12l2 6l2 -10l2 -4l2 -1l2 1M388 716l2 -5l2 -4l2 10l2 0l2 -5l2 -4l2 8l2 -3l2 6l2 3l2 -5l2 -15l2 -2l2 2l2 9l2 -10l2 -3l2 2l2 -3l2 3l2 4l2 0l2 7l2 -1l2 -2l2 5l2 2l2 -4l2 -3l2 -7l2 11l2 -16l2 -9l2 16l2 -10l2 5l2 5l2 6l2 5l2 -12l2 -12l2 5l2 4l2 -1l2 4l2 2l2 11l2 2l2 5l2 -8l2 5l2 -2l2 -3l2 -12l2 3l2 -2l2 -1l2 -2l2 5l2 -2l2 -13l2 7l2 9l2 -2l2 -7l2 -3l2 6l2 4l2 4l2 -14l2 4l2 -5l2 4l2 -2l2 -1l2 -8l2 2l2 -3l2 7l2 1l2 -5l2 2l2 6l2 -1l2 4l2 10l2 3l2 -10l2 1l2 5l2 -10l2 0l2 3l2 5l2 -2l2 -12l2 5l2 4l2 3l2 -5l2 -11l2 10l2 4l2 7l2 -11l2 -7l2 -6l2 11l2 -3l2 16l2 -2l2 -7l2 -10l2 4l2 2l2 -8l2 8l2 -2l2 -7l2 12l2 -10l2 0l2 15l2 -6l2 -9l2 -15l2 4l2 -9l2 7l2 -2l2 -1l2 -11l2 5l2 -6l2 2l2 -7l2 12l2 1l2 -5l2 -15l2 4l2 3l2 -7l2 17l2 -20l2 1l2 -2l2 3l2 15l2 1l2 5l2 3l2 -8l2 11l2 14l2 4l2 -8l2 5l2 -7l2 0l2 0l2 1l2 2l2 11l2 4l2 3l2 5l2 -1l2 -2l2 -6l2 3l2 -6l2 10l2 -4l2 7l2 -7l2 1l2 13l2 4l2 -4l2 -15l2 -10l2 -6l2 4l2 -2l2 -6l2 2l2 3l2 24l2 3l2 -11l2 4l2 -12l2 9l2 -8l2 -3l2 7l2 6l2 2l2 -11l2 1l2 -8l2 22l2 -2l2 -11l2 -8l2 -10l2 -1l2 4l2 7l2 12l2 -5l2 -8l2 5l2 5l2 -16l2 -15l2 7l2 -11l2 -14l2 -13l2 11l2 5l2 6l2 5l2 -2l2 14l2 -2l2 -9l2 3l2 -12l2 5l2 12l2 0l2 8l2 -3l2 0l2 3l2 4l2 -6l2 7l2 6l2 0l2 5l2 -15l2 9l2 -5l2 9l2 1l2 -6l2 9l2 12l2 14l2 -8l2 -15l2 -9l2 7l2 1l2 -22l2 8l2 -2l2 10l2 4l2 2l2 5l2 7l2 9l2 -3l2 -1l2 10l2 8l2 -7l2 -14l2 -16l2 -6l2 10l2 -9l2 -4l2 1l2 1l2 11l2 -21l2 0l2 12l2 5l2 -10l2 0l2 14l2 -10l2 2l2 1l2 -23l2 12l2 0l2 -3l2 -8l2 6l2 22l2 6l2 -6l2 -5l2 -9l2 3l2 2l2 6l2 4l2 0l2 6l2 -8l2 13l2 -14l2 8l2 5l2 -9l2 8l2 -26l2 -7l2 -1l2 8l2 -4l2 -13l2 14l2 16l2 -18l2 -13l2 7l2 17l2 -12l2 18l2 -4l2 -7l2 -6l2 20l2 -18l2 -10l2 9l2 3l2 -9l2 7l2 -8l2 11l2 8l2 -1l2 -28l2 16l2 -12l2 16l2 2l2 -15l2 0l2 5l2 11l2 9l2 3l2 -11l2 7l2 -11l2 9l2 -3l2 -7l2 -8l2 -12l2 23l2 19l2 1l2 -23l2 6l2 6l2 -5l2 27l2 -17l2 -2l2 -7l2 -7l2 -15l2 11l2 5l2 5l2 13M388 706l2 3l2 7l2 -4l2 -1l2 -1l2 -1l2 1l2 -7l2 -3l2 9l2 5l2 -6l2 -7l2 6l2 -1l2 0l2 -1l2 0l2 -2l2 4l2 -6l2 8l2 -10l2 7l2 -2l2 -1l2 -6l2 -3l2 3l2 4l2 -5l2 12l2 -1l2 2l2 -5l2 -2l2 5l2 -1l2 5l2 -9l2 -3l2 -5l2 6l2 4l2 -10l2 9l2 -8l2 2l2 2l2 2l2 -5l2 -4l2 10l2 0l2 4l2 -1l2 -4l2 4l2 6l2 -9l2 5l2 0l2 9l2 -15l2 7l2 -5l2 5l2 -6l2 -2l2 -5l2 12l2 -9l2 -4l2 9l2 -2l2 13l2 -8l2 -7l2 3l2 -5l2 0l2 -3l2 7l2 5l2 7l2 -10l2 -3l2 -3l2 -2l2 0l2 4l2 -6l2 6l2 -7l2 -4l2 -2l2 10l2 6l2 -4l2 9l2 -3l2 -4l2 -8l2 3l2 -7l2 0l2 5l2 2l2 5l2 2l2 7l2 -4l2 11l2 7l2 -6l2 -14l2 -3l2 4l2 7l2 -5l2 5l2 2l2 -4l2 9l2 3l2 6l2 3l2 21l2 3l2 -6l2 -6l2 2l2 7l2 5l2 7l2 -2l2 -7l2 13l2 -20l2 6l2 13l2 2l2 0l2 12l2 -11l2 5l2 -12l2 -2l2 2l2 -4l2 4l2 -4l2 -12l2 -7l2 9l2 -1l2 -6l2 -7l2 -6l2 2l2 -3l2 7l2 -4l2 -1l2 -3l2 -2l2 -3l2 0l2 -10l2 2l2 -17l2 20l2 2l2 7l2 -10l2 -13l2 3l2 -11l2 0l2 2l2 10l2 -4l2 1l2 9l2 -6l2 7l2 0l2 4l2 -17l2 -6l2 -13l2 6l2 9l2 7l2 8l2 17l2 -10l2 -14l2 -2l2 -11l2 5l2 17l2 -17l2 9l2 -13l2 -2l2 -12l2 -1l2 14l2 10l2 -4l2 -15l2 2l2 15l2 -2l2 6l2 11l2 -1l2 -3l2 -9l2 1l2 -17l2 -9l2 15l2 -7l2 14l2 -2l2 3l2 -9l2 -2l2 -4l2 -5l2 15l2 3l2 5l2 -1l2 -1l2 -22l2 10l2 13l2 -6l2 -6l2 14l2 1l2 -1l2 -1l2 -17l2 17l2 -19l2 19l2 6l2 -16l2 21l2 -1l2 -6l2 7l2 2l2 -1l2 -7l2 8l2 15l2 -28l2 -3l2 5l2 0l2 4l2 10l2 -7l2 4l2 -19l2 6l2 -2l2 -6l2 7l2 4l2 -9l2 19l2 -13l2 1l2 -7l2 1l2 25l2 -2l2 -10l2 -19l2 4l2 8l2 3l2 15l2 11l2 -19l2 -3l2 13l2 -28l2 1l2 21l2 -8l2 -4l2 0l2 -5l2 -7l2 3l2 6l2 0l2 -5l2 -2l2 15l2 -2l2 5l2 -14l2 9l2 0l2 5l2 -9l2 -13l2 5l2 14l2 10l2 12l2 -3l2 -3l2 -4l2 8l2 -7l2 -9l2 -8l2 13l2 -19l2 0l2 5l2 25l2 -1l2 -2l2 -13l2 11l2 -18l2 -17l2 0l2 -4l2 10l2 -1l2 -16l2 8l2 4l2 9l2 -3l2 9l2 1l2 1l2 -2l2 6l2 4l2 -11l2 -5l2 11l2 -22l2 -18l2 2l2 9l2 11l2 -2l2 -6l2 -8l2 6l2 0l2 0l2 5l2 2l2 18l2 -12l2 4l2 3l2 -1l2 -5l2 -1l2 1l2 5l2 -2l2 -10M388 704l2 8l2 0l2 -6l2 3l2 -11l2 -4l2 5l2 4l2 -1l2 5l2 -2l2 0l2 9l2 7l2 -7l2 1l2 -13l2 2l2 1l2 -6l2 5l2 -4l2 3l2 10l2 -2l2 3l2 -5l2 3l2 3l2 -13l2 -9l2 -1l2 9l2 -4l2 7l2 1l2 11l2 -12l2 -1l2 1l2 4l2 -2l2 1l2 8l2 -10l2 0l2 1l2 4l2 -3l2 4l2 -2l2 -2l2 -7l2 11l2 -6l2 0l2 5l2 0l2 -3l2 11l2 6l2 -8l2 -5l2 -2l2 5l2 3l2 2l2 9l2 -2l2 -3l2 -1l2 -10l2 3l2 2l2 -2l2 2l2 -16l2 4l2 4l2 -2l2 0l2 -2l2 4l2 0l2 1l2 9l2 -5l2 3l2 -2l2 -2l2 -4l2 12l2 6l2 6l2 -11l2 -10l2 -4l2 -3l2 6l2 -1l2 -2l2 4l2 2l2 -1l2 2l2 9l2 -5l2 -8l2 -4l2 5l2 -6l2 7l2 5l2 13l2 -11l2 2l2 0l2 4l2 12l2 2l2 0l2 4l2 15l2 -5l2 5l2 8l2 -3l2 8l2 12l2 10l2 11l2 16l2 -2l2 3l2 -1l2 10l2 13l2 4l2 -2l2 5l2 0l2 6l2 9l2 -9l2 9l2 -10l2 -1l2 -7l2 -6l2 11l2 -11l2 1l2 -2l2 -8l2 -14l2 -5l2 -10l2 -15l2 -25l2 -1l2 0l2 -1l2 -1l2 -10l2 -5l2 2l2 -5l2 7l2 0l2 -9l2 -1l2 2l2 -5l2 -9l2 14l2 -15l2 -5l2 -15l2 6l2 -3l2 6l2 -1l2 6l2 -10l2 13l2 -4l2 -15l2 0l2 -9l2 14l2 -14l2 9l2 -3l2 -7l2 15l2 -13l2 -3l2 -8l2 12l2 11l2 10l2 -7l2 -12l2 -6l2 3l2 12l2 -3l2 -4l2 -14l2 -12l2 3l2 16l2 6l2 -2l2 4l2 -7l2 9l2 -17l2 5l2 15l2 -6l2 -6l2 6l2 -3l2 8l2 -1l2 -1l2 22l2 -4l2 10l2 -3l2 10l2 -9l2 3l2 -9l2 -9l2 -17l2 11l2 -2l2 5l2 -17l2 10l2 -12l2 -4l2 4l2 22l2 -7l2 10l2 -27l2 -1l2 3l2 10l2 20l2 -19l2 16l2 1l2 -16l2 2l2 -12l2 10l2 -23l2 0l2 4l2 -17l2 12l2 15l2 -5l2 8l2 17l2 -3l2 -5l2 7l2 -8l2 8l2 -2l2 0l2 11l2 -13l2 1l2 4l2 -14l2 5l2 -1l2 -4l2 7l2 6l2 -3l2 -10l2 -5l2 -1l2 -5l2 -3l2 -4l2 -1l2 3l2 16l2 14l2 -4l2 -1l2 10l2 -6l2 3l2 -1l2 -8l2 4l2 -2l2 1l2 2l2 -6l2 -1l2 12l2 15l2 -3l2 -14l2 -4l2 0l2 1l2 -1l2 -1l2 -8l2 -5l2 4l2 -8l2 15l2 4l2 -1l2 -14l2 -3l2 6l2 2l2 -12l2 9l2 23l2 -7l2 8l2 -14l2 -15l2 3l2 15l2 -6l2 -4l2 -2l2 0l2 17l2 -12l2 -8l2 15l2 -10l2 3l2 -15l2 2l2 4l2 5l2 14l2 0l2 3l2 26l2 -5l2 -5l2 -19l2 0l2 7l2 0l2 -10l2 -11l2 -22l2 15l2 17l2 9l2 -5l2 -14l2 0l2 2l2 1l2 -15l2 -2l2 -6l2 13l2 14M388 713l2 1l2 -8l2 2l2 -4l2 0l2 -2l2 -1l2 -6l2 7l2 -8l2 4l2 7l2 -9l2 6l2 0l2 2l2 4l2 -4l2 -1l2 -3l2 -1l2 -2l2 15l2 0l2 -1l2 0l2 -4l2 -7l2 6l2 10l2 -1l2 2l2 -7l2 -4l2 1l2 0l2 -11l2 4l2 -5l2 1l2 3l2 -2l2 3l2 -1l2 1l2 -2l2 -6l2 7l2 3l2 1l2 -8l2 -3l2 -3l2 0l2 6l2 -13l2 12l2 6l2 1l2 -13l2 3l2 7l2 2l2 2l2 1l2 -5l2 0l2 6l2 -6l2 7l2 0l2 8l2 0l2 -12l2 -5l2 4l2 3l2 11l2 1l2 -1l2 -2l2 -6l2 1l2 -3l2 0l2 9l2 -2l2 5l2 1l2 -13l2 14l2 1l2 -10l2 1l2 0l2 2l2 -3l2 1l2 1l2 3l2 2l2 -1l2 2l2 -1l2 -11l2 1l2 -5l2 2l2 0l2 -3l2 2l2 13l2 1l2 0l2 1l2 -3l2 4l2 -7l2 2l2 7l2 2l2 2l2 11l2 -1l2 10l2 -18l2 8l2 7l2 1l2 -12l2 0l2 17l2 -5l2 5l2 14l2 -2l2 9l2 6l2 -11l2 15l2 -3l2 -7l2 1l2 1l2 -4l2 5l2 -8l2 8l2 -6l2 6l2 -9l2 -11l2 15l2 -14l2 -6l2 -1l2 2l2 -4l2 -22l2 -2l2 8l2 2l2 -5l2 0l2 -2l2 7l2 3l2 -10l2 -6l2 2l2 5l2 -7l2 -6l2 -12l2 10l2 9l2 -2l2 13l2 -16l2 -2l2 -15l2 3l2 15l2 -18l2 12l2 -4l2 -2l2 -7l2 9l2 -6l2 7l2 1l2 -1l2 -3l2 -10l2 7l2 17l2 -8l2 -2l2 -17l2 -8l2 -7l2 7l2 13l2 7l2 2l2 -13l2 1l2 6l2 11l2 1l2 12l2 -4l2 5l2 5l2 -7l2 4l2 -4l2 -11l2 -8l2 -1l2 -7l2 21l2 -4l2 6l2 0l2 -4l2 4l2 -3l2 20l2 -1l2 -1l2 -15l2 -21l2 -3l2 6l2 6l2 2l2 10l2 -1l2 -1l2 -15l2 -2l2 8l2 14l2 -13l2 15l2 -8l2 -6l2 -3l2 -9l2 6l2 -20l2 7l2 8l2 3l2 4l2 -7l2 7l2 -1l2 -9l2 15l2 -8l2 13l2 -5l2 -7l2 1l2 1l2 11l2 2l2 -17l2 10l2 -12l2 7l2 -7l2 8l2 1l2 -9l2 3l2 9l2 14l2 -5l2 -5l2 -15l2 5l2 -11l2 0l2 2l2 2l2 -6l2 -2l2 17l2 -4l2 -17l2 0l2 12l2 5l2 5l2 -6l2 5l2 9l2 -11l2 7l2 -16l2 -1l2 10l2 -1l2 -5l2 -14l2 2l2 11l2 -10l2 -1l2 14l2 8l2 1l2 -16l2 -1l2 -3l2 -6l2 27l2 0l2 -4l2 3l2 -13l2 10l2 -15l2 2l2 26l2 -16l2 -8l2 14l2 1l2 -4l2 -1l2 -1l2 -9l2 8l2 -7l2 2l2 -7l2 13l2 4l2 -28l2 19l2 12l2 -1l2 -26l2 13l2 16l2 -17l2 -1l2 -8l2 28l2 5l2 -11l2 -5l2 3l2 -24l2 14l2 -5l2 6l2 -7l2 10l2 15l2 -24l2 -14l2 17l2 -7l2 13l2 -13l2 10l2 9l2 7l2 13l2 -14l2 3l2 6l2 0M388 709l2 -1l2 -8l2 2l2 -2l2 0l2 3l2 -4l2 0l2 3l2 -7l2 3l2 0l2 10l2 -3l2 8l2 -10l2 -2l2 0l2 5l2 -1l2 -5l2 1l2 -3l2 -3l2 6l2 0l2 -3l2 0l2 0l2 5l2 -3l2 3l2 8l2 -1l2 5l2 -11l2 7l2 -4l2 -9l2 -11l2 3l2 5l2 -2l2 2l2 -6l2 8l2 4l2 0l2 -16l2 5l2 4l2 2l2 3l2 -8l2 12l2 2l2 0l2 -8l2 6l2 -7l2 3l2 8l2 -1l2 -3l2 0l2 3l2 6l2 2l2 -14l2 4l2 1l2 -5l2 5l2 -2l2 -1l2 9l2 3l2 5l2 -5l2 -4l2 6l2 -5l2 4l2 -8l2 7l2 6l2 -8l2 0l2 7l2 -2l2 2l2 -8l2 -2l2 4l2 -1l2 -1l2 3l2 -5l2 0l2 -4l2 2l2 -2l2 -2l2 4l2 -9l2 10l2 -13l2 12l2 1l2 -1l2 4l2 -3l2 0l2 -7l2 7l2 8l2 6l2 -10l2 -7l2 11l2 -1l2 -7l2 -9l2 13l2 -4l2 -9l2 1l2 -1l2 -11l2 1l2 6l2 8l2 8l2 -11l2 -4l2 -4l2 -1l2 -2l2 -2l2 1l2 4l2 -9l2 7l2 0l2 -5l2 -10l2 18l2 18l2 -5l2 -2l2 -4l2 6l2 -1l2 -2l2 10l2 -3l2 3l2 -10l2 0l2 11l2 -3l2 -5l2 12l2 -14l2 -10l2 7l2 -7l2 -7l2 12l2 -2l2 -10l2 9l2 0l2 14l2 -9l2 -1l2 -9l2 19l2 -1l2 9l2 -5l2 4l2 -10l2 -19l2 -17l2 -1l2 13l2 -4l2 -4l2 6l2 5l2 -5l2 0l2 -5l2 10l2 6l2 2l2 -11l2 3l2 14l2 -9l2 9l2 4l2 -2l2 10l2 -3l2 -16l2 12l2 2l2 -3l2 -6l2 -4l2 -7l2 -9l2 7l2 14l2 0l2 -14l2 8l2 -15l2 -4l2 -1l2 11l2 -6l2 18l2 -2l2 20l2 -12l2 0l2 0l2 -6l2 -4l2 5l2 -8l2 -3l2 10l2 -2l2 5l2 2l2 11l2 -26l2 -6l2 5l2 4l2 -6l2 -2l2 2l2 19l2 -4l2 5l2 9l2 1l2 -5l2 0l2 10l2 6l2 -19l2 14l2 12l2 -12l2 -4l2 -21l2 10l2 7l2 -1l2 -12l2 1l2 -1l2 -4l2 7l2 -5l2 6l2 4l2 -18l2 12l2 22l2 -13l2 4l2 11l2 1l2 -3l2 -13l2 -8l2 6l2 -2l2 1l2 -2l2 -2l2 -23l2 17l2 -5l2 18l2 8l2 -3l2 -13l2 0l2 -2l2 2l2 -3l2 3l2 -1l2 6l2 6l2 -9l2 3l2 -10l2 1l2 1l2 5l2 13l2 1l2 11l2 -13l2 -10l2 -9l2 0l2 -8l2 -14l2 0l2 14l2 7l2 3l2 -3l2 9l2 0l2 -4l2 -5l2 -4l2 -4l2 4l2 -6l2 2l2 9l2 0l2 -2l2 5l2 -7l2 9l2 -5l2 -17l2 -1l2 2l2 17l2 13l2 3l2 3l2 5l2 -8l2 -2l2 1l2 -14l2 -2l2 21l2 2l2 -17l2 -9l2 1l2 5l2 1l2 -13l2 -1l2 11l2 6l2 -3l2 -17l2 -4l2 7l2 -4l2 1l2 -4l2 8l2 -13l2 16l2 12l2 4l2 -19l2 1l2 8l2 -11M388 709l2 0l2 -9l2 7l2 -1l2 -6l2 -1l2 7l2 0l2 2l2 0l2 -1l2 4l2 0l2 -2l2 1l2 -1l2 2l2 -5l2 -1l2 -7l2 -7l2 -3l2 16l2 3l2 0l2 -5l2 3l2 3l2 1l2 1l2 4l2 -10l2 3l2 9l2 -5l2 -5l2 -3l2 4l2 -8l2 10l2 2l2 -8l2 1l2 4l2 -5l2 8l2 -5l2 11l2 1l2 -10l2 -14l2 13l2 -3l2 0l2 1l2 5l2 -3l2 8l2 0l2 -5l2 -7l2 -11l2 11l2 6l2 0l2 2l2 6l2 -2l2 7l2 -9l2 -6l2 3l2 -3l2 4l2 -5l2 5l2 -1l2 2l2 5l2 1l2 5l2 -11l2 4l2 -2l2 -3l2 -8l2 4l2 6l2 8l2 -1l2 5l2 -5l2 0l2 -14l2 2l2 4l2 -2l2 -2l2 0l2 -7l2 6l2 -3l2 6l2 7l2 -17l2 8l2 -4l2 8l2 -6l2 2l2 1l2 6l2 -2l2 8l2 -9l2 2l2 0l2 3l2 -6l2 3l2 1l2 -6l2 7l2 -3l2 3l2 1l2 -2l2 -4l2 10l2 -16l2 1l2 3l2 10l2 -20l2 -2l2 3l2 11l2 -5l2 6l2 2l2 0l2 14l2 -4l2 -5l2 -18l2 14l2 0l2 7l2 -5l2 2l2 -1l2 -3l2 -3l2 1l2 -4l2 -4l2 2l2 -3l2 -1l2 4l2 -3l2 -9l2 5l2 -2l2 1l2 -3l2 5l2 -7l2 -11l2 17l2 2l2 -8l2 -5l2 19l2 2l2 9l2 1l2 5l2 -4l2 11l2 -10l2 -17l2 6l2 -4l2 7l2 5l2 -11l2 2l2 0l2 -1l2 -3l2 -4l2 -14l2 9l2 3l2 16l2 20l2 0l2 -6l2 -6l2 2l2 -11l2 -27l2 17l2 -11l2 4l2 8l2 8l2 -19l2 -5l2 15l2 0l2 -12l2 16l2 -5l2 7l2 -11l2 -12l2 14l2 -8l2 -1l2 18l2 -11l2 14l2 2l2 -2l2 5l2 -8l2 3l2 -4l2 3l2 0l2 -2l2 12l2 -18l2 10l2 -2l2 -3l2 15l2 -3l2 9l2 -18l2 1l2 21l2 -24l2 3l2 3l2 8l2 -5l2 14l2 -3l2 -3l2 -10l2 5l2 -15l2 -16l2 19l2 -4l2 17l2 9l2 -7l2 -32l2 7l2 1l2 3l2 5l2 8l2 -6l2 0l2 -10l2 10l2 9l2 -3l2 -10l2 -8l2 6l2 8l2 -10l2 1l2 11l2 -1l2 -5l2 10l2 0l2 8l2 -16l2 -4l2 -2l2 12l2 -9l2 0l2 4l2 4l2 -26l2 13l2 10l2 -14l2 3l2 7l2 -11l2 5l2 -6l2 -1l2 9l2 7l2 9l2 -6l2 0l2 -18l2 -15l2 -12l2 22l2 4l2 2l2 -1l2 13l2 -3l2 8l2 -2l2 -9l2 -4l2 19l2 3l2 7l2 -12l2 -3l2 6l2 -5l2 -5l2 -1l2 0l2 -5l2 -8l2 7l2 10l2 3l2 1l2 -12l2 -17l2 12l2 4l2 -8l2 8l2 3l2 7l2 -16l2 21l2 -18l2 12l2 -10l2 -5l2 25l2 -17l2 4l2 -1l2 -7l2 9l2 -5l2 -11l2 -5l2 11l2 -3l2 11l2 3l2 -8l2 9l2 13l2 -20l2 -2l2 1l2 4l2 -6l2 -8l2 7l2 13l2 -13l2 5l2 -12l2 -5M388 699l2 -14l2 14l2 -5l2 -7l2 2l2 -4l2 3l2 -6l2 12l2 4l2 -6l2 -1l2 -3l2 8l2 -7l2 -4l2 4l2 0l2 1l2 8l2 1l2 12l2 -9l2 -2l2 -11l2 9l2 -2l2 9l2 1l2 -6l2 4l2 -3l2 -1l2 0l2 -2l2 3l2 6l2 -10l2 -1l2 2l2 -4l2 -2l2 -4l2 0l2 -2l2 15l2 -6l2 7l2 0l2 1l2 -7l2 10l2 -16l2 0l2 13l2 6l2 -5l2 4l2 -2l2 0l2 2l2 -7l2 4l2 -11l2 -5l2 -3l2 10l2 1l2 -1l2 2l2 2l2 -6l2 5l2 -7l2 5l2 -3l2 4l2 3l2 -4l2 9l2 -8l2 -5l2 1l2 -8l2 8l2 -6l2 10l2 -6l2 0l2 1l2 7l2 -10l2 0l2 -5l2 5l2 6l2 -8l2 4l2 3l2 3l2 -4l2 7l2 2l2 -1l2 5l2 -2l2 0l2 3l2 2l2 -3l2 -2l2 11l2 -7l2 -1l2 -6l2 3l2 1l2 -12l2 7l2 1l2 3l2 1l2 4l2 2l2 4l2 6l2 -6l2 -4l2 6l2 -3l2 8l2 8l2 10l2 5l2 0l2 -13l2 -7l2 3l2 -3l2 -3l2 -5l2 2l2 5l2 3l2 -3l2 2l2 8l2 2l2 5l2 1l2 -4l2 3l2 -10l2 -12l2 -1l2 1l2 1l2 -3l2 -1l2 1l2 -11l2 0l2 -5l2 7l2 -15l2 18l2 -7l2 -9l2 8l2 -16l2 -6l2 4l2 18l2 -4l2 5l2 -8l2 -9l2 -12l2 8l2 10l2 16l2 2l2 4l2 -11l2 0l2 3l2 -21l2 1l2 15l2 -24l2 -4l2 18l2 -3l2 -8l2 -9l2 7l2 13l2 2l2 -5l2 -2l2 15l2 -21l2 -24l2 6l2 19l2 0l2 5l2 -4l2 0l2 5l2 8l2 18l2 -13l2 -7l2 7l2 20l2 -13l2 -3l2 -17l2 -11l2 -14l2 5l2 -1l2 6l2 3l2 8l2 -18l2 23l2 3l2 25l2 -9l2 4l2 -19l2 10l2 3l2 -4l2 2l2 -4l2 -2l2 -3l2 -15l2 11l2 -18l2 8l2 8l2 -2l2 -9l2 -4l2 -4l2 12l2 -2l2 -4l2 -4l2 -1l2 7l2 13l2 -10l2 6l2 8l2 21l2 -6l2 -11l2 12l2 8l2 11l2 -21l2 -12l2 10l2 -11l2 -6l2 10l2 -10l2 -15l2 4l2 10l2 1l2 -3l2 6l2 -7l2 11l2 11l2 -10l2 1l2 5l2 -4l2 6l2 -4l2 7l2 12l2 -26l2 -4l2 13l2 -9l2 0l2 -15l2 -8l2 11l2 7l2 4l2 1l2 8l2 -6l2 -11l2 -4l2 -4l2 10l2 -1l2 -2l2 1l2 17l2 -19l2 13l2 -3l2 1l2 -12l2 -13l2 2l2 0l2 6l2 -7l2 -5l2 -19l2 12l2 6l2 6l2 -3l2 1l2 13l2 0l2 -1l2 1l2 -18l2 5l2 16l2 5l2 -16l2 8l2 -8l2 -9l2 3l2 -2l2 14l2 -15l2 13l2 8l2 2l2 -7l2 18l2 -8l2 -3l2 6l2 5l2 -7l2 12l2 -8l2 0l2 -2l2 -1l2 -13l2 7l2 7l2 -12l2 -5l2 14l2 11l2 6l2 3l2 -13l2 -1l2 -32l2 19l2 17l2 8l2 -11l2 8l2 -19l2 -10l2 22l2 -8M388 689l2 1l2 14l2 5l2 -1l2 1l2 8l2 -9l2 -5l2 3l2 -11l2 7l2 -1l2 -5l2 -7l2 2l2 0l2 6l2 4l2 2l2 5l2 -5l2 4l2 -1l2 -6l2 8l2 -6l2 2l2 8l2 1l2 1l2 -4l2 5l2 -1l2 -12l2 1l2 -2l2 2l2 1l2 -5l2 -1l2 1l2 8l2 -1l2 -7l2 3l2 -5l2 6l2 -5l2 8l2 5l2 -2l2 -1l2 -6l2 -1l2 2l2 -1l2 7l2 0l2 -6l2 6l2 4l2 7l2 4l2 -1l2 -11l2 -1l2 -8l2 8l2 -9l2 6l2 4l2 1l2 -11l2 2l2 -9l2 6l2 6l2 1l2 -3l2 0l2 -3l2 6l2 -5l2 7l2 -14l2 -3l2 3l2 -7l2 2l2 7l2 10l2 7l2 -8l2 2l2 3l2 -6l2 0l2 0l2 -5l2 7l2 -4l2 -1l2 -4l2 9l2 3l2 4l2 -11l2 2l2 1l2 -1l2 9l2 -5l2 8l2 -5l2 -8l2 -3l2 1l2 4l2 9l2 -6l2 0l2 5l2 -2l2 6l2 -12l2 11l2 -9l2 -4l2 11l2 -1l2 -17l2 2l2 6l2 8l2 9l2 -10l2 -7l2 -9l2 9l2 -11l2 1l2 7l2 8l2 -7l2 2l2 8l2 -7l2 -8l2 12l2 -2l2 -3l2 3l2 -10l2 3l2 11l2 1l2 -10l2 3l2 5l2 -7l2 -7l2 4l2 0l2 0l2 1l2 -5l2 -15l2 -11l2 5l2 -3l2 13l2 -2l2 14l2 4l2 -12l2 -15l2 0l2 4l2 9l2 5l2 5l2 -5l2 15l2 7l2 -14l2 -4l2 1l2 -6l2 3l2 10l2 5l2 3l2 -11l2 4l2 -4l2 -10l2 6l2 0l2 5l2 -4l2 4l2 -7l2 -3l2 8l2 22l2 -17l2 2l2 -9l2 -3l2 -3l2 8l2 -2l2 19l2 2l2 -24l2 13l2 -16l2 -4l2 11l2 -11l2 2l2 14l2 8l2 -16l2 17l2 -11l2 -16l2 0l2 2l2 2l2 -2l2 1l2 -1l2 8l2 12l2 -11l2 1l2 -3l2 4l2 7l2 -22l2 5l2 -4l2 -1l2 14l2 1l2 -13l2 14l2 -5l2 2l2 -1l2 -10l2 -7l2 -3l2 26l2 -7l2 -8l2 12l2 -13l2 10l2 1l2 -9l2 15l2 -6l2 -4l2 -8l2 -1l2 14l2 -7l2 -12l2 6l2 19l2 -13l2 0l2 1l2 14l2 -3l2 -14l2 7l2 3l2 -6l2 4l2 1l2 -13l2 19l2 -15l2 -6l2 -6l2 -13l2 9l2 19l2 -7l2 3l2 3l2 6l2 -4l2 12l2 -7l2 -3l2 18l2 -17l2 -4l2 -12l2 1l2 10l2 10l2 6l2 -19l2 10l2 -14l2 -1l2 1l2 -10l2 7l2 9l2 -2l2 0l2 8l2 12l2 6l2 -8l2 -15l2 12l2 -5l2 5l2 11l2 -4l2 -10l2 4l2 -10l2 -1l2 5l2 10l2 -4l2 4l2 -10l2 -14l2 2l2 7l2 11l2 12l2 -12l2 -11l2 11l2 -8l2 7l2 7l2 4l2 14l2 -22l2 7l2 -11l2 -4l2 -2l2 -4l2 6l2 -1l2 26l2 -12l2 -3l2 3l2 -2l2 -11l2 -5l2 4l2 -5l2 19l2 -3l2 -17l2 13l2 -6l2 3l2 21l2 -19l2 0l2 -6l2 -13l2 7l2 4M388 707l2 -5l2 9l2 -4l2 4l2 2l2 -3l2 -1l2 -2l2 6l2 -1l2 -6l2 -4l2 -5l2 2l2 12l2 1l2 -6l2 -7l2 1l2 3l2 -1l2 11l2 2l2 -4l2 -8l2 -7l2 5l2 0l2 4l2 -1l2 5l2 -4l2 -2l2 -8l2 -10l2 3l2 13l2 -1l2 0l2 -5l2 3l2 0l2 3l2 -3l2 -2l2 9l2 -4l2 5l2 -1l2 7l2 -7l2 -4l2 -1l2 -7l2 0l2 10l2 10l2 -3l2 -3l2 -7l2 1l2 0l2 9l2 -4l2 -10l2 5l2 3l2 -13l2 8l2 1l2 9l2 -4l2 -1l2 5l2 -1l2 -5l2 -1l2 0l2 -4l2 6l2 -3l2 -4l2 1l2 -3l2 0l2 -3l2 -4l2 -6l2 12l2 13l2 0l2 -15l2 3l2 8l2 12l2 -5l2 0l2 -10l2 7l2 14l2 -8l2 3l2 -14l2 -5l2 2l2 4l2 -5l2 -3l2 -3l2 0l2 2l2 -14l2 20l2 1l2 -11l2 8l2 1l2 9l2 -10l2 -4l2 6l2 13l2 -9l2 5l2 -3l2 -8l2 -6l2 -1l2 3l2 -2l2 -11l2 10l2 5l2 1l2 7l2 -8l2 0l2 -3l2 2l2 -8l2 17l2 5l2 -2l2 0l2 -9l2 -3l2 -4l2 -11l2 7l2 8l2 2l2 -13l2 -4l2 -1l2 5l2 9l2 1l2 13l2 -24l2 -2l2 15l2 -7l2 -2l2 4l2 2l2 -10l2 5l2 0l2 -8l2 3l2 1l2 9l2 6l2 -4l2 4l2 -8l2 13l2 -2l2 10l2 9l2 4l2 -16l2 -7l2 6l2 2l2 -24l2 -10l2 25l2 5l2 -6l2 15l2 -8l2 0l2 0l2 3l2 -4l2 0l2 -2l2 -4l2 9l2 5l2 15l2 -2l2 -36l2 1l2 -4l2 -5l2 12l2 -20l2 -2l2 0l2 1l2 -6l2 16l2 -13l2 -16l2 19l2 7l2 -21l2 9l2 -10l2 6l2 -11l2 18l2 14l2 -11l2 -2l2 -4l2 -4l2 8l2 7l2 1l2 3l2 -8l2 18l2 3l2 -3l2 7l2 9l2 -2l2 -3l2 -1l2 6l2 -2l2 1l2 13l2 -21l2 2l2 -9l2 -10l2 -5l2 1l2 14l2 -12l2 -2l2 0l2 6l2 1l2 7l2 -2l2 -6l2 -6l2 5l2 8l2 -7l2 0l2 9l2 1l2 1l2 -13l2 9l2 0l2 2l2 9l2 -8l2 -6l2 10l2 1l2 -11l2 8l2 9l2 4l2 -14l2 -16l2 11l2 -2l2 4l2 -3l2 0l2 -1l2 17l2 -15l2 -9l2 -4l2 -6l2 0l2 -10l2 -3l2 0l2 6l2 8l2 9l2 10l2 -8l2 8l2 -14l2 -8l2 6l2 13l2 -6l2 -15l2 0l2 8l2 6l2 -5l2 -11l2 -5l2 3l2 -7l2 1l2 -9l2 -3l2 14l2 11l2 -5l2 2l2 -8l2 28l2 -6l2 -17l2 -2l2 12l2 1l2 -10l2 -8l2 13l2 5l2 -10l2 16l2 -16l2 -1l2 8l2 1l2 -7l2 3l2 4l2 7l2 23l2 -11l2 -11l2 -2l2 1l2 -4l2 12l2 4l2 13l2 -4l2 -1l2 -6l2 -9l2 2l2 5l2 8l2 18l2 -6l2 -5l2 -7l2 -14l2 17l2 5l2 -18l2 6l2 -17l2 20l2 0l2 1l2 -13l2 -1l2 -18M388 710l2 -1l2 -6l2 2l2 -5l2 3l2 8l2 2l2 -7l2 -13l2 14l2 -9l2 8l2 1l2 9l2 -7l2 -4l2 -3l2 2l2 -2l2 1l2 2l2 3l2 -2l2 4l2 0l2 -3l2 1l2 5l2 3l2 1l2 6l2 4l2 -7l2 2l2 -16l2 -8l2 6l2 -2l2 -2l2 2l2 3l2 -5l2 9l2 -1l2 4l2 -11l2 -2l2 9l2 -3l2 -6l2 -3l2 2l2 9l2 -1l2 -5l2 2l2 -7l2 -7l2 1l2 6l2 11l2 -3l2 0l2 -2l2 -1l2 6l2 -5l2 1l2 -7l2 10l2 -4l2 -2l2 -2l2 -5l2 4l2 10l2 -6l2 -6l2 1l2 -3l2 -2l2 12l2 3l2 12l2 -5l2 -4l2 -12l2 3l2 5l2 -5l2 1l2 2l2 5l2 3l2 -6l2 9l2 -11l2 7l2 5l2 1l2 -2l2 -7l2 -6l2 -1l2 -3l2 -3l2 -8l2 6l2 2l2 -2l2 -1l2 3l2 -5l2 3l2 2l2 1l2 -9l2 14l2 -3l2 -7l2 1l2 1l2 7l2 -15l2 9l2 -4l2 0l2 -4l2 -2l2 -4l2 0l2 -7l2 -5l2 6l2 1l2 3l2 2l2 2l2 -5l2 11l2 -4l2 3l2 -11l2 -6l2 -8l2 -3l2 10l2 -3l2 6l2 8l2 -3l2 1l2 -7l2 13l2 -11l2 -1l2 4l2 -3l2 16l2 14l2 0l2 -3l2 3l2 2l2 14l2 -18l2 -8l2 1l2 16l2 0l2 7l2 12l2 -21l2 5l2 -19l2 -5l2 16l2 -6l2 3l2 -1l2 1l2 7l2 11l2 -3l2 -15l2 10l2 13l2 -12l2 -8l2 -20l2 7l2 0l2 16l2 8l2 -8l2 -2l2 -7l2 15l2 2l2 -2l2 0l2 -7l2 -11l2 9l2 25l2 -7l2 -18l2 -3l2 -4l2 -2l2 0l2 8l2 13l2 -14l2 9l2 -3l2 -3l2 -8l2 0l2 -1l2 16l2 -8l2 0l2 10l2 -10l2 -7l2 13l2 -18l2 3l2 -21l2 -27l2 18l2 10l2 -2l2 -2l2 5l2 10l2 2l2 4l2 -14l2 13l2 14l2 2l2 -2l2 -5l2 3l2 -11l2 12l2 8l2 -12l2 -1l2 -3l2 10l2 -11l2 3l2 12l2 -4l2 1l2 -8l2 -10l2 -1l2 20l2 -5l2 -2l2 -2l2 20l2 3l2 -29l2 9l2 0l2 -9l2 8l2 -11l2 -3l2 2l2 7l2 0l2 10l2 9l2 10l2 -13l2 -10l2 -1l2 6l2 3l2 2l2 -13l2 3l2 0l2 1l2 9l2 -13l2 -2l2 -4l2 8l2 5l2 2l2 -4l2 -1l2 -15l2 7l2 4l2 -4l2 -9l2 15l2 -2l2 -3l2 7l2 -2l2 7l2 -5l2 8l2 6l2 -13l2 -2l2 -11l2 15l2 -8l2 7l2 1l2 3l2 -5l2 8l2 13l2 -3l2 -13l2 -6l2 12l2 -9l2 -2l2 3l2 -8l2 12l2 2l2 -7l2 5l2 7l2 -13l2 7l2 -25l2 6l2 8l2 -2l2 -3l2 12l2 7l2 -2l2 4l2 -2l2 3l2 5l2 -5l2 -2l2 0l2 -4l2 -29l2 -2l2 8l2 5l2 7l2 -4l2 10l2 10l2 -3l2 3l2 -4l2 1l2 -15l2 11l2 10l2 -12l2 7l2 8l2 -17l2 2l2 -5l2 -15l2 2l2 6M388 702l2 0l2 4l2 -6l2 -4l2 0l2 3l2 0l2 6l2 3l2 -7l2 -7l2 -1l2 2l2 -5l2 3l2 -2l2 0l2 16l2 -9l2 8l2 2l2 -4l2 -3l2 6l2 -1l2 10l2 -8l2 -6l2 1l2 2l2 -4l2 2l2 -3l2 6l2 -1l2 -3l2 7l2 6l2 -5l2 -4l2 -8l2 0l2 8l2 4l2 -4l2 2l2 1l2 -1l2 -3l2 -2l2 -2l2 11l2 -4l2 -7l2 -14l2 -2l2 3l2 0l2 3l2 5l2 -5l2 1l2 -6l2 5l2 1l2 4l2 1l2 -8l2 3l2 2l2 7l2 -7l2 8l2 0l2 3l2 10l2 5l2 -9l2 -1l2 -12l2 1l2 5l2 -6l2 5l2 -4l2 2l2 0l2 7l2 -8l2 -6l2 2l2 11l2 1l2 1l2 -9l2 12l2 -5l2 6l2 -3l2 3l2 -3l2 3l2 -2l2 -7l2 -2l2 -3l2 -1l2 -2l2 0l2 5l2 -5l2 8l2 -2l2 -3l2 0l2 11l2 1l2 -1l2 2l2 -5l2 2l2 4l2 4l2 9l2 -2l2 5l2 -9l2 3l2 -3l2 4l2 7l2 -2l2 0l2 -8l2 -2l2 2l2 10l2 -2l2 -6l2 6l2 0l2 1l2 -7l2 12l2 14l2 3l2 5l2 -5l2 2l2 -10l2 -1l2 1l2 -2l2 -6l2 -5l2 5l2 4l2 12l2 -7l2 -4l2 -4l2 8l2 -2l2 -8l2 -22l2 -11l2 4l2 8l2 -8l2 11l2 10l2 -10l2 7l2 -3l2 -1l2 -3l2 -12l2 -3l2 13l2 -16l2 -6l2 -3l2 9l2 -5l2 0l2 -14l2 24l2 -3l2 -6l2 -6l2 16l2 -16l2 11l2 18l2 -11l2 -15l2 20l2 -15l2 -11l2 3l2 2l2 2l2 4l2 7l2 -8l2 -2l2 -15l2 -4l2 -2l2 2l2 2l2 4l2 1l2 7l2 -13l2 -5l2 -11l2 10l2 10l2 5l2 7l2 -4l2 -6l2 -7l2 14l2 11l2 13l2 -6l2 -4l2 4l2 5l2 5l2 0l2 10l2 -17l2 -15l2 -10l2 0l2 14l2 4l2 -2l2 5l2 5l2 -7l2 8l2 -5l2 -3l2 -5l2 0l2 4l2 -7l2 -3l2 8l2 9l2 -7l2 -10l2 4l2 -4l2 3l2 10l2 0l2 -5l2 -3l2 -9l2 15l2 9l2 -20l2 4l2 4l2 -5l2 6l2 2l2 -21l2 6l2 11l2 -2l2 19l2 -10l2 6l2 17l2 -7l2 -27l2 0l2 3l2 0l2 -2l2 2l2 3l2 -6l2 4l2 15l2 -10l2 -9l2 -2l2 -2l2 10l2 -2l2 -18l2 4l2 -6l2 13l2 0l2 7l2 12l2 -11l2 -4l2 9l2 -31l2 0l2 6l2 7l2 -18l2 7l2 20l2 -10l2 -17l2 10l2 6l2 -3l2 8l2 4l2 -3l2 -23l2 16l2 23l2 -23l2 2l2 0l2 4l2 -8l2 0l2 9l2 -2l2 7l2 2l2 -6l2 6l2 -28l2 9l2 22l2 -2l2 -15l2 -9l2 7l2 -1l2 -1l2 8l2 8l2 8l2 -6l2 -8l2 21l2 -1l2 -13l2 -13l2 -1l2 -10l2 11l2 1l2 -18l2 -9l2 -1l2 8l2 19l2 -2l2 10l2 -7l2 -1l2 9l2 -24l2 3l2 -6l2 24l2 8l2 -1l2 9l2 7l2 -10l2 -12M388 706l2 3l2 -5l2 12l2 -4l2 0l2 0l2 -2l2 3l2 2l2 -12l2 5l2 6l2 -5l2 1l2 -14l2 8l2 0l2 -4l2 -9l2 -1l2 11l2 12l2 3l2 -12l2 -2l2 -3l2 4l2 -3l2 2l2 2l2 3l2 5l2 -8l2 3l2 -9l2 2l2 8l2 1l2 -1l2 -4l2 3l2 1l2 3l2 -2l2 -3l2 -1l2 -7l2 4l2 3l2 7l2 -3l2 6l2 -8l2 4l2 -2l2 0l2 -2l2 9l2 -7l2 -4l2 2l2 -3l2 0l2 13l2 -12l2 2l2 -4l2 2l2 2l2 0l2 -6l2 -10l2 10l2 4l2 4l2 0l2 0l2 -3l2 3l2 -3l2 8l2 -7l2 8l2 6l2 1l2 -2l2 -6l2 -6l2 0l2 -6l2 -6l2 7l2 -8l2 -7l2 1l2 19l2 -8l2 -7l2 5l2 -9l2 3l2 10l2 -7l2 -2l2 -9l2 -2l2 -17l2 1l2 -12l2 9l2 8l2 2l2 -10l2 -7l2 8l2 1l2 -14l2 12l2 -20l2 5l2 0l2 -7l2 4l2 -6l2 1l2 -16l2 9l2 -6l2 0l2 1l2 4l2 4l2 1l2 3l2 -8l2 5l2 -7l2 4l2 -9l2 18l2 -3l2 8l2 -7l2 -2l2 9l2 7l2 -8l2 1l2 6l2 4l2 9l2 3l2 -2l2 2l2 17l2 -4l2 5l2 2l2 16l2 3l2 -13l2 -2l2 3l2 -6l2 10l2 -7l2 -3l2 5l2 13l2 -13l2 4l2 19l2 -7l2 -1l2 -6l2 0l2 1l2 4l2 -3l2 6l2 -14l2 1l2 -3l2 3l2 8l2 -2l2 -12l2 4l2 -13l2 9l2 0l2 -1l2 20l2 -19l2 2l2 9l2 -13l2 -8l2 15l2 1l2 -1l2 8l2 8l2 -2l2 -10l2 8l2 -10l2 20l2 8l2 8l2 -6l2 -10l2 -4l2 -6l2 1l2 0l2 -2l2 -8l2 12l2 9l2 4l2 12l2 -19l2 5l2 7l2 16l2 -12l2 -9l2 -7l2 1l2 -7l2 5l2 -9l2 -5l2 4l2 11l2 -4l2 4l2 -13l2 -13l2 -6l2 -5l2 24l2 1l2 -15l2 12l2 -7l2 10l2 6l2 3l2 -9l2 3l2 -1l2 -12l2 1l2 19l2 -20l2 0l2 0l2 1l2 -13l2 17l2 -4l2 -3l2 3l2 -5l2 -3l2 6l2 -5l2 -15l2 -1l2 9l2 -8l2 6l2 -2l2 7l2 1l2 -11l2 7l2 -7l2 3l2 -15l2 16l2 5l2 -4l2 2l2 23l2 6l2 -17l2 -8l2 4l2 -11l2 -7l2 -9l2 18l2 12l2 5l2 -13l2 2l2 9l2 11l2 -12l2 -2l2 -2l2 -9l2 9l2 13l2 -2l2 -2l2 3l2 1l2 -7l2 -5l2 -10l2 -2l2 5l2 13l2 -4l2 -6l2 16l2 0l2 10l2 -8l2 -8l2 9l2 -12l2 -5l2 -1l2 12l2 -10l2 -11l2 5l2 1l2 -6l2 1l2 12l2 2l2 -7l2 11l2 -6l2 2l2 7l2 -3l2 17l2 -15l2 -15l2 -3l2 6l2 7l2 -9l2 26l2 10l2 15l2 -15l2 1l2 -13l2 -6l2 -1l2 -6l2 21l2 -8l2 7l2 -6l2 8l2 -4l2 -7l2 4l2 6l2 -11l2 -12l2 0l2 6l2 -8l2 0l2 -15l2 16l2 -15l2 9l2 -5M388 698l2 10l2 -4l2 -4l2 -4l2 -1l2 2l2 3l2 -1l2 -3l2 6l2 5l2 -1l2 -2l2 -2l2 -5l2 0l2 3l2 -6l2 1l2 -3l2 4l2 -3l2 -2l2 4l2 10l2 -7l2 -8l2 -1l2 2l2 5l2 5l2 0l2 -10l2 4l2 4l2 -8l2 2l2 4l2 1l2 0l2 8l2 3l2 -2l2 -7l2 -4l2 5l2 -4l2 11l2 -1l2 6l2 -8l2 0l2 -5l2 9l2 -7l2 0l2 3l2 -6l2 1l2 1l2 -3l2 -3l2 12l2 -6l2 -2l2 -1l2 3l2 -12l2 -1l2 1l2 3l2 14l2 -7l2 -1l2 10l2 -8l2 5l2 2l2 -11l2 -3l2 4l2 -4l2 -1l2 9l2 3l2 2l2 -4l2 -4l2 0l2 5l2 -1l2 -8l2 7l2 -8l2 2l2 4l2 -6l2 10l2 5l2 -4l2 -6l2 -9l2 9l2 0l2 -7l2 -3l2 -1l2 -4l2 -7l2 11l2 -7l2 3l2 0l2 7l2 -13l2 5l2 5l2 -13l2 2l2 -23l2 6l2 -9l2 6l2 4l2 10l2 -16l2 -9l2 1l2 1l2 -3l2 2l2 10l2 0l2 -9l2 -8l2 13l2 -7l2 4l2 2l2 -1l2 -2l2 7l2 -5l2 10l2 -14l2 13l2 14l2 -4l2 1l2 -8l2 1l2 4l2 7l2 -6l2 7l2 -3l2 -5l2 14l2 -4l2 16l2 5l2 4l2 -4l2 9l2 0l2 -16l2 7l2 -2l2 -5l2 -1l2 8l2 9l2 -2l2 -6l2 9l2 -3l2 -5l2 -3l2 4l2 2l2 4l2 0l2 -10l2 -1l2 2l2 -8l2 4l2 -2l2 9l2 24l2 9l2 -22l2 -14l2 3l2 -16l2 7l2 11l2 2l2 1l2 -17l2 4l2 13l2 -6l2 7l2 -12l2 10l2 8l2 3l2 -2l2 7l2 3l2 -23l2 -3l2 8l2 -2l2 2l2 0l2 -6l2 2l2 -7l2 3l2 10l2 -2l2 0l2 -19l2 6l2 -13l2 21l2 -5l2 -1l2 11l2 -12l2 -7l2 -4l2 -6l2 13l2 3l2 0l2 -7l2 17l2 1l2 -3l2 -10l2 6l2 -1l2 -6l2 0l2 7l2 -13l2 5l2 -4l2 14l2 14l2 -9l2 -3l2 -4l2 -19l2 8l2 7l2 -3l2 -10l2 -11l2 17l2 27l2 -13l2 4l2 -2l2 1l2 8l2 7l2 1l2 -12l2 -8l2 1l2 2l2 4l2 -5l2 5l2 -22l2 -1l2 6l2 9l2 1l2 8l2 -13l2 -5l2 3l2 3l2 4l2 -6l2 -7l2 -5l2 5l2 6l2 3l2 11l2 2l2 12l2 1l2 -5l2 3l2 1l2 -9l2 4l2 5l2 -2l2 13l2 -6l2 -12l2 -5l2 3l2 -20l2 1l2 23l2 -2l2 -4l2 4l2 -8l2 -12l2 9l2 -14l2 4l2 10l2 -4l2 7l2 -5l2 -7l2 14l2 -2l2 -20l2 18l2 0l2 -9l2 -2l2 24l2 -10l2 -1l2 -7l2 17l2 2l2 -15l2 -6l2 -4l2 -8l2 6l2 8l2 7l2 7l2 -7l2 2l2 -9l2 -3l2 -6l2 3l2 8l2 0l2 -11l2 -18l2 12l2 21l2 -3l2 -4l2 9l2 12l2 -24l2 -7l2 -10l2 22l2 -11l2 -2l2 11l2 -3l2 -1l2 0l2 5l2 -6l2 -4l2 -20l2 13M388 699l2 7l2 -2l2 4l2 5l2 3l2 -3l2 -15l2 4l2 -2l2 -7l2 3l2 4l2 -1l2 -2l2 1l2 1l2 8l2 -1l2 -4l2 -4l2 4l2 8l2 -1l2 0l2 0l2 -2l2 0l2 -2l2 -5l2 16l2 2l2 0l2 7l2 -11l2 3l2 -3l2 -7l2 1l2 -2l2 -2l2 3l2 -4l2 1l2 -3l2 10l2 2l2 -3l2 4l2 -3l2 6l2 0l2 -4l2 -9l2 -1l2 2l2 2l2 1l2 -12l2 -2l2 9l2 6l2 -8l2 7l2 5l2 -8l2 5l2 -4l2 -1l2 6l2 3l2 1l2 -5l2 -2l2 1l2 -7l2 2l2 1l2 2l2 -4l2 1l2 -6l2 6l2 -4l2 10l2 -2l2 0l2 0l2 -7l2 -6l2 12l2 -6l2 0l2 2l2 4l2 -2l2 1l2 -3l2 0l2 7l2 0l2 9l2 -5l2 -8l2 -2l2 3l2 0l2 -7l2 0l2 1l2 6l2 2l2 -4l2 4l2 5l2 -1l2 8l2 3l2 -18l2 0l2 -4l2 -9l2 -2l2 6l2 9l2 2l2 -5l2 5l2 5l2 2l2 -4l2 1l2 -10l2 7l2 4l2 -12l2 19l2 -7l2 -5l2 3l2 22l2 -4l2 -2l2 1l2 -5l2 3l2 -2l2 -5l2 -4l2 10l2 -2l2 -4l2 13l2 -1l2 -21l2 3l2 3l2 6l2 3l2 8l2 2l2 -14l2 -6l2 15l2 -11l2 -7l2 -1l2 1l2 2l2 3l2 8l2 -12l2 11l2 -4l2 -16l2 15l2 -4l2 0l2 -2l2 6l2 -19l2 19l2 -1l2 0l2 8l2 -9l2 -11l2 6l2 -7l2 -3l2 -5l2 2l2 4l2 4l2 -11l2 15l2 8l2 -20l2 6l2 -1l2 15l2 -11l2 -15l2 8l2 2l2 -3l2 -6l2 17l2 -11l2 12l2 -5l2 -9l2 1l2 -13l2 16l2 -7l2 -4l2 -2l2 8l2 5l2 -16l2 10l2 -4l2 9l2 -4l2 -3l2 -8l2 7l2 6l2 6l2 0l2 8l2 6l2 0l2 3l2 -26l2 -4l2 13l2 2l2 -6l2 9l2 5l2 -19l2 -4l2 11l2 -6l2 5l2 3l2 1l2 -6l2 9l2 -1l2 -15l2 -3l2 -4l2 8l2 6l2 11l2 -3l2 1l2 9l2 -8l2 0l2 -25l2 5l2 0l2 2l2 14l2 3l2 -5l2 13l2 -14l2 -11l2 6l2 13l2 5l2 -7l2 11l2 1l2 -9l2 4l2 -18l2 5l2 8l2 -9l2 0l2 0l2 -3l2 -5l2 -1l2 3l2 20l2 -3l2 -13l2 6l2 -4l2 9l2 -9l2 5l2 1l2 13l2 -4l2 6l2 1l2 -11l2 -13l2 -1l2 -13l2 10l2 -3l2 13l2 -4l2 17l2 -21l2 20l2 -25l2 -4l2 12l2 20l2 1l2 0l2 -21l2 -4l2 -3l2 19l2 -6l2 5l2 -7l2 13l2 7l2 13l2 -15l2 -5l2 -3l2 20l2 4l2 -9l2 -23l2 3l2 2l2 -1l2 17l2 5l2 -11l2 -6l2 -1l2 -14l2 -17l2 23l2 -16l2 2l2 2l2 5l2 -1l2 -2l2 -8l2 20l2 5l2 -4l2 -3l2 -1l2 -9l2 -4l2 -7l2 17l2 -15l2 30l2 3l2 -1l2 -11l2 -1l2 10l2 -8l2 -2l2 8l2 -9l2 -6l2 7l2 -10l2 -10M388 703l2 -5l2 0l2 1l2 -1l2 -8l2 7l2 5l2 -8l2 0l2 7l2 -4l2 -12l2 4l2 -2l2 4l2 -2l2 8l2 0l2 1l2 0l2 6l2 0l2 6l2 -5l2 1l2 0l2 -3l2 3l2 -2l2 0l2 -6l2 -3l2 -6l2 12l2 0l2 -1l2 2l2 -9l2 2l2 -5l2 10l2 11l2 2l2 -13l2 -8l2 6l2 2l2 3l2 -12l2 5l2 -1l2 2l2 -6l2 4l2 -1l2 -3l2 3l2 -3l2 -4l2 2l2 5l2 2l2 -4l2 0l2 -7l2 14l2 -6l2 4l2 4l2 -5l2 -3l2 3l2 2l2 7l2 2l2 -2l2 -10l2 -2l2 7l2 -5l2 6l2 -7l2 4l2 6l2 1l2 -3l2 -2l2 7l2 6l2 -8l2 3l2 -2l2 -7l2 4l2 -2l2 -2l2 -8l2 -1l2 -4l2 0l2 -10l2 6l2 12l2 -6l2 -6l2 -8l2 15l2 3l2 7l2 -5l2 -5l2 7l2 -20l2 4l2 -1l2 3l2 -19l2 3l2 -8l2 -7l2 1l2 -1l2 -7l2 -4l2 -7l2 -20l2 -11l2 -12l2 -5l2 -11l2 -4l2 -5l2 -9l2 1l2 -15l2 -18l2 2l2 -10l2 -1l2 -9l2 -16l2 8l2 -10l2 -3l2 2l2 -2l2 -13l2 -6l2 -6l2 10l2 7l2 5l2 -3l2 0l2 14l2 -2l2 7l2 12l2 -3l2 20l2 13l2 7l2 1l2 3l2 7l2 13l2 9l2 3l2 14l2 16l2 -6l2 16l2 2l2 8l2 11l2 10l2 23l2 3l2 1l2 -1l2 -2l2 -6l2 2l2 2l2 22l2 -15l2 -8l2 15l2 -3l2 7l2 7l2 1l2 -17l2 16l2 2l2 1l2 -9l2 -6l2 -3l2 -3l2 1l2 5l2 1l2 -14l2 14l2 10l2 6l2 -7l2 -9l2 -11l2 4l2 5l2 -7l2 -4l2 -1l2 -6l2 12l2 -26l2 -20l2 0l2 -11l2 10l2 2l2 -4l2 4l2 18l2 5l2 -3l2 -2l2 -5l2 15l2 -4l2 8l2 7l2 14l2 4l2 4l2 11l2 -17l2 -14l2 -4l2 -3l2 7l2 7l2 6l2 4l2 -1l2 -4l2 -2l2 -8l2 10l2 11l2 -9l2 -8l2 5l2 -9l2 15l2 -8l2 18l2 0l2 -24l2 -10l2 5l2 -17l2 19l2 10l2 -4l2 -13l2 24l2 -6l2 8l2 -1l2 -3l2 -7l2 6l2 -17l2 11l2 -19l2 1l2 9l2 2l2 11l2 0l2 8l2 -5l2 -3l2 -2l2 6l2 -10l2 -5l2 -12l2 4l2 0l2 3l2 -7l2 -2l2 15l2 -9l2 9l2 3l2 13l2 7l2 -16l2 -8l2 0l2 -18l2 13l2 0l2 12l2 1l2 0l2 8l2 10l2 -2l2 16l2 -15l2 -11l2 -12l2 10l2 -12l2 1l2 5l2 -8l2 -4l2 11l2 2l2 -7l2 13l2 0l2 -10l2 -9l2 13l2 6l2 5l2 20l2 -15l2 -6l2 7l2 -13l2 4l2 8l2 -9l2 -7l2 12l2 1l2 -5l2 -2l2 0l2 -4l2 -4l2 -9l2 17l2 -7l2 13l2 15l2 -20l2 4l2 -9l2 3l2 -9l2 -21l2 32l2 14l2 -9l2 3l2 -5l2 -9l2 11l2 -4l2 4l2 21l2 -21l2 0l2 -3l2 -8l2 -2l2 -6l2 6l2 17M388 707l2 1l2 -4l2 2l2 6l2 -6l2 -1l2 8l2 -8l2 -7l2 6l2 -4l2 7l2 -7l2 8l2 8l2 12l2 -11l2 -12l2 3l2 -7l2 0l2 1l2 -7l2 6l2 -4l2 6l2 -4l2 1l2 -4l2 3l2 12l2 6l2 -4l2 -11l2 -2l2 5l2 0l2 -8l2 1l2 2l2 6l2 12l2 -8l2 -1l2 3l2 1l2 1l2 -9l2 -11l2 5l2 -4l2 -2l2 16l2 3l2 -1l2 -6l2 -3l2 1l2 -6l2 0l2 5l2 -1l2 3l2 -4l2 -8l2 6l2 4l2 4l2 -6l2 11l2 -10l2 10l2 -4l2 -1l2 9l2 -6l2 4l2 -11l2 5l2 3l2 -3l2 -9l2 7l2 4l2 -2l2 -10l2 3l2 4l2 2l2 -4l2 -3l2 11l2 8l2 -9l2 1l2 12l2 -1l2 -4l2 -9l2 -14l2 2l2 -7l2 8l2 -2l2 -4l2 5l2 -4l2 -2l2 4l2 3l2 4l2 -9l2 -5l2 -2l2 14l2 5l2 1l2 -2l2 8l2 -10l2 -18l2 -9l2 -7l2 1l2 -6l2 3l2 -6l2 1l2 -9l2 -2l2 -3l2 -1l2 0l2 -6l2 -17l2 -6l2 -6l2 -22l2 -10l2 -2l2 -4l2 -5l2 -2l2 -8l2 1l2 5l2 -1l2 -14l2 13l2 10l2 2l2 -9l2 5l2 -6l2 0l2 -1l2 -3l2 26l2 10l2 1l2 6l2 -13l2 17l2 21l2 -1l2 9l2 2l2 -13l2 22l2 -10l2 6l2 -2l2 5l2 18l2 3l2 7l2 6l2 3l2 0l2 4l2 7l2 16l2 -17l2 5l2 -15l2 10l2 8l2 -4l2 2l2 -7l2 -6l2 1l2 -5l2 7l2 9l2 1l2 -6l2 -11l2 24l2 4l2 -20l2 0l2 -6l2 7l2 -17l2 17l2 -11l2 10l2 22l2 -9l2 -1l2 -13l2 26l2 -2l2 -8l2 0l2 -9l2 8l2 3l2 -2l2 -8l2 -4l2 -9l2 -3l2 -9l2 5l2 10l2 26l2 -7l2 -13l2 4l2 -1l2 -10l2 -2l2 25l2 9l2 -13l2 -8l2 1l2 20l2 -2l2 -15l2 -8l2 14l2 6l2 -6l2 -4l2 9l2 6l2 -22l2 21l2 -6l2 0l2 -5l2 -3l2 8l2 -9l2 -16l2 -7l2 4l2 10l2 4l2 13l2 -10l2 16l2 -22l2 3l2 3l2 -5l2 6l2 0l2 7l2 -13l2 4l2 6l2 -13l2 -13l2 11l2 13l2 2l2 10l2 0l2 -5l2 -12l2 1l2 -6l2 17l2 -1l2 -10l2 9l2 -3l2 5l2 1l2 -9l2 -9l2 8l2 3l2 3l2 0l2 1l2 1l2 16l2 -7l2 -8l2 1l2 3l2 4l2 5l2 -3l2 15l2 -6l2 0l2 -5l2 -1l2 2l2 -7l2 11l2 -5l2 -13l2 5l2 6l2 -7l2 6l2 14l2 -6l2 -1l2 -13l2 -11l2 0l2 4l2 7l2 4l2 18l2 -5l2 -14l2 -7l2 15l2 -5l2 11l2 -3l2 -6l2 11l2 15l2 8l2 20l2 -13l2 -2l2 -17l2 -3l2 -11l2 4l2 5l2 -11l2 13l2 -2l2 -8l2 9l2 -4l2 11l2 -7l2 -2l2 -8l2 -6l2 -8l2 -11l2 16l2 3l2 -6l2 -2l2 1l2 -8l2 -7l2 -13l2 1l2 8l2 3l2 5l2 5l2 6M388 701l2 0l2 6l2 7l2 -5l2 0l2 3l2 -1l2 -7l2 0l2 2l2 -8l2 4l2 4l2 -6l2 5l2 -4l2 -3l2 8l2 -6l2 -2l2 6l2 -4l2 0l2 -1l2 -3l2 -4l2 12l2 -4l2 7l2 -1l2 8l2 -8l2 -9l2 -4l2 3l2 9l2 0l2 6l2 -10l2 -2l2 8l2 -2l2 -5l2 -4l2 2l2 -1l2 -3l2 2l2 -4l2 -3l2 7l2 -3l2 4l2 -1l2 -3l2 9l2 -3l2 7l2 -8l2 6l2 -8l2 3l2 9l2 -7l2 3l2 -1l2 -3l2 -1l2 4l2 7l2 2l2 -5l2 -5l2 -5l2 0l2 8l2 0l2 -16l2 2l2 5l2 -3l2 0l2 11l2 -5l2 -6l2 0l2 6l2 -5l2 12l2 -4l2 1l2 8l2 1l2 -9l2 1l2 -2l2 -3l2 2l2 2l2 3l2 8l2 -9l2 6l2 0l2 -5l2 9l2 -8l2 -4l2 0l2 -6l2 5l2 -2l2 11l2 1l2 1l2 1l2 0l2 5l2 0l2 16l2 -7l2 4l2 -4l2 5l2 -2l2 1l2 -7l2 -4l2 8l2 13l2 15l2 -6l2 5l2 -5l2 -7l2 10l2 3l2 6l2 -2l2 -6l2 -2l2 2l2 2l2 10l2 -2l2 -10l2 4l2 -12l2 0l2 -20l2 6l2 -6l2 -2l2 15l2 -17l2 -12l2 -1l2 0l2 -4l2 7l2 2l2 -4l2 -2l2 -5l2 -8l2 4l2 20l2 -7l2 1l2 8l2 -30l2 13l2 11l2 -2l2 -7l2 -9l2 -1l2 3l2 4l2 -8l2 9l2 -5l2 0l2 2l2 -10l2 -9l2 11l2 13l2 -16l2 0l2 22l2 -14l2 26l2 -11l2 -5l2 -21l2 1l2 -9l2 11l2 20l2 2l2 -13l2 -16l2 1l2 10l2 3l2 3l2 -8l2 3l2 3l2 -4l2 -4l2 4l2 -4l2 11l2 6l2 -1l2 9l2 -9l2 -4l2 -7l2 3l2 -7l2 3l2 8l2 -5l2 -5l2 -2l2 11l2 21l2 -14l2 -11l2 16l2 -4l2 -8l2 6l2 -7l2 4l2 3l2 16l2 -8l2 -11l2 -1l2 -6l2 5l2 -14l2 15l2 3l2 -2l2 -10l2 9l2 -1l2 3l2 -10l2 -1l2 -13l2 11l2 14l2 -7l2 -14l2 -4l2 5l2 4l2 2l2 8l2 3l2 -13l2 -11l2 20l2 -4l2 -8l2 -20l2 6l2 -2l2 27l2 -1l2 -5l2 14l2 2l2 5l2 -18l2 -2l2 2l2 -1l2 16l2 -9l2 -6l2 -2l2 -6l2 14l2 5l2 11l2 -2l2 5l2 -14l2 16l2 -13l2 15l2 -13l2 -14l2 5l2 -1l2 8l2 -1l2 8l2 -14l2 -21l2 6l2 -15l2 12l2 -9l2 0l2 -5l2 -6l2 4l2 6l2 -3l2 6l2 3l2 9l2 9l2 -11l2 -3l2 12l2 -10l2 -4l2 -8l2 -2l2 11l2 -18l2 17l2 -3l2 -15l2 6l2 7l2 9l2 -5l2 1l2 4l2 -2l2 -17l2 -1l2 -3l2 5l2 2l2 -4l2 -8l2 11l2 5l2 4l2 -4l2 -5l2 13l2 2l2 0l2 15l2 8l2 -8l2 9l2 7l2 1l2 -2l2 -9l2 -14l2 -7l2 -5l2 15l2 -2l2 -3l2 8l2 10l2 4l2 -2l2 -8l2 -23l2 10l2 -15l2 -2l2 -3M388 700l2 7l2 1l2 -5l2 -3l2 14l2 3l2 -7l2 -6l2 2l2 -3l2 -9l2 1l2 6l2 4l2 0l2 -4l2 -4l2 -7l2 -1l2 -6l2 -4l2 8l2 -3l2 7l2 5l2 -2l2 8l2 -9l2 1l2 0l2 0l2 6l2 1l2 -13l2 2l2 3l2 -4l2 5l2 1l2 7l2 0l2 2l2 1l2 3l2 -2l2 -7l2 -4l2 1l2 -5l2 4l2 -4l2 -1l2 10l2 3l2 -3l2 -5l2 0l2 2l2 -6l2 5l2 0l2 5l2 -6l2 4l2 2l2 -5l2 4l2 7l2 -7l2 3l2 4l2 3l2 -11l2 2l2 0l2 6l2 0l2 0l2 4l2 -6l2 1l2 -2l2 -6l2 2l2 7l2 -7l2 -9l2 4l2 8l2 -7l2 -4l2 -1l2 5l2 0l2 -1l2 0l2 -9l2 -10l2 3l2 15l2 1l2 -5l2 -3l2 -8l2 1l2 6l2 -9l2 9l2 -8l2 -9l2 -3l2 2l2 -6l2 5l2 -4l2 -4l2 -1l2 5l2 -3l2 -8l2 -11l2 -2l2 4l2 -6l2 -1l2 -6l2 8l2 -6l2 3l2 -13l2 -10l2 1l2 7l2 5l2 -4l2 -4l2 -8l2 3l2 10l2 5l2 3l2 7l2 -3l2 -12l2 3l2 8l2 -7l2 -5l2 6l2 -1l2 13l2 -1l2 4l2 -4l2 -10l2 5l2 12l2 10l2 -8l2 -2l2 18l2 19l2 -4l2 11l2 2l2 -4l2 4l2 0l2 10l2 -5l2 -5l2 7l2 -16l2 9l2 -1l2 4l2 0l2 12l2 4l2 -4l2 -7l2 19l2 0l2 1l2 -11l2 4l2 8l2 -8l2 -18l2 2l2 9l2 4l2 1l2 -10l2 -5l2 14l2 13l2 -15l2 3l2 -6l2 5l2 1l2 -4l2 -2l2 9l2 -10l2 -12l2 1l2 12l2 -12l2 -4l2 19l2 5l2 5l2 -10l2 -15l2 11l2 -1l2 -17l2 0l2 -16l2 12l2 11l2 7l2 8l2 -9l2 0l2 -9l2 10l2 1l2 -1l2 -9l2 8l2 0l2 21l2 6l2 -16l2 6l2 0l2 4l2 -16l2 -1l2 -4l2 -9l2 3l2 1l2 6l2 -10l2 1l2 2l2 -17l2 -3l2 7l2 15l2 5l2 -2l2 2l2 0l2 -10l2 -8l2 7l2 10l2 6l2 -1l2 -1l2 10l2 -7l2 -1l2 -6l2 -20l2 1l2 5l2 1l2 0l2 9l2 15l2 2l2 -11l2 6l2 -4l2 -20l2 6l2 12l2 1l2 2l2 -10l2 2l2 -5l2 4l2 3l2 -3l2 12l2 -2l2 8l2 1l2 -12l2 -11l2 7l2 9l2 -5l2 -9l2 5l2 -3l2 -2l2 -14l2 -8l2 17l2 7l2 -9l2 9l2 10l2 -18l2 10l2 0l2 15l2 -9l2 0l2 -15l2 5l2 2l2 -1l2 -4l2 19l2 -12l2 -9l2 4l2 1l2 -5l2 2l2 4l2 -5l2 3l2 -6l2 3l2 -16l2 -6l2 10l2 -6l2 1l2 2l2 0l2 5l2 -10l2 16l2 -4l2 5l2 -3l2 1l2 1l2 0l2 -3l2 11l2 -8l2 -8l2 16l2 -25l2 10l2 30l2 -3l2 -16l2 0l2 9l2 -1l2 -8l2 19l2 -23l2 9l2 8l2 -19l2 17l2 6l2 6l2 0l2 -15l2 -5l2 5l2 -11l2 2l2 5M388 704l2 -2l2 5l2 -6l2 -4l2 -2l2 8l2 -1l2 1l2 2l2 -4l2 5l2 -3l2 6l2 6l2 8l2 -12l2 0l2 0l2 10l2 -3l2 -5l2 9l2 -4l2 -3l2 6l2 3l2 -2l2 1l2 -6l2 -15l2 0l2 2l2 5l2 2l2 -5l2 4l2 1l2 -5l2 5l2 -4l2 1l2 0l2 -2l2 -7l2 14l2 -1l2 -2l2 -4l2 -13l2 4l2 10l2 0l2 18l2 -16l2 1l2 -2l2 9l2 4l2 -8l2 -5l2 -4l2 0l2 1l2 -3l2 8l2 0l2 3l2 -1l2 -4l2 0l2 0l2 0l2 -3l2 -7l2 -4l2 11l2 2l2 3l2 -4l2 -9l2 1l2 -1l2 -6l2 8l2 2l2 4l2 -6l2 0l2 1l2 7l2 -10l2 3l2 11l2 2l2 -8l2 -4l2 7l2 -6l2 -2l2 5l2 5l2 1l2 5l2 4l2 -3l2 -1l2 -16l2 2l2 5l2 8l2 3l2 -2l2 -6l2 1l2 -3l2 6l2 6l2 -7l2 12l2 -6l2 6l2 -23l2 -3l2 1l2 -4l2 2l2 5l2 4l2 1l2 8l2 -2l2 1l2 -11l2 3l2 2l2 4l2 -13l2 -8l2 4l2 5l2 6l2 -3l2 -1l2 2l2 -8l2 13l2 -12l2 7l2 -9l2 11l2 -11l2 6l2 9l2 -9l2 7l2 8l2 -3l2 4l2 3l2 -24l2 20l2 -4l2 -10l2 -4l2 17l2 -8l2 -13l2 3l2 -11l2 -4l2 13l2 -7l2 5l2 0l2 9l2 0l2 -8l2 0l2 -6l2 7l2 1l2 -1l2 -10l2 4l2 5l2 16l2 3l2 -10l2 8l2 11l2 1l2 -3l2 -14l2 16l2 8l2 -13l2 -29l2 4l2 -1l2 9l2 -5l2 -3l2 19l2 7l2 2l2 -9l2 13l2 7l2 -8l2 -7l2 6l2 3l2 -11l2 17l2 -14l2 -3l2 9l2 3l2 0l2 -8l2 -5l2 1l2 12l2 -9l2 -6l2 -6l2 15l2 13l2 9l2 3l2 -6l2 4l2 -14l2 5l2 -8l2 0l2 -3l2 -18l2 -6l2 3l2 19l2 -8l2 7l2 4l2 18l2 -22l2 6l2 3l2 -16l2 -21l2 5l2 11l2 -15l2 1l2 16l2 -3l2 10l2 -5l2 -6l2 11l2 -5l2 -24l2 7l2 2l2 -10l2 22l2 0l2 2l2 -1l2 17l2 -27l2 -5l2 6l2 9l2 -18l2 -7l2 4l2 11l2 6l2 -14l2 -11l2 14l2 10l2 -16l2 13l2 9l2 -13l2 1l2 -4l2 9l2 21l2 -25l2 26l2 -13l2 7l2 -7l2 -20l2 4l2 -9l2 -13l2 -6l2 16l2 -8l2 10l2 1l2 7l2 3l2 10l2 -6l2 7l2 -16l2 0l2 9l2 -15l2 -9l2 6l2 15l2 12l2 -8l2 2l2 -10l2 13l2 -5l2 0l2 -18l2 3l2 12l2 -18l2 -1l2 13l2 7l2 -8l2 -12l2 11l2 3l2 -3l2 15l2 -5l2 -3l2 12l2 -11l2 -15l2 21l2 -16l2 1l2 5l2 16l2 1l2 -7l2 -10l2 16l2 4l2 2l2 -3l2 -22l2 -1l2 7l2 13l2 18l2 -2l2 -18l2 2l2 -7l2 -9l2 -6l2 14l2 -2l2 -9l2 7l2 -27l2 13l2 5l2 -1l2 -2l2 6l2 2l2 -4l2 -4l2 -3M388 707l2 -1l2 2l2 2l2 4l2 -6l2 2l2 11l2 -2l2 -7l2 3l2 0l2 -1l2 3l2 0l2 -4l2 1l2 -1l2 -6l2 4l2 0l2 -2l2 -2l2 4l2 2l2 -5l2 5l2 -3l2 -6l2 -1l2 1l2 3l2 7l2 -7l2 0l2 -9l2 -2l2 4l2 2l2 8l2 4l2 7l2 -10l2 0l2 1l2 0l2 0l2 -7l2 2l2 7l2 -6l2 2l2 -3l2 5l2 -2l2 -2l2 -5l2 0l2 6l2 0l2 0l2 -11l2 2l2 4l2 5l2 -5l2 6l2 4l2 -2l2 4l2 0l2 -6l2 -3l2 1l2 0l2 1l2 4l2 -11l2 6l2 -2l2 10l2 3l2 8l2 -9l2 -5l2 -6l2 -6l2 -2l2 5l2 -4l2 5l2 9l2 -2l2 7l2 3l2 -12l2 -7l2 -5l2 2l2 0l2 5l2 -6l2 5l2 -4l2 -2l2 -12l2 -1l2 2l2 -7l2 0l2 4l2 -6l2 0l2 -1l2 -9l2 -5l2 -4l2 19l2 4l2 -1l2 -7l2 -7l2 13l2 -4l2 -9l2 -2l2 -1l2 -7l2 -19l2 4l2 -1l2 -4l2 2l2 -11l2 20l2 -13l2 -5l2 -3l2 -12l2 0l2 -6l2 -10l2 25l2 2l2 1l2 -3l2 21l2 2l2 -6l2 -12l2 9l2 -1l2 10l2 1l2 -3l2 11l2 -2l2 11l2 -25l2 21l2 4l2 -17l2 -7l2 8l2 5l2 -1l2 21l2 7l2 -6l2 11l2 0l2 -4l2 8l2 9l2 -6l2 3l2 1l2 5l2 11l2 -18l2 -1l2 2l2 2l2 0l2 12l2 10l2 -18l2 3l2 -3l2 -4l2 6l2 -6l2 8l2 3l2 -14l2 -10l2 7l2 10l2 1l2 -2l2 5l2 -5l2 12l2 3l2 -11l2 -11l2 -3l2 22l2 10l2 -7l2 1l2 -10l2 -11l2 11l2 14l2 -2l2 5l2 -25l2 -8l2 -10l2 2l2 -9l2 -1l2 -9l2 11l2 -7l2 -1l2 2l2 3l2 4l2 6l2 12l2 -11l2 -23l2 2l2 18l2 -14l2 8l2 24l2 -1l2 -6l2 -18l2 3l2 12l2 -11l2 -3l2 -6l2 -6l2 20l2 1l2 12l2 -18l2 -8l2 6l2 9l2 4l2 7l2 15l2 -20l2 -7l2 12l2 13l2 7l2 -14l2 -5l2 -1l2 13l2 1l2 -14l2 6l2 -8l2 4l2 -11l2 -3l2 9l2 -3l2 10l2 0l2 3l2 -5l2 -15l2 6l2 4l2 2l2 -5l2 5l2 24l2 -9l2 -1l2 -6l2 5l2 -6l2 -9l2 -8l2 4l2 19l2 7l2 -8l2 26l2 -4l2 3l2 -1l2 -19l2 -2l2 1l2 0l2 -11l2 1l2 15l2 -7l2 -14l2 15l2 22l2 -9l2 -14l2 -2l2 1l2 -14l2 -1l2 10l2 -6l2 6l2 2l2 16l2 -4l2 -2l2 -5l2 6l2 -7l2 0l2 -9l2 4l2 -2l2 1l2 8l2 -12l2 -5l2 21l2 10l2 0l2 -16l2 -5l2 -18l2 15l2 -6l2 5l2 10l2 4l2 -1l2 6l2 3l2 -3l2 2l2 -4l2 -22l2 21l2 13l2 1l2 -4l2 -9l2 -7l2 0l2 -13l2 18l2 10l2 -14l2 7l2 -21l2 6l2 -7l2 -13l2 19l2 12l2 -2l2 2l2 -6l2 8l2 -6l2 7l2 -7M388 695l2 6l2 4l2 10l2 -11l2 -5l2 8l2 -3l2 0l2 0l2 4l2 -5l2 6l2 -3l2 -4l2 -11l2 9l2 2l2 2l2 -2l2 -6l2 -5l2 1l2 17l2 -4l2 5l2 -1l2 1l2 1l2 -15l2 15l2 2l2 6l2 -8l2 3l2 -9l2 8l2 -8l2 7l2 -2l2 1l2 0l2 10l2 -7l2 -1l2 -1l2 3l2 -2l2 2l2 1l2 1l2 -3l2 -6l2 0l2 -8l2 5l2 7l2 -2l2 8l2 -3l2 0l2 -3l2 -13l2 6l2 -1l2 3l2 -7l2 3l2 -12l2 4l2 9l2 -5l2 16l2 -16l2 2l2 -5l2 6l2 -2l2 14l2 0l2 -12l2 2l2 2l2 4l2 -5l2 -3l2 -2l2 -4l2 6l2 5l2 5l2 0l2 5l2 -10l2 1l2 -11l2 7l2 1l2 -2l2 1l2 7l2 -4l2 -3l2 -3l2 7l2 0l2 -5l2 -4l2 -7l2 -1l2 6l2 2l2 10l2 -1l2 1l2 3l2 -3l2 -2l2 6l2 -12l2 -10l2 4l2 7l2 22l2 -15l2 -5l2 -2l2 -11l2 15l2 -6l2 2l2 4l2 -1l2 7l2 1l2 -4l2 -2l2 0l2 5l2 15l2 -17l2 -4l2 2l2 14l2 -7l2 -8l2 -8l2 -2l2 14l2 7l2 -1l2 8l2 -5l2 -1l2 -5l2 0l2 -7l2 18l2 -1l2 0l2 -4l2 3l2 6l2 -13l2 -13l2 4l2 0l2 5l2 -18l2 3l2 -12l2 11l2 -2l2 4l2 7l2 11l2 -2l2 -9l2 -7l2 -6l2 -8l2 5l2 1l2 1l2 -8l2 8l2 4l2 2l2 -17l2 -2l2 -2l2 -3l2 10l2 -1l2 -4l2 4l2 -6l2 12l2 -4l2 6l2 23l2 -2l2 9l2 0l2 -2l2 -6l2 -34l2 4l2 -2l2 0l2 -2l2 7l2 18l2 18l2 -9l2 -6l2 6l2 -4l2 -8l2 -2l2 -17l2 -16l2 7l2 2l2 -10l2 11l2 0l2 10l2 11l2 0l2 -4l2 12l2 -15l2 -3l2 4l2 8l2 -10l2 -3l2 -10l2 5l2 2l2 -6l2 14l2 -11l2 4l2 19l2 11l2 -9l2 9l2 -20l2 3l2 -4l2 8l2 -11l2 9l2 -3l2 3l2 -10l2 -16l2 12l2 12l2 2l2 -1l2 -3l2 7l2 6l2 -11l2 10l2 -3l2 -4l2 8l2 -6l2 -10l2 -4l2 -2l2 5l2 0l2 8l2 12l2 6l2 11l2 -21l2 -9l2 9l2 -3l2 6l2 -2l2 -5l2 6l2 -3l2 3l2 -10l2 10l2 1l2 4l2 -10l2 8l2 -11l2 5l2 9l2 -3l2 -9l2 -7l2 8l2 -6l2 1l2 -4l2 14l2 18l2 -17l2 -9l2 3l2 6l2 6l2 -11l2 17l2 -3l2 -8l2 -8l2 13l2 6l2 4l2 8l2 -17l2 6l2 -2l2 -10l2 -2l2 4l2 -7l2 8l2 3l2 18l2 -19l2 12l2 -16l2 9l2 11l2 -15l2 -3l2 -3l2 17l2 -13l2 -11l2 5l2 -6l2 12l2 -2l2 -16l2 7l2 -12l2 -21l2 9l2 6l2 4l2 22l2 -17l2 17l2 2l2 8l2 -5l2 -6l2 1l2 -3l2 0l2 9l2 -3l2 -19l2 -5l2 21l2 1l2 -2l2 5l2 0l2 12l2 -18l2 -2l2 0l2 1l2 -5M388 711l2 -4l2 -4l2 -2l2 -1l2 2l2 4l2 -1l2 -3l2 -7l2 9l2 1l2 5l2 -8l2 -15l2 7l2 3l2 7l2 -8l2 4l2 -1l2 0l2 5l2 -6l2 -2l2 -7l2 -1l2 9l2 1l2 6l2 0l2 0l2 5l2 -6l2 -2l2 -1l2 0l2 3l2 8l2 2l2 -4l2 -10l2 -7l2 1l2 -1l2 -4l2 -1l2 9l2 5l2 14l2 0l2 2l2 -14l2 1l2 -6l2 3l2 -4l2 1l2 13l2 -5l2 -4l2 4l2 -1l2 -5l2 9l2 -9l2 -2l2 3l2 10l2 5l2 -1l2 -3l2 -2l2 -5l2 -5l2 2l2 1l2 -9l2 1l2 10l2 11l2 -11l2 6l2 -7l2 -6l2 -3l2 -2l2 8l2 7l2 1l2 0l2 -3l2 -3l2 3l2 -6l2 7l2 -10l2 -6l2 6l2 5l2 2l2 -4l2 2l2 7l2 -8l2 11l2 -2l2 2l2 3l2 5l2 -7l2 -1l2 -7l2 4l2 9l2 -17l2 4l2 0l2 4l2 -1l2 8l2 11l2 -4l2 -6l2 -7l2 -9l2 -10l2 8l2 8l2 12l2 -4l2 4l2 1l2 -9l2 4l2 10l2 -1l2 2l2 2l2 3l2 -1l2 13l2 -9l2 10l2 3l2 -9l2 -5l2 2l2 -13l2 10l2 8l2 -2l2 2l2 -9l2 0l2 -5l2 -2l2 -8l2 -2l2 9l2 9l2 -9l2 -1l2 4l2 0l2 -2l2 -9l2 -1l2 4l2 2l2 -2l2 -9l2 -4l2 5l2 -3l2 4l2 3l2 -2l2 3l2 -4l2 -4l2 12l2 0l2 -7l2 1l2 -12l2 14l2 -9l2 -17l2 -2l2 -9l2 13l2 13l2 15l2 -14l2 3l2 4l2 -9l2 -2l2 6l2 -10l2 -5l2 7l2 -3l2 2l2 3l2 16l2 -1l2 0l2 -6l2 -10l2 -5l2 1l2 10l2 6l2 -6l2 -11l2 16l2 -3l2 19l2 -19l2 -11l2 3l2 -4l2 21l2 18l2 -21l2 -3l2 18l2 -30l2 -5l2 10l2 17l2 -11l2 6l2 2l2 -11l2 -8l2 14l2 12l2 -8l2 8l2 -14l2 2l2 1l2 0l2 -3l2 -16l2 8l2 5l2 12l2 -20l2 -7l2 7l2 8l2 -1l2 7l2 -3l2 -3l2 -5l2 0l2 -5l2 7l2 0l2 -3l2 -6l2 -12l2 1l2 0l2 23l2 -6l2 -11l2 -7l2 10l2 7l2 -20l2 3l2 -9l2 15l2 8l2 -13l2 -1l2 1l2 19l2 3l2 7l2 -22l2 3l2 -2l2 -5l2 4l2 11l2 -3l2 -12l2 11l2 -15l2 -4l2 13l2 -1l2 -5l2 -1l2 0l2 -4l2 -1l2 -7l2 1l2 14l2 4l2 3l2 -5l2 -21l2 19l2 5l2 0l2 5l2 -14l2 1l2 11l2 4l2 -9l2 -1l2 4l2 -2l2 11l2 0l2 -9l2 0l2 -6l2 -10l2 20l2 -12l2 -2l2 0l2 8l2 -16l2 15l2 -11l2 15l2 18l2 -17l2 12l2 -16l2 13l2 5l2 -14l2 4l2 -10l2 -1l2 -3l2 -13l2 6l2 15l2 -12l2 4l2 10l2 -20l2 23l2 -6l2 1l2 3l2 1l2 -1l2 -7l2 1l2 -1l2 -8l2 17l2 5l2 4l2 -7l2 -4l2 -11l2 2l2 0l2 10l2 -20l2 6l2 12l2 -2l2 1M388 705l2 -1l2 -2l2 -3l2 -2l2 -1l2 6l2 1l2 0l2 -7l2 1l2 2l2 -3l2 7l2 -2l2 3l2 0l2 -1l2 -5l2 -2l2 4l2 -4l2 6l2 7l2 -6l2 0l2 3l2 2l2 -7l2 -6l2 0l2 1l2 3l2 -4l2 1l2 3l2 8l2 -1l2 -2l2 0l2 3l2 0l2 0l2 -8l2 0l2 2l2 2l2 8l2 -10l2 3l2 2l2 6l2 1l2 -7l2 8l2 -3l2 1l2 -9l2 1l2 7l2 -3l2 -7l2 7l2 -1l2 -6l2 7l2 1l2 -3l2 6l2 -7l2 -15l2 4l2 -1l2 8l2 2l2 -1l2 -7l2 1l2 6l2 1l2 6l2 7l2 -17l2 13l2 -7l2 -6l2 -3l2 2l2 -2l2 7l2 -6l2 6l2 -9l2 2l2 -1l2 -8l2 16l2 -9l2 3l2 -6l2 -5l2 -6l2 -5l2 -9l2 4l2 2l2 7l2 5l2 -7l2 -3l2 4l2 0l2 -4l2 -9l2 -9l2 1l2 -5l2 1l2 6l2 0l2 -10l2 -14l2 -5l2 -3l2 3l2 -2l2 -14l2 3l2 7l2 -24l2 2l2 9l2 -1l2 0l2 1l2 -10l2 -15l2 -5l2 5l2 1l2 7l2 -4l2 -18l2 1l2 10l2 12l2 0l2 -14l2 0l2 11l2 -1l2 10l2 8l2 4l2 8l2 -1l2 16l2 0l2 -5l2 6l2 4l2 -5l2 14l2 1l2 12l2 -1l2 5l2 -3l2 -2l2 4l2 3l2 9l2 14l2 3l2 -8l2 0l2 9l2 0l2 9l2 21l2 -8l2 0l2 -10l2 -6l2 15l2 -6l2 -14l2 -7l2 2l2 -3l2 -13l2 8l2 2l2 0l2 11l2 5l2 4l2 -6l2 5l2 -2l2 -8l2 1l2 17l2 -29l2 7l2 5l2 9l2 7l2 -9l2 6l2 -12l2 -2l2 2l2 -15l2 5l2 -2l2 3l2 5l2 5l2 11l2 10l2 -21l2 -10l2 -4l2 15l2 -13l2 4l2 -5l2 -3l2 -1l2 5l2 0l2 -5l2 14l2 6l2 -7l2 14l2 -12l2 1l2 -14l2 21l2 6l2 0l2 -11l2 2l2 -3l2 4l2 9l2 -6l2 -11l2 12l2 1l2 1l2 6l2 -10l2 6l2 -8l2 -5l2 14l2 0l2 3l2 -6l2 -8l2 12l2 -3l2 -5l2 0l2 -16l2 9l2 0l2 -3l2 -2l2 2l2 -4l2 13l2 4l2 -6l2 2l2 -1l2 -12l2 -2l2 13l2 -8l2 -10l2 10l2 -7l2 -1l2 -8l2 14l2 8l2 1l2 8l2 0l2 4l2 4l2 -18l2 15l2 14l2 -21l2 -7l2 20l2 -11l2 11l2 -13l2 3l2 -4l2 -11l2 6l2 -1l2 -10l2 -8l2 12l2 3l2 -6l2 2l2 -1l2 6l2 -7l2 12l2 -7l2 -7l2 12l2 -5l2 -4l2 -5l2 0l2 -9l2 5l2 9l2 0l2 -9l2 -5l2 2l2 -12l2 -3l2 -1l2 -1l2 3l2 21l2 -12l2 -3l2 -7l2 9l2 4l2 8l2 -13l2 8l2 -2l2 -3l2 21l2 -13l2 3l2 7l2 -20l2 -12l2 5l2 -9l2 17l2 15l2 -20l2 -4l2 6l2 2l2 -9l2 -4l2 0l2 6l2 16l2 -2l2 -3l2 -4l2 -5l2 -7l2 23l2 0l2 13l2 -4l2 -3l2 -5l2 -16M388 707l2 -10l2 3l2 -9l2 -2l2 6l2 -2l2 1l2 3l2 5l2 -3l2 -2l2 -2l2 -3l2 -3l2 -5l2 4l2 5l2 1l2 -7l2 1l2 -1l2 9l2 6l2 -10l2 -1l2 18l2 -5l2 -7l2 -10l2 -3l2 0l2 2l2 -2l2 7l2 1l2 -8l2 7l2 10l2 -1l2 -5l2 -5l2 4l2 2l2 -2l2 -1l2 -1l2 -3l2 3l2 6l2 12l2 10l2 -7l2 -5l2 2l2 -5l2 4l2 -8l2 10l2 -1l2 -5l2 -1l2 5l2 3l2 -2l2 11l2 -7l2 3l2 -2l2 0l2 -6l2 -3l2 6l2 -7l2 9l2 -7l2 6l2 -4l2 5l2 -1l2 -1l2 -9l2 10l2 -1l2 3l2 -15l2 7l2 -6l2 2l2 2l2 5l2 5l2 -6l2 -10l2 4l2 6l2 2l2 -6l2 -4l2 4l2 -5l2 -4l2 13l2 3l2 2l2 -13l2 -9l2 3l2 -11l2 0l2 6l2 -7l2 10l2 -4l2 -5l2 1l2 -2l2 5l2 -16l2 3l2 -4l2 7l2 -18l2 1l2 -8l2 4l2 2l2 4l2 -9l2 -5l2 -1l2 2l2 4l2 -2l2 -5l2 2l2 -3l2 -5l2 6l2 -11l2 1l2 3l2 -3l2 3l2 8l2 -4l2 0l2 -2l2 -10l2 19l2 -8l2 3l2 9l2 -1l2 -15l2 7l2 16l2 -1l2 -1l2 -12l2 4l2 -1l2 9l2 -3l2 0l2 9l2 -2l2 -2l2 9l2 -2l2 5l2 9l2 -5l2 4l2 14l2 -10l2 6l2 10l2 -13l2 -4l2 -5l2 2l2 11l2 2l2 9l2 -6l2 3l2 7l2 -11l2 -5l2 6l2 -9l2 10l2 4l2 -11l2 -6l2 3l2 15l2 5l2 -5l2 4l2 -3l2 -2l2 2l2 1l2 -3l2 -4l2 -2l2 -14l2 1l2 6l2 10l2 -13l2 -5l2 -10l2 19l2 -13l2 -2l2 2l2 0l2 -6l2 -24l2 5l2 -14l2 -5l2 -6l2 6l2 15l2 -6l2 -1l2 7l2 9l2 2l2 8l2 20l2 4l2 19l2 -16l2 9l2 -10l2 0l2 -20l2 10l2 -10l2 4l2 3l2 4l2 -9l2 -16l2 1l2 27l2 1l2 13l2 -14l2 4l2 -5l2 5l2 -5l2 6l2 -13l2 10l2 17l2 -6l2 3l2 -6l2 -8l2 8l2 1l2 -4l2 -6l2 -9l2 -9l2 7l2 27l2 -11l2 -13l2 3l2 16l2 0l2 2l2 -25l2 17l2 -5l2 13l2 8l2 8l2 -8l2 -17l2 4l2 17l2 -14l2 0l2 5l2 3l2 2l2 -7l2 -4l2 -2l2 1l2 10l2 -1l2 -16l2 8l2 -15l2 1l2 6l2 16l2 -1l2 -6l2 5l2 -4l2 3l2 -9l2 11l2 -9l2 4l2 12l2 4l2 -3l2 -7l2 3l2 3l2 -1l2 -3l2 -8l2 -13l2 -11l2 0l2 6l2 -12l2 5l2 10l2 16l2 -20l2 -4l2 -10l2 -12l2 4l2 7l2 13l2 -3l2 -9l2 15l2 -2l2 -3l2 11l2 6l2 3l2 -11l2 -13l2 14l2 10l2 -23l2 -3l2 -3l2 10l2 11l2 -5l2 4l2 -3l2 5l2 2l2 -7l2 -8l2 5l2 4l2 -2l2 -3l2 4l2 16l2 10l2 -4l2 -8l2 -1l2 0l2 -8l2 24l2 -10l2 12l2 -25M388 697l2 -3l2 1l2 10l2 -7l2 4l2 5l2 -8l2 0l2 -1l2 8l2 -4l2 6l2 5l2 -5l2 -9l2 3l2 -2l2 -4l2 4l2 4l2 10l2 -7l2 12l2 -1l2 -7l2 -3l2 10l2 -8l2 0l2 -6l2 -1l2 1l2 2l2 10l2 -3l2 -3l2 0l2 -8l2 -7l2 -1l2 18l2 -1l2 -1l2 -1l2 -1l2 -9l2 3l2 4l2 2l2 8l2 -6l2 2l2 -3l2 -4l2 -2l2 -3l2 -1l2 3l2 5l2 2l2 -3l2 -3l2 10l2 -6l2 -1l2 -2l2 8l2 -3l2 -4l2 -2l2 5l2 -7l2 1l2 -8l2 -2l2 10l2 -1l2 9l2 -3l2 -4l2 0l2 5l2 2l2 -6l2 0l2 4l2 -5l2 -1l2 11l2 -9l2 -4l2 -1l2 -3l2 -1l2 4l2 5l2 2l2 -8l2 6l2 4l2 -12l2 14l2 -1l2 8l2 -5l2 -6l2 -1l2 -5l2 2l2 4l2 1l2 -10l2 1l2 -11l2 4l2 -2l2 5l2 -4l2 10l2 -3l2 4l2 1l2 -13l2 7l2 -8l2 -6l2 3l2 4l2 -3l2 -2l2 0l2 3l2 5l2 3l2 -10l2 -13l2 2l2 6l2 3l2 -1l2 0l2 1l2 -3l2 2l2 9l2 -16l2 5l2 6l2 2l2 -5l2 8l2 7l2 -5l2 -1l2 6l2 0l2 1l2 -4l2 -5l2 -7l2 9l2 9l2 0l2 -8l2 -16l2 13l2 -1l2 10l2 -13l2 6l2 4l2 -5l2 -3l2 12l2 2l2 -12l2 5l2 -2l2 13l2 -11l2 2l2 -8l2 11l2 11l2 -11l2 4l2 8l2 11l2 -6l2 -11l2 -8l2 10l2 -15l2 4l2 -4l2 8l2 7l2 -2l2 -14l2 5l2 0l2 -4l2 7l2 -11l2 26l2 -17l2 -5l2 -3l2 11l2 -3l2 -12l2 11l2 11l2 0l2 -5l2 3l2 -7l2 8l2 -4l2 -12l2 -5l2 -6l2 -1l2 -2l2 -8l2 -1l2 5l2 6l2 8l2 6l2 -7l2 8l2 -5l2 -8l2 -9l2 16l2 -9l2 -1l2 12l2 7l2 -1l2 -10l2 8l2 -1l2 6l2 -4l2 3l2 -7l2 1l2 -8l2 10l2 6l2 -8l2 -8l2 17l2 12l2 -7l2 14l2 -4l2 -13l2 7l2 1l2 12l2 -2l2 -7l2 2l2 -12l2 1l2 13l2 -16l2 3l2 8l2 -2l2 -1l2 -11l2 -6l2 -3l2 -2l2 5l2 1l2 -14l2 7l2 4l2 6l2 14l2 -13l2 6l2 9l2 -12l2 14l2 6l2 -17l2 -6l2 16l2 -5l2 -12l2 0l2 11l2 2l2 4l2 -1l2 -4l2 0l2 1l2 9l2 -13l2 12l2 -6l2 0l2 -5l2 0l2 -14l2 12l2 8l2 7l2 -14l2 -1l2 -1l2 14l2 5l2 3l2 -8l2 -10l2 1l2 -9l2 -3l2 4l2 -2l2 4l2 14l2 4l2 -19l2 -3l2 0l2 -6l2 7l2 5l2 2l2 -6l2 -1l2 -5l2 3l2 -13l2 16l2 -3l2 15l2 6l2 -16l2 4l2 8l2 -4l2 -7l2 14l2 -7l2 -17l2 9l2 -14l2 6l2 20l2 -19l2 -3l2 -2l2 19l2 4l2 -7l2 -1l2 4l2 -4l2 -2l2 7l2 -10l2 14l2 -18l2 19l2 10l2 -15l2 -3l2 -11l2 23M388 709l2 -7l2 2l2 -11l2 3l2 2l2 0l2 2l2 -6l2 14l2 -1l2 1l2 -9l2 -2l2 -3l2 10l2 4l2 2l2 -10l2 -1l2 -6l2 9l2 5l2 -8l2 -7l2 4l2 10l2 -4l2 -3l2 -3l2 -10l2 7l2 -1l2 7l2 4l2 -3l2 2l2 0l2 4l2 2l2 3l2 1l2 -6l2 0l2 0l2 -6l2 4l2 6l2 -3l2 -1l2 1l2 4l2 -3l2 -7l2 -2l2 7l2 2l2 -1l2 2l2 -7l2 -4l2 7l2 0l2 5l2 -7l2 -8l2 4l2 5l2 -10l2 0l2 3l2 -1l2 8l2 -9l2 -9l2 2l2 11l2 -1l2 -1l2 6l2 8l2 -12l2 2l2 -5l2 9l2 -5l2 0l2 -1l2 7l2 -9l2 5l2 7l2 -9l2 6l2 2l2 2l2 -3l2 -3l2 4l2 -4l2 7l2 -1l2 -10l2 -6l2 6l2 5l2 -1l2 -3l2 -1l2 1l2 1l2 -8l2 1l2 2l2 -12l2 -4l2 10l2 -10l2 4l2 11l2 6l2 -9l2 2l2 3l2 -9l2 14l2 -1l2 -12l2 -5l2 9l2 11l2 -3l2 -3l2 12l2 -2l2 -2l2 4l2 -12l2 -4l2 0l2 0l2 4l2 7l2 -8l2 13l2 -10l2 0l2 5l2 -11l2 -7l2 -2l2 -6l2 6l2 3l2 9l2 -5l2 4l2 11l2 -23l2 0l2 10l2 -7l2 14l2 -11l2 5l2 6l2 -1l2 5l2 1l2 7l2 4l2 -1l2 -7l2 -16l2 2l2 -2l2 11l2 -8l2 12l2 -7l2 5l2 -1l2 11l2 -3l2 -12l2 4l2 5l2 -5l2 0l2 -7l2 4l2 4l2 2l2 -4l2 -21l2 -1l2 -2l2 5l2 12l2 11l2 18l2 -14l2 -7l2 3l2 -5l2 -14l2 7l2 8l2 -1l2 -13l2 0l2 -10l2 -3l2 14l2 11l2 2l2 12l2 -1l2 -16l2 -12l2 11l2 -2l2 7l2 18l2 -5l2 -19l2 20l2 -8l2 5l2 -11l2 -3l2 3l2 -8l2 14l2 5l2 -15l2 12l2 -22l2 -5l2 1l2 -2l2 9l2 10l2 5l2 -8l2 9l2 -13l2 16l2 -16l2 -22l2 8l2 8l2 6l2 7l2 10l2 -21l2 12l2 -10l2 -2l2 9l2 3l2 -13l2 4l2 2l2 -10l2 4l2 -9l2 7l2 -7l2 -12l2 -9l2 19l2 3l2 6l2 0l2 -7l2 3l2 -2l2 8l2 13l2 -3l2 -12l2 12l2 -7l2 -1l2 -1l2 -2l2 7l2 0l2 -17l2 9l2 5l2 8l2 -1l2 7l2 -2l2 -16l2 -2l2 2l2 24l2 3l2 0l2 -2l2 -13l2 -6l2 1l2 8l2 12l2 -11l2 -11l2 -14l2 -5l2 21l2 -3l2 -3l2 -5l2 8l2 -4l2 15l2 -2l2 0l2 -10l2 14l2 4l2 -3l2 7l2 2l2 0l2 -1l2 -10l2 -8l2 3l2 -3l2 8l2 5l2 -6l2 -11l2 -1l2 -7l2 -2l2 -10l2 -9l2 0l2 2l2 -14l2 -8l2 32l2 7l2 -7l2 3l2 16l2 -3l2 12l2 -1l2 10l2 -7l2 0l2 5l2 -9l2 -7l2 -1l2 4l2 -3l2 10l2 4l2 -2l2 -13l2 -4l2 6l2 -5l2 -6l2 -15l2 20l2 1l2 21l2 -1l2 -17l2 -7l2 -2l2 2M388 718l2 -5l2 2l2 7l2 -14l2 -1l2 -4l2 2l2 2l2 5l2 -4l2 1l2 -8l2 -1l2 4l2 -3l2 0l2 -1l2 -7l2 2l2 4l2 5l2 -5l2 0l2 2l2 2l2 -4l2 -2l2 1l2 3l2 -8l2 9l2 2l2 3l2 -9l2 -2l2 -8l2 11l2 2l2 11l2 0l2 1l2 -11l2 -2l2 9l2 2l2 3l2 -8l2 2l2 1l2 2l2 3l2 1l2 0l2 -4l2 0l2 -8l2 -3l2 3l2 8l2 -10l2 -1l2 1l2 3l2 -4l2 0l2 5l2 11l2 -2l2 0l2 -4l2 -1l2 2l2 2l2 -5l2 -5l2 2l2 5l2 -10l2 6l2 -2l2 4l2 -2l2 -1l2 -3l2 -4l2 4l2 3l2 5l2 10l2 0l2 -12l2 -6l2 4l2 -8l2 -8l2 11l2 0l2 -2l2 3l2 -5l2 2l2 5l2 4l2 0l2 -2l2 8l2 -2l2 -2l2 -9l2 -3l2 -6l2 -3l2 -1l2 -9l2 -6l2 2l2 6l2 4l2 -14l2 0l2 -1l2 -19l2 -10l2 -2l2 -1l2 -3l2 -16l2 -8l2 -13l2 -7l2 -15l2 -15l2 1l2 -2l2 -13l2 -3l2 -17l2 -8l2 -6l2 -8l2 -1l2 -10l2 -11l2 -11l2 0l2 -3l2 -3l2 4l2 14l2 10l2 -15l2 17l2 10l2 1l2 -11l2 20l2 21l2 7l2 14l2 8l2 21l2 7l2 -5l2 8l2 -12l2 11l2 19l2 10l2 7l2 6l2 5l2 4l2 9l2 -4l2 12l2 1l2 21l2 -1l2 19l2 -1l2 14l2 -2l2 -3l2 -8l2 -3l2 10l2 14l2 -8l2 4l2 9l2 -15l2 -6l2 -5l2 8l2 2l2 3l2 8l2 -13l2 -8l2 -8l2 3l2 -1l2 -15l2 2l2 8l2 -17l2 9l2 8l2 -7l2 0l2 -1l2 11l2 20l2 0l2 -10l2 -10l2 17l2 -1l2 12l2 1l2 -13l2 -6l2 -8l2 -1l2 -3l2 -23l2 2l2 -3l2 -12l2 7l2 7l2 2l2 10l2 0l2 9l2 2l2 -2l2 13l2 7l2 -3l2 -2l2 -3l2 -19l2 14l2 5l2 -3l2 -3l2 7l2 5l2 3l2 -2l2 -1l2 3l2 -3l2 -7l2 -1l2 20l2 -12l2 5l2 -18l2 9l2 -14l2 4l2 14l2 -1l2 -13l2 12l2 -7l2 3l2 -10l2 -4l2 2l2 15l2 14l2 -4l2 -5l2 3l2 2l2 -9l2 7l2 3l2 -11l2 -16l2 1l2 0l2 1l2 6l2 -5l2 -1l2 5l2 -3l2 9l2 -4l2 5l2 -14l2 -1l2 -8l2 4l2 -4l2 -6l2 -2l2 -3l2 -2l2 10l2 -2l2 4l2 -6l2 10l2 -14l2 2l2 17l2 8l2 10l2 -1l2 -2l2 -4l2 -1l2 16l2 -25l2 3l2 5l2 1l2 0l2 3l2 8l2 -6l2 -4l2 6l2 -24l2 13l2 -4l2 11l2 5l2 3l2 -2l2 1l2 -11l2 -2l2 -10l2 -12l2 17l2 -5l2 11l2 16l2 -15l2 0l2 -4l2 -2l2 -7l2 14l2 -6l2 1l2 13l2 2l2 1l2 -7l2 6l2 18l2 -7l2 -8l2 -3l2 -1l2 0l2 7l2 -12l2 1l2 -18l2 10l2 10l2 1l2 3l2 -4l2 18l2 -17l2 2l2 -10l2 10l2 -30l2 11M388 715l2 1l2 3l2 -8l2 -2l2 0l2 -1l2 14l2 -1l2 -1l2 -19l2 -7l2 5l2 0l2 -3l2 -5l2 -7l2 8l2 -1l2 9l2 0l2 -2l2 -1l2 -4l2 -1l2 2l2 -3l2 7l2 -7l2 2l2 9l2 2l2 2l2 -2l2 -6l2 6l2 -4l2 1l2 -9l2 6l2 5l2 7l2 1l2 3l2 -6l2 2l2 -2l2 8l2 -11l2 -9l2 -9l2 6l2 5l2 3l2 -1l2 2l2 1l2 -7l2 4l2 -5l2 5l2 -4l2 3l2 7l2 -5l2 3l2 0l2 -3l2 3l2 -3l2 -5l2 -7l2 1l2 6l2 8l2 5l2 1l2 -3l2 -5l2 9l2 -1l2 -1l2 2l2 8l2 -3l2 0l2 -3l2 2l2 -9l2 -6l2 -1l2 4l2 15l2 -8l2 4l2 1l2 -9l2 1l2 0l2 -4l2 6l2 2l2 -4l2 -1l2 -7l2 6l2 7l2 -7l2 -2l2 9l2 -11l2 -4l2 -2l2 -5l2 -8l2 9l2 9l2 1l2 -4l2 -18l2 7l2 11l2 -7l2 2l2 14l2 -10l2 6l2 5l2 -20l2 4l2 -2l2 2l2 -8l2 0l2 1l2 3l2 3l2 -6l2 2l2 -8l2 1l2 -4l2 1l2 -2l2 -6l2 7l2 -14l2 4l2 5l2 2l2 -1l2 15l2 12l2 -15l2 -10l2 7l2 -10l2 -12l2 13l2 0l2 2l2 5l2 -6l2 -5l2 -5l2 13l2 7l2 4l2 -3l2 6l2 -3l2 2l2 -7l2 6l2 -15l2 -4l2 -1l2 26l2 -5l2 3l2 18l2 -6l2 -14l2 5l2 5l2 -6l2 7l2 -13l2 22l2 -4l2 12l2 -22l2 7l2 19l2 -18l2 1l2 -2l2 -4l2 -13l2 0l2 -8l2 13l2 27l2 7l2 -19l2 -2l2 -22l2 1l2 -1l2 6l2 -7l2 5l2 -2l2 -2l2 1l2 7l2 -2l2 -6l2 -15l2 7l2 -2l2 -4l2 8l2 9l2 -16l2 4l2 5l2 -5l2 3l2 1l2 2l2 1l2 4l2 5l2 6l2 4l2 -2l2 -13l2 12l2 -2l2 -3l2 -2l2 10l2 -3l2 3l2 -3l2 4l2 -21l2 5l2 3l2 12l2 8l2 -17l2 -1l2 -13l2 9l2 -5l2 -4l2 -4l2 -4l2 10l2 -5l2 -2l2 22l2 -8l2 9l2 -3l2 1l2 -5l2 -15l2 0l2 5l2 9l2 11l2 16l2 0l2 -11l2 -1l2 1l2 -6l2 -8l2 -3l2 -2l2 -1l2 6l2 -7l2 2l2 -10l2 16l2 -22l2 -2l2 5l2 1l2 16l2 -7l2 -5l2 4l2 0l2 15l2 -33l2 7l2 17l2 5l2 8l2 -7l2 4l2 -3l2 12l2 -19l2 7l2 5l2 -3l2 10l2 -1l2 -11l2 17l2 -8l2 -11l2 12l2 -25l2 2l2 2l2 8l2 -9l2 15l2 11l2 1l2 11l2 -8l2 -14l2 -18l2 7l2 -16l2 11l2 -5l2 -5l2 1l2 10l2 -1l2 17l2 -1l2 -11l2 -1l2 5l2 -7l2 13l2 -5l2 -11l2 -9l2 3l2 30l2 -12l2 2l2 -6l2 6l2 9l2 -7l2 -10l2 -12l2 15l2 8l2 11l2 -2l2 2l2 11l2 -3l2 -3l2 -23l2 7l2 -20l2 14l2 -2l2 -5l2 9l2 9l2 9l2 -13l2 -5l2 21l2 -5M388 704l2 5l2 -3l2 -6l2 -9l2 3l2 9l2 4l2 9l2 -7l2 -10l2 -7l2 2l2 2l2 -1l2 7l2 2l2 5l2 3l2 -3l2 4l2 -5l2 -13l2 11l2 5l2 -7l2 1l2 -6l2 1l2 -9l2 7l2 3l2 1l2 -1l2 7l2 0l2 -3l2 0l2 1l2 7l2 -10l2 4l2 -5l2 6l2 2l2 -6l2 14l2 -3l2 6l2 -7l2 -5l2 3l2 2l2 -4l2 -6l2 -13l2 -1l2 8l2 1l2 7l2 6l2 -7l2 -12l2 3l2 5l2 8l2 -5l2 0l2 -2l2 -4l2 2l2 6l2 -6l2 7l2 4l2 -7l2 2l2 -10l2 2l2 -8l2 7l2 6l2 -4l2 1l2 -3l2 -3l2 8l2 3l2 -4l2 2l2 5l2 -1l2 -3l2 5l2 3l2 -4l2 -6l2 2l2 7l2 1l2 4l2 -2l2 -3l2 -7l2 20l2 -10l2 -5l2 6l2 -1l2 1l2 8l2 8l2 -2l2 -8l2 8l2 4l2 3l2 7l2 5l2 -10l2 -9l2 2l2 13l2 5l2 6l2 3l2 8l2 -5l2 10l2 -7l2 -4l2 -3l2 -8l2 -5l2 16l2 6l2 -6l2 3l2 -12l2 3l2 8l2 17l2 -14l2 15l2 -6l2 -2l2 -14l2 11l2 0l2 -1l2 -12l2 -5l2 3l2 -3l2 -6l2 -3l2 6l2 8l2 -10l2 -10l2 3l2 2l2 -4l2 3l2 -8l2 -16l2 -7l2 2l2 30l2 -17l2 -3l2 -1l2 14l2 0l2 -9l2 13l2 -6l2 -7l2 -2l2 -9l2 -13l2 10l2 7l2 0l2 5l2 -8l2 -2l2 -10l2 7l2 -3l2 -1l2 -17l2 1l2 9l2 19l2 0l2 0l2 12l2 -11l2 7l2 9l2 -9l2 -7l2 -5l2 6l2 -7l2 -15l2 1l2 28l2 -22l2 -1l2 -1l2 0l2 4l2 0l2 0l2 3l2 -17l2 -5l2 -5l2 -4l2 6l2 -11l2 6l2 -5l2 16l2 -11l2 -2l2 13l2 9l2 5l2 -2l2 2l2 16l2 -5l2 -11l2 13l2 -14l2 -1l2 -3l2 -2l2 -6l2 7l2 27l2 -15l2 2l2 0l2 12l2 0l2 -10l2 -2l2 3l2 -6l2 2l2 15l2 -12l2 3l2 9l2 -20l2 -1l2 5l2 19l2 0l2 -7l2 -14l2 8l2 5l2 6l2 0l2 6l2 -4l2 -3l2 -4l2 -7l2 -12l2 10l2 2l2 -2l2 14l2 -7l2 -12l2 14l2 -5l2 -7l2 -5l2 -14l2 13l2 19l2 -8l2 7l2 -2l2 -1l2 -5l2 -8l2 12l2 -14l2 5l2 1l2 9l2 -16l2 -7l2 13l2 -11l2 -8l2 -10l2 16l2 5l2 -8l2 -7l2 0l2 3l2 6l2 -8l2 8l2 15l2 -2l2 -17l2 -3l2 2l2 8l2 -16l2 6l2 8l2 -10l2 11l2 -6l2 13l2 4l2 -12l2 7l2 6l2 -10l2 2l2 13l2 -3l2 -25l2 -1l2 6l2 -3l2 2l2 -3l2 11l2 4l2 1l2 -2l2 -9l2 6l2 -11l2 14l2 -2l2 -2l2 -19l2 13l2 3l2 -14l2 1l2 13l2 1l2 -2l2 2l2 -7l2 14l2 -2l2 1l2 -7l2 7l2 -18l2 17l2 -8l2 1l2 9l2 -9l2 13l2 0l2 7l2 0l2 -1l2 2l2 -4l2 -6M388 704l2 -5l2 -2l2 -7l2 4l2 -1l2 8l2 3l2 7l2 -10l2 1l2 -6l2 -1l2 -1l2 -3l2 6l2 10l2 -4l2 -3l2 5l2 -3l2 -3l2 -3l2 -2l2 2l2 1l2 8l2 1l2 0l2 3l2 6l2 4l2 -6l2 5l2 6l2 -6l2 -4l2 -7l2 -1l2 0l2 5l2 -3l2 9l2 -3l2 -2l2 -5l2 -8l2 6l2 5l2 4l2 -2l2 2l2 -9l2 -2l2 -7l2 4l2 2l2 6l2 2l2 -3l2 -2l2 -3l2 9l2 -9l2 5l2 2l2 -5l2 3l2 -7l2 6l2 2l2 1l2 -5l2 8l2 1l2 -3l2 6l2 1l2 -5l2 5l2 5l2 -3l2 6l2 -5l2 -6l2 -3l2 8l2 -9l2 -4l2 2l2 3l2 -4l2 0l2 4l2 2l2 0l2 -12l2 4l2 -6l2 -2l2 4l2 6l2 -3l2 3l2 -17l2 2l2 0l2 5l2 5l2 0l2 3l2 4l2 1l2 -6l2 15l2 -6l2 9l2 -3l2 -3l2 -1l2 -5l2 -2l2 -1l2 -1l2 7l2 0l2 5l2 -6l2 13l2 1l2 6l2 3l2 -2l2 -2l2 -1l2 -2l2 -9l2 -11l2 1l2 15l2 -14l2 21l2 -4l2 7l2 -16l2 1l2 10l2 4l2 -8l2 -1l2 3l2 -7l2 9l2 -5l2 9l2 -7l2 -11l2 -2l2 10l2 -5l2 -11l2 -11l2 0l2 20l2 -5l2 -11l2 1l2 -10l2 12l2 15l2 5l2 -5l2 -2l2 10l2 -10l2 1l2 7l2 -17l2 5l2 -12l2 -2l2 -13l2 18l2 -11l2 1l2 2l2 4l2 -6l2 -11l2 16l2 -4l2 -1l2 10l2 -10l2 11l2 8l2 -8l2 20l2 3l2 -4l2 4l2 -9l2 -20l2 -7l2 6l2 -5l2 -1l2 7l2 -18l2 -18l2 12l2 8l2 -10l2 2l2 27l2 -2l2 -16l2 -17l2 -3l2 -13l2 13l2 -2l2 -21l2 10l2 -13l2 7l2 0l2 7l2 13l2 -4l2 5l2 25l2 -13l2 5l2 11l2 10l2 11l2 14l2 -20l2 -2l2 6l2 -28l2 12l2 -13l2 9l2 12l2 -10l2 6l2 -10l2 10l2 -2l2 14l2 -4l2 10l2 -3l2 -6l2 -21l2 8l2 -1l2 19l2 12l2 -4l2 -13l2 -1l2 -5l2 3l2 5l2 -10l2 3l2 9l2 10l2 -7l2 -2l2 -10l2 -1l2 19l2 -17l2 -16l2 15l2 -1l2 4l2 11l2 -17l2 -6l2 -2l2 12l2 -8l2 1l2 5l2 2l2 13l2 3l2 5l2 -7l2 -14l2 11l2 1l2 -11l2 11l2 -4l2 2l2 12l2 -9l2 -19l2 -5l2 4l2 15l2 -9l2 15l2 -11l2 2l2 5l2 -6l2 -1l2 9l2 -8l2 -2l2 -3l2 5l2 -12l2 3l2 5l2 -4l2 8l2 -2l2 9l2 -4l2 17l2 2l2 -20l2 -14l2 -5l2 5l2 13l2 -9l2 2l2 16l2 -2l2 -12l2 5l2 -15l2 3l2 1l2 29l2 -25l2 24l2 -19l2 6l2 0l2 -8l2 -10l2 7l2 5l2 -9l2 7l2 -4l2 -6l2 10l2 -12l2 -9l2 11l2 -5l2 8l2 11l2 9l2 -4l2 -10l2 6l2 -13l2 0l2 -1l2 -9l2 18l2 -5l2 -1l2 1l2 -9l2 -1l2 16l2 0M388 703l2 0l2 -9l2 5l2 8l2 0l2 -2l2 6l2 -13l2 3l2 -6l2 8l2 -8l2 7l2 -6l2 0l2 -1l2 2l2 8l2 -10l2 -3l2 10l2 -3l2 -3l2 -11l2 -3l2 12l2 2l2 -2l2 2l2 2l2 3l2 0l2 -6l2 6l2 -1l2 0l2 12l2 -6l2 0l2 -9l2 -3l2 -2l2 1l2 4l2 -7l2 5l2 -4l2 2l2 5l2 1l2 -2l2 8l2 -1l2 -3l2 -4l2 7l2 4l2 -4l2 -6l2 6l2 5l2 -5l2 1l2 5l2 -10l2 9l2 -8l2 6l2 3l2 -4l2 -5l2 -3l2 0l2 11l2 1l2 -3l2 -7l2 1l2 3l2 3l2 -1l2 -6l2 -2l2 -2l2 -2l2 8l2 5l2 2l2 0l2 -6l2 7l2 1l2 -3l2 -3l2 -3l2 -1l2 -13l2 5l2 3l2 5l2 6l2 -10l2 2l2 4l2 3l2 1l2 3l2 4l2 -1l2 -10l2 1l2 9l2 4l2 -6l2 -7l2 2l2 5l2 -6l2 4l2 3l2 -7l2 4l2 -9l2 3l2 -4l2 6l2 3l2 2l2 15l2 1l2 3l2 -9l2 3l2 0l2 -1l2 -2l2 6l2 -3l2 -2l2 2l2 13l2 -10l2 10l2 -9l2 13l2 -6l2 -1l2 17l2 -4l2 -17l2 -9l2 5l2 13l2 -6l2 -4l2 7l2 -6l2 -1l2 4l2 2l2 3l2 -1l2 -11l2 9l2 0l2 3l2 -7l2 5l2 -5l2 4l2 4l2 -13l2 -6l2 6l2 2l2 -20l2 -16l2 -14l2 11l2 11l2 -3l2 -8l2 -3l2 0l2 -1l2 -3l2 -2l2 5l2 6l2 0l2 12l2 -9l2 18l2 -7l2 -3l2 1l2 -2l2 6l2 13l2 -13l2 8l2 -10l2 6l2 2l2 -1l2 -9l2 -10l2 9l2 19l2 2l2 3l2 0l2 -1l2 -20l2 -5l2 -7l2 7l2 -13l2 8l2 -5l2 -12l2 -2l2 -1l2 -6l2 -7l2 -5l2 0l2 10l2 -3l2 2l2 4l2 -1l2 -1l2 -10l2 28l2 11l2 0l2 -9l2 -2l2 3l2 -1l2 -15l2 1l2 12l2 -1l2 3l2 20l2 -4l2 -5l2 -4l2 10l2 -9l2 -11l2 9l2 7l2 -10l2 8l2 19l2 -2l2 -20l2 -3l2 -5l2 -7l2 17l2 3l2 -3l2 -5l2 -3l2 13l2 -3l2 12l2 -6l2 -11l2 9l2 5l2 -1l2 4l2 3l2 -3l2 -6l2 0l2 -11l2 -7l2 -1l2 1l2 14l2 -7l2 -9l2 6l2 -8l2 3l2 3l2 -2l2 8l2 -2l2 2l2 -1l2 -7l2 4l2 11l2 -5l2 6l2 -19l2 7l2 -8l2 24l2 11l2 -7l2 -17l2 -5l2 14l2 -13l2 -5l2 11l2 -16l2 14l2 8l2 -6l2 3l2 3l2 -9l2 -10l2 4l2 6l2 -3l2 -1l2 1l2 -12l2 9l2 2l2 4l2 -4l2 -3l2 9l2 5l2 5l2 -12l2 -4l2 13l2 0l2 16l2 -14l2 -2l2 -5l2 -6l2 4l2 -7l2 -11l2 11l2 5l2 7l2 6l2 2l2 0l2 -4l2 -4l2 5l2 0l2 -12l2 14l2 6l2 -6l2 2l2 -13l2 3l2 6l2 -25l2 8l2 10l2 8l2 5l2 18l2 12l2 -1l2 -6l2 -17l2 -8l2 -3l2 13M388 699l2 11l2 0l2 -5l2 -4l2 5l2 1l2 1l2 8l2 5l2 -8l2 -7l2 -2l2 -4l2 4l2 8l2 -6l2 6l2 5l2 -5l2 -4l2 -2l2 1l2 0l2 -3l2 -7l2 -6l2 11l2 -1l2 -3l2 0l2 -5l2 7l2 20l2 -8l2 1l2 -7l2 0l2 1l2 -9l2 -3l2 5l2 15l2 -3l2 -12l2 -1l2 1l2 2l2 3l2 -3l2 7l2 1l2 -7l2 -1l2 3l2 4l2 -3l2 -3l2 14l2 8l2 -1l2 -10l2 7l2 -3l2 -1l2 2l2 -1l2 2l2 -2l2 3l2 -8l2 -5l2 -7l2 6l2 4l2 -4l2 3l2 3l2 -3l2 -5l2 -1l2 4l2 16l2 -5l2 0l2 1l2 -10l2 -2l2 6l2 0l2 -4l2 -2l2 4l2 -1l2 1l2 3l2 -4l2 -4l2 0l2 -1l2 -5l2 7l2 9l2 -8l2 4l2 4l2 -9l2 14l2 -4l2 12l2 2l2 -2l2 -8l2 -4l2 4l2 -6l2 -1l2 3l2 12l2 0l2 7l2 6l2 9l2 -4l2 -5l2 8l2 0l2 -7l2 -5l2 15l2 4l2 2l2 0l2 -1l2 -1l2 10l2 0l2 4l2 -4l2 7l2 1l2 -1l2 -14l2 12l2 0l2 -10l2 0l2 9l2 -1l2 -2l2 5l2 -10l2 3l2 -11l2 11l2 -5l2 0l2 -5l2 -3l2 -16l2 14l2 -6l2 -4l2 -2l2 -11l2 -16l2 14l2 -11l2 -1l2 -2l2 6l2 2l2 -4l2 -9l2 3l2 -4l2 -2l2 7l2 4l2 -4l2 12l2 1l2 -10l2 6l2 2l2 -9l2 -18l2 -6l2 1l2 7l2 4l2 5l2 -11l2 -2l2 -9l2 -3l2 -4l2 14l2 16l2 9l2 -6l2 -6l2 7l2 1l2 9l2 12l2 8l2 -20l2 -2l2 0l2 -1l2 7l2 -24l2 11l2 9l2 -9l2 2l2 -10l2 -11l2 -3l2 -10l2 3l2 1l2 6l2 0l2 -1l2 -17l2 -2l2 -7l2 -4l2 4l2 -5l2 10l2 -4l2 -22l2 -4l2 5l2 10l2 18l2 7l2 1l2 5l2 13l2 10l2 -20l2 -1l2 -9l2 -1l2 16l2 7l2 1l2 4l2 -14l2 11l2 14l2 -7l2 -6l2 4l2 -27l2 -1l2 9l2 18l2 -9l2 9l2 5l2 -4l2 -14l2 10l2 -8l2 0l2 0l2 1l2 -2l2 -4l2 2l2 2l2 2l2 16l2 -10l2 -6l2 5l2 5l2 8l2 -6l2 -5l2 7l2 -13l2 -11l2 -6l2 -1l2 10l2 1l2 -2l2 2l2 3l2 -3l2 -7l2 8l2 15l2 3l2 21l2 -15l2 -11l2 0l2 7l2 -5l2 1l2 -1l2 -6l2 0l2 -5l2 19l2 -2l2 -6l2 -16l2 7l2 7l2 -6l2 -16l2 10l2 3l2 5l2 4l2 -14l2 -6l2 15l2 8l2 -10l2 2l2 8l2 -13l2 18l2 -5l2 2l2 4l2 1l2 -2l2 0l2 -10l2 -3l2 9l2 -11l2 -9l2 3l2 12l2 -11l2 12l2 1l2 -6l2 4l2 -20l2 6l2 7l2 -11l2 9l2 6l2 13l2 -2l2 10l2 -6l2 -1l2 -2l2 -2l2 -17l2 14l2 12l2 1l2 -21l2 7l2 -15l2 -2l2 5l2 21l2 -4l2 -4l2 -1l2 -5l2 -5l2 1l2 -6M388 711l2 -4l2 -4l2 -7l2 7l2 2l2 -2l2 -3l2 -6l2 4l2 14l2 0l2 6l2 -2l2 5l2 -8l2 -7l2 0l2 2l2 0l2 3l2 -4l2 0l2 7l2 -3l2 -7l2 7l2 -12l2 -2l2 9l2 -3l2 5l2 2l2 0l2 -1l2 0l2 4l2 -6l2 1l2 -3l2 -2l2 -3l2 -3l2 -1l2 11l2 5l2 -10l2 1l2 10l2 -10l2 5l2 -3l2 5l2 -10l2 -3l2 0l2 11l2 8l2 -8l2 -1l2 6l2 -12l2 -1l2 13l2 -9l2 3l2 -3l2 6l2 -4l2 -1l2 18l2 -13l2 3l2 0l2 -2l2 -3l2 -4l2 -4l2 2l2 3l2 -1l2 -11l2 -1l2 2l2 9l2 0l2 6l2 -3l2 5l2 -4l2 -2l2 0l2 -4l2 2l2 -10l2 -1l2 9l2 0l2 0l2 -16l2 13l2 10l2 9l2 -9l2 -1l2 -12l2 3l2 9l2 12l2 -4l2 0l2 0l2 -13l2 0l2 2l2 -7l2 2l2 16l2 -4l2 5l2 0l2 11l2 -4l2 -12l2 5l2 12l2 2l2 -2l2 3l2 13l2 -15l2 -1l2 7l2 11l2 2l2 6l2 6l2 -3l2 2l2 1l2 5l2 0l2 0l2 -9l2 6l2 -4l2 -4l2 -14l2 6l2 3l2 -4l2 -3l2 -13l2 5l2 -7l2 -11l2 5l2 3l2 -13l2 16l2 -14l2 -7l2 12l2 -13l2 14l2 -2l2 -3l2 -1l2 -6l2 -13l2 -2l2 6l2 1l2 -10l2 0l2 12l2 -3l2 -10l2 -17l2 10l2 12l2 5l2 -4l2 -1l2 0l2 -13l2 14l2 -5l2 9l2 7l2 7l2 -3l2 -2l2 -9l2 11l2 -10l2 9l2 -3l2 5l2 2l2 3l2 1l2 -10l2 2l2 -2l2 -16l2 6l2 -2l2 -3l2 5l2 17l2 -6l2 1l2 -7l2 -8l2 -13l2 8l2 11l2 1l2 9l2 -23l2 -4l2 0l2 11l2 -7l2 -10l2 5l2 -3l2 7l2 6l2 10l2 9l2 -8l2 16l2 -6l2 1l2 0l2 4l2 -14l2 12l2 -23l2 17l2 -14l2 6l2 -7l2 -5l2 3l2 4l2 12l2 -6l2 3l2 -10l2 29l2 -13l2 -1l2 -5l2 -16l2 -5l2 32l2 -2l2 -2l2 -1l2 7l2 -2l2 4l2 -3l2 -1l2 -1l2 13l2 3l2 -8l2 -4l2 -12l2 12l2 -7l2 -1l2 -8l2 15l2 -6l2 -14l2 -2l2 12l2 12l2 -8l2 8l2 -11l2 5l2 5l2 -10l2 -2l2 -2l2 -10l2 -10l2 19l2 6l2 -3l2 3l2 -4l2 -4l2 5l2 1l2 -9l2 8l2 -4l2 -8l2 9l2 -3l2 5l2 3l2 -21l2 21l2 -6l2 0l2 8l2 13l2 4l2 -3l2 -12l2 -12l2 1l2 2l2 1l2 1l2 -1l2 9l2 4l2 3l2 4l2 -11l2 -4l2 -6l2 -3l2 -2l2 2l2 2l2 12l2 -5l2 -5l2 2l2 19l2 -5l2 -7l2 5l2 7l2 -8l2 4l2 -7l2 -6l2 1l2 -3l2 5l2 7l2 3l2 -21l2 -15l2 12l2 3l2 -13l2 3l2 -10l2 19l2 10l2 2l2 -1l2 -17l2 26l2 -2l2 -10l2 -4l2 -2l2 13l2 5l2 -11l2 -11l2 -4l2 -9l2 1l2 -1l2 5l2 11M388 702l2 9l2 -11l2 8l2 6l2 0l2 6l2 -3l2 -2l2 -3l2 -6l2 -2l2 -1l2 6l2 -12l2 3l2 -6l2 0l2 10l2 -6l2 7l2 3l2 -4l2 4l2 -3l2 2l2 0l2 -1l2 -1l2 -6l2 0l2 -5l2 2l2 5l2 2l2 -3l2 -3l2 1l2 -3l2 -6l2 -1l2 6l2 1l2 0l2 -2l2 4l2 2l2 7l2 -6l2 -2l2 5l2 5l2 -3l2 -2l2 5l2 1l2 -2l2 2l2 -5l2 -2l2 -1l2 -2l2 4l2 2l2 -1l2 -11l2 8l2 -4l2 -1l2 -1l2 -4l2 4l2 -5l2 6l2 9l2 1l2 0l2 -9l2 13l2 -7l2 -4l2 8l2 -3l2 5l2 -1l2 5l2 -8l2 4l2 -8l2 -3l2 9l2 -2l2 2l2 -2l2 0l2 -6l2 12l2 -11l2 -9l2 -3l2 11l2 3l2 4l2 2l2 4l2 0l2 0l2 1l2 5l2 5l2 -1l2 -7l2 4l2 -3l2 7l2 6l2 -14l2 6l2 11l2 7l2 -13l2 0l2 -13l2 1l2 5l2 0l2 8l2 -3l2 11l2 1l2 5l2 -4l2 -2l2 4l2 12l2 11l2 -5l2 -12l2 7l2 3l2 -1l2 -8l2 -2l2 17l2 15l2 -14l2 -9l2 4l2 1l2 -3l2 -3l2 0l2 9l2 3l2 -5l2 -8l2 1l2 -4l2 -5l2 -13l2 4l2 15l2 -4l2 -4l2 6l2 0l2 -5l2 6l2 -20l2 10l2 -20l2 3l2 -6l2 1l2 8l2 -8l2 -3l2 -14l2 -8l2 15l2 8l2 -14l2 4l2 -7l2 1l2 -5l2 1l2 7l2 -1l2 0l2 -4l2 4l2 0l2 -8l2 8l2 8l2 -4l2 7l2 -9l2 -3l2 -7l2 -11l2 -6l2 -1l2 0l2 2l2 1l2 -3l2 11l2 19l2 -8l2 -1l2 18l2 12l2 -17l2 -13l2 10l2 -15l2 8l2 18l2 6l2 -4l2 -6l2 3l2 2l2 1l2 -16l2 -8l2 26l2 -1l2 -1l2 -12l2 2l2 17l2 -11l2 -3l2 -10l2 3l2 -3l2 7l2 -10l2 -10l2 -8l2 16l2 6l2 11l2 0l2 -9l2 12l2 -13l2 0l2 5l2 1l2 2l2 -4l2 -5l2 11l2 -11l2 7l2 19l2 -4l2 -11l2 -3l2 11l2 6l2 -5l2 -6l2 -4l2 0l2 7l2 9l2 -8l2 6l2 -1l2 -3l2 -2l2 0l2 -2l2 -2l2 -17l2 -6l2 19l2 6l2 16l2 -10l2 7l2 -18l2 -5l2 7l2 -5l2 9l2 -3l2 -6l2 7l2 -5l2 -6l2 18l2 -17l2 9l2 -8l2 25l2 1l2 -18l2 -3l2 -9l2 -2l2 13l2 3l2 -11l2 1l2 -5l2 16l2 -7l2 -3l2 -17l2 25l2 -16l2 0l2 13l2 -13l2 -7l2 14l2 -2l2 -5l2 6l2 7l2 9l2 7l2 -11l2 8l2 -20l2 7l2 -5l2 2l2 -2l2 -17l2 6l2 15l2 3l2 8l2 -3l2 -10l2 -3l2 -8l2 9l2 -17l2 15l2 -6l2 5l2 10l2 -6l2 21l2 -6l2 7l2 -7l2 -9l2 10l2 -7l2 -6l2 -3l2 6l2 -5l2 -2l2 -5l2 -8l2 15l2 0l2 -10l2 -16l2 -6l2 16l2 -5l2 2l2 -5l2 5l2 18l2 -17l2 -10l2 8l2 2M388 701l2 -1l2 -8l2 2l2 9l2 1l2 1l2 -4l2 -3l2 1l2 2l2 -10l2 4l2 -6l2 7l2 7l2 -7l2 14l2 3l2 -15l2 -2l2 -1l2 0l2 0l2 -2l2 6l2 0l2 5l2 -1l2 -2l2 3l2 -3l2 3l2 7l2 1l2 3l2 -1l2 -3l2 -12l2 0l2 4l2 8l2 3l2 -4l2 -4l2 -5l2 0l2 5l2 2l2 -6l2 8l2 -9l2 3l2 1l2 -6l2 4l2 1l2 -7l2 -3l2 8l2 0l2 3l2 -5l2 1l2 3l2 2l2 -8l2 0l2 -2l2 -4l2 -11l2 -3l2 5l2 10l2 -2l2 -6l2 -3l2 2l2 -1l2 4l2 5l2 8l2 -6l2 -3l2 6l2 3l2 -10l2 -5l2 7l2 20l2 2l2 -5l2 -12l2 -6l2 1l2 -3l2 2l2 6l2 11l2 -2l2 1l2 -7l2 3l2 3l2 3l2 7l2 -5l2 -4l2 1l2 3l2 -5l2 -8l2 3l2 -2l2 -7l2 4l2 0l2 -3l2 -6l2 -15l2 19l2 -3l2 0l2 -9l2 -1l2 12l2 1l2 -3l2 -1l2 -6l2 2l2 5l2 8l2 -1l2 -2l2 11l2 1l2 -7l2 14l2 -23l2 -4l2 8l2 10l2 -13l2 -10l2 5l2 -2l2 -1l2 9l2 -4l2 1l2 -5l2 8l2 -5l2 -5l2 -8l2 3l2 7l2 4l2 3l2 -7l2 0l2 -9l2 5l2 15l2 -10l2 2l2 -1l2 8l2 -10l2 2l2 -14l2 5l2 2l2 14l2 -4l2 2l2 2l2 -14l2 11l2 -2l2 -1l2 -1l2 9l2 8l2 -12l2 -1l2 10l2 -4l2 1l2 6l2 -4l2 3l2 -10l2 -6l2 -18l2 9l2 1l2 -4l2 5l2 -2l2 8l2 -17l2 14l2 10l2 -3l2 1l2 19l2 -10l2 -9l2 -17l2 3l2 7l2 2l2 -6l2 0l2 18l2 -11l2 -1l2 0l2 16l2 -13l2 -1l2 -6l2 -12l2 4l2 -6l2 7l2 4l2 -12l2 -13l2 12l2 11l2 1l2 18l2 -6l2 1l2 13l2 -11l2 7l2 -2l2 -6l2 2l2 -6l2 -2l2 -3l2 8l2 1l2 18l2 -6l2 10l2 4l2 -13l2 3l2 8l2 -9l2 -12l2 4l2 2l2 -13l2 -11l2 -4l2 1l2 3l2 15l2 -5l2 2l2 6l2 2l2 2l2 -4l2 7l2 -14l2 5l2 -4l2 -14l2 10l2 5l2 6l2 13l2 -2l2 -6l2 -5l2 -5l2 3l2 -7l2 8l2 -5l2 8l2 -4l2 8l2 8l2 8l2 4l2 -5l2 -5l2 -5l2 -2l2 20l2 9l2 -20l2 13l2 -3l2 -9l2 2l2 -12l2 -11l2 -7l2 7l2 -1l2 3l2 -2l2 14l2 1l2 2l2 17l2 0l2 -10l2 3l2 -3l2 4l2 3l2 1l2 -7l2 6l2 7l2 -7l2 -5l2 -7l2 22l2 -6l2 -6l2 -6l2 -9l2 7l2 -20l2 11l2 -8l2 8l2 10l2 -11l2 -12l2 5l2 11l2 -25l2 6l2 5l2 14l2 -6l2 -4l2 11l2 -12l2 -3l2 -4l2 -10l2 32l2 -8l2 17l2 -1l2 -8l2 1l2 4l2 -2l2 -8l2 -9l2 7l2 -4l2 5l2 3l2 -15l2 -3l2 -2l2 5l2 4l2 8l2 6l2 -5l2 -10l2 -6l2 11M388 697l2 4l2 -2l2 -5l2 10l2 -5l2 1l2 1l2 -14l2 9l2 5l2 5l2 -5l2 -9l2 9l2 -10l2 2l2 7l2 5l2 7l2 -1l2 -1l2 -4l2 3l2 -5l2 -9l2 11l2 -12l2 1l2 6l2 3l2 5l2 -5l2 -5l2 5l2 2l2 -12l2 3l2 13l2 -2l2 6l2 -9l2 -1l2 -3l2 8l2 -2l2 -12l2 5l2 10l2 -3l2 2l2 -2l2 10l2 -7l2 4l2 -3l2 -10l2 4l2 0l2 3l2 -6l2 -6l2 3l2 4l2 -5l2 11l2 -1l2 -2l2 3l2 0l2 -11l2 -7l2 -3l2 9l2 7l2 7l2 -10l2 -4l2 -3l2 5l2 -4l2 -7l2 2l2 -1l2 13l2 8l2 -7l2 2l2 -3l2 -4l2 -7l2 0l2 6l2 1l2 1l2 -8l2 -4l2 2l2 -2l2 0l2 -8l2 12l2 -2l2 7l2 6l2 -8l2 3l2 -6l2 -9l2 1l2 -5l2 1l2 -6l2 -1l2 -2l2 5l2 -6l2 4l2 -6l2 -11l2 -5l2 -8l2 21l2 -6l2 -3l2 -8l2 1l2 3l2 -11l2 2l2 -5l2 -18l2 -1l2 3l2 5l2 -2l2 4l2 12l2 0l2 -1l2 -2l2 6l2 1l2 -9l2 16l2 -4l2 -12l2 -2l2 -4l2 26l2 -1l2 -2l2 -4l2 4l2 -5l2 2l2 3l2 9l2 3l2 1l2 -13l2 0l2 14l2 -11l2 17l2 5l2 -7l2 6l2 8l2 -6l2 11l2 0l2 -4l2 0l2 -17l2 -4l2 15l2 -1l2 17l2 2l2 -3l2 3l2 -8l2 11l2 -8l2 0l2 15l2 -5l2 -7l2 -5l2 -8l2 -2l2 6l2 12l2 -10l2 -8l2 13l2 5l2 -5l2 -2l2 -3l2 7l2 -1l2 0l2 8l2 -6l2 8l2 -17l2 5l2 -6l2 12l2 0l2 -3l2 -12l2 0l2 11l2 0l2 -12l2 -8l2 12l2 3l2 26l2 2l2 -7l2 12l2 9l2 -6l2 2l2 -5l2 5l2 -1l2 -5l2 3l2 -15l2 3l2 -4l2 5l2 -3l2 0l2 -7l2 -12l2 -12l2 11l2 -10l2 12l2 -9l2 1l2 7l2 -9l2 1l2 4l2 -2l2 0l2 -8l2 -2l2 4l2 -2l2 7l2 23l2 8l2 -3l2 5l2 -9l2 -5l2 -13l2 8l2 -10l2 7l2 -31l2 28l2 -16l2 10l2 4l2 2l2 -2l2 1l2 15l2 -4l2 3l2 -4l2 -1l2 -3l2 -8l2 10l2 10l2 -6l2 -10l2 6l2 2l2 -15l2 6l2 8l2 -4l2 8l2 -12l2 6l2 3l2 5l2 -5l2 -6l2 5l2 -1l2 11l2 -14l2 3l2 -5l2 7l2 7l2 -5l2 -12l2 4l2 5l2 -1l2 16l2 -17l2 0l2 -9l2 1l2 -1l2 -7l2 -3l2 10l2 4l2 -9l2 3l2 11l2 -4l2 7l2 -12l2 14l2 -4l2 -12l2 -2l2 3l2 5l2 2l2 9l2 5l2 -7l2 -20l2 -7l2 14l2 -3l2 6l2 4l2 10l2 -8l2 -9l2 17l2 -36l2 7l2 11l2 10l2 3l2 -20l2 8l2 -4l2 2l2 -5l2 13l2 1l2 -1l2 -3l2 -8l2 -4l2 1l2 15l2 0l2 22l2 -4l2 -4l2 -10l2 -6l2 -2l2 -5l2 -4l2 -15l2 -2l2 0l2 22M388 707l2 -8l2 -1l2 13l2 -6l2 -4l2 1l2 -1l2 -7l2 7l2 -3l2 2l2 -4l2 10l2 7l2 1l2 -5l2 0l2 -5l2 3l2 -4l2 7l2 -1l2 -2l2 -8l2 14l2 -11l2 9l2 -7l2 -3l2 7l2 0l2 -2l2 1l2 0l2 0l2 -1l2 4l2 2l2 -6l2 -3l2 -4l2 9l2 -1l2 -9l2 4l2 -8l2 2l2 -1l2 -5l2 0l2 3l2 3l2 -5l2 2l2 0l2 3l2 3l2 7l2 1l2 -1l2 -4l2 5l2 -2l2 1l2 8l2 1l2 -2l2 -4l2 -5l2 6l2 2l2 -5l2 -16l2 -4l2 5l2 -4l2 7l2 1l2 -1l2 11l2 8l2 -3l2 -6l2 3l2 2l2 -5l2 6l2 -1l2 -11l2 1l2 1l2 -7l2 3l2 3l2 1l2 6l2 9l2 -1l2 2l2 9l2 -9l2 1l2 -6l2 -8l2 8l2 -9l2 6l2 -3l2 -7l2 6l2 1l2 6l2 0l2 -4l2 -2l2 -2l2 2l2 14l2 -16l2 -3l2 -13l2 -5l2 18l2 2l2 1l2 -5l2 -16l2 12l2 0l2 3l2 -2l2 12l2 -5l2 -4l2 -7l2 -1l2 -7l2 3l2 1l2 8l2 0l2 0l2 4l2 -5l2 -4l2 -4l2 -7l2 10l2 -6l2 2l2 2l2 -11l2 1l2 0l2 14l2 -3l2 -2l2 -7l2 0l2 8l2 2l2 -1l2 -3l2 -11l2 9l2 2l2 -7l2 14l2 -12l2 6l2 4l2 15l2 1l2 -8l2 -2l2 2l2 11l2 0l2 7l2 -9l2 -10l2 -1l2 14l2 2l2 -9l2 5l2 8l2 -10l2 -6l2 11l2 -8l2 -6l2 -11l2 5l2 -3l2 4l2 6l2 -3l2 -8l2 0l2 -8l2 16l2 5l2 9l2 1l2 -27l2 -10l2 18l2 -4l2 10l2 -2l2 -6l2 -13l2 4l2 2l2 -14l2 12l2 -18l2 5l2 -12l2 -11l2 -12l2 21l2 -5l2 -7l2 -9l2 10l2 -3l2 8l2 10l2 14l2 11l2 -3l2 10l2 -21l2 9l2 9l2 -10l2 -7l2 9l2 13l2 -5l2 4l2 22l2 0l2 0l2 -7l2 0l2 0l2 3l2 -16l2 16l2 -6l2 -14l2 -9l2 13l2 -9l2 -9l2 13l2 10l2 5l2 6l2 0l2 -1l2 -7l2 -7l2 -8l2 7l2 0l2 -3l2 1l2 -9l2 -1l2 -1l2 -5l2 7l2 14l2 9l2 -18l2 -5l2 1l2 2l2 -1l2 5l2 -2l2 -13l2 16l2 -6l2 -6l2 14l2 2l2 5l2 -1l2 -18l2 18l2 10l2 -5l2 18l2 6l2 -2l2 0l2 -1l2 -11l2 2l2 -13l2 -3l2 4l2 21l2 -15l2 4l2 -2l2 -4l2 -2l2 -2l2 0l2 -9l2 1l2 22l2 -9l2 -2l2 1l2 3l2 9l2 4l2 -6l2 3l2 5l2 -11l2 12l2 -6l2 2l2 -8l2 -13l2 4l2 -7l2 15l2 11l2 -8l2 6l2 6l2 -8l2 17l2 -8l2 4l2 -3l2 -10l2 -16l2 6l2 -7l2 16l2 -3l2 11l2 8l2 -24l2 15l2 -6l2 1l2 5l2 -7l2 -4l2 12l2 -2l2 -9l2 -14l2 -7l2 8l2 15l2 -4l2 5l2 -10l2 9l2 -10l2 -6l2 -5l2 2l2 -9l2 15l2 17l2 15M388 705l2 -5l2 -2l2 14l2 -7l2 -2l2 1l2 7l2 10l2 -18l2 -4l2 -12l2 4l2 0l2 2l2 0l2 -4l2 3l2 2l2 -4l2 6l2 1l2 3l2 -5l2 -5l2 0l2 2l2 1l2 1l2 1l2 10l2 -6l2 3l2 -10l2 6l2 0l2 0l2 1l2 1l2 -1l2 -3l2 5l2 5l2 2l2 -7l2 -11l2 4l2 -1l2 0l2 10l2 1l2 4l2 -4l2 -2l2 1l2 3l2 -4l2 -2l2 -6l2 -1l2 9l2 -5l2 -5l2 13l2 -1l2 -5l2 4l2 -6l2 -5l2 11l2 -5l2 15l2 0l2 -3l2 8l2 -14l2 -3l2 0l2 -3l2 -4l2 8l2 -9l2 0l2 3l2 -2l2 2l2 -3l2 -5l2 7l2 17l2 -2l2 -8l2 -5l2 8l2 1l2 -11l2 -9l2 12l2 0l2 5l2 1l2 4l2 0l2 4l2 -1l2 2l2 -6l2 1l2 0l2 12l2 -7l2 0l2 -7l2 -6l2 -1l2 0l2 0l2 -3l2 7l2 0l2 12l2 -3l2 -7l2 2l2 5l2 -3l2 -4l2 4l2 16l2 -3l2 2l2 3l2 -5l2 3l2 -8l2 11l2 2l2 17l2 -19l2 10l2 -13l2 -4l2 17l2 9l2 2l2 2l2 -4l2 -1l2 9l2 -4l2 7l2 -8l2 -3l2 -3l2 14l2 -2l2 -3l2 -7l2 -9l2 4l2 3l2 -15l2 -3l2 1l2 0l2 2l2 -2l2 -12l2 -13l2 0l2 15l2 8l2 -16l2 9l2 -2l2 0l2 4l2 6l2 -12l2 -9l2 -3l2 -19l2 2l2 6l2 -12l2 10l2 -21l2 9l2 4l2 -9l2 15l2 -10l2 16l2 1l2 15l2 -17l2 -16l2 17l2 5l2 6l2 -6l2 -1l2 -2l2 8l2 -7l2 -15l2 11l2 2l2 -12l2 -5l2 14l2 2l2 -8l2 4l2 4l2 1l2 -10l2 16l2 9l2 -11l2 4l2 -9l2 3l2 0l2 16l2 0l2 -9l2 -11l2 1l2 -12l2 7l2 5l2 7l2 -7l2 15l2 -9l2 -14l2 -2l2 0l2 8l2 14l2 -19l2 10l2 5l2 14l2 -24l2 16l2 -8l2 4l2 3l2 10l2 1l2 -18l2 2l2 1l2 18l2 1l2 -7l2 -8l2 -18l2 -7l2 14l2 3l2 -1l2 -5l2 7l2 6l2 4l2 -4l2 -6l2 0l2 11l2 3l2 3l2 -14l2 -8l2 1l2 -1l2 -4l2 15l2 -17l2 1l2 -3l2 0l2 -4l2 -1l2 6l2 13l2 3l2 -4l2 -15l2 3l2 -13l2 12l2 -2l2 -1l2 -3l2 11l2 -5l2 -3l2 -5l2 2l2 11l2 2l2 -12l2 5l2 -6l2 -2l2 8l2 11l2 -8l2 -3l2 0l2 11l2 15l2 19l2 -18l2 -8l2 -15l2 20l2 20l2 -9l2 -12l2 0l2 -6l2 -17l2 -1l2 4l2 16l2 11l2 -7l2 -7l2 16l2 0l2 -16l2 10l2 4l2 7l2 -2l2 -4l2 -6l2 -20l2 -4l2 -3l2 -1l2 -10l2 13l2 -8l2 1l2 11l2 7l2 2l2 -2l2 12l2 -5l2 6l2 -11l2 1l2 7l2 -10l2 -22l2 1l2 16l2 -5l2 8l2 -1l2 8l2 -8l2 10l2 7l2 -2l2 10l2 -11l2 1l2 -13l2 6l2 -9l2 -16l2 10l2 9M388 704l2 14l2 -6l2 -1l2 4l2 -5l2 -8l2 0l2 4l2 -3l2 2l2 -7l2 4l2 4l2 2l2 1l2 4l2 -7l2 -1l2 -5l2 7l2 0l2 0l2 -3l2 -1l2 -5l2 -2l2 4l2 4l2 -7l2 1l2 -1l2 4l2 11l2 -10l2 1l2 -2l2 -4l2 1l2 2l2 -5l2 11l2 -1l2 5l2 -8l2 6l2 4l2 -12l2 2l2 5l2 -4l2 2l2 8l2 -6l2 8l2 -6l2 0l2 -1l2 1l2 -1l2 -1l2 6l2 -2l2 -3l2 -2l2 -1l2 -3l2 3l2 -1l2 2l2 -4l2 0l2 -4l2 1l2 -4l2 -4l2 14l2 2l2 2l2 -5l2 -2l2 9l2 4l2 -8l2 0l2 3l2 0l2 -3l2 -2l2 -11l2 7l2 1l2 8l2 3l2 -7l2 -14l2 -6l2 9l2 11l2 4l2 1l2 0l2 1l2 0l2 0l2 -4l2 -8l2 17l2 -14l2 -10l2 1l2 4l2 -2l2 10l2 -6l2 -4l2 5l2 2l2 -5l2 -5l2 9l2 -2l2 -3l2 -10l2 6l2 -6l2 -2l2 4l2 5l2 -3l2 1l2 -1l2 -2l2 -5l2 -13l2 8l2 1l2 11l2 4l2 -15l2 -4l2 4l2 -5l2 4l2 4l2 -8l2 8l2 -3l2 12l2 -6l2 -5l2 -8l2 -17l2 7l2 5l2 -3l2 11l2 2l2 6l2 2l2 13l2 -9l2 -9l2 13l2 -1l2 0l2 -12l2 1l2 -3l2 -7l2 14l2 2l2 10l2 4l2 -3l2 -5l2 6l2 -8l2 2l2 -1l2 2l2 2l2 -10l2 17l2 -12l2 4l2 -8l2 2l2 -12l2 -5l2 3l2 11l2 -1l2 -7l2 0l2 24l2 -10l2 -3l2 21l2 -12l2 0l2 -9l2 -8l2 -4l2 7l2 26l2 -15l2 -7l2 -3l2 -5l2 -8l2 10l2 7l2 13l2 -10l2 -5l2 8l2 7l2 -11l2 13l2 7l2 -7l2 -17l2 15l2 -4l2 0l2 -18l2 16l2 1l2 7l2 8l2 -17l2 -11l2 -2l2 -6l2 3l2 15l2 14l2 -8l2 3l2 2l2 3l2 -4l2 -3l2 4l2 -17l2 14l2 7l2 -7l2 -5l2 -1l2 4l2 -7l2 3l2 -4l2 11l2 3l2 -8l2 -10l2 -8l2 7l2 -1l2 5l2 5l2 -5l2 -5l2 -12l2 4l2 -8l2 10l2 1l2 14l2 -9l2 7l2 -3l2 0l2 -12l2 3l2 -3l2 13l2 5l2 6l2 7l2 4l2 -1l2 -11l2 -7l2 1l2 19l2 -12l2 0l2 12l2 -10l2 -18l2 -8l2 14l2 -20l2 6l2 13l2 10l2 -13l2 1l2 6l2 -3l2 14l2 -7l2 1l2 -10l2 4l2 -10l2 19l2 8l2 -8l2 -3l2 3l2 -9l2 20l2 -23l2 0l2 -13l2 9l2 -5l2 14l2 -2l2 13l2 8l2 0l2 8l2 -9l2 -2l2 -8l2 8l2 -21l2 6l2 14l2 -1l2 -10l2 -1l2 7l2 -9l2 -24l2 26l2 -16l2 16l2 0l2 14l2 -5l2 1l2 21l2 -21l2 7l2 1l2 -4l2 -11l2 -2l2 9l2 -17l2 5l2 3l2 -17l2 12l2 -12l2 0l2 18l2 6l2 -14l2 -3l2 -3l2 2l2 15l2 -10l2 18l2 -21l2 -2l2 -7l2 -1l2 7l2 -12l2 7l2 10M388 706l2 0l2 2l2 -1l2 0l2 -8l2 14l2 4l2 5l2 -7l2 9l2 -12l2 2l2 1l2 0l2 -1l2 -3l2 14l2 -15l2 -6l2 4l2 0l2 1l2 0l2 -8l2 3l2 2l2 0l2 -8l2 -2l2 -7l2 8l2 -2l2 6l2 -3l2 3l2 -3l2 15l2 -6l2 -6l2 -1l2 -6l2 4l2 -2l2 7l2 5l2 -1l2 -4l2 3l2 -2l2 5l2 -2l2 -9l2 -8l2 0l2 8l2 5l2 -5l2 9l2 -4l2 -6l2 7l2 -3l2 1l2 7l2 0l2 5l2 -6l2 3l2 5l2 1l2 -1l2 3l2 0l2 -7l2 5l2 -5l2 3l2 0l2 -7l2 3l2 6l2 1l2 2l2 -5l2 -12l2 -2l2 -6l2 16l2 -1l2 -4l2 -4l2 8l2 -9l2 1l2 -5l2 -4l2 -4l2 13l2 3l2 -11l2 -1l2 5l2 7l2 2l2 4l2 -11l2 -5l2 0l2 4l2 9l2 0l2 -2l2 0l2 -4l2 9l2 -10l2 -5l2 4l2 2l2 1l2 1l2 -1l2 -11l2 3l2 13l2 -5l2 -5l2 -3l2 3l2 1l2 -4l2 8l2 2l2 -3l2 7l2 -14l2 8l2 0l2 -9l2 11l2 10l2 2l2 2l2 -12l2 1l2 -8l2 -2l2 2l2 -12l2 -3l2 -10l2 14l2 13l2 -5l2 2l2 9l2 -4l2 3l2 -4l2 5l2 -13l2 1l2 9l2 -14l2 6l2 5l2 4l2 -9l2 -6l2 2l2 8l2 5l2 6l2 -13l2 -3l2 3l2 3l2 -3l2 16l2 9l2 -13l2 -3l2 -18l2 1l2 21l2 7l2 -4l2 0l2 -1l2 -2l2 0l2 -10l2 21l2 -3l2 -5l2 -5l2 -1l2 2l2 -7l2 8l2 -2l2 -15l2 9l2 -10l2 9l2 -4l2 -3l2 20l2 -4l2 1l2 -11l2 4l2 0l2 1l2 -14l2 21l2 0l2 -1l2 2l2 -9l2 -9l2 -13l2 12l2 -1l2 11l2 -3l2 -5l2 -5l2 3l2 3l2 -14l2 20l2 5l2 -6l2 8l2 -10l2 -13l2 -2l2 3l2 5l2 -4l2 10l2 4l2 -4l2 -3l2 17l2 -1l2 -4l2 6l2 4l2 -8l2 -13l2 9l2 9l2 8l2 -1l2 20l2 10l2 -14l2 -6l2 -1l2 -6l2 5l2 5l2 -15l2 -11l2 -3l2 5l2 7l2 -6l2 11l2 -3l2 -8l2 16l2 -8l2 -6l2 3l2 1l2 8l2 -24l2 4l2 -14l2 3l2 2l2 -10l2 22l2 -1l2 9l2 2l2 -3l2 -2l2 -18l2 10l2 -1l2 -20l2 12l2 5l2 -6l2 -5l2 6l2 0l2 0l2 3l2 9l2 11l2 -5l2 21l2 -4l2 12l2 -24l2 -19l2 -6l2 -3l2 28l2 -1l2 6l2 -21l2 1l2 22l2 -12l2 -5l2 9l2 5l2 -14l2 3l2 -2l2 -1l2 -4l2 -3l2 -6l2 7l2 -4l2 15l2 -20l2 3l2 20l2 -15l2 3l2 -1l2 -8l2 -7l2 31l2 -16l2 17l2 15l2 -9l2 -2l2 -17l2 13l2 6l2 -11l2 1l2 -18l2 5l2 -2l2 -18l2 1l2 11l2 6l2 12l2 4l2 -16l2 7l2 13l2 -19l2 1l2 -6l2 -17l2 5l2 14l2 -10l2 -4l2 2l2 10l2 2l2 -8l2 -4l2 3l2 2M388 696l2 2l2 2l2 -4l2 10l2 -3l2 -6l2 -3l2 0l2 0l2 -8l2 -1l2 13l2 2l2 -7l2 3l2 2l2 -2l2 -3l2 5l2 -5l2 -1l2 1l2 9l2 -9l2 -7l2 1l2 3l2 9l2 2l2 -2l2 3l2 11l2 -5l2 -6l2 1l2 -4l2 1l2 3l2 1l2 2l2 -11l2 9l2 -7l2 0l2 11l2 -4l2 11l2 -4l2 -2l2 -4l2 7l2 6l2 -16l2 -3l2 -7l2 -1l2 4l2 0l2 -9l2 3l2 9l2 4l2 6l2 -10l2 -6l2 6l2 4l2 7l2 -4l2 -2l2 5l2 -2l2 -5l2 -4l2 -3l2 1l2 7l2 -8l2 2l2 3l2 2l2 -7l2 3l2 1l2 8l2 -8l2 -3l2 -4l2 4l2 2l2 1l2 -3l2 7l2 7l2 3l2 -3l2 2l2 3l2 -6l2 -1l2 -6l2 -9l2 -4l2 3l2 3l2 -10l2 10l2 2l2 4l2 9l2 -8l2 -11l2 2l2 -1l2 7l2 -5l2 -6l2 3l2 2l2 -1l2 0l2 6l2 -6l2 -2l2 3l2 -9l2 -4l2 3l2 6l2 6l2 1l2 -6l2 -1l2 -2l2 -2l2 -5l2 -4l2 -6l2 10l2 -8l2 6l2 -3l2 -1l2 -2l2 4l2 -2l2 6l2 1l2 17l2 -7l2 -4l2 -4l2 -3l2 -3l2 11l2 16l2 4l2 1l2 -3l2 1l2 -1l2 -3l2 -13l2 3l2 3l2 0l2 2l2 0l2 1l2 10l2 -12l2 5l2 0l2 -12l2 14l2 -6l2 13l2 1l2 4l2 4l2 -11l2 -11l2 7l2 -15l2 9l2 16l2 0l2 -6l2 -4l2 -2l2 7l2 -5l2 -14l2 4l2 2l2 4l2 7l2 -10l2 11l2 -3l2 3l2 -29l2 7l2 -5l2 -7l2 21l2 4l2 -4l2 -12l2 0l2 -12l2 1l2 2l2 10l2 4l2 8l2 -14l2 -21l2 6l2 7l2 -5l2 -16l2 1l2 7l2 15l2 6l2 1l2 -2l2 -13l2 -6l2 5l2 15l2 7l2 6l2 16l2 -1l2 -8l2 -2l2 0l2 18l2 -1l2 -10l2 0l2 9l2 -13l2 9l2 -6l2 -24l2 2l2 6l2 -13l2 -12l2 21l2 17l2 6l2 -5l2 -9l2 -3l2 0l2 -1l2 -4l2 17l2 -18l2 12l2 -13l2 1l2 6l2 0l2 -10l2 -11l2 15l2 -10l2 14l2 3l2 -3l2 2l2 -21l2 -6l2 18l2 3l2 -1l2 2l2 -10l2 2l2 28l2 2l2 -4l2 -4l2 -5l2 5l2 0l2 -13l2 14l2 -8l2 -5l2 1l2 11l2 8l2 -2l2 11l2 -13l2 -2l2 -13l2 1l2 3l2 10l2 -4l2 16l2 0l2 -10l2 1l2 6l2 -2l2 -5l2 -11l2 9l2 11l2 -13l2 7l2 -4l2 -1l2 -6l2 3l2 -8l2 -15l2 20l2 3l2 10l2 -11l2 5l2 -5l2 5l2 1l2 -7l2 -1l2 4l2 -2l2 6l2 -3l2 -10l2 -8l2 15l2 10l2 -3l2 1l2 6l2 -13l2 4l2 -2l2 -7l2 1l2 8l2 -2l2 -11l2 -2l2 6l2 -2l2 12l2 -2l2 -22l2 7l2 -6l2 -8l2 11l2 21l2 6l2 7l2 -13l2 3l2 -4l2 -14l2 2l2 -1l2 13l2 -8l2 5l2 -19l2 18l2 -12M388 705l2 3l2 1l2 -5l2 -5l2 4l2 0l2 4l2 -8l2 10l2 -2l2 -7l2 4l2 -7l2 -5l2 6l2 -2l2 -5l2 1l2 -1l2 -1l2 5l2 7l2 13l2 -14l2 9l2 -4l2 2l2 -3l2 -4l2 0l2 1l2 -10l2 6l2 7l2 -1l2 7l2 -6l2 0l2 -10l2 7l2 6l2 -17l2 10l2 12l2 4l2 -11l2 0l2 3l2 3l2 -2l2 9l2 -9l2 -3l2 3l2 0l2 7l2 -4l2 -1l2 -6l2 -3l2 6l2 -5l2 12l2 -10l2 -3l2 0l2 14l2 8l2 -21l2 8l2 -5l2 4l2 3l2 10l2 -7l2 -7l2 -5l2 0l2 -2l2 -1l2 0l2 8l2 6l2 -3l2 2l2 0l2 -5l2 6l2 -8l2 8l2 -11l2 3l2 -1l2 -2l2 4l2 -9l2 -2l2 1l2 2l2 -5l2 -6l2 1l2 2l2 -3l2 7l2 6l2 -6l2 -4l2 -8l2 10l2 1l2 -2l2 5l2 8l2 -6l2 5l2 -6l2 2l2 -9l2 -1l2 3l2 -1l2 2l2 5l2 0l2 -14l2 15l2 -9l2 7l2 -8l2 -14l2 -5l2 -2l2 8l2 6l2 -7l2 10l2 1l2 0l2 14l2 -7l2 -5l2 -9l2 12l2 -4l2 10l2 0l2 6l2 -10l2 6l2 -4l2 3l2 -8l2 3l2 -1l2 -6l2 -1l2 -2l2 8l2 10l2 -11l2 -6l2 -9l2 -1l2 6l2 18l2 -9l2 -1l2 1l2 -18l2 21l2 7l2 5l2 2l2 -2l2 13l2 -18l2 -2l2 -1l2 11l2 -15l2 -3l2 2l2 -8l2 5l2 -6l2 -5l2 1l2 18l2 -10l2 21l2 -19l2 -5l2 -7l2 11l2 13l2 3l2 -19l2 -11l2 -10l2 11l2 12l2 11l2 -21l2 1l2 -1l2 -11l2 1l2 19l2 13l2 -11l2 20l2 14l2 -8l2 -4l2 -2l2 -8l2 -6l2 0l2 16l2 -15l2 6l2 -10l2 18l2 -13l2 9l2 6l2 12l2 -21l2 -4l2 3l2 -4l2 4l2 -1l2 9l2 8l2 -13l2 -4l2 -5l2 -13l2 0l2 -12l2 9l2 -3l2 9l2 -5l2 10l2 -1l2 -12l2 1l2 -6l2 16l2 -14l2 15l2 6l2 -6l2 -10l2 -7l2 2l2 19l2 13l2 2l2 -8l2 3l2 -16l2 -5l2 21l2 5l2 -5l2 6l2 -11l2 -6l2 5l2 -3l2 14l2 -27l2 -4l2 6l2 -7l2 -22l2 -1l2 20l2 1l2 -7l2 -3l2 -2l2 -2l2 5l2 -1l2 23l2 -8l2 9l2 8l2 -4l2 1l2 18l2 4l2 -17l2 10l2 -29l2 6l2 4l2 9l2 10l2 1l2 -12l2 -1l2 -2l2 -13l2 23l2 -22l2 11l2 6l2 -7l2 -13l2 4l2 20l2 -1l2 -5l2 -13l2 -7l2 -17l2 11l2 -10l2 4l2 2l2 4l2 2l2 7l2 -7l2 9l2 1l2 -9l2 15l2 11l2 10l2 0l2 11l2 -22l2 0l2 -10l2 3l2 -2l2 6l2 2l2 -6l2 -1l2 4l2 9l2 -3l2 2l2 -18l2 -5l2 5l2 -2l2 16l2 1l2 -1l2 -24l2 8l2 14l2 -7l2 -20l2 -7l2 21l2 -10l2 16l2 -9l2 -2l2 -4l2 16l2 2l2 -15l2 -7l2 -4l2 -14l2 19l2 24l2 0M388 688l2 8l2 13l2 -12l2 3l2 -8l2 -6l2 4l2 0l2 7l2 -9l2 14l2 12l2 4l2 -5l2 -3l2 3l2 -7l2 -4l2 4l2 -6l2 -4l2 3l2 0l2 7l2 -6l2 2l2 5l2 10l2 -9l2 -3l2 4l2 -8l2 5l2 18l2 -5l2 -9l2 -3l2 11l2 -10l2 8l2 -6l2 -9l2 -12l2 9l2 -4l2 9l2 -1l2 -9l2 2l2 2l2 7l2 1l2 -1l2 -4l2 2l2 -6l2 3l2 -5l2 4l2 11l2 -7l2 3l2 -7l2 0l2 2l2 -2l2 -4l2 3l2 1l2 -8l2 9l2 5l2 -3l2 -3l2 3l2 3l2 -13l2 3l2 -5l2 4l2 5l2 -2l2 4l2 0l2 -5l2 7l2 6l2 -2l2 1l2 1l2 -13l2 1l2 6l2 -2l2 -5l2 6l2 -2l2 7l2 -2l2 16l2 -1l2 -3l2 6l2 -3l2 -4l2 1l2 -9l2 3l2 0l2 -3l2 -3l2 8l2 0l2 4l2 2l2 -10l2 -15l2 6l2 -7l2 -3l2 15l2 -8l2 -7l2 7l2 10l2 -7l2 -8l2 5l2 6l2 -7l2 -6l2 -5l2 9l2 8l2 -24l2 -1l2 7l2 -11l2 16l2 -8l2 4l2 -8l2 4l2 1l2 7l2 7l2 4l2 -5l2 -1l2 -6l2 -24l2 16l2 -12l2 2l2 14l2 1l2 -7l2 6l2 -12l2 9l2 0l2 4l2 16l2 4l2 -11l2 -1l2 -1l2 -9l2 14l2 2l2 -11l2 8l2 -7l2 3l2 12l2 -19l2 5l2 -9l2 8l2 3l2 3l2 -16l2 -2l2 -3l2 -1l2 12l2 -2l2 -4l2 6l2 -3l2 4l2 4l2 7l2 -2l2 -10l2 3l2 -4l2 -2l2 23l2 11l2 -1l2 -5l2 0l2 9l2 -2l2 -21l2 -14l2 9l2 -22l2 10l2 7l2 -4l2 14l2 -19l2 4l2 -19l2 0l2 10l2 1l2 -5l2 -4l2 -3l2 -4l2 17l2 2l2 8l2 -1l2 -6l2 8l2 -1l2 12l2 2l2 -8l2 4l2 2l2 2l2 -9l2 4l2 4l2 15l2 -5l2 -20l2 0l2 -9l2 5l2 -10l2 3l2 5l2 -6l2 17l2 -6l2 1l2 12l2 -4l2 12l2 -13l2 -5l2 -2l2 7l2 -15l2 -15l2 19l2 4l2 7l2 7l2 3l2 -1l2 -3l2 11l2 -11l2 9l2 -11l2 -28l2 23l2 18l2 0l2 -2l2 10l2 -2l2 7l2 -21l2 -10l2 6l2 -1l2 14l2 10l2 -5l2 -1l2 -9l2 2l2 -11l2 9l2 -14l2 -2l2 13l2 -9l2 -9l2 -1l2 -4l2 -1l2 21l2 11l2 -12l2 8l2 -20l2 27l2 -4l2 -15l2 -6l2 20l2 -18l2 -8l2 2l2 13l2 10l2 -7l2 -3l2 -1l2 -8l2 1l2 5l2 1l2 9l2 -17l2 -10l2 1l2 13l2 8l2 -9l2 13l2 -7l2 -4l2 -10l2 4l2 -1l2 9l2 19l2 1l2 -7l2 -16l2 4l2 -5l2 3l2 1l2 -11l2 10l2 -1l2 8l2 4l2 -1l2 3l2 -2l2 7l2 -6l2 -4l2 2l2 -9l2 -6l2 17l2 -29l2 16l2 -2l2 -10l2 -3l2 5l2 -4l2 -1l2 6l2 9l2 -10l2 -2l2 4l2 10l2 9l2 -14l2 11l2 -7l2 -14l2 12M388 699l2 -2l2 13l2 -7l2 -8l2 11l2 -8l2 2l2 5l2 -9l2 0l2 -2l2 7l2 7l2 -8l2 7l2 -11l2 11l2 -2l2 -3l2 -1l2 1l2 2l2 -6l2 -4l2 -3l2 -4l2 0l2 14l2 2l2 -10l2 -1l2 -1l2 -7l2 10l2 3l2 -1l2 -1l2 -1l2 2l2 1l2 4l2 0l2 -3l2 -2l2 -2l2 -4l2 4l2 -1l2 -9l2 8l2 -1l2 1l2 -6l2 11l2 4l2 -4l2 6l2 0l2 -3l2 -3l2 -7l2 9l2 -3l2 9l2 -12l2 -8l2 2l2 -8l2 9l2 1l2 -7l2 1l2 0l2 -4l2 -1l2 7l2 2l2 -5l2 2l2 0l2 7l2 -10l2 4l2 16l2 -12l2 5l2 1l2 -1l2 -10l2 2l2 -1l2 -6l2 3l2 6l2 9l2 9l2 -5l2 -5l2 3l2 -1l2 -4l2 -2l2 -8l2 0l2 -15l2 2l2 0l2 4l2 2l2 3l2 10l2 -1l2 -7l2 -8l2 9l2 8l2 -6l2 -5l2 -7l2 -10l2 12l2 -5l2 1l2 -5l2 -4l2 -6l2 -2l2 10l2 9l2 -7l2 -2l2 -4l2 -7l2 1l2 -6l2 -2l2 2l2 7l2 1l2 -1l2 6l2 -3l2 13l2 -10l2 -2l2 -7l2 0l2 9l2 -5l2 10l2 0l2 -5l2 5l2 8l2 -6l2 -5l2 7l2 -1l2 6l2 -8l2 2l2 5l2 3l2 10l2 -10l2 7l2 13l2 0l2 -13l2 -11l2 8l2 4l2 -9l2 20l2 -4l2 -6l2 9l2 -2l2 -11l2 -1l2 3l2 13l2 -2l2 2l2 6l2 -4l2 2l2 -2l2 -3l2 -12l2 -1l2 6l2 -10l2 16l2 14l2 26l2 -17l2 -11l2 -17l2 -1l2 -4l2 10l2 -8l2 16l2 -3l2 6l2 -14l2 3l2 13l2 -3l2 -13l2 2l2 2l2 -5l2 -13l2 16l2 -15l2 -7l2 1l2 -6l2 13l2 7l2 4l2 -2l2 3l2 -11l2 -5l2 19l2 -11l2 8l2 -6l2 -2l2 6l2 -20l2 14l2 2l2 -4l2 11l2 -1l2 -18l2 -1l2 10l2 -16l2 23l2 -2l2 14l2 7l2 -12l2 4l2 -4l2 -4l2 7l2 14l2 0l2 5l2 -7l2 1l2 -2l2 -2l2 -3l2 -5l2 -9l2 -3l2 1l2 -3l2 13l2 -5l2 -5l2 13l2 -12l2 13l2 8l2 7l2 -10l2 0l2 11l2 8l2 -12l2 -11l2 4l2 -11l2 -3l2 12l2 -20l2 4l2 5l2 1l2 7l2 10l2 -24l2 2l2 0l2 21l2 2l2 -11l2 -11l2 3l2 -2l2 16l2 2l2 7l2 -13l2 6l2 -3l2 18l2 -5l2 -12l2 1l2 -22l2 -4l2 24l2 -1l2 -1l2 14l2 0l2 -31l2 15l2 -2l2 3l2 10l2 -19l2 11l2 9l2 17l2 -6l2 -3l2 -3l2 -13l2 -8l2 13l2 -9l2 -6l2 -1l2 4l2 -8l2 21l2 -9l2 -11l2 -13l2 17l2 10l2 -6l2 -10l2 -6l2 9l2 7l2 12l2 -3l2 -5l2 8l2 -24l2 3l2 -12l2 9l2 10l2 1l2 -7l2 1l2 12l2 -7l2 -5l2 9l2 -4l2 0l2 1l2 -14l2 -14l2 13l2 -13l2 -3l2 8l2 2l2 -1l2 7l2 4l2 1l2 3l2 2l2 -6M388 698l2 -8l2 1l2 3l2 4l2 8l2 3l2 -10l2 1l2 -6l2 5l2 -1l2 2l2 -6l2 1l2 -2l2 4l2 9l2 -3l2 0l2 4l2 -4l2 -3l2 4l2 -1l2 -8l2 1l2 10l2 -1l2 -12l2 0l2 7l2 5l2 4l2 1l2 -5l2 7l2 -4l2 -4l2 1l2 8l2 3l2 -14l2 10l2 1l2 -2l2 -4l2 -3l2 -1l2 -1l2 9l2 5l2 -11l2 -2l2 0l2 0l2 0l2 6l2 8l2 -9l2 2l2 -13l2 -3l2 -9l2 9l2 1l2 2l2 0l2 6l2 -3l2 2l2 -5l2 -3l2 4l2 -14l2 0l2 7l2 -6l2 3l2 9l2 5l2 2l2 -7l2 -1l2 0l2 0l2 -3l2 3l2 -4l2 0l2 2l2 -1l2 10l2 2l2 1l2 -7l2 1l2 4l2 1l2 -6l2 -1l2 -7l2 -2l2 3l2 3l2 -5l2 7l2 1l2 -4l2 -8l2 -2l2 10l2 2l2 2l2 -3l2 -7l2 -6l2 6l2 5l2 -6l2 2l2 -10l2 3l2 9l2 0l2 2l2 4l2 0l2 -9l2 11l2 -7l2 -11l2 -2l2 7l2 7l2 8l2 -3l2 -1l2 0l2 10l2 -2l2 7l2 0l2 -1l2 -2l2 2l2 -16l2 8l2 -20l2 6l2 2l2 5l2 -6l2 -3l2 -9l2 2l2 6l2 -1l2 3l2 2l2 3l2 -12l2 9l2 13l2 -12l2 -7l2 12l2 -1l2 5l2 -8l2 7l2 5l2 -7l2 -9l2 10l2 2l2 -2l2 -2l2 0l2 8l2 -14l2 12l2 -19l2 -3l2 9l2 -9l2 9l2 6l2 8l2 -3l2 -15l2 0l2 20l2 -16l2 -13l2 9l2 11l2 3l2 -1l2 16l2 7l2 -18l2 3l2 -4l2 -3l2 -6l2 2l2 1l2 8l2 21l2 -9l2 0l2 -15l2 13l2 -17l2 0l2 -33l2 10l2 8l2 8l2 3l2 8l2 -14l2 -4l2 11l2 9l2 -17l2 -6l2 16l2 -3l2 12l2 -2l2 -8l2 21l2 -3l2 4l2 -24l2 11l2 -11l2 -1l2 2l2 -15l2 8l2 6l2 10l2 7l2 0l2 -22l2 22l2 20l2 -10l2 -8l2 5l2 -1l2 0l2 -17l2 1l2 10l2 -19l2 -1l2 2l2 -2l2 10l2 9l2 -12l2 -7l2 8l2 5l2 -11l2 2l2 5l2 6l2 -5l2 -8l2 12l2 3l2 14l2 -11l2 24l2 -11l2 -14l2 -14l2 0l2 -2l2 8l2 -7l2 9l2 -2l2 -11l2 -7l2 25l2 -6l2 -15l2 0l2 4l2 3l2 -5l2 -9l2 11l2 20l2 -5l2 3l2 -18l2 14l2 -15l2 6l2 4l2 13l2 -5l2 24l2 10l2 -19l2 5l2 -1l2 -7l2 -12l2 4l2 -4l2 -1l2 13l2 -10l2 0l2 7l2 6l2 -9l2 0l2 2l2 7l2 -1l2 -2l2 -9l2 -4l2 -9l2 -12l2 11l2 2l2 6l2 -6l2 14l2 6l2 -7l2 -1l2 12l2 -14l2 1l2 -8l2 -2l2 11l2 -7l2 2l2 -16l2 5l2 15l2 -21l2 -1l2 -6l2 11l2 -1l2 3l2 9l2 4l2 3l2 3l2 0l2 -7l2 13l2 -2l2 -10l2 5l2 -9l2 0l2 -10l2 10l2 -8l2 -6l2 13l2 7l2 6l2 -1l2 -12M388 703l2 0l2 -4l2 -4l2 12l2 -10l2 8l2 2l2 9l2 -5l2 -1l2 -15l2 -4l2 1l2 4l2 6l2 -3l2 -3l2 1l2 3l2 -3l2 2l2 -3l2 0l2 -5l2 6l2 -5l2 2l2 0l2 1l2 -3l2 6l2 -7l2 3l2 -6l2 -2l2 15l2 -6l2 -4l2 -1l2 13l2 -1l2 -9l2 -3l2 10l2 7l2 6l2 -1l2 2l2 -9l2 0l2 -2l2 -2l2 4l2 0l2 8l2 -7l2 -6l2 -6l2 6l2 -7l2 3l2 0l2 -12l2 1l2 -4l2 10l2 11l2 -5l2 4l2 -3l2 5l2 1l2 8l2 -8l2 -4l2 -7l2 -6l2 8l2 8l2 -7l2 17l2 -3l2 -8l2 -7l2 -8l2 1l2 3l2 7l2 -1l2 -10l2 6l2 0l2 -9l2 14l2 5l2 -2l2 -10l2 -3l2 0l2 -2l2 -2l2 5l2 -6l2 -4l2 -4l2 5l2 -6l2 -4l2 -1l2 7l2 8l2 -6l2 -3l2 -3l2 -4l2 2l2 -13l2 -3l2 2l2 -3l2 -14l2 0l2 4l2 -1l2 -3l2 -6l2 -4l2 -3l2 1l2 -15l2 11l2 0l2 -5l2 -9l2 -6l2 -13l2 26l2 -5l2 10l2 -5l2 3l2 -20l2 11l2 -1l2 -13l2 13l2 -1l2 5l2 6l2 2l2 -14l2 -5l2 8l2 6l2 -7l2 8l2 1l2 -22l2 2l2 -1l2 -2l2 21l2 4l2 4l2 3l2 15l2 -8l2 13l2 -12l2 14l2 -6l2 6l2 -8l2 8l2 13l2 12l2 -5l2 -18l2 16l2 -13l2 23l2 -10l2 15l2 26l2 -33l2 -1l2 12l2 7l2 0l2 3l2 -10l2 12l2 -19l2 4l2 -13l2 -9l2 13l2 9l2 5l2 -19l2 14l2 6l2 -1l2 -8l2 7l2 22l2 -7l2 -2l2 -5l2 18l2 -5l2 -4l2 0l2 -6l2 12l2 4l2 -3l2 -21l2 8l2 -1l2 -3l2 -12l2 5l2 12l2 15l2 -18l2 4l2 3l2 -13l2 3l2 -13l2 2l2 4l2 -20l2 24l2 20l2 6l2 -21l2 -25l2 7l2 23l2 -6l2 9l2 -16l2 0l2 2l2 -8l2 21l2 -6l2 8l2 10l2 -8l2 -1l2 -19l2 -4l2 -4l2 8l2 11l2 -8l2 -7l2 5l2 9l2 -18l2 -9l2 10l2 17l2 -8l2 1l2 -3l2 5l2 -5l2 2l2 -3l2 -8l2 7l2 -2l2 0l2 23l2 -9l2 10l2 -2l2 5l2 -10l2 -13l2 -13l2 15l2 -10l2 -4l2 14l2 -12l2 9l2 -12l2 -5l2 0l2 13l2 16l2 -13l2 3l2 12l2 -4l2 -8l2 -15l2 7l2 11l2 14l2 -5l2 5l2 4l2 -11l2 -7l2 1l2 13l2 12l2 -16l2 -1l2 -15l2 1l2 15l2 14l2 -28l2 3l2 5l2 16l2 -6l2 1l2 0l2 -12l2 5l2 15l2 -5l2 -11l2 13l2 -7l2 -1l2 1l2 2l2 0l2 1l2 -1l2 -7l2 6l2 -18l2 20l2 -16l2 7l2 10l2 1l2 -13l2 -6l2 5l2 -5l2 14l2 -8l2 23l2 -20l2 4l2 4l2 -8l2 -2l2 12l2 5l2 -12l2 -14l2 4l2 2l2 9l2 -10l2 1l2 -14l2 6l2 1l2 8l2 -2l2 -14l2 15l2 -8l2 -4l2 0l2 2M388 700l2 -6l2 -9l2 7l2 -7l2 -2l2 21l2 4l2 -3l2 -4l2 6l2 7l2 -11l2 14l2 -4l2 -2l2 -14l2 -1l2 0l2 3l2 11l2 4l2 -4l2 -2l2 -5l2 -4l2 -4l2 -2l2 1l2 2l2 1l2 4l2 -5l2 2l2 0l2 10l2 -7l2 6l2 -3l2 -4l2 -4l2 -1l2 1l2 2l2 3l2 1l2 9l2 5l2 -8l2 0l2 -1l2 -5l2 -3l2 -7l2 9l2 1l2 0l2 -6l2 8l2 -6l2 2l2 -4l2 1l2 4l2 0l2 -8l2 -2l2 6l2 0l2 0l2 -4l2 4l2 -7l2 -1l2 9l2 4l2 -1l2 -6l2 -2l2 -2l2 -2l2 11l2 -15l2 -5l2 0l2 -4l2 0l2 -3l2 0l2 -2l2 2l2 -5l2 1l2 -4l2 -1l2 -7l2 -5l2 -3l2 -2l2 1l2 0l2 -2l2 -10l2 -7l2 -8l2 -8l2 -10l2 0l2 0l2 5l2 2l2 -17l2 -8l2 -5l2 -1l2 6l2 -1l2 -11l2 -11l2 -9l2 6l2 9l2 -8l2 5l2 1l2 3l2 1l2 -13l2 -2l2 5l2 -10l2 -1l2 2l2 -5l2 1l2 -5l2 4l2 -2l2 13l2 5l2 3l2 9l2 2l2 13l2 0l2 6l2 8l2 2l2 -8l2 18l2 14l2 7l2 -4l2 2l2 3l2 23l2 12l2 -1l2 12l2 -13l2 -9l2 -13l2 0l2 8l2 8l2 19l2 -1l2 -4l2 3l2 3l2 0l2 -9l2 3l2 -1l2 5l2 6l2 1l2 10l2 16l2 -23l2 -12l2 -7l2 -8l2 10l2 19l2 -6l2 20l2 -7l2 -4l2 11l2 9l2 -9l2 -8l2 8l2 1l2 -6l2 -18l2 8l2 10l2 -7l2 -5l2 6l2 7l2 -2l2 -4l2 13l2 17l2 -10l2 -9l2 -15l2 11l2 2l2 9l2 2l2 8l2 3l2 -6l2 -6l2 -8l2 -2l2 -9l2 4l2 12l2 -16l2 3l2 -6l2 5l2 -6l2 23l2 -4l2 -9l2 -1l2 0l2 4l2 3l2 5l2 -13l2 -6l2 15l2 0l2 -10l2 -9l2 1l2 0l2 22l2 -12l2 -9l2 13l2 11l2 0l2 11l2 -18l2 -8l2 -5l2 17l2 -16l2 7l2 18l2 -4l2 -9l2 -20l2 4l2 1l2 6l2 -18l2 -17l2 18l2 3l2 3l2 9l2 9l2 -9l2 -3l2 -1l2 3l2 -13l2 5l2 0l2 3l2 -1l2 0l2 -17l2 9l2 -9l2 10l2 -2l2 18l2 7l2 3l2 3l2 -13l2 -2l2 3l2 -2l2 8l2 -7l2 -9l2 3l2 -7l2 11l2 23l2 12l2 -2l2 -12l2 -5l2 -7l2 -13l2 -1l2 11l2 -5l2 1l2 -4l2 -7l2 5l2 7l2 -10l2 2l2 20l2 -16l2 11l2 -16l2 -5l2 3l2 -4l2 10l2 -17l2 10l2 -7l2 10l2 0l2 0l2 15l2 -2l2 -8l2 6l2 3l2 17l2 -23l2 3l2 -7l2 3l2 5l2 -1l2 4l2 14l2 -2l2 10l2 16l2 -25l2 -6l2 8l2 -18l2 14l2 -23l2 9l2 -9l2 -20l2 22l2 22l2 -6l2 -12l2 -1l2 -2l2 -20l2 -14l2 13l2 -2l2 8l2 3l2 4l2 3l2 1l2 -5l2 2l2 -6l2 -1l2 -4l2 1l2 1l2 -5M388 701l2 3l2 -4l2 -4l2 5l2 2l2 -1l2 -3l2 5l2 2l2 -10l2 -4l2 -4l2 8l2 1l2 5l2 -2l2 -7l2 0l2 12l2 3l2 -4l2 0l2 1l2 -1l2 -5l2 -3l2 -1l2 4l2 -10l2 9l2 -2l2 5l2 2l2 -3l2 2l2 -9l2 -6l2 3l2 9l2 2l2 4l2 0l2 -5l2 -2l2 -4l2 1l2 -10l2 8l2 -1l2 -1l2 6l2 -2l2 2l2 -4l2 4l2 -3l2 11l2 -2l2 -5l2 10l2 -14l2 -1l2 4l2 2l2 -1l2 -5l2 1l2 1l2 9l2 9l2 3l2 -7l2 -2l2 -1l2 0l2 -2l2 2l2 -9l2 9l2 4l2 -7l2 -3l2 -7l2 3l2 2l2 3l2 5l2 0l2 7l2 -4l2 -2l2 -4l2 -5l2 4l2 10l2 -4l2 -4l2 -6l2 1l2 -9l2 7l2 -2l2 2l2 5l2 1l2 -2l2 3l2 -8l2 2l2 3l2 12l2 -2l2 -2l2 -15l2 4l2 5l2 -1l2 10l2 -1l2 -7l2 -6l2 4l2 -17l2 5l2 -3l2 3l2 -2l2 11l2 -2l2 -2l2 -8l2 -2l2 2l2 4l2 5l2 12l2 2l2 -3l2 0l2 -3l2 14l2 -5l2 3l2 -5l2 3l2 -15l2 8l2 -13l2 6l2 7l2 -4l2 -5l2 0l2 -7l2 18l2 8l2 11l2 -10l2 -5l2 -9l2 -2l2 6l2 11l2 -11l2 -2l2 -3l2 13l2 -6l2 -10l2 -1l2 4l2 -9l2 6l2 -20l2 -13l2 21l2 11l2 -1l2 3l2 -2l2 -7l2 3l2 10l2 1l2 8l2 -8l2 -4l2 10l2 4l2 -24l2 1l2 -18l2 -22l2 4l2 43l2 5l2 -4l2 1l2 3l2 3l2 -3l2 -1l2 0l2 12l2 0l2 -17l2 -11l2 8l2 -5l2 -1l2 -2l2 -1l2 17l2 2l2 20l2 10l2 -4l2 1l2 4l2 -4l2 5l2 12l2 -29l2 6l2 -18l2 -1l2 -10l2 10l2 14l2 17l2 -37l2 0l2 9l2 7l2 6l2 9l2 -10l2 -24l2 -13l2 18l2 -7l2 1l2 -13l2 4l2 8l2 9l2 -5l2 1l2 -6l2 -1l2 -16l2 5l2 1l2 13l2 -4l2 -6l2 -12l2 5l2 -10l2 -11l2 1l2 5l2 3l2 -4l2 -3l2 9l2 5l2 -12l2 6l2 14l2 -1l2 3l2 -2l2 2l2 8l2 -20l2 6l2 -5l2 12l2 -4l2 17l2 -6l2 -8l2 -13l2 8l2 9l2 7l2 12l2 15l2 -12l2 8l2 -5l2 6l2 5l2 -2l2 -14l2 -12l2 7l2 2l2 -2l2 -7l2 -12l2 8l2 4l2 -14l2 5l2 -7l2 2l2 8l2 14l2 -3l2 2l2 23l2 -7l2 -11l2 0l2 -10l2 -10l2 -6l2 6l2 6l2 12l2 -18l2 -11l2 -5l2 11l2 -3l2 14l2 -2l2 -2l2 3l2 14l2 -7l2 -9l2 -1l2 2l2 9l2 5l2 -11l2 -3l2 13l2 -3l2 -13l2 -10l2 7l2 15l2 3l2 -16l2 2l2 9l2 17l2 -30l2 -10l2 -6l2 15l2 -2l2 18l2 -5l2 -3l2 11l2 0l2 -3l2 -16l2 -10l2 -17l2 8l2 14l2 -8l2 6l2 4l2 -4l2 3l2 7l2 11l2 -3l2 -5l2 0l2 -5l2 -19M388 702l2 -2l2 4l2 -2l2 3l2 -7l2 -8l2 3l2 8l2 -4l2 2l2 5l2 4l2 -1l2 -2l2 7l2 -10l2 10l2 -3l2 -9l2 0l2 5l2 1l2 0l2 -7l2 9l2 -7l2 3l2 -6l2 0l2 3l2 -1l2 -6l2 13l2 5l2 -1l2 -2l2 3l2 -4l2 6l2 2l2 -4l2 -4l2 2l2 2l2 -2l2 3l2 2l2 -1l2 7l2 -3l2 -2l2 -2l2 -4l2 -5l2 9l2 3l2 2l2 -8l2 7l2 -10l2 11l2 -1l2 -7l2 2l2 2l2 -7l2 5l2 6l2 -1l2 -2l2 -4l2 -4l2 0l2 -2l2 0l2 0l2 3l2 -9l2 0l2 -7l2 4l2 8l2 -8l2 6l2 2l2 6l2 -11l2 12l2 -5l2 -14l2 4l2 -2l2 -1l2 6l2 2l2 8l2 -6l2 0l2 -10l2 8l2 3l2 3l2 -7l2 -2l2 4l2 0l2 -3l2 -3l2 -3l2 -1l2 -1l2 9l2 -7l2 -3l2 1l2 -2l2 2l2 0l2 9l2 -16l2 -6l2 -8l2 1l2 4l2 -2l2 2l2 -7l2 -2l2 -3l2 1l2 7l2 0l2 3l2 -11l2 -3l2 18l2 -4l2 6l2 -9l2 6l2 -5l2 4l2 3l2 9l2 2l2 1l2 0l2 -2l2 -3l2 -3l2 -3l2 1l2 6l2 14l2 -12l2 -2l2 -1l2 12l2 14l2 -12l2 3l2 2l2 13l2 -11l2 9l2 14l2 -1l2 -9l2 -3l2 -8l2 -3l2 10l2 0l2 -7l2 -1l2 5l2 7l2 2l2 -5l2 -8l2 6l2 -3l2 -4l2 -6l2 2l2 19l2 -7l2 4l2 -6l2 -17l2 0l2 -2l2 8l2 -7l2 31l2 -23l2 -12l2 17l2 2l2 10l2 -4l2 4l2 -5l2 -12l2 -4l2 -6l2 4l2 3l2 1l2 2l2 8l2 6l2 -6l2 13l2 4l2 -1l2 -9l2 7l2 -25l2 -7l2 0l2 -1l2 -12l2 12l2 13l2 -8l2 15l2 13l2 -8l2 18l2 8l2 -5l2 -6l2 -10l2 -9l2 -4l2 5l2 -22l2 21l2 3l2 -6l2 -6l2 -9l2 -7l2 9l2 -11l2 5l2 1l2 10l2 -1l2 -2l2 2l2 6l2 16l2 -18l2 -15l2 6l2 -14l2 7l2 -5l2 -13l2 18l2 -12l2 2l2 9l2 10l2 -8l2 3l2 -3l2 -15l2 15l2 6l2 1l2 16l2 -12l2 4l2 -23l2 2l2 6l2 10l2 -13l2 11l2 1l2 0l2 -4l2 -16l2 -7l2 -15l2 9l2 6l2 7l2 -11l2 17l2 -5l2 -4l2 11l2 1l2 -3l2 -11l2 10l2 5l2 3l2 -5l2 6l2 7l2 -4l2 -16l2 -21l2 17l2 -3l2 2l2 -1l2 14l2 5l2 -1l2 3l2 12l2 5l2 -13l2 -11l2 -16l2 13l2 6l2 6l2 0l2 -9l2 15l2 -11l2 -10l2 7l2 18l2 1l2 4l2 3l2 3l2 3l2 -20l2 -12l2 0l2 1l2 8l2 -2l2 -1l2 -2l2 15l2 4l2 -9l2 -2l2 -6l2 -22l2 20l2 -18l2 19l2 -7l2 0l2 14l2 -6l2 -8l2 5l2 5l2 14l2 -26l2 0l2 -1l2 -2l2 -1l2 -8l2 13l2 10l2 -14l2 -6l2 -5l2 -13l2 9l2 10l2 2l2 8l2 10l2 -19M388 700l2 8l2 1l2 -5l2 -7l2 6l2 -4l2 8l2 3l2 -9l2 -2l2 2l2 -5l2 1l2 2l2 -2l2 -2l2 1l2 -4l2 6l2 -1l2 0l2 6l2 -4l2 -3l2 2l2 -7l2 7l2 9l2 -8l2 7l2 -14l2 7l2 -4l2 -1l2 4l2 -7l2 -2l2 12l2 -5l2 -1l2 -2l2 6l2 -6l2 6l2 1l2 12l2 -15l2 1l2 -1l2 -5l2 14l2 -14l2 2l2 0l2 2l2 1l2 1l2 5l2 -2l2 0l2 -7l2 -8l2 1l2 -3l2 -2l2 6l2 10l2 7l2 -10l2 0l2 5l2 6l2 -5l2 7l2 -9l2 -9l2 5l2 0l2 4l2 1l2 3l2 2l2 5l2 0l2 -4l2 4l2 2l2 -9l2 -7l2 -5l2 -7l2 10l2 4l2 -14l2 7l2 15l2 -4l2 5l2 -10l2 -3l2 0l2 -1l2 -3l2 4l2 -3l2 3l2 -4l2 -2l2 -1l2 8l2 5l2 0l2 2l2 -1l2 -2l2 -3l2 -1l2 -2l2 -9l2 -1l2 3l2 -9l2 14l2 13l2 -3l2 -4l2 -10l2 -1l2 3l2 7l2 -3l2 -8l2 -8l2 1l2 8l2 0l2 5l2 14l2 -16l2 -10l2 11l2 1l2 2l2 -18l2 0l2 6l2 7l2 -1l2 -11l2 -4l2 -2l2 1l2 11l2 4l2 0l2 6l2 -5l2 -1l2 10l2 -5l2 -6l2 -10l2 7l2 13l2 -11l2 -12l2 6l2 8l2 11l2 15l2 -5l2 11l2 -24l2 1l2 6l2 5l2 6l2 1l2 -1l2 22l2 -9l2 3l2 -3l2 -4l2 17l2 -25l2 -12l2 12l2 0l2 3l2 -2l2 -16l2 -8l2 10l2 2l2 4l2 -13l2 7l2 -1l2 -7l2 22l2 -10l2 -14l2 1l2 3l2 14l2 -1l2 5l2 -8l2 -2l2 -9l2 18l2 4l2 4l2 6l2 -2l2 -13l2 3l2 -13l2 6l2 1l2 0l2 4l2 -3l2 0l2 9l2 10l2 -6l2 16l2 -9l2 -14l2 -10l2 6l2 6l2 -8l2 0l2 8l2 -9l2 -8l2 -4l2 14l2 -4l2 -2l2 -4l2 2l2 -4l2 -5l2 11l2 -1l2 3l2 5l2 -2l2 11l2 -7l2 2l2 -3l2 -2l2 0l2 -2l2 1l2 0l2 11l2 -5l2 1l2 -15l2 9l2 -22l2 12l2 20l2 -1l2 8l2 0l2 -2l2 10l2 -12l2 10l2 -25l2 -9l2 2l2 0l2 14l2 1l2 -2l2 -17l2 11l2 3l2 -14l2 -11l2 2l2 -6l2 17l2 14l2 -2l2 4l2 0l2 15l2 -25l2 -7l2 1l2 2l2 -5l2 2l2 10l2 -14l2 -10l2 3l2 -1l2 0l2 17l2 6l2 -5l2 -4l2 -13l2 15l2 -16l2 10l2 -2l2 -14l2 -11l2 13l2 17l2 -5l2 -19l2 11l2 -1l2 13l2 -9l2 11l2 -11l2 7l2 2l2 2l2 -3l2 -19l2 5l2 -4l2 -12l2 15l2 -2l2 -2l2 4l2 24l2 19l2 -18l2 -12l2 6l2 -8l2 4l2 -21l2 16l2 12l2 4l2 -10l2 -9l2 -7l2 5l2 9l2 23l2 -14l2 -6l2 7l2 -11l2 -25l2 13l2 -2l2 0l2 14l2 15l2 -3l2 14l2 -5l2 3l2 12l2 -18l2 -8l2 -11l2 -4l2 -3l2 4M388 697l2 -4l2 0l2 9l2 7l2 6l2 -6l2 2l2 -3l2 -4l2 -2l2 10l2 -6l2 -2l2 -3l2 1l2 6l2 -13l2 -2l2 6l2 1l2 -3l2 7l2 5l2 -1l2 -5l2 0l2 3l2 -3l2 -8l2 2l2 -3l2 -5l2 9l2 10l2 7l2 -6l2 -1l2 -1l2 11l2 -5l2 0l2 -5l2 7l2 -2l2 -2l2 0l2 -7l2 -2l2 4l2 -6l2 1l2 -2l2 -5l2 0l2 -2l2 3l2 8l2 0l2 -7l2 -5l2 -3l2 6l2 13l2 -1l2 0l2 2l2 -1l2 -8l2 3l2 4l2 -7l2 13l2 -13l2 13l2 -4l2 -8l2 -1l2 3l2 8l2 -3l2 -5l2 0l2 5l2 -7l2 -6l2 4l2 -6l2 4l2 3l2 -9l2 10l2 8l2 3l2 -8l2 -1l2 5l2 -1l2 2l2 0l2 -3l2 -7l2 -3l2 -2l2 -7l2 -5l2 -4l2 8l2 -6l2 -8l2 -2l2 -17l2 -8l2 -3l2 2l2 -11l2 0l2 -12l2 0l2 1l2 -4l2 0l2 -15l2 -21l2 -5l2 -4l2 -5l2 7l2 -6l2 -4l2 -4l2 2l2 -15l2 -15l2 13l2 7l2 -3l2 13l2 -19l2 7l2 5l2 -9l2 9l2 -9l2 11l2 0l2 5l2 3l2 3l2 10l2 1l2 -2l2 16l2 6l2 -6l2 11l2 6l2 2l2 10l2 0l2 11l2 1l2 -7l2 13l2 6l2 -2l2 2l2 12l2 3l2 -7l2 8l2 9l2 3l2 2l2 17l2 -7l2 -15l2 11l2 -4l2 9l2 5l2 -4l2 18l2 12l2 -1l2 -19l2 -1l2 -6l2 14l2 12l2 -29l2 15l2 -16l2 7l2 -9l2 8l2 4l2 0l2 11l2 -10l2 0l2 -1l2 -5l2 -18l2 4l2 10l2 -16l2 18l2 -2l2 12l2 -1l2 -3l2 -15l2 9l2 -3l2 1l2 -2l2 18l2 0l2 -1l2 2l2 -22l2 1l2 -15l2 1l2 -5l2 14l2 5l2 19l2 -4l2 -13l2 23l2 5l2 -25l2 9l2 20l2 -17l2 -5l2 6l2 -6l2 -1l2 0l2 18l2 -12l2 -1l2 -15l2 -7l2 8l2 -3l2 25l2 -7l2 10l2 -7l2 19l2 5l2 -12l2 -3l2 -5l2 0l2 1l2 7l2 -14l2 -13l2 16l2 6l2 6l2 -7l2 -1l2 7l2 -8l2 -7l2 -6l2 4l2 -4l2 -1l2 -23l2 18l2 7l2 -3l2 28l2 -11l2 -15l2 -2l2 -1l2 -4l2 16l2 -1l2 -1l2 -4l2 2l2 0l2 -2l2 4l2 3l2 9l2 -10l2 -4l2 -2l2 17l2 -16l2 2l2 11l2 -10l2 -1l2 -9l2 -1l2 13l2 -6l2 -7l2 9l2 25l2 -9l2 -11l2 -10l2 7l2 -18l2 5l2 -8l2 8l2 1l2 3l2 -14l2 6l2 -1l2 -2l2 -13l2 23l2 -6l2 4l2 5l2 -7l2 3l2 17l2 -27l2 11l2 -5l2 11l2 -6l2 -1l2 1l2 1l2 5l2 -2l2 12l2 -13l2 -12l2 12l2 -12l2 7l2 3l2 -18l2 13l2 7l2 6l2 7l2 -13l2 -18l2 16l2 19l2 3l2 -10l2 -7l2 15l2 9l2 -19l2 2l2 3l2 12l2 -16l2 14l2 -15l2 -4l2 7l2 7l2 0l2 -17l2 5l2 -19l2 13l2 -1M388 700l2 2l2 -4l2 -5l2 4l2 -3l2 -3l2 7l2 -2l2 -1l2 9l2 7l2 -4l2 -1l2 -5l2 3l2 1l2 -4l2 8l2 -6l2 -2l2 4l2 -4l2 -4l2 -5l2 8l2 6l2 0l2 4l2 -6l2 9l2 -4l2 3l2 -2l2 -3l2 2l2 5l2 -1l2 -13l2 3l2 -7l2 -3l2 7l2 5l2 -4l2 6l2 4l2 -6l2 -7l2 3l2 -1l2 14l2 -2l2 3l2 -5l2 -4l2 -1l2 3l2 -5l2 0l2 -9l2 5l2 -10l2 3l2 3l2 4l2 4l2 -3l2 3l2 -4l2 0l2 -1l2 3l2 0l2 -2l2 2l2 2l2 -1l2 -2l2 3l2 0l2 4l2 2l2 -5l2 -3l2 0l2 0l2 2l2 2l2 -2l2 -2l2 1l2 -2l2 -4l2 3l2 6l2 -5l2 -2l2 6l2 4l2 -3l2 9l2 -3l2 1l2 -3l2 4l2 -8l2 4l2 -4l2 -4l2 1l2 8l2 -5l2 3l2 -7l2 -1l2 -4l2 -2l2 -10l2 -10l2 5l2 -1l2 0l2 -14l2 -3l2 1l2 3l2 -19l2 3l2 3l2 -20l2 -4l2 -14l2 -2l2 2l2 -12l2 3l2 -4l2 -4l2 -9l2 -8l2 3l2 -20l2 -4l2 6l2 -3l2 2l2 -10l2 -1l2 12l2 -10l2 5l2 -7l2 0l2 1l2 0l2 11l2 6l2 5l2 0l2 7l2 4l2 -11l2 5l2 17l2 25l2 6l2 11l2 -21l2 19l2 -6l2 9l2 13l2 11l2 4l2 -2l2 -7l2 21l2 -4l2 4l2 12l2 -3l2 5l2 -1l2 -2l2 -7l2 15l2 -20l2 19l2 -19l2 15l2 3l2 -5l2 0l2 2l2 -15l2 -1l2 -6l2 11l2 11l2 3l2 -2l2 -5l2 7l2 4l2 20l2 -5l2 0l2 -1l2 -7l2 -10l2 23l2 -10l2 -17l2 1l2 15l2 1l2 -6l2 -2l2 -11l2 -12l2 7l2 -9l2 -11l2 8l2 5l2 2l2 -5l2 -8l2 -4l2 3l2 -2l2 -10l2 20l2 8l2 4l2 19l2 3l2 6l2 6l2 -13l2 -13l2 -16l2 18l2 -7l2 15l2 -7l2 -15l2 17l2 -7l2 4l2 -7l2 -3l2 -2l2 13l2 -2l2 -7l2 5l2 -2l2 2l2 13l2 -20l2 1l2 7l2 2l2 -22l2 11l2 11l2 9l2 -2l2 -7l2 -11l2 5l2 -5l2 2l2 -6l2 7l2 -6l2 11l2 -2l2 10l2 -5l2 -1l2 2l2 -7l2 2l2 -4l2 -9l2 -1l2 12l2 7l2 -6l2 -7l2 16l2 -16l2 -5l2 -1l2 -7l2 3l2 23l2 -2l2 7l2 0l2 2l2 -15l2 -4l2 -5l2 1l2 13l2 -1l2 -2l2 11l2 0l2 -9l2 -10l2 11l2 -3l2 2l2 0l2 -2l2 -1l2 3l2 -11l2 18l2 -4l2 -3l2 20l2 10l2 -11l2 3l2 -12l2 13l2 -4l2 3l2 7l2 0l2 -2l2 -6l2 -5l2 18l2 -7l2 8l2 -14l2 0l2 -3l2 -1l2 -12l2 -9l2 12l2 -19l2 12l2 -13l2 -3l2 14l2 -1l2 5l2 -6l2 7l2 6l2 0l2 -14l2 10l2 4l2 6l2 -9l2 4l2 16l2 2l2 -11l2 -16l2 0l2 8l2 -23l2 14l2 -4l2 8l2 -29l2 11l2 28l2 -7M388 702l2 2l2 0l2 -7l2 -2l2 1l2 11l2 -2l2 -2l2 5l2 -5l2 8l2 -9l2 3l2 12l2 -6l2 -10l2 3l2 2l2 -9l2 -1l2 5l2 3l2 0l2 -5l2 -6l2 0l2 3l2 5l2 1l2 5l2 -5l2 -6l2 -3l2 4l2 3l2 4l2 -4l2 5l2 -2l2 -1l2 -1l2 1l2 -1l2 -8l2 5l2 6l2 7l2 -11l2 9l2 0l2 1l2 -9l2 -2l2 5l2 2l2 -9l2 -2l2 3l2 1l2 5l2 3l2 -3l2 -9l2 2l2 0l2 6l2 0l2 -3l2 11l2 -9l2 6l2 -10l2 1l2 2l2 -4l2 -3l2 5l2 -2l2 -1l2 -6l2 5l2 2l2 -8l2 13l2 -5l2 -7l2 -3l2 -2l2 4l2 6l2 0l2 5l2 1l2 -2l2 -4l2 -3l2 3l2 -12l2 8l2 0l2 7l2 -11l2 12l2 -12l2 -4l2 -11l2 7l2 5l2 -1l2 -1l2 1l2 1l2 -4l2 -4l2 -3l2 -3l2 0l2 -11l2 6l2 2l2 -7l2 5l2 -15l2 -8l2 2l2 9l2 -4l2 -5l2 10l2 -1l2 7l2 1l2 -4l2 -7l2 10l2 7l2 -1l2 6l2 0l2 1l2 8l2 4l2 3l2 -6l2 1l2 -12l2 -1l2 4l2 5l2 1l2 -1l2 13l2 -4l2 0l2 17l2 10l2 -15l2 3l2 -5l2 -1l2 -8l2 -18l2 3l2 21l2 -4l2 0l2 7l2 1l2 3l2 0l2 2l2 12l2 5l2 -7l2 -16l2 -5l2 -24l2 15l2 5l2 12l2 -11l2 3l2 -2l2 -5l2 22l2 -17l2 7l2 -5l2 12l2 6l2 -15l2 2l2 3l2 7l2 -1l2 -4l2 16l2 14l2 -2l2 -7l2 -10l2 -6l2 10l2 -8l2 -1l2 -3l2 3l2 -9l2 -10l2 5l2 3l2 2l2 -2l2 -28l2 16l2 14l2 10l2 -2l2 15l2 -3l2 -10l2 18l2 -13l2 -16l2 -8l2 8l2 3l2 -12l2 -4l2 11l2 -7l2 2l2 -3l2 -9l2 19l2 18l2 -20l2 -20l2 12l2 12l2 -19l2 4l2 0l2 -2l2 4l2 -3l2 18l2 -26l2 23l2 -14l2 2l2 4l2 -4l2 12l2 0l2 5l2 -12l2 7l2 1l2 8l2 -1l2 -3l2 -2l2 -12l2 -3l2 5l2 -3l2 6l2 -7l2 -2l2 1l2 4l2 3l2 14l2 0l2 -5l2 4l2 -16l2 3l2 5l2 -13l2 -11l2 16l2 21l2 3l2 -5l2 -7l2 -12l2 4l2 13l2 -5l2 9l2 -20l2 -14l2 -5l2 21l2 5l2 -28l2 18l2 -9l2 3l2 -13l2 11l2 10l2 -1l2 -10l2 -3l2 3l2 7l2 3l2 -12l2 18l2 0l2 4l2 -5l2 -3l2 16l2 4l2 -11l2 -2l2 -2l2 -9l2 -6l2 -9l2 -12l2 10l2 10l2 -7l2 -7l2 7l2 -3l2 14l2 -2l2 1l2 -12l2 -1l2 13l2 9l2 5l2 -8l2 14l2 -3l2 -4l2 -9l2 12l2 -15l2 13l2 2l2 -4l2 -12l2 -7l2 12l2 -5l2 10l2 -3l2 13l2 4l2 -2l2 8l2 -4l2 3l2 -4l2 9l2 -25l2 7l2 10l2 -17l2 7l2 7l2 -4l2 -6l2 8l2 -14l2 -6l2 13l2 7l2 11l2 -9l2 5M388 695l2 9l2 1l2 -8l2 2l2 0l2 2l2 -2l2 6l2 -3l2 5l2 -5l2 9l2 1l2 1l2 -9l2 -2l2 -2l2 -2l2 -2l2 15l2 3l2 -8l2 5l2 1l2 4l2 -2l2 -9l2 9l2 -7l2 0l2 4l2 -4l2 -2l2 3l2 1l2 0l2 -5l2 -8l2 2l2 -4l2 5l2 -12l2 20l2 -3l2 -6l2 13l2 5l2 -12l2 -5l2 1l2 9l2 -2l2 1l2 4l2 -4l2 -5l2 3l2 -8l2 6l2 -1l2 15l2 -2l2 -3l2 1l2 -1l2 -3l2 2l2 -3l2 -4l2 -3l2 -2l2 1l2 8l2 -7l2 8l2 -5l2 -3l2 2l2 -7l2 8l2 2l2 -11l2 -1l2 6l2 -1l2 7l2 2l2 -16l2 5l2 -7l2 4l2 -1l2 4l2 6l2 6l2 -5l2 2l2 2l2 -4l2 -7l2 6l2 13l2 -10l2 -1l2 3l2 0l2 -8l2 0l2 -4l2 -1l2 4l2 -2l2 -9l2 -2l2 -7l2 13l2 -8l2 3l2 -6l2 -1l2 -2l2 -8l2 -5l2 4l2 -7l2 -5l2 -11l2 -14l2 3l2 -2l2 19l2 -6l2 2l2 -6l2 -1l2 7l2 3l2 -10l2 -6l2 -5l2 -9l2 2l2 1l2 7l2 -5l2 -6l2 6l2 20l2 -1l2 -9l2 -12l2 6l2 12l2 0l2 8l2 5l2 2l2 1l2 0l2 2l2 5l2 4l2 4l2 -6l2 17l2 -3l2 -6l2 -7l2 -7l2 0l2 13l2 9l2 3l2 -4l2 -11l2 4l2 -11l2 11l2 1l2 1l2 7l2 -6l2 5l2 -3l2 -4l2 1l2 -11l2 27l2 -4l2 7l2 -7l2 -3l2 8l2 3l2 0l2 -4l2 -20l2 8l2 7l2 0l2 10l2 -1l2 -2l2 3l2 -1l2 -2l2 -12l2 4l2 -29l2 35l2 1l2 -10l2 -1l2 5l2 -1l2 0l2 -3l2 -6l2 20l2 14l2 -28l2 7l2 1l2 3l2 13l2 -5l2 9l2 -21l2 6l2 4l2 -2l2 12l2 3l2 -20l2 -9l2 8l2 -10l2 23l2 -14l2 5l2 6l2 -29l2 10l2 12l2 7l2 1l2 -14l2 -5l2 18l2 -4l2 -2l2 -10l2 -18l2 -9l2 28l2 -3l2 5l2 9l2 1l2 -6l2 13l2 -15l2 -1l2 -11l2 4l2 -7l2 -1l2 7l2 -2l2 -2l2 -13l2 7l2 9l2 1l2 -2l2 6l2 3l2 6l2 -4l2 -14l2 10l2 1l2 -16l2 -3l2 15l2 6l2 20l2 -5l2 -20l2 -8l2 -10l2 17l2 1l2 4l2 0l2 5l2 7l2 0l2 -2l2 -8l2 1l2 4l2 4l2 -1l2 9l2 -7l2 -5l2 17l2 -19l2 5l2 3l2 -2l2 -6l2 1l2 -22l2 -3l2 13l2 0l2 12l2 5l2 -14l2 -18l2 9l2 6l2 14l2 0l2 -12l2 -2l2 -7l2 1l2 -2l2 3l2 14l2 5l2 12l2 4l2 -2l2 -15l2 -7l2 -10l2 16l2 7l2 -5l2 -8l2 -4l2 5l2 10l2 15l2 -11l2 -12l2 -9l2 16l2 -4l2 6l2 -16l2 5l2 5l2 9l2 1l2 3l2 -2l2 -9l2 -11l2 6l2 6l2 -6l2 20l2 -16l2 12l2 -6l2 -27l2 17l2 6l2 12l2 -8l2 -3l2 1l2 -8l2 -4M388 708l2 4l2 -4l2 -8l2 5l2 -2l2 0l2 3l2 -3l2 0l2 4l2 2l2 3l2 -1l2 9l2 2l2 -6l2 1l2 -9l2 -8l2 1l2 2l2 -1l2 2l2 3l2 1l2 -15l2 3l2 -6l2 3l2 5l2 -2l2 -5l2 11l2 6l2 0l2 -5l2 5l2 -6l2 1l2 6l2 1l2 3l2 -11l2 1l2 -11l2 4l2 0l2 6l2 10l2 0l2 -8l2 0l2 -1l2 -3l2 -3l2 3l2 -1l2 7l2 -12l2 13l2 9l2 -6l2 -2l2 -2l2 -10l2 -2l2 9l2 -9l2 11l2 -3l2 0l2 8l2 -4l2 1l2 9l2 -9l2 -11l2 17l2 -5l2 9l2 -5l2 -7l2 -6l2 16l2 -6l2 2l2 4l2 -13l2 -7l2 5l2 -5l2 11l2 -10l2 4l2 4l2 6l2 -2l2 6l2 1l2 8l2 -1l2 -8l2 -2l2 -9l2 -1l2 10l2 6l2 6l2 -4l2 0l2 -6l2 -4l2 -5l2 -3l2 8l2 -5l2 -5l2 17l2 -4l2 -12l2 7l2 4l2 -2l2 -12l2 4l2 -3l2 11l2 -7l2 -6l2 8l2 3l2 -1l2 5l2 -4l2 -12l2 3l2 12l2 0l2 2l2 8l2 -4l2 -8l2 -5l2 -5l2 3l2 -2l2 -6l2 -3l2 6l2 -6l2 6l2 -4l2 -10l2 11l2 1l2 -8l2 3l2 12l2 7l2 6l2 -4l2 -4l2 7l2 -5l2 5l2 1l2 -15l2 -12l2 14l2 -3l2 16l2 -11l2 -10l2 -3l2 6l2 11l2 -5l2 9l2 4l2 -1l2 -1l2 10l2 -16l2 -18l2 5l2 9l2 -2l2 -3l2 -4l2 8l2 6l2 7l2 -9l2 9l2 -5l2 -7l2 6l2 8l2 -5l2 13l2 -3l2 3l2 -6l2 -13l2 10l2 2l2 9l2 -16l2 13l2 -10l2 -6l2 -1l2 -6l2 -25l2 4l2 22l2 -2l2 -2l2 -5l2 9l2 -4l2 -3l2 10l2 -1l2 -6l2 -4l2 -24l2 14l2 9l2 -4l2 7l2 18l2 -13l2 4l2 11l2 -11l2 -4l2 -14l2 5l2 15l2 -2l2 2l2 -7l2 -6l2 28l2 5l2 -8l2 3l2 2l2 -18l2 8l2 15l2 -11l2 24l2 -4l2 -15l2 -8l2 1l2 10l2 -14l2 4l2 11l2 -16l2 -2l2 19l2 1l2 4l2 9l2 -14l2 9l2 -22l2 -19l2 -2l2 14l2 -3l2 -7l2 16l2 6l2 3l2 0l2 2l2 0l2 -8l2 -2l2 8l2 10l2 -1l2 -6l2 -18l2 -4l2 -1l2 10l2 0l2 -2l2 8l2 -7l2 1l2 2l2 -19l2 -10l2 8l2 5l2 14l2 -7l2 -3l2 -12l2 4l2 11l2 -13l2 7l2 -4l2 8l2 3l2 -9l2 16l2 -16l2 14l2 17l2 -4l2 -13l2 -7l2 -9l2 -4l2 -1l2 -11l2 13l2 6l2 8l2 -6l2 9l2 -32l2 22l2 -4l2 4l2 -2l2 5l2 3l2 6l2 -15l2 -2l2 14l2 13l2 -1l2 -15l2 3l2 -7l2 7l2 1l2 -3l2 15l2 -12l2 1l2 -12l2 -3l2 -3l2 -7l2 3l2 6l2 12l2 4l2 -5l2 -3l2 -5l2 2l2 8l2 -29l2 12l2 -17l2 9l2 -1l2 17l2 -27l2 12l2 17l2 -26l2 11l2 -12l2 15l2 6M388 697l2 3l2 0l2 0l2 -1l2 -4l2 7l2 13l2 -3l2 -4l2 -5l2 -1l2 2l2 -4l2 0l2 -7l2 3l2 0l2 2l2 8l2 -6l2 -3l2 -4l2 -5l2 10l2 3l2 2l2 3l2 -8l2 1l2 6l2 -2l2 -12l2 -3l2 4l2 11l2 1l2 -6l2 6l2 2l2 1l2 -3l2 4l2 8l2 -2l2 -5l2 -5l2 -3l2 0l2 -6l2 1l2 -2l2 10l2 -7l2 -2l2 -7l2 12l2 -10l2 4l2 13l2 3l2 -4l2 3l2 -7l2 -3l2 2l2 2l2 15l2 -13l2 5l2 -4l2 2l2 -1l2 -3l2 2l2 0l2 -9l2 -4l2 -6l2 1l2 6l2 6l2 2l2 0l2 6l2 -5l2 -1l2 -1l2 -6l2 3l2 2l2 6l2 5l2 -12l2 -6l2 -1l2 6l2 9l2 -6l2 0l2 -2l2 5l2 5l2 -1l2 0l2 -8l2 1l2 7l2 1l2 -1l2 -3l2 11l2 -4l2 -4l2 -6l2 4l2 -15l2 3l2 1l2 10l2 7l2 3l2 18l2 -4l2 1l2 -4l2 5l2 4l2 17l2 -2l2 5l2 2l2 7l2 -5l2 0l2 -8l2 3l2 -7l2 -7l2 7l2 -2l2 13l2 7l2 14l2 -6l2 -7l2 -6l2 -13l2 12l2 -4l2 -7l2 -3l2 9l2 -1l2 -11l2 -6l2 12l2 -6l2 0l2 3l2 4l2 -10l2 -6l2 3l2 -3l2 4l2 -12l2 -5l2 11l2 -8l2 5l2 -8l2 -4l2 -4l2 -14l2 -7l2 3l2 -5l2 12l2 -1l2 1l2 -5l2 6l2 -7l2 -3l2 9l2 2l2 -22l2 5l2 -4l2 8l2 0l2 5l2 -9l2 -3l2 6l2 -1l2 -4l2 12l2 -2l2 -7l2 4l2 2l2 5l2 3l2 -6l2 15l2 -10l2 5l2 -9l2 19l2 -4l2 -1l2 -17l2 6l2 0l2 -2l2 -13l2 12l2 4l2 -6l2 7l2 2l2 -4l2 -7l2 -1l2 15l2 -2l2 -4l2 4l2 -12l2 7l2 -10l2 -23l2 11l2 17l2 15l2 14l2 -14l2 -15l2 -9l2 0l2 8l2 11l2 -7l2 -21l2 19l2 -13l2 -1l2 -2l2 18l2 -2l2 -4l2 0l2 10l2 -8l2 -16l2 5l2 6l2 0l2 -1l2 -16l2 -2l2 13l2 -13l2 4l2 -15l2 19l2 9l2 -1l2 -8l2 2l2 9l2 3l2 -2l2 -6l2 8l2 -2l2 -12l2 8l2 2l2 13l2 21l2 2l2 -4l2 -28l2 1l2 -14l2 0l2 15l2 7l2 -6l2 16l2 -4l2 -5l2 -13l2 -9l2 9l2 5l2 4l2 -14l2 -6l2 6l2 6l2 1l2 11l2 -14l2 2l2 0l2 2l2 19l2 -1l2 -10l2 -1l2 -12l2 26l2 -10l2 -12l2 7l2 -2l2 -4l2 2l2 5l2 -2l2 3l2 12l2 -12l2 -15l2 7l2 6l2 -6l2 4l2 -15l2 13l2 -2l2 -9l2 6l2 -3l2 8l2 -8l2 -9l2 4l2 8l2 -7l2 0l2 3l2 5l2 -17l2 10l2 0l2 3l2 5l2 -6l2 15l2 2l2 17l2 -11l2 -25l2 3l2 -9l2 20l2 -5l2 -14l2 10l2 7l2 0l2 -4l2 -7l2 17l2 11l2 -3l2 -7l2 -5l2 9l2 -13l2 9l2 -10l2 -4l2 3l2 34M388 700l2 10l2 -10l2 -2l2 7l2 8l2 3l2 -10l2 -3l2 9l2 7l2 7l2 -19l2 0l2 2l2 7l2 -2l2 -12l2 1l2 2l2 10l2 -11l2 0l2 2l2 5l2 0l2 -2l2 -1l2 0l2 -2l2 0l2 -2l2 5l2 5l2 3l2 -2l2 -10l2 5l2 1l2 -1l2 4l2 2l2 -8l2 -4l2 -7l2 3l2 7l2 -6l2 17l2 -6l2 -3l2 -3l2 0l2 -5l2 -3l2 0l2 6l2 2l2 5l2 -5l2 4l2 -1l2 10l2 -6l2 0l2 1l2 6l2 -7l2 -11l2 14l2 -4l2 -11l2 7l2 2l2 -2l2 -2l2 -5l2 6l2 -10l2 3l2 -4l2 4l2 -3l2 -1l2 5l2 -2l2 -2l2 10l2 4l2 1l2 -6l2 -8l2 3l2 2l2 -7l2 10l2 -7l2 5l2 -7l2 6l2 5l2 10l2 -10l2 -3l2 6l2 -5l2 -7l2 1l2 -8l2 8l2 -1l2 -3l2 2l2 -1l2 3l2 3l2 21l2 -8l2 2l2 -8l2 10l2 -7l2 1l2 -4l2 5l2 0l2 11l2 -4l2 13l2 8l2 -7l2 0l2 1l2 12l2 -4l2 0l2 -5l2 -12l2 27l2 9l2 10l2 5l2 -16l2 2l2 1l2 -10l2 0l2 6l2 -11l2 2l2 6l2 6l2 4l2 -2l2 -1l2 -2l2 -10l2 -2l2 -25l2 9l2 -10l2 7l2 6l2 0l2 -4l2 -4l2 -8l2 0l2 -4l2 -5l2 2l2 -6l2 -7l2 0l2 2l2 -3l2 -12l2 17l2 -7l2 -10l2 6l2 -13l2 -1l2 9l2 4l2 18l2 2l2 -28l2 9l2 -4l2 -4l2 8l2 -11l2 -2l2 1l2 -12l2 22l2 -9l2 -5l2 -4l2 -11l2 11l2 8l2 -6l2 0l2 16l2 19l2 -3l2 -1l2 -12l2 -7l2 -8l2 4l2 -3l2 16l2 -4l2 -9l2 8l2 -19l2 -11l2 6l2 -4l2 9l2 -4l2 3l2 -6l2 13l2 8l2 3l2 -15l2 -1l2 14l2 -4l2 7l2 -15l2 3l2 8l2 -12l2 9l2 0l2 7l2 15l2 -3l2 -21l2 17l2 12l2 -18l2 10l2 -10l2 8l2 3l2 -4l2 7l2 0l2 3l2 0l2 -17l2 21l2 11l2 0l2 -3l2 -33l2 7l2 1l2 1l2 -1l2 -8l2 8l2 13l2 -10l2 -11l2 13l2 5l2 7l2 -3l2 -10l2 7l2 4l2 3l2 6l2 -3l2 -14l2 10l2 3l2 -7l2 4l2 0l2 -19l2 18l2 0l2 -5l2 9l2 14l2 -13l2 -13l2 7l2 -1l2 -4l2 -10l2 -2l2 -10l2 14l2 -7l2 4l2 -6l2 13l2 8l2 -17l2 7l2 6l2 6l2 9l2 1l2 -1l2 -8l2 3l2 7l2 -5l2 -18l2 -7l2 10l2 -6l2 13l2 9l2 -4l2 -1l2 -10l2 -3l2 -23l2 8l2 -15l2 12l2 6l2 -10l2 -3l2 11l2 10l2 18l2 -11l2 -22l2 -15l2 9l2 16l2 -1l2 -2l2 13l2 8l2 -14l2 -14l2 -5l2 9l2 10l2 5l2 12l2 3l2 -3l2 -1l2 -9l2 -1l2 11l2 -12l2 -1l2 0l2 20l2 2l2 -6l2 8l2 -3l2 0l2 -21l2 0l2 -3l2 -5l2 4l2 -3l2 4l2 17l2 -5l2 -12l2 11M388 703l2 4l2 -1l2 3l2 -8l2 14l2 -1l2 -2l2 -8l2 3l2 5l2 -7l2 3l2 -2l2 -1l2 -4l2 -8l2 6l2 4l2 -8l2 7l2 2l2 -4l2 -2l2 9l2 -1l2 3l2 10l2 -15l2 -2l2 2l2 -2l2 6l2 5l2 -6l2 0l2 1l2 -9l2 -1l2 4l2 4l2 9l2 -15l2 0l2 -1l2 -6l2 -3l2 7l2 10l2 -1l2 5l2 -10l2 -1l2 2l2 1l2 8l2 -4l2 4l2 -2l2 5l2 -7l2 0l2 -1l2 -2l2 7l2 -6l2 9l2 1l2 -4l2 -2l2 -4l2 -7l2 0l2 8l2 -3l2 4l2 -5l2 6l2 -8l2 17l2 -11l2 0l2 -2l2 9l2 -6l2 -9l2 16l2 -7l2 5l2 -2l2 -3l2 14l2 -4l2 -8l2 -12l2 -2l2 0l2 -6l2 8l2 11l2 -7l2 6l2 1l2 15l2 -9l2 -1l2 -3l2 -5l2 2l2 9l2 -1l2 -12l2 -1l2 -11l2 7l2 -3l2 -1l2 1l2 6l2 -2l2 20l2 3l2 -4l2 -2l2 2l2 -4l2 -3l2 -6l2 9l2 -5l2 -4l2 7l2 -3l2 3l2 3l2 0l2 -7l2 -4l2 7l2 8l2 2l2 3l2 4l2 4l2 0l2 3l2 -5l2 -4l2 -2l2 -3l2 2l2 -1l2 -3l2 -5l2 3l2 -7l2 5l2 -1l2 -8l2 -6l2 5l2 6l2 -2l2 -1l2 -4l2 -6l2 -1l2 -7l2 -4l2 -8l2 3l2 1l2 3l2 -1l2 12l2 3l2 -7l2 14l2 -11l2 -4l2 8l2 -6l2 7l2 -14l2 18l2 9l2 2l2 -9l2 -2l2 -3l2 -16l2 -6l2 -1l2 -2l2 18l2 5l2 17l2 5l2 -5l2 -7l2 -10l2 10l2 0l2 2l2 -18l2 -1l2 8l2 -2l2 -20l2 -12l2 23l2 7l2 0l2 -7l2 1l2 -10l2 -5l2 14l2 -5l2 -7l2 -6l2 10l2 19l2 -3l2 -4l2 -19l2 14l2 9l2 5l2 8l2 -9l2 0l2 0l2 -4l2 11l2 -1l2 8l2 5l2 -19l2 -4l2 8l2 -9l2 -12l2 -2l2 -3l2 3l2 12l2 -3l2 -7l2 11l2 12l2 -16l2 21l2 16l2 -15l2 5l2 8l2 -17l2 -3l2 17l2 -25l2 11l2 -14l2 -1l2 13l2 -7l2 -7l2 9l2 10l2 5l2 0l2 -23l2 -16l2 15l2 0l2 0l2 -7l2 12l2 -12l2 25l2 -2l2 7l2 -4l2 1l2 -7l2 11l2 -7l2 -2l2 1l2 1l2 -11l2 9l2 -2l2 14l2 -23l2 3l2 8l2 -3l2 -18l2 -8l2 3l2 16l2 2l2 7l2 15l2 -5l2 -13l2 -4l2 -22l2 16l2 -1l2 6l2 3l2 3l2 0l2 -1l2 -2l2 17l2 -15l2 -5l2 1l2 4l2 -6l2 -7l2 2l2 -1l2 9l2 -10l2 -8l2 23l2 11l2 -19l2 0l2 -9l2 18l2 3l2 -1l2 11l2 -1l2 -6l2 1l2 -14l2 11l2 -11l2 -2l2 -4l2 17l2 5l2 -8l2 -8l2 -11l2 11l2 -2l2 15l2 -16l2 14l2 0l2 -1l2 -1l2 -18l2 -9l2 4l2 9l2 -4l2 -5l2 11l2 10l2 -24l2 14l2 3l2 -15l2 15l2 5l2 -14l2 -13l2 11l2 -5l2 3l2 2l2 16M388 713l2 -3l2 -1l2 2l2 -3l2 2l2 -8l2 -11l2 2l2 11l2 -2l2 4l2 -1l2 -2l2 -1l2 -3l2 -2l2 7l2 -8l2 18l2 -1l2 -9l2 -1l2 -5l2 -5l2 -8l2 3l2 2l2 0l2 9l2 6l2 -7l2 -5l2 4l2 -1l2 -3l2 -8l2 1l2 -2l2 -3l2 -2l2 13l2 3l2 1l2 1l2 -3l2 -12l2 15l2 -3l2 -2l2 1l2 13l2 0l2 -2l2 5l2 2l2 -6l2 -3l2 0l2 4l2 -8l2 9l2 0l2 -10l2 9l2 6l2 -2l2 -5l2 -4l2 -3l2 1l2 -12l2 6l2 5l2 2l2 0l2 -2l2 4l2 -15l2 17l2 -3l2 -6l2 1l2 2l2 -4l2 0l2 -2l2 5l2 13l2 -5l2 -5l2 5l2 2l2 -6l2 -5l2 -1l2 7l2 0l2 -12l2 1l2 7l2 -2l2 2l2 2l2 -4l2 5l2 -17l2 10l2 10l2 -8l2 8l2 -1l2 9l2 -3l2 1l2 6l2 -3l2 -4l2 -14l2 5l2 -5l2 15l2 3l2 -5l2 6l2 -12l2 -1l2 13l2 -4l2 -10l2 0l2 -5l2 8l2 2l2 6l2 -6l2 3l2 -1l2 0l2 -1l2 -6l2 10l2 5l2 -3l2 11l2 -7l2 -1l2 -16l2 7l2 3l2 5l2 -6l2 8l2 -2l2 13l2 5l2 -18l2 -15l2 6l2 13l2 -9l2 5l2 9l2 -8l2 1l2 -4l2 -18l2 -8l2 2l2 13l2 -14l2 20l2 -12l2 -8l2 -3l2 -9l2 -6l2 -7l2 25l2 5l2 -9l2 6l2 -10l2 -13l2 15l2 -10l2 15l2 15l2 -20l2 10l2 17l2 -15l2 3l2 -9l2 -5l2 8l2 -5l2 -2l2 5l2 17l2 -13l2 -11l2 8l2 2l2 -7l2 9l2 -14l2 12l2 5l2 -7l2 7l2 10l2 0l2 4l2 -7l2 5l2 -7l2 13l2 -2l2 -7l2 5l2 -3l2 -5l2 -5l2 -4l2 -12l2 11l2 -4l2 1l2 21l2 5l2 -13l2 -2l2 1l2 -1l2 -3l2 -4l2 27l2 -9l2 -4l2 10l2 0l2 3l2 -12l2 -15l2 -2l2 -3l2 -14l2 -5l2 5l2 16l2 -5l2 15l2 -14l2 17l2 6l2 -10l2 3l2 -6l2 -7l2 7l2 -11l2 3l2 -4l2 -6l2 9l2 -4l2 2l2 -7l2 0l2 -4l2 17l2 -1l2 3l2 -15l2 13l2 8l2 -6l2 -14l2 1l2 -2l2 0l2 0l2 17l2 -11l2 -3l2 6l2 2l2 2l2 -9l2 -5l2 6l2 -2l2 9l2 -1l2 -16l2 9l2 4l2 2l2 -1l2 4l2 6l2 -3l2 12l2 -6l2 -8l2 6l2 9l2 3l2 5l2 5l2 4l2 -9l2 -22l2 12l2 -3l2 -20l2 7l2 -10l2 4l2 -1l2 -1l2 -2l2 7l2 15l2 -15l2 -6l2 6l2 7l2 12l2 -7l2 4l2 4l2 -20l2 8l2 3l2 1l2 7l2 -3l2 -10l2 9l2 8l2 1l2 6l2 1l2 -22l2 -12l2 9l2 -7l2 3l2 3l2 4l2 -10l2 4l2 -11l2 2l2 -1l2 0l2 10l2 -4l2 8l2 -5l2 -3l2 -3l2 6l2 3l2 4l2 -16l2 8l2 -4l2 8l2 0l2 1l2 -6l2 8l2 7l2 -6l2 7l2 13l2 4M388 705l2 1l2 -3l2 -4l2 8l2 0l2 1l2 -7l2 4l2 4l2 0l2 -9l2 0l2 -5l2 1l2 2l2 -2l2 2l2 -5l2 -1l2 1l2 1l2 10l2 -5l2 -3l2 -4l2 -3l2 3l2 -3l2 6l2 -8l2 6l2 -5l2 9l2 -6l2 8l2 -4l2 -4l2 9l2 2l2 -9l2 -13l2 9l2 1l2 11l2 0l2 -9l2 1l2 -2l2 5l2 12l2 -5l2 -2l2 -2l2 -2l2 3l2 -7l2 11l2 -5l2 5l2 8l2 -5l2 0l2 5l2 -9l2 12l2 3l2 -8l2 -5l2 -4l2 -7l2 9l2 -5l2 4l2 0l2 -5l2 -8l2 10l2 5l2 -4l2 1l2 1l2 -6l2 0l2 0l2 8l2 3l2 -4l2 -6l2 11l2 2l2 -5l2 4l2 -5l2 0l2 0l2 10l2 -12l2 0l2 -2l2 1l2 4l2 1l2 -20l2 2l2 -3l2 2l2 6l2 6l2 5l2 -5l2 3l2 6l2 -5l2 -5l2 1l2 -4l2 -3l2 10l2 0l2 3l2 2l2 0l2 7l2 -1l2 2l2 11l2 -12l2 6l2 -10l2 0l2 -3l2 -3l2 0l2 6l2 2l2 5l2 -4l2 -15l2 -4l2 3l2 -9l2 4l2 10l2 -6l2 2l2 9l2 0l2 6l2 -10l2 -4l2 19l2 1l2 -14l2 -2l2 -1l2 -1l2 -6l2 -8l2 -1l2 3l2 17l2 5l2 -4l2 -10l2 15l2 2l2 1l2 6l2 -18l2 7l2 4l2 10l2 -10l2 -26l2 -6l2 9l2 8l2 8l2 -12l2 3l2 12l2 4l2 1l2 11l2 -2l2 -7l2 -11l2 -4l2 -27l2 12l2 5l2 17l2 -6l2 -8l2 -4l2 6l2 0l2 6l2 10l2 6l2 -10l2 0l2 -4l2 -8l2 -3l2 8l2 -11l2 16l2 -18l2 5l2 -7l2 20l2 -9l2 -16l2 13l2 3l2 0l2 11l2 -8l2 -5l2 23l2 -3l2 1l2 -11l2 -2l2 -7l2 -3l2 5l2 -2l2 9l2 -5l2 -2l2 -5l2 2l2 -3l2 -16l2 -3l2 4l2 4l2 11l2 10l2 0l2 8l2 -15l2 9l2 -19l2 11l2 -7l2 -4l2 11l2 -6l2 0l2 0l2 -3l2 6l2 -15l2 2l2 18l2 -14l2 -1l2 0l2 -7l2 8l2 4l2 12l2 -1l2 -5l2 21l2 2l2 -13l2 -1l2 -6l2 -9l2 -2l2 11l2 10l2 -8l2 -9l2 7l2 6l2 19l2 4l2 11l2 -7l2 0l2 -10l2 4l2 -8l2 1l2 -2l2 -4l2 -9l2 5l2 -8l2 6l2 4l2 -12l2 -14l2 21l2 2l2 0l2 -18l2 10l2 -10l2 22l2 -11l2 3l2 -10l2 0l2 5l2 -16l2 1l2 12l2 -13l2 0l2 2l2 10l2 7l2 -2l2 5l2 5l2 -3l2 -2l2 -4l2 7l2 -4l2 0l2 0l2 1l2 16l2 -15l2 8l2 -14l2 3l2 3l2 -5l2 3l2 -10l2 18l2 -1l2 5l2 -2l2 -12l2 9l2 -6l2 2l2 -6l2 1l2 -6l2 7l2 19l2 -3l2 -8l2 -13l2 9l2 -12l2 -11l2 10l2 -1l2 8l2 3l2 -1l2 3l2 1l2 1l2 0l2 -3l2 -18l2 0l2 -3l2 11l2 -10l2 -4l2 -4l2 14l2 5l2 8l2 -22l2 7M388 698l2 1l2 4l2 -2l2 4l2 3l2 -5l2 2l2 -5l2 4l2 -3l2 5l2 5l2 0l2 -1l2 -3l2 4l2 -5l2 9l2 0l2 -7l2 3l2 -2l2 1l2 -6l2 1l2 -5l2 8l2 -3l2 -2l2 5l2 -6l2 -4l2 8l2 -15l2 3l2 4l2 5l2 -7l2 3l2 11l2 -7l2 3l2 -5l2 2l2 4l2 -1l2 2l2 -5l2 -7l2 6l2 8l2 -5l2 -4l2 -5l2 4l2 -2l2 3l2 -2l2 -9l2 7l2 5l2 12l2 -16l2 0l2 2l2 1l2 0l2 -2l2 3l2 -7l2 -1l2 8l2 -5l2 5l2 -14l2 4l2 5l2 4l2 -6l2 9l2 0l2 5l2 6l2 4l2 -8l2 -8l2 -1l2 6l2 -7l2 -1l2 -7l2 3l2 3l2 -1l2 -3l2 10l2 -4l2 -3l2 -7l2 9l2 4l2 5l2 -9l2 3l2 9l2 -4l2 -4l2 5l2 -8l2 -6l2 7l2 -11l2 3l2 -4l2 -7l2 10l2 3l2 6l2 6l2 -14l2 0l2 6l2 6l2 -12l2 3l2 -15l2 14l2 5l2 13l2 -5l2 5l2 -6l2 2l2 -1l2 7l2 -1l2 -15l2 14l2 -3l2 -5l2 5l2 -4l2 -4l2 2l2 -2l2 -14l2 -3l2 12l2 4l2 -7l2 3l2 -1l2 1l2 1l2 -6l2 6l2 -11l2 5l2 -6l2 8l2 8l2 -2l2 1l2 -14l2 13l2 -3l2 7l2 -12l2 0l2 9l2 -2l2 -4l2 -5l2 14l2 -3l2 7l2 12l2 -9l2 -1l2 -8l2 14l2 -16l2 10l2 2l2 -9l2 -3l2 1l2 -3l2 -12l2 5l2 4l2 19l2 -23l2 -2l2 -1l2 -6l2 16l2 -7l2 -6l2 13l2 -4l2 -5l2 0l2 12l2 10l2 -4l2 -14l2 -5l2 10l2 2l2 4l2 10l2 -3l2 -8l2 1l2 14l2 0l2 -9l2 -1l2 11l2 -22l2 15l2 19l2 -11l2 -4l2 0l2 -15l2 0l2 -3l2 9l2 -7l2 5l2 8l2 -6l2 -6l2 -9l2 -1l2 20l2 -4l2 7l2 -15l2 -4l2 -11l2 5l2 7l2 -8l2 -15l2 -14l2 3l2 1l2 16l2 2l2 7l2 -1l2 5l2 -14l2 9l2 -19l2 19l2 12l2 -6l2 5l2 -20l2 -1l2 8l2 11l2 6l2 -4l2 2l2 -3l2 -13l2 9l2 4l2 -7l2 -4l2 -2l2 6l2 4l2 4l2 3l2 -12l2 9l2 -12l2 0l2 -4l2 10l2 12l2 1l2 1l2 -7l2 -11l2 -4l2 -4l2 -2l2 1l2 2l2 10l2 4l2 0l2 1l2 -2l2 8l2 10l2 -9l2 -16l2 5l2 6l2 -2l2 4l2 -4l2 6l2 -7l2 -4l2 10l2 -6l2 -6l2 -2l2 16l2 -10l2 3l2 5l2 -8l2 22l2 -23l2 1l2 1l2 -9l2 -5l2 12l2 10l2 -11l2 -1l2 9l2 8l2 -6l2 4l2 -12l2 12l2 -8l2 9l2 -19l2 -1l2 -1l2 -13l2 11l2 10l2 7l2 -1l2 -10l2 15l2 -8l2 -9l2 15l2 4l2 -7l2 -1l2 8l2 16l2 -11l2 -12l2 13l2 -11l2 -11l2 8l2 -23l2 12l2 6l2 6l2 10l2 -5l2 -12l2 -5l2 9l2 -14l2 -7l2 -8l2 18l2 9l2 9M388 703l2 8l2 -7l2 1l2 -1l2 -7l2 -4l2 6l2 -2l2 -3l2 -1l2 -6l2 8l2 13l2 3l2 -1l2 -5l2 -4l2 5l2 -15l2 7l2 -2l2 2l2 8l2 1l2 -7l2 -6l2 -2l2 4l2 -8l2 5l2 12l2 -8l2 -6l2 3l2 -2l2 14l2 -7l2 1l2 -3l2 -2l2 -4l2 1l2 8l2 -7l2 8l2 3l2 -4l2 0l2 -5l2 1l2 9l2 -3l2 -9l2 2l2 3l2 -6l2 12l2 -3l2 -2l2 6l2 10l2 -4l2 1l2 -3l2 -1l2 -11l2 -6l2 5l2 2l2 -7l2 8l2 0l2 6l2 -1l2 -2l2 3l2 0l2 -5l2 8l2 -5l2 2l2 1l2 -6l2 -9l2 10l2 0l2 -7l2 0l2 4l2 7l2 -2l2 -5l2 -3l2 1l2 5l2 -6l2 -7l2 3l2 -3l2 -6l2 3l2 5l2 -5l2 3l2 -7l2 2l2 -6l2 2l2 1l2 -9l2 2l2 -9l2 -3l2 4l2 -8l2 -2l2 -12l2 1l2 2l2 -11l2 -12l2 1l2 1l2 7l2 5l2 -14l2 -6l2 7l2 -14l2 3l2 5l2 -6l2 -3l2 -14l2 -4l2 3l2 -3l2 1l2 9l2 3l2 -1l2 0l2 -9l2 -6l2 4l2 0l2 4l2 -1l2 6l2 12l2 3l2 1l2 2l2 -1l2 11l2 -4l2 -11l2 0l2 18l2 6l2 4l2 -1l2 6l2 1l2 -4l2 -2l2 22l2 1l2 13l2 -20l2 -10l2 11l2 7l2 22l2 7l2 -8l2 7l2 -8l2 11l2 -15l2 1l2 6l2 -5l2 -16l2 15l2 -10l2 -9l2 18l2 -13l2 6l2 11l2 -3l2 20l2 1l2 -9l2 -3l2 9l2 -11l2 -6l2 4l2 8l2 -4l2 2l2 -19l2 -3l2 1l2 5l2 13l2 9l2 -9l2 4l2 -8l2 -19l2 5l2 -8l2 28l2 7l2 7l2 4l2 7l2 -19l2 -1l2 -11l2 6l2 1l2 -4l2 2l2 3l2 -7l2 -10l2 -3l2 6l2 5l2 4l2 14l2 -9l2 15l2 0l2 1l2 6l2 -10l2 -3l2 7l2 15l2 -15l2 -17l2 -9l2 12l2 -28l2 27l2 8l2 -11l2 0l2 -12l2 10l2 1l2 2l2 10l2 6l2 12l2 2l2 -7l2 -5l2 18l2 -7l2 0l2 5l2 -8l2 -5l2 4l2 -9l2 -5l2 -16l2 16l2 -8l2 11l2 -7l2 6l2 -6l2 11l2 -1l2 1l2 5l2 -5l2 6l2 -1l2 -6l2 3l2 -11l2 -5l2 15l2 2l2 -2l2 -4l2 -10l2 4l2 -2l2 -11l2 -2l2 -3l2 12l2 7l2 9l2 4l2 7l2 -1l2 -2l2 -7l2 17l2 -24l2 13l2 -5l2 -3l2 -7l2 0l2 6l2 -9l2 -5l2 5l2 12l2 -11l2 -5l2 -6l2 2l2 -14l2 2l2 -4l2 19l2 -12l2 2l2 -7l2 15l2 9l2 -4l2 6l2 -26l2 5l2 5l2 -4l2 18l2 10l2 -5l2 -15l2 4l2 -1l2 3l2 -7l2 9l2 3l2 -4l2 -7l2 17l2 -18l2 15l2 2l2 -3l2 -23l2 -14l2 13l2 -9l2 20l2 14l2 -13l2 11l2 -29l2 9l2 -8l2 -13l2 18l2 14l2 -7l2 6l2 13l2 -19l2 8l2 -15l2 11l2 9l2 1M388 699l2 -1l2 1l2 11l2 -3l2 -6l2 2l2 -1l2 6l2 -7l2 -5l2 -3l2 3l2 8l2 -9l2 9l2 3l2 3l2 -1l2 -4l2 -3l2 -9l2 6l2 -9l2 -13l2 2l2 7l2 2l2 10l2 1l2 2l2 -12l2 3l2 7l2 4l2 -8l2 6l2 -4l2 2l2 7l2 -1l2 5l2 -1l2 -9l2 0l2 -4l2 9l2 -3l2 4l2 -6l2 0l2 0l2 -10l2 10l2 -3l2 -4l2 7l2 4l2 5l2 -5l2 -3l2 0l2 -7l2 -1l2 0l2 -5l2 -3l2 -8l2 1l2 3l2 7l2 11l2 -4l2 5l2 -1l2 -4l2 0l2 5l2 -3l2 -6l2 7l2 -2l2 -4l2 5l2 0l2 5l2 -11l2 0l2 -6l2 -2l2 3l2 -1l2 18l2 -2l2 -4l2 2l2 -2l2 2l2 -10l2 -1l2 13l2 -10l2 6l2 6l2 1l2 -15l2 5l2 -4l2 7l2 1l2 -3l2 5l2 -11l2 4l2 1l2 2l2 4l2 6l2 -2l2 -5l2 -9l2 -6l2 1l2 1l2 7l2 9l2 -5l2 -4l2 8l2 3l2 -7l2 7l2 -5l2 1l2 -6l2 1l2 7l2 -9l2 15l2 -13l2 -4l2 1l2 11l2 -4l2 10l2 -12l2 9l2 -4l2 -6l2 8l2 -2l2 -1l2 7l2 8l2 5l2 6l2 -7l2 -2l2 -5l2 2l2 5l2 -8l2 4l2 -1l2 -14l2 0l2 2l2 -13l2 9l2 4l2 8l2 -1l2 -9l2 -8l2 4l2 13l2 -18l2 0l2 -16l2 25l2 -1l2 7l2 -10l2 -22l2 -6l2 1l2 8l2 1l2 25l2 18l2 -15l2 3l2 -4l2 3l2 -2l2 -17l2 -2l2 5l2 11l2 12l2 -18l2 3l2 2l2 0l2 -6l2 10l2 -13l2 -2l2 -2l2 -11l2 12l2 7l2 -8l2 -12l2 -6l2 2l2 -4l2 1l2 3l2 -6l2 2l2 -12l2 0l2 1l2 3l2 -7l2 1l2 9l2 3l2 -8l2 -13l2 9l2 7l2 5l2 -3l2 24l2 -7l2 -13l2 7l2 1l2 8l2 12l2 2l2 -2l2 -14l2 4l2 8l2 3l2 10l2 13l2 4l2 -4l2 -18l2 16l2 3l2 -5l2 -20l2 14l2 -2l2 3l2 6l2 -11l2 3l2 7l2 -10l2 3l2 -5l2 -5l2 -3l2 0l2 -13l2 10l2 1l2 5l2 -27l2 13l2 8l2 1l2 -10l2 5l2 -9l2 3l2 9l2 2l2 -13l2 -8l2 13l2 -2l2 -5l2 4l2 6l2 0l2 9l2 -4l2 6l2 -4l2 8l2 -1l2 11l2 -9l2 -13l2 -8l2 19l2 7l2 4l2 0l2 -19l2 -6l2 2l2 -8l2 3l2 5l2 -10l2 5l2 5l2 -2l2 -8l2 15l2 6l2 -8l2 -4l2 -20l2 32l2 7l2 -17l2 -12l2 -4l2 14l2 2l2 2l2 -11l2 8l2 3l2 0l2 -13l2 5l2 4l2 3l2 0l2 3l2 6l2 -10l2 -14l2 1l2 6l2 -9l2 13l2 -11l2 -6l2 13l2 6l2 -4l2 2l2 -6l2 -5l2 0l2 -4l2 2l2 6l2 -2l2 -6l2 -1l2 -11l2 18l2 9l2 8l2 -7l2 2l2 -7l2 1l2 -9l2 5l2 -7l2 24l2 -12l2 -12l2 -1l2 21l2 -2l2 -12M388 701l2 6l2 5l2 1l2 -7l2 -2l2 6l2 -10l2 -2l2 9l2 4l2 5l2 -4l2 -3l2 12l2 -1l2 -6l2 2l2 2l2 -21l2 -1l2 6l2 -2l2 -3l2 2l2 4l2 -4l2 -8l2 1l2 11l2 11l2 -19l2 2l2 -1l2 13l2 -12l2 11l2 -2l2 -2l2 4l2 -9l2 -3l2 7l2 4l2 -5l2 -3l2 0l2 8l2 -4l2 4l2 3l2 -1l2 9l2 -14l2 2l2 -1l2 -1l2 2l2 -4l2 3l2 9l2 4l2 -10l2 12l2 -2l2 -5l2 7l2 8l2 -7l2 -3l2 7l2 -7l2 8l2 -12l2 0l2 17l2 -5l2 -6l2 -5l2 -4l2 -2l2 2l2 -2l2 -10l2 5l2 -2l2 6l2 -1l2 6l2 6l2 -7l2 1l2 -7l2 -9l2 10l2 -2l2 1l2 4l2 -5l2 3l2 -2l2 3l2 1l2 -1l2 0l2 4l2 1l2 4l2 -4l2 -6l2 -2l2 -1l2 -2l2 -2l2 -4l2 7l2 0l2 16l2 -2l2 -3l2 -8l2 -3l2 12l2 1l2 -7l2 10l2 4l2 -6l2 -9l2 -3l2 6l2 8l2 0l2 -2l2 -3l2 -14l2 15l2 4l2 17l2 10l2 -1l2 2l2 -10l2 -10l2 -3l2 -4l2 7l2 -8l2 12l2 -1l2 2l2 3l2 -5l2 6l2 -10l2 -6l2 6l2 -9l2 11l2 12l2 -6l2 -14l2 4l2 -2l2 5l2 -18l2 4l2 -14l2 15l2 8l2 -13l2 2l2 6l2 3l2 -9l2 0l2 6l2 -5l2 -2l2 12l2 -17l2 12l2 -2l2 -10l2 -3l2 -7l2 10l2 -10l2 10l2 8l2 1l2 -1l2 -18l2 12l2 2l2 6l2 8l2 -9l2 -12l2 7l2 -5l2 1l2 -11l2 10l2 -9l2 15l2 7l2 -18l2 -13l2 6l2 3l2 16l2 -13l2 1l2 7l2 4l2 -12l2 3l2 3l2 -3l2 0l2 15l2 -8l2 -2l2 -8l2 -7l2 3l2 -17l2 0l2 9l2 -3l2 4l2 -12l2 5l2 -9l2 12l2 1l2 4l2 5l2 -10l2 -1l2 -4l2 -4l2 2l2 11l2 2l2 1l2 -8l2 6l2 -2l2 -5l2 6l2 -21l2 18l2 11l2 -6l2 9l2 -7l2 -5l2 10l2 -17l2 -3l2 -4l2 6l2 -5l2 0l2 20l2 -6l2 -9l2 -2l2 -10l2 2l2 -1l2 11l2 5l2 6l2 -2l2 -6l2 -4l2 -1l2 -7l2 11l2 -3l2 -7l2 9l2 4l2 2l2 12l2 0l2 15l2 -20l2 10l2 -13l2 5l2 -2l2 -7l2 4l2 7l2 9l2 -16l2 -6l2 5l2 11l2 12l2 -6l2 -11l2 -10l2 0l2 -1l2 -8l2 13l2 6l2 -3l2 -12l2 25l2 5l2 8l2 -3l2 -11l2 -12l2 19l2 -3l2 3l2 -6l2 7l2 -15l2 2l2 -2l2 -1l2 -4l2 7l2 -2l2 7l2 2l2 -11l2 -7l2 -8l2 15l2 2l2 -2l2 13l2 3l2 2l2 -9l2 7l2 -11l2 -18l2 1l2 9l2 -5l2 7l2 6l2 17l2 -5l2 -2l2 -10l2 -9l2 16l2 -19l2 15l2 -15l2 1l2 -4l2 5l2 -3l2 -3l2 22l2 4l2 -7l2 -12l2 1l2 13l2 3l2 -14l2 8l2 -5l2 9l2 -3l2 -6l2 2M388 694l2 9l2 0l2 4l2 -1l2 2l2 -4l2 -4l2 5l2 -3l2 -1l2 1l2 3l2 -9l2 5l2 4l2 -11l2 -7l2 6l2 6l2 -8l2 11l2 7l2 -4l2 1l2 5l2 -1l2 -4l2 0l2 -5l2 8l2 -4l2 1l2 -8l2 0l2 7l2 -13l2 -3l2 10l2 -1l2 -1l2 1l2 2l2 -7l2 5l2 1l2 8l2 6l2 -4l2 -6l2 -1l2 -8l2 1l2 2l2 9l2 1l2 2l2 1l2 1l2 -12l2 -7l2 6l2 1l2 1l2 2l2 3l2 -11l2 2l2 -1l2 13l2 -8l2 -8l2 12l2 5l2 3l2 -10l2 7l2 -4l2 -6l2 0l2 8l2 0l2 -8l2 4l2 -3l2 4l2 -1l2 8l2 7l2 -14l2 2l2 -1l2 -16l2 -3l2 7l2 9l2 -3l2 -6l2 1l2 -2l2 -2l2 -2l2 -7l2 -2l2 1l2 2l2 -2l2 -19l2 -6l2 -1l2 1l2 8l2 -2l2 -17l2 -18l2 4l2 -3l2 -5l2 -17l2 -14l2 -8l2 4l2 -3l2 -1l2 2l2 -12l2 -4l2 -9l2 -12l2 9l2 -2l2 0l2 -6l2 -5l2 9l2 2l2 -3l2 -3l2 0l2 -2l2 10l2 -7l2 7l2 -4l2 6l2 5l2 6l2 4l2 -4l2 11l2 16l2 4l2 12l2 5l2 6l2 -2l2 10l2 5l2 3l2 -4l2 3l2 11l2 10l2 5l2 3l2 2l2 -2l2 -8l2 2l2 17l2 1l2 5l2 -1l2 -9l2 -2l2 -13l2 21l2 2l2 4l2 -4l2 6l2 16l2 4l2 0l2 8l2 1l2 -12l2 -9l2 26l2 -16l2 -8l2 2l2 0l2 -8l2 8l2 4l2 11l2 -4l2 -1l2 12l2 -1l2 9l2 -7l2 -2l2 -23l2 0l2 -2l2 -5l2 6l2 11l2 -18l2 5l2 -4l2 2l2 14l2 -6l2 -5l2 -9l2 0l2 1l2 13l2 -5l2 4l2 -2l2 -15l2 13l2 -8l2 3l2 -4l2 -16l2 8l2 -12l2 -1l2 15l2 0l2 -13l2 8l2 7l2 14l2 -4l2 -4l2 14l2 -12l2 4l2 3l2 -4l2 -9l2 5l2 -1l2 -5l2 4l2 -14l2 6l2 0l2 -9l2 7l2 -13l2 2l2 6l2 5l2 0l2 -9l2 6l2 9l2 2l2 1l2 -4l2 -10l2 2l2 24l2 -7l2 -20l2 3l2 2l2 3l2 0l2 11l2 -14l2 16l2 -9l2 4l2 10l2 -10l2 -5l2 -1l2 18l2 -8l2 -4l2 -16l2 4l2 3l2 -2l2 17l2 8l2 -16l2 9l2 -13l2 -8l2 20l2 6l2 7l2 -6l2 -12l2 -11l2 2l2 7l2 3l2 11l2 2l2 -4l2 -15l2 -13l2 6l2 -6l2 5l2 18l2 7l2 -20l2 13l2 -9l2 -2l2 1l2 6l2 4l2 10l2 1l2 -4l2 -8l2 -11l2 10l2 21l2 -3l2 -1l2 -15l2 4l2 6l2 -4l2 -1l2 -4l2 9l2 -15l2 1l2 -6l2 5l2 25l2 -13l2 -4l2 13l2 9l2 -10l2 7l2 -5l2 -14l2 -11l2 11l2 1l2 -4l2 -10l2 -19l2 10l2 -3l2 2l2 11l2 -15l2 12l2 -1l2 15l2 -8l2 -7l2 -2l2 -18l2 22l2 0l2 -14l2 13l2 -9l2 0l2 -14l2 13l2 11M388 698l2 8l2 -2l2 3l2 0l2 0l2 1l2 9l2 0l2 -11l2 2l2 0l2 3l2 -2l2 -3l2 13l2 -5l2 0l2 -18l2 2l2 -4l2 -5l2 5l2 0l2 4l2 -4l2 2l2 1l2 3l2 -7l2 2l2 6l2 4l2 -3l2 0l2 -1l2 -10l2 -8l2 9l2 2l2 2l2 10l2 1l2 -5l2 -6l2 0l2 0l2 -2l2 6l2 0l2 2l2 -3l2 -2l2 -8l2 12l2 6l2 7l2 -3l2 3l2 -6l2 7l2 -9l2 -1l2 2l2 -1l2 -5l2 4l2 5l2 3l2 3l2 2l2 -9l2 0l2 7l2 0l2 -2l2 -3l2 -1l2 4l2 4l2 -8l2 -5l2 -5l2 3l2 -4l2 -3l2 5l2 0l2 -9l2 15l2 -2l2 -8l2 8l2 3l2 12l2 -14l2 -6l2 -2l2 2l2 -7l2 4l2 4l2 -8l2 3l2 -6l2 -9l2 6l2 3l2 6l2 -2l2 9l2 -5l2 -1l2 -6l2 -4l2 6l2 -5l2 -1l2 1l2 0l2 5l2 -3l2 -2l2 7l2 -1l2 -8l2 3l2 -2l2 5l2 6l2 -2l2 -16l2 0l2 -10l2 10l2 5l2 -10l2 11l2 -2l2 -8l2 3l2 0l2 1l2 1l2 6l2 4l2 6l2 -9l2 7l2 -1l2 -22l2 11l2 3l2 10l2 0l2 0l2 -6l2 3l2 7l2 2l2 -10l2 2l2 3l2 -10l2 5l2 10l2 0l2 -2l2 -2l2 4l2 -1l2 -17l2 -6l2 10l2 1l2 7l2 -12l2 15l2 1l2 -6l2 -13l2 13l2 13l2 -15l2 -9l2 3l2 -1l2 -2l2 12l2 -3l2 -6l2 -9l2 6l2 -2l2 0l2 10l2 5l2 -3l2 -15l2 12l2 1l2 -14l2 8l2 13l2 4l2 -8l2 -8l2 -1l2 6l2 -15l2 2l2 2l2 -4l2 -8l2 16l2 -1l2 9l2 15l2 1l2 -6l2 4l2 -6l2 -15l2 -18l2 7l2 2l2 1l2 1l2 -2l2 1l2 16l2 -22l2 5l2 -19l2 23l2 -8l2 11l2 17l2 -5l2 7l2 5l2 -16l2 9l2 -12l2 15l2 -3l2 -4l2 -3l2 7l2 15l2 2l2 -6l2 11l2 9l2 7l2 -18l2 1l2 -15l2 0l2 0l2 0l2 17l2 -27l2 -2l2 -3l2 5l2 18l2 -6l2 -8l2 -2l2 -3l2 16l2 -2l2 -4l2 12l2 -16l2 2l2 -13l2 12l2 3l2 9l2 -3l2 -1l2 -1l2 0l2 14l2 0l2 -10l2 2l2 3l2 -3l2 -22l2 -4l2 -1l2 6l2 0l2 4l2 4l2 -5l2 -11l2 10l2 16l2 -15l2 -16l2 12l2 19l2 1l2 6l2 -13l2 3l2 5l2 -3l2 -10l2 8l2 -9l2 1l2 0l2 -12l2 -2l2 12l2 -11l2 21l2 -1l2 -6l2 2l2 -1l2 12l2 -8l2 3l2 -1l2 2l2 9l2 -9l2 4l2 1l2 10l2 -25l2 -3l2 -10l2 4l2 -19l2 -6l2 5l2 -9l2 8l2 11l2 5l2 -1l2 4l2 -8l2 -9l2 22l2 -8l2 11l2 10l2 -13l2 0l2 -14l2 8l2 -7l2 -12l2 11l2 15l2 11l2 5l2 -1l2 0l2 -4l2 5l2 -2l2 15l2 -23l2 -15l2 7l2 6l2 -2l2 11l2 -28l2 12l2 9M388 704l2 -9l2 7l2 2l2 1l2 9l2 -8l2 -5l2 -1l2 8l2 -3l2 -8l2 3l2 3l2 -1l2 6l2 -1l2 4l2 -6l2 8l2 -1l2 -10l2 -10l2 6l2 7l2 -9l2 -2l2 5l2 3l2 1l2 8l2 -7l2 -12l2 1l2 20l2 -3l2 -3l2 0l2 -2l2 5l2 -10l2 5l2 -3l2 -5l2 -1l2 3l2 1l2 3l2 0l2 2l2 3l2 9l2 -7l2 -3l2 -4l2 7l2 0l2 -5l2 5l2 -15l2 3l2 2l2 2l2 5l2 4l2 -3l2 4l2 -8l2 1l2 -1l2 6l2 -10l2 4l2 -3l2 11l2 -3l2 -7l2 -6l2 6l2 8l2 -6l2 -1l2 4l2 -5l2 -3l2 -1l2 7l2 8l2 2l2 5l2 -4l2 0l2 3l2 4l2 -1l2 -9l2 2l2 0l2 10l2 -16l2 2l2 4l2 2l2 -8l2 1l2 9l2 -6l2 0l2 -3l2 -3l2 -14l2 5l2 2l2 4l2 -8l2 7l2 14l2 2l2 3l2 -6l2 -4l2 -3l2 6l2 -3l2 -5l2 8l2 5l2 8l2 -3l2 2l2 -18l2 1l2 -1l2 -5l2 5l2 0l2 -8l2 8l2 -4l2 5l2 3l2 -7l2 1l2 1l2 5l2 -4l2 2l2 9l2 2l2 -4l2 -7l2 -1l2 7l2 -2l2 -13l2 3l2 1l2 7l2 -5l2 -11l2 11l2 -2l2 -3l2 7l2 4l2 -5l2 -19l2 14l2 -3l2 -6l2 6l2 5l2 -7l2 -6l2 -2l2 2l2 4l2 -1l2 1l2 -3l2 1l2 -2l2 14l2 12l2 -8l2 11l2 -9l2 -9l2 10l2 -14l2 26l2 -6l2 -9l2 5l2 -4l2 -4l2 -22l2 8l2 12l2 1l2 2l2 -5l2 5l2 -7l2 -1l2 1l2 -18l2 17l2 -6l2 6l2 12l2 12l2 -6l2 2l2 9l2 -26l2 4l2 3l2 12l2 2l2 2l2 -7l2 -12l2 -5l2 -6l2 10l2 -4l2 2l2 -2l2 10l2 -1l2 0l2 3l2 0l2 -12l2 -8l2 3l2 -3l2 14l2 -6l2 21l2 -5l2 -11l2 -12l2 15l2 -5l2 -5l2 -13l2 6l2 24l2 1l2 -9l2 -5l2 -9l2 2l2 15l2 -15l2 -1l2 4l2 -13l2 10l2 16l2 -10l2 -13l2 13l2 21l2 -10l2 6l2 -2l2 -2l2 -10l2 -9l2 -4l2 7l2 -5l2 -1l2 -4l2 20l2 -5l2 -5l2 -4l2 11l2 -1l2 -25l2 10l2 2l2 3l2 11l2 3l2 10l2 6l2 -14l2 5l2 -12l2 -14l2 15l2 -1l2 -5l2 -1l2 -7l2 3l2 15l2 0l2 -12l2 7l2 -5l2 -4l2 -5l2 -2l2 1l2 3l2 -12l2 13l2 7l2 5l2 -5l2 -11l2 -6l2 13l2 -15l2 11l2 -5l2 -4l2 9l2 -18l2 -4l2 11l2 -3l2 16l2 2l2 2l2 10l2 -5l2 10l2 -19l2 2l2 2l2 -8l2 21l2 -15l2 -4l2 -3l2 7l2 -5l2 -8l2 2l2 -9l2 9l2 -6l2 4l2 -3l2 -7l2 2l2 19l2 4l2 -9l2 -1l2 -8l2 29l2 -27l2 7l2 10l2 -11l2 -9l2 3l2 24l2 -1l2 5l2 3l2 -13l2 5l2 2l2 -19l2 12l2 -3l2 -7l2 -5l2 5l2 2l2 4M388 706l2 -3l2 -14l2 9l2 -5l2 5l2 1l2 2l2 12l2 -9l2 -1l2 -1l2 -2l2 -9l2 14l2 -5l2 1l2 3l2 3l2 -1l2 -8l2 3l2 3l2 5l2 -6l2 6l2 -9l2 -5l2 6l2 -8l2 13l2 -6l2 -2l2 -4l2 6l2 8l2 -10l2 -4l2 11l2 -3l2 -6l2 -5l2 11l2 -10l2 -2l2 2l2 14l2 -2l2 -5l2 -5l2 -2l2 -1l2 6l2 2l2 -4l2 -8l2 6l2 0l2 -3l2 -2l2 4l2 6l2 -2l2 5l2 -11l2 7l2 1l2 1l2 5l2 -7l2 -8l2 1l2 5l2 -4l2 5l2 4l2 4l2 -3l2 -3l2 0l2 2l2 7l2 -8l2 -2l2 -9l2 0l2 11l2 -10l2 9l2 -7l2 7l2 4l2 -2l2 -5l2 -3l2 3l2 -2l2 2l2 2l2 -9l2 3l2 21l2 -4l2 -4l2 -12l2 -4l2 10l2 2l2 5l2 -16l2 4l2 -6l2 -2l2 -1l2 5l2 -1l2 -6l2 5l2 3l2 1l2 10l2 -12l2 -3l2 -9l2 -2l2 -2l2 -2l2 -5l2 -3l2 -3l2 -6l2 -5l2 -8l2 8l2 1l2 -3l2 -17l2 -6l2 -3l2 -1l2 -8l2 -17l2 2l2 -5l2 -3l2 5l2 -2l2 2l2 6l2 1l2 -1l2 -6l2 -3l2 7l2 -3l2 -1l2 3l2 11l2 -10l2 16l2 0l2 -2l2 8l2 -3l2 20l2 6l2 -4l2 9l2 2l2 9l2 8l2 -1l2 5l2 -1l2 15l2 -11l2 -17l2 18l2 14l2 2l2 -21l2 4l2 4l2 0l2 -3l2 8l2 -6l2 1l2 7l2 6l2 18l2 10l2 -2l2 -4l2 1l2 -14l2 10l2 -4l2 -3l2 -10l2 -5l2 -12l2 1l2 12l2 17l2 3l2 5l2 1l2 -6l2 -8l2 -5l2 1l2 12l2 -1l2 -7l2 15l2 -4l2 5l2 -7l2 -11l2 0l2 -19l2 9l2 1l2 -1l2 15l2 -2l2 2l2 -3l2 4l2 -6l2 -12l2 4l2 15l2 -18l2 -9l2 17l2 -2l2 -9l2 -5l2 8l2 -2l2 -9l2 12l2 -1l2 6l2 14l2 12l2 0l2 -12l2 -23l2 29l2 -12l2 -14l2 6l2 0l2 0l2 9l2 -13l2 1l2 12l2 -4l2 -6l2 -9l2 8l2 -6l2 -1l2 12l2 10l2 -6l2 1l2 -3l2 1l2 9l2 -5l2 -5l2 -9l2 -5l2 -3l2 15l2 -6l2 2l2 -12l2 -4l2 14l2 3l2 -18l2 4l2 11l2 1l2 -8l2 -11l2 -4l2 3l2 -5l2 6l2 14l2 8l2 -1l2 -7l2 0l2 4l2 17l2 -8l2 8l2 -9l2 -6l2 -15l2 7l2 -25l2 24l2 14l2 -8l2 -7l2 -2l2 15l2 3l2 -18l2 9l2 3l2 8l2 8l2 -9l2 -7l2 3l2 4l2 0l2 -1l2 6l2 3l2 -14l2 13l2 -5l2 3l2 -9l2 -13l2 -11l2 -20l2 17l2 0l2 -1l2 -3l2 25l2 -7l2 -9l2 21l2 12l2 -13l2 -2l2 12l2 -10l2 -4l2 13l2 -17l2 15l2 -6l2 -2l2 1l2 4l2 17l2 12l2 -16l2 8l2 -7l2 -9l2 -4l2 5l2 10l2 -20l2 12l2 -15l2 1l2 -15l2 10l2 12l2 -7l2 13l2 -18l2 -2l2 15M388 706l2 -8l2 13l2 -3l2 -11l2 6l2 2l2 3l2 -8l2 3l2 3l2 -2l2 3l2 3l2 -9l2 5l2 3l2 -1l2 0l2 -7l2 11l2 -6l2 5l2 9l2 -3l2 -11l2 -6l2 -2l2 1l2 -1l2 4l2 -1l2 -4l2 7l2 6l2 5l2 -5l2 -1l2 0l2 2l2 3l2 2l2 -3l2 3l2 -6l2 -6l2 -1l2 -2l2 0l2 6l2 -8l2 3l2 2l2 -4l2 7l2 -1l2 -7l2 3l2 6l2 -2l2 -3l2 3l2 2l2 3l2 -4l2 3l2 6l2 -3l2 -3l2 -5l2 -1l2 4l2 2l2 -6l2 12l2 3l2 1l2 -2l2 -1l2 -3l2 0l2 7l2 0l2 6l2 -1l2 -1l2 -3l2 -5l2 -2l2 -8l2 -11l2 -8l2 15l2 0l2 -2l2 11l2 -2l2 -7l2 6l2 -1l2 1l2 -4l2 2l2 -5l2 5l2 -7l2 4l2 1l2 0l2 4l2 -4l2 -2l2 1l2 3l2 7l2 -2l2 4l2 -1l2 -13l2 8l2 -7l2 -2l2 10l2 -2l2 -12l2 7l2 4l2 -12l2 -2l2 -2l2 -10l2 -2l2 2l2 7l2 -3l2 -7l2 -1l2 9l2 8l2 -7l2 7l2 1l2 1l2 -12l2 9l2 -2l2 -9l2 -2l2 7l2 -5l2 8l2 1l2 -8l2 -11l2 -12l2 11l2 14l2 5l2 -8l2 -5l2 12l2 -7l2 11l2 12l2 -11l2 9l2 -6l2 -1l2 -4l2 -9l2 -7l2 0l2 3l2 4l2 -15l2 23l2 12l2 -6l2 -3l2 4l2 -4l2 -5l2 7l2 -7l2 5l2 -2l2 -4l2 -5l2 22l2 -14l2 7l2 -8l2 14l2 -1l2 -4l2 0l2 -2l2 -11l2 0l2 -1l2 9l2 3l2 7l2 3l2 -3l2 -9l2 -1l2 -2l2 -13l2 24l2 -4l2 16l2 -1l2 -9l2 -12l2 -18l2 9l2 10l2 -1l2 2l2 14l2 0l2 -3l2 -15l2 13l2 -6l2 5l2 2l2 -5l2 -6l2 13l2 2l2 10l2 -9l2 0l2 8l2 -22l2 2l2 -9l2 -8l2 6l2 3l2 -16l2 10l2 10l2 -1l2 -8l2 5l2 10l2 -5l2 -11l2 15l2 4l2 -10l2 12l2 -10l2 -11l2 -11l2 30l2 -19l2 20l2 -6l2 6l2 0l2 1l2 -7l2 0l2 -5l2 3l2 -2l2 15l2 -16l2 -12l2 -6l2 12l2 2l2 -6l2 1l2 -2l2 3l2 7l2 4l2 6l2 -9l2 3l2 4l2 -7l2 1l2 5l2 -7l2 -3l2 -12l2 -4l2 -1l2 10l2 2l2 -2l2 -3l2 0l2 6l2 -7l2 0l2 -4l2 -7l2 3l2 11l2 -10l2 -5l2 -1l2 23l2 -7l2 -12l2 2l2 7l2 0l2 -11l2 20l2 3l2 -13l2 -10l2 -5l2 6l2 -10l2 9l2 -1l2 13l2 -15l2 1l2 26l2 11l2 -4l2 3l2 -13l2 20l2 -8l2 -3l2 -12l2 -6l2 6l2 7l2 -6l2 -16l2 -16l2 -1l2 27l2 10l2 7l2 6l2 -21l2 0l2 -10l2 16l2 3l2 -10l2 12l2 -2l2 5l2 -8l2 -18l2 -10l2 2l2 20l2 20l2 -7l2 5l2 5l2 -3l2 -14l2 3l2 -19l2 0l2 2l2 -24l2 21l2 7l2 -1l2 12l2 5l2 16l2 -7M388 710l2 -15l2 -3l2 16l2 -1l2 -10l2 1l2 10l2 2l2 10l2 -12l2 7l2 6l2 1l2 -10l2 -3l2 -1l2 -7l2 5l2 -1l2 -1l2 4l2 -4l2 1l2 4l2 -1l2 7l2 0l2 0l2 -14l2 -4l2 3l2 6l2 -6l2 -3l2 1l2 5l2 7l2 10l2 -7l2 5l2 -6l2 -8l2 17l2 -3l2 2l2 -1l2 -2l2 -11l2 -7l2 7l2 -8l2 -8l2 8l2 5l2 -7l2 -7l2 9l2 -2l2 3l2 -1l2 16l2 -8l2 -9l2 5l2 6l2 0l2 2l2 5l2 2l2 -3l2 4l2 -3l2 -20l2 -3l2 8l2 3l2 -11l2 -13l2 -5l2 9l2 9l2 4l2 -7l2 11l2 14l2 -6l2 -2l2 -5l2 1l2 2l2 -11l2 7l2 -5l2 4l2 0l2 -8l2 8l2 1l2 12l2 -3l2 -14l2 12l2 -2l2 -1l2 -2l2 -3l2 1l2 3l2 -7l2 -3l2 -3l2 6l2 4l2 -10l2 -7l2 3l2 6l2 6l2 -15l2 14l2 8l2 -1l2 2l2 1l2 -3l2 -11l2 -6l2 -3l2 7l2 1l2 10l2 -11l2 5l2 14l2 -17l2 3l2 0l2 -9l2 4l2 9l2 -2l2 8l2 -5l2 5l2 2l2 -3l2 -2l2 -7l2 -12l2 -11l2 4l2 -2l2 -3l2 5l2 20l2 0l2 10l2 6l2 -15l2 -10l2 11l2 1l2 2l2 2l2 -11l2 17l2 -5l2 -12l2 2l2 -11l2 -1l2 14l2 -7l2 -5l2 15l2 -2l2 -15l2 10l2 10l2 -3l2 13l2 0l2 -2l2 -1l2 -5l2 -9l2 -12l2 4l2 10l2 0l2 -2l2 -5l2 4l2 2l2 -10l2 3l2 3l2 10l2 6l2 -29l2 1l2 27l2 -1l2 4l2 1l2 -7l2 -15l2 8l2 6l2 -1l2 -2l2 -19l2 7l2 -7l2 -8l2 3l2 12l2 -1l2 16l2 -6l2 -14l2 -10l2 7l2 7l2 -19l2 -8l2 22l2 2l2 5l2 -16l2 1l2 4l2 -7l2 6l2 2l2 -16l2 21l2 -3l2 13l2 -13l2 11l2 7l2 14l2 -9l2 -23l2 4l2 8l2 3l2 16l2 -13l2 0l2 -7l2 2l2 13l2 -10l2 -1l2 0l2 11l2 -8l2 -9l2 -14l2 8l2 13l2 -3l2 18l2 13l2 -18l2 -8l2 7l2 -26l2 1l2 -4l2 -2l2 7l2 -1l2 1l2 8l2 9l2 2l2 -1l2 9l2 -3l2 -2l2 0l2 -2l2 -3l2 -6l2 21l2 -13l2 -7l2 7l2 8l2 -12l2 3l2 5l2 -4l2 2l2 9l2 1l2 8l2 -16l2 8l2 -22l2 7l2 6l2 -15l2 0l2 7l2 3l2 -16l2 12l2 -7l2 -10l2 1l2 10l2 7l2 18l2 -9l2 -4l2 4l2 3l2 9l2 -3l2 -5l2 -12l2 -2l2 14l2 -2l2 -8l2 6l2 -8l2 -4l2 4l2 3l2 -10l2 -3l2 1l2 12l2 -1l2 6l2 -17l2 10l2 -2l2 -8l2 12l2 1l2 -20l2 5l2 4l2 -14l2 4l2 0l2 12l2 -6l2 9l2 6l2 -5l2 3l2 7l2 -15l2 11l2 -1l2 -8l2 -3l2 12l2 25l2 6l2 -12l2 -13l2 4l2 -4l2 -11l2 3l2 -11l2 -9l2 21l2 -6l2 9l2 7M388 697l2 -8l2 -1l2 8l2 4l2 -1l2 -4l2 7l2 -2l2 4l2 -9l2 8l2 -8l2 -1l2 3l2 3l2 7l2 -5l2 2l2 -3l2 2l2 1l2 0l2 -3l2 -1l2 -7l2 9l2 6l2 -1l2 -6l2 0l2 7l2 -1l2 -6l2 -5l2 8l2 -4l2 -3l2 7l2 0l2 2l2 -9l2 -2l2 9l2 -5l2 -7l2 5l2 9l2 3l2 -8l2 3l2 1l2 3l2 -4l2 0l2 -6l2 15l2 0l2 -6l2 6l2 -14l2 0l2 -2l2 -9l2 9l2 5l2 2l2 -11l2 2l2 4l2 15l2 -9l2 1l2 2l2 2l2 -14l2 5l2 -1l2 -1l2 -4l2 -3l2 5l2 5l2 6l2 6l2 -12l2 3l2 -18l2 11l2 10l2 -15l2 -5l2 9l2 3l2 5l2 1l2 0l2 -2l2 -2l2 14l2 -12l2 -1l2 -1l2 -5l2 2l2 10l2 -2l2 0l2 -1l2 -1l2 -2l2 2l2 -4l2 3l2 -6l2 -5l2 8l2 15l2 2l2 -9l2 7l2 10l2 0l2 15l2 -2l2 -10l2 -6l2 1l2 5l2 -4l2 11l2 -1l2 0l2 1l2 -8l2 -6l2 14l2 3l2 1l2 15l2 -4l2 0l2 -6l2 6l2 -3l2 9l2 -14l2 6l2 10l2 -5l2 5l2 -5l2 -15l2 0l2 -6l2 3l2 3l2 -4l2 12l2 0l2 2l2 -4l2 1l2 -16l2 2l2 -4l2 -14l2 6l2 -1l2 -18l2 21l2 -12l2 3l2 4l2 10l2 2l2 -10l2 9l2 -10l2 -11l2 -11l2 -6l2 13l2 7l2 -6l2 0l2 -4l2 8l2 14l2 -19l2 3l2 -4l2 1l2 -8l2 5l2 10l2 1l2 3l2 -5l2 21l2 -10l2 -4l2 -31l2 11l2 -2l2 -3l2 3l2 -3l2 -12l2 4l2 10l2 -10l2 4l2 10l2 3l2 1l2 -20l2 14l2 -9l2 -9l2 -24l2 7l2 -6l2 -13l2 8l2 6l2 2l2 -6l2 7l2 -1l2 12l2 14l2 -11l2 1l2 -1l2 8l2 11l2 -2l2 -2l2 13l2 -5l2 -20l2 13l2 5l2 9l2 -13l2 0l2 -6l2 5l2 6l2 1l2 -22l2 14l2 -1l2 -24l2 29l2 7l2 -14l2 6l2 4l2 5l2 -3l2 -5l2 -5l2 -12l2 -5l2 11l2 0l2 15l2 5l2 6l2 9l2 -2l2 -3l2 2l2 -3l2 -5l2 -10l2 7l2 6l2 0l2 -16l2 -7l2 6l2 0l2 10l2 -14l2 -15l2 -6l2 23l2 15l2 3l2 9l2 -27l2 3l2 -9l2 2l2 -18l2 3l2 7l2 1l2 13l2 -5l2 2l2 -18l2 4l2 -12l2 11l2 13l2 9l2 -2l2 -12l2 15l2 8l2 -11l2 -8l2 15l2 -6l2 -6l2 -8l2 13l2 8l2 -17l2 7l2 2l2 1l2 0l2 17l2 -7l2 -4l2 7l2 17l2 -23l2 -15l2 4l2 -11l2 0l2 6l2 -7l2 14l2 12l2 -6l2 -7l2 -7l2 10l2 -16l2 5l2 5l2 18l2 1l2 -9l2 -8l2 14l2 -10l2 -6l2 4l2 -3l2 0l2 13l2 -9l2 -3l2 -2l2 10l2 3l2 -18l2 0l2 -3l2 4l2 -6l2 1l2 7l2 9l2 -31l2 10l2 24l2 -5l2 -13l2 9l2 15l2 -10M388 692l2 1l2 4l2 3l2 2l2 -3l2 12l2 -13l2 0l2 2l2 1l2 -4l2 -2l2 -2l2 -4l2 -6l2 4l2 9l2 2l2 -1l2 11l2 -5l2 -14l2 -4l2 5l2 -4l2 3l2 11l2 4l2 -6l2 -1l2 2l2 -3l2 7l2 11l2 -14l2 -9l2 7l2 0l2 8l2 0l2 3l2 3l2 -9l2 0l2 2l2 -4l2 7l2 7l2 -3l2 -6l2 5l2 10l2 3l2 -12l2 1l2 -3l2 1l2 -5l2 -6l2 -4l2 4l2 5l2 -11l2 -1l2 5l2 7l2 -1l2 5l2 -4l2 -1l2 -7l2 -2l2 -4l2 8l2 3l2 -3l2 0l2 3l2 3l2 -13l2 10l2 4l2 -10l2 8l2 -8l2 0l2 -3l2 -5l2 1l2 10l2 6l2 -4l2 -10l2 -1l2 2l2 0l2 1l2 3l2 2l2 0l2 -12l2 -3l2 9l2 -1l2 3l2 -1l2 -5l2 6l2 5l2 -5l2 -5l2 -5l2 7l2 -3l2 -6l2 1l2 -3l2 3l2 -8l2 -3l2 15l2 -3l2 -3l2 -2l2 0l2 13l2 10l2 -4l2 -11l2 -16l2 4l2 -6l2 12l2 -15l2 -8l2 4l2 -7l2 -5l2 7l2 3l2 -2l2 -9l2 9l2 -8l2 -3l2 4l2 7l2 6l2 -1l2 -9l2 8l2 13l2 8l2 -13l2 -5l2 7l2 5l2 12l2 -2l2 -15l2 1l2 -4l2 0l2 23l2 3l2 -15l2 3l2 12l2 3l2 -6l2 3l2 -22l2 -1l2 16l2 2l2 -7l2 0l2 5l2 13l2 1l2 -6l2 -4l2 4l2 -16l2 20l2 -3l2 0l2 0l2 -1l2 3l2 -6l2 -10l2 9l2 1l2 3l2 -2l2 7l2 -3l2 -8l2 18l2 -8l2 14l2 -20l2 1l2 -4l2 1l2 15l2 1l2 -19l2 1l2 -2l2 10l2 -12l2 -12l2 11l2 -7l2 2l2 9l2 6l2 -16l2 30l2 -17l2 5l2 -29l2 5l2 -6l2 8l2 -6l2 25l2 14l2 -15l2 10l2 1l2 -7l2 -24l2 -27l2 22l2 -5l2 14l2 7l2 -3l2 7l2 12l2 -3l2 5l2 -4l2 3l2 -4l2 3l2 -4l2 -4l2 1l2 7l2 -8l2 6l2 -6l2 6l2 -5l2 8l2 -14l2 7l2 -6l2 -10l2 3l2 0l2 6l2 -3l2 18l2 -5l2 5l2 -15l2 6l2 18l2 5l2 -9l2 -15l2 4l2 -11l2 9l2 -14l2 1l2 -2l2 8l2 16l2 -6l2 -2l2 -1l2 -7l2 -7l2 -1l2 28l2 -2l2 -8l2 17l2 -5l2 -8l2 1l2 -5l2 1l2 -1l2 4l2 0l2 -8l2 6l2 -1l2 5l2 -2l2 -3l2 1l2 -4l2 3l2 4l2 -2l2 4l2 3l2 -20l2 17l2 -15l2 -12l2 20l2 11l2 -4l2 1l2 -1l2 5l2 -10l2 11l2 -11l2 13l2 -16l2 4l2 14l2 20l2 -5l2 -7l2 -10l2 -15l2 -6l2 6l2 0l2 -14l2 22l2 16l2 -5l2 8l2 -5l2 -3l2 -4l2 0l2 3l2 -3l2 -12l2 9l2 9l2 -9l2 6l2 11l2 -19l2 -4l2 -19l2 15l2 -26l2 15l2 5l2 -1l2 4l2 6l2 1l2 2l2 -13l2 13l2 3l2 -16l2 -8l2 3l2 10l2 -1l2 -3l2 -7M388 704l2 1l2 -1l2 -3l2 0l2 1l2 8l2 -2l2 2l2 -4l2 2l2 -8l2 0l2 4l2 2l2 2l2 -9l2 8l2 0l2 -4l2 -3l2 7l2 7l2 -5l2 -3l2 3l2 6l2 -2l2 -7l2 -1l2 -4l2 6l2 1l2 0l2 -6l2 12l2 -2l2 -6l2 -6l2 -9l2 7l2 9l2 1l2 -8l2 -5l2 0l2 2l2 -3l2 11l2 1l2 -4l2 2l2 4l2 -5l2 -6l2 -1l2 2l2 4l2 -8l2 -2l2 12l2 -10l2 6l2 7l2 2l2 -13l2 3l2 10l2 -7l2 -1l2 1l2 3l2 -5l2 -1l2 -4l2 -7l2 9l2 2l2 1l2 9l2 3l2 -10l2 -6l2 3l2 3l2 3l2 0l2 -1l2 6l2 -3l2 -10l2 5l2 5l2 -7l2 6l2 -6l2 6l2 -4l2 -7l2 2l2 9l2 -1l2 -11l2 2l2 9l2 6l2 -10l2 -2l2 -2l2 -4l2 -5l2 1l2 -5l2 2l2 4l2 5l2 8l2 -4l2 -7l2 -5l2 -3l2 -6l2 7l2 -11l2 9l2 5l2 -17l2 -4l2 -7l2 -6l2 -13l2 -4l2 -8l2 0l2 -16l2 3l2 6l2 -18l2 -6l2 -8l2 3l2 -11l2 9l2 -1l2 -11l2 -11l2 -6l2 6l2 6l2 -11l2 5l2 -4l2 8l2 -6l2 9l2 4l2 13l2 0l2 9l2 -7l2 18l2 5l2 0l2 4l2 5l2 1l2 13l2 11l2 0l2 15l2 -4l2 -4l2 1l2 6l2 6l2 7l2 -16l2 12l2 9l2 -5l2 14l2 -2l2 6l2 -5l2 16l2 -6l2 13l2 -7l2 4l2 -5l2 11l2 2l2 9l2 -7l2 -8l2 4l2 -3l2 4l2 3l2 -1l2 -3l2 -3l2 -9l2 -3l2 -10l2 14l2 6l2 -16l2 -6l2 -3l2 -9l2 1l2 14l2 -15l2 7l2 1l2 -21l2 6l2 -4l2 -1l2 6l2 1l2 -21l2 -5l2 1l2 9l2 -3l2 5l2 -10l2 5l2 3l2 14l2 7l2 7l2 -12l2 18l2 -14l2 -13l2 -7l2 23l2 -3l2 15l2 -5l2 -6l2 -2l2 2l2 15l2 14l2 1l2 -16l2 -4l2 25l2 -12l2 -21l2 3l2 1l2 12l2 -5l2 -2l2 7l2 -5l2 2l2 11l2 -12l2 -9l2 -4l2 11l2 1l2 5l2 -1l2 3l2 -10l2 15l2 -1l2 -15l2 4l2 -3l2 -6l2 6l2 23l2 -15l2 2l2 11l2 -2l2 -13l2 -5l2 10l2 15l2 -6l2 -7l2 0l2 2l2 1l2 -4l2 6l2 4l2 -2l2 -2l2 4l2 -6l2 -11l2 1l2 0l2 19l2 8l2 -10l2 15l2 -14l2 13l2 -7l2 2l2 0l2 -5l2 -1l2 -6l2 12l2 -15l2 11l2 -7l2 1l2 -3l2 -3l2 -14l2 1l2 0l2 22l2 -3l2 -13l2 11l2 -2l2 -19l2 -1l2 -6l2 6l2 -17l2 17l2 3l2 5l2 7l2 12l2 1l2 -7l2 10l2 6l2 -12l2 0l2 4l2 0l2 9l2 -24l2 5l2 -4l2 -6l2 27l2 0l2 -17l2 -5l2 -3l2 2l2 -1l2 -10l2 4l2 6l2 2l2 -17l2 -1l2 0l2 17l2 -20l2 9l2 5l2 -8l2 4l2 6l2 10l2 -12l2 -16l2 7l2 14l2 14M388 699l2 8l2 -2l2 1l2 -8l2 -3l2 -2l2 4l2 1l2 -2l2 -1l2 4l2 -5l2 10l2 -14l2 -3l2 -1l2 10l2 -6l2 7l2 4l2 -6l2 2l2 2l2 -1l2 -2l2 0l2 3l2 -1l2 5l2 8l2 -10l2 -2l2 6l2 0l2 0l2 -7l2 -2l2 1l2 9l2 -5l2 3l2 -2l2 1l2 14l2 -11l2 -11l2 8l2 -5l2 -5l2 6l2 2l2 -8l2 -6l2 11l2 3l2 2l2 -10l2 9l2 2l2 6l2 0l2 -4l2 -7l2 -3l2 6l2 3l2 -4l2 -8l2 11l2 3l2 7l2 -3l2 -7l2 -5l2 4l2 -8l2 13l2 -4l2 -2l2 -10l2 8l2 -3l2 1l2 -5l2 5l2 -1l2 -5l2 0l2 2l2 -11l2 -5l2 5l2 11l2 1l2 -4l2 -3l2 -5l2 -4l2 2l2 -10l2 5l2 5l2 2l2 -14l2 -9l2 -2l2 -16l2 -3l2 -9l2 4l2 0l2 -8l2 5l2 -7l2 -7l2 -2l2 -2l2 -9l2 -1l2 8l2 -11l2 -2l2 -2l2 0l2 -15l2 -12l2 0l2 2l2 -6l2 -2l2 2l2 -8l2 22l2 -5l2 -4l2 -1l2 -8l2 11l2 7l2 -4l2 14l2 -4l2 2l2 -10l2 11l2 -3l2 5l2 17l2 14l2 4l2 15l2 8l2 2l2 2l2 8l2 -2l2 1l2 15l2 5l2 -12l2 5l2 7l2 6l2 -16l2 14l2 9l2 1l2 -11l2 10l2 5l2 2l2 -1l2 3l2 -8l2 -8l2 13l2 1l2 -12l2 -1l2 8l2 -8l2 4l2 -2l2 3l2 6l2 0l2 14l2 1l2 8l2 11l2 -22l2 -12l2 -15l2 5l2 1l2 -4l2 -1l2 16l2 0l2 -9l2 16l2 -16l2 -1l2 -5l2 16l2 2l2 -8l2 2l2 -7l2 -1l2 10l2 9l2 -5l2 5l2 -14l2 -2l2 7l2 2l2 16l2 -5l2 6l2 -2l2 -12l2 -11l2 -8l2 2l2 5l2 -5l2 -5l2 5l2 14l2 -3l2 -6l2 -11l2 4l2 3l2 7l2 1l2 5l2 -11l2 -2l2 2l2 12l2 8l2 -14l2 5l2 0l2 1l2 6l2 -2l2 3l2 -16l2 2l2 -11l2 10l2 12l2 -15l2 -23l2 12l2 -1l2 -3l2 16l2 12l2 -9l2 -11l2 5l2 -3l2 3l2 4l2 -4l2 12l2 -11l2 6l2 7l2 8l2 1l2 -19l2 0l2 -4l2 2l2 -4l2 -5l2 -2l2 14l2 -14l2 17l2 0l2 -9l2 9l2 -7l2 -2l2 4l2 -1l2 -4l2 2l2 6l2 -12l2 2l2 5l2 10l2 -11l2 6l2 9l2 -14l2 -5l2 20l2 -4l2 0l2 1l2 4l2 -20l2 5l2 2l2 -7l2 9l2 -3l2 -2l2 -13l2 1l2 14l2 1l2 4l2 0l2 -1l2 -6l2 8l2 -10l2 15l2 -2l2 2l2 -4l2 0l2 -4l2 1l2 2l2 2l2 1l2 -7l2 3l2 -2l2 -24l2 -2l2 6l2 25l2 0l2 -1l2 6l2 -17l2 27l2 -3l2 -3l2 3l2 4l2 -7l2 12l2 -3l2 11l2 -9l2 -11l2 14l2 5l2 -14l2 -8l2 -7l2 14l2 -3l2 11l2 10l2 -17l2 7l2 -3l2 3l2 -9l2 3l2 14l2 -22l2 10l2 7l2 -5M388 703l2 -10l2 -1l2 5l2 8l2 -6l2 2l2 -1l2 -3l2 -3l2 1l2 -3l2 -5l2 11l2 8l2 -5l2 -2l2 -7l2 4l2 -1l2 10l2 11l2 -3l2 -9l2 1l2 -7l2 -1l2 0l2 2l2 0l2 -2l2 -3l2 -2l2 4l2 5l2 -8l2 -2l2 8l2 3l2 -2l2 4l2 2l2 6l2 -6l2 15l2 -1l2 -7l2 -4l2 0l2 -10l2 -7l2 4l2 -3l2 1l2 6l2 -2l2 6l2 -9l2 6l2 -4l2 2l2 0l2 4l2 -8l2 8l2 -13l2 1l2 10l2 -5l2 0l2 -8l2 -4l2 8l2 10l2 -15l2 10l2 4l2 -9l2 -5l2 1l2 -4l2 10l2 2l2 -6l2 -1l2 -6l2 -2l2 3l2 3l2 2l2 7l2 -10l2 -10l2 15l2 -3l2 -5l2 9l2 0l2 -4l2 9l2 -7l2 -3l2 -9l2 -10l2 -5l2 13l2 5l2 2l2 -5l2 -6l2 -2l2 -7l2 -6l2 -1l2 0l2 4l2 9l2 -6l2 1l2 -8l2 -15l2 -5l2 -4l2 11l2 -13l2 5l2 0l2 -2l2 4l2 0l2 -13l2 -12l2 -2l2 6l2 -6l2 12l2 -9l2 3l2 7l2 -12l2 -14l2 -7l2 12l2 10l2 -9l2 1l2 10l2 18l2 -4l2 -2l2 -14l2 15l2 -1l2 4l2 6l2 -6l2 -2l2 0l2 -4l2 -4l2 0l2 20l2 -5l2 13l2 7l2 -9l2 -2l2 -2l2 1l2 0l2 -4l2 11l2 1l2 16l2 3l2 12l2 -22l2 15l2 11l2 -7l2 -18l2 14l2 8l2 -4l2 5l2 -6l2 -1l2 1l2 -1l2 18l2 -10l2 -17l2 26l2 -13l2 5l2 10l2 8l2 -13l2 1l2 -1l2 -12l2 -6l2 6l2 0l2 2l2 18l2 4l2 -2l2 -6l2 7l2 6l2 5l2 -20l2 21l2 -5l2 -1l2 8l2 -9l2 -14l2 13l2 11l2 -5l2 -12l2 13l2 -7l2 -3l2 -17l2 -2l2 -9l2 -3l2 13l2 10l2 9l2 -4l2 7l2 -30l2 0l2 12l2 6l2 -1l2 5l2 11l2 1l2 -12l2 2l2 3l2 -7l2 -5l2 0l2 4l2 20l2 8l2 19l2 0l2 -11l2 -3l2 -15l2 8l2 -3l2 -22l2 26l2 -4l2 6l2 4l2 12l2 -13l2 -6l2 -4l2 21l2 -10l2 -3l2 6l2 -16l2 -5l2 2l2 0l2 0l2 0l2 -12l2 -1l2 8l2 -2l2 1l2 4l2 -6l2 14l2 -9l2 -24l2 14l2 10l2 0l2 11l2 -6l2 -20l2 -1l2 -2l2 8l2 -4l2 -3l2 -3l2 7l2 8l2 -10l2 2l2 -6l2 3l2 2l2 19l2 4l2 -26l2 14l2 -11l2 8l2 -13l2 -5l2 5l2 10l2 14l2 -16l2 -3l2 1l2 4l2 4l2 0l2 11l2 6l2 0l2 -11l2 5l2 -4l2 -2l2 5l2 9l2 1l2 -12l2 8l2 -9l2 5l2 -8l2 9l2 8l2 -14l2 14l2 -3l2 0l2 -6l2 -9l2 -7l2 4l2 -18l2 20l2 6l2 -16l2 6l2 10l2 9l2 -5l2 -1l2 6l2 -14l2 0l2 1l2 -12l2 11l2 -6l2 -11l2 20l2 -14l2 5l2 -5l2 -12l2 20l2 22l2 -4l2 0l2 -8l2 1l2 1l2 -14l2 -19M388 698l2 -5l2 -3l2 0l2 7l2 1l2 6l2 3l2 -8l2 3l2 0l2 -1l2 -3l2 -1l2 -1l2 8l2 -5l2 4l2 -2l2 -7l2 -8l2 6l2 2l2 -1l2 5l2 -9l2 -3l2 -2l2 2l2 1l2 -1l2 -3l2 -8l2 12l2 11l2 -6l2 7l2 -6l2 -6l2 9l2 -4l2 12l2 -2l2 -5l2 -4l2 -3l2 5l2 6l2 7l2 -1l2 -4l2 -1l2 1l2 5l2 3l2 10l2 2l2 -12l2 -1l2 -2l2 -3l2 12l2 -6l2 2l2 0l2 1l2 -2l2 1l2 -7l2 -8l2 -2l2 11l2 -8l2 -5l2 -1l2 8l2 -2l2 2l2 0l2 -2l2 -3l2 0l2 4l2 9l2 -9l2 1l2 5l2 -8l2 -4l2 5l2 2l2 3l2 -2l2 -4l2 -2l2 6l2 -6l2 -3l2 4l2 5l2 -9l2 -5l2 10l2 -2l2 1l2 3l2 7l2 -12l2 2l2 -6l2 -5l2 12l2 -3l2 6l2 -2l2 6l2 -1l2 -8l2 -9l2 14l2 0l2 5l2 -6l2 -6l2 -6l2 -2l2 2l2 -9l2 11l2 8l2 -6l2 -3l2 -3l2 8l2 -3l2 3l2 -7l2 -19l2 -6l2 8l2 3l2 7l2 3l2 9l2 -10l2 -4l2 0l2 -1l2 -4l2 7l2 0l2 5l2 -12l2 -1l2 6l2 8l2 7l2 9l2 -11l2 3l2 -6l2 -2l2 -3l2 -2l2 16l2 1l2 4l2 2l2 4l2 -23l2 0l2 4l2 3l2 4l2 -15l2 5l2 8l2 -9l2 -17l2 11l2 3l2 -7l2 11l2 -14l2 -2l2 4l2 3l2 8l2 0l2 -2l2 4l2 -10l2 12l2 17l2 -11l2 6l2 7l2 -8l2 0l2 -6l2 2l2 17l2 -7l2 -13l2 -8l2 -3l2 0l2 14l2 2l2 -16l2 12l2 12l2 -20l2 9l2 13l2 -10l2 9l2 -28l2 0l2 11l2 -7l2 -4l2 -4l2 0l2 15l2 -12l2 1l2 6l2 -6l2 -13l2 -9l2 0l2 -5l2 8l2 11l2 6l2 8l2 -2l2 -5l2 14l2 -4l2 6l2 0l2 -18l2 0l2 -3l2 3l2 11l2 -15l2 1l2 3l2 10l2 8l2 -5l2 6l2 14l2 -10l2 16l2 4l2 -15l2 2l2 10l2 -9l2 -8l2 6l2 -3l2 25l2 -31l2 -11l2 -4l2 -4l2 -1l2 2l2 -1l2 -3l2 8l2 -2l2 1l2 -5l2 12l2 0l2 2l2 -10l2 22l2 -12l2 5l2 -6l2 -5l2 -9l2 -8l2 -1l2 14l2 -9l2 10l2 6l2 4l2 -5l2 9l2 4l2 -5l2 2l2 -13l2 21l2 -4l2 -2l2 0l2 -13l2 -16l2 4l2 -7l2 11l2 6l2 4l2 10l2 9l2 -8l2 -1l2 3l2 5l2 -7l2 8l2 -10l2 7l2 -3l2 -9l2 -3l2 37l2 -5l2 -13l2 -7l2 -20l2 12l2 0l2 11l2 -17l2 14l2 11l2 -12l2 1l2 13l2 -1l2 12l2 -3l2 -19l2 -12l2 11l2 -6l2 -6l2 4l2 23l2 -11l2 -5l2 -3l2 5l2 0l2 -5l2 -10l2 -7l2 -3l2 4l2 1l2 13l2 -5l2 -3l2 0l2 -13l2 -9l2 27l2 -10l2 26l2 -5l2 1l2 -13l2 -11l2 -14l2 18l2 -14l2 9l2 4l2 4M388 705l2 -5l2 -4l2 8l2 -1l2 -3l2 -1l2 1l2 1l2 4l2 -3l2 4l2 8l2 6l2 -20l2 2l2 3l2 3l2 -1l2 -6l2 -2l2 0l2 0l2 4l2 -1l2 3l2 8l2 -2l2 -10l2 -3l2 8l2 -1l2 -3l2 -1l2 -2l2 -2l2 -6l2 -4l2 3l2 6l2 2l2 6l2 -1l2 -4l2 5l2 -1l2 3l2 6l2 3l2 -3l2 4l2 -16l2 8l2 9l2 -3l2 -14l2 -1l2 3l2 3l2 12l2 7l2 -3l2 -10l2 -1l2 -6l2 10l2 1l2 -3l2 -1l2 2l2 -7l2 11l2 -7l2 4l2 4l2 -4l2 -3l2 -7l2 10l2 -4l2 -9l2 1l2 0l2 4l2 0l2 -2l2 0l2 0l2 -9l2 -2l2 -2l2 3l2 -5l2 8l2 10l2 -3l2 2l2 -1l2 5l2 -5l2 8l2 3l2 -4l2 -2l2 -6l2 8l2 1l2 -4l2 -5l2 6l2 -5l2 0l2 4l2 -3l2 3l2 -7l2 2l2 -7l2 10l2 -7l2 8l2 -11l2 1l2 -3l2 3l2 -9l2 6l2 7l2 -8l2 11l2 -4l2 3l2 -4l2 5l2 1l2 1l2 0l2 5l2 10l2 -4l2 5l2 -3l2 -6l2 6l2 -5l2 -1l2 -4l2 -4l2 -12l2 6l2 -14l2 16l2 -1l2 3l2 7l2 -1l2 1l2 -7l2 -1l2 1l2 0l2 4l2 11l2 -7l2 12l2 -3l2 -13l2 1l2 -12l2 3l2 -4l2 2l2 2l2 -7l2 17l2 -5l2 5l2 19l2 -24l2 5l2 -12l2 0l2 -8l2 6l2 16l2 8l2 -21l2 11l2 -4l2 -1l2 -4l2 -16l2 19l2 4l2 -2l2 -10l2 0l2 9l2 -4l2 10l2 -22l2 12l2 -9l2 1l2 3l2 -6l2 6l2 -5l2 17l2 4l2 25l2 -19l2 1l2 -10l2 -14l2 -3l2 15l2 1l2 -12l2 -7l2 8l2 1l2 -3l2 -7l2 16l2 19l2 -8l2 -4l2 -19l2 8l2 27l2 -7l2 -4l2 -18l2 14l2 -18l2 8l2 -1l2 0l2 9l2 3l2 -7l2 -4l2 -3l2 -19l2 18l2 -8l2 -7l2 7l2 27l2 -23l2 6l2 9l2 -2l2 -4l2 6l2 18l2 4l2 -13l2 8l2 1l2 0l2 -7l2 -9l2 0l2 -7l2 -15l2 -3l2 -6l2 5l2 0l2 -7l2 18l2 -8l2 -9l2 13l2 -1l2 12l2 -15l2 4l2 -5l2 -10l2 8l2 14l2 9l2 -3l2 8l2 -4l2 3l2 -5l2 10l2 13l2 -17l2 -15l2 6l2 -1l2 10l2 -11l2 0l2 5l2 9l2 -18l2 10l2 10l2 2l2 7l2 -11l2 -4l2 -12l2 6l2 -1l2 -10l2 1l2 -4l2 22l2 11l2 13l2 -5l2 -17l2 -3l2 -11l2 3l2 16l2 -18l2 11l2 12l2 -5l2 -16l2 23l2 -10l2 -3l2 -9l2 13l2 -5l2 4l2 1l2 -5l2 0l2 17l2 -2l2 -21l2 0l2 -14l2 -9l2 5l2 11l2 -13l2 9l2 2l2 -2l2 -3l2 13l2 3l2 1l2 -2l2 -13l2 8l2 -6l2 -10l2 6l2 2l2 6l2 -4l2 15l2 2l2 6l2 -10l2 -8l2 -19l2 17l2 -3l2 -1l2 -6l2 -2l2 -4l2 -2l2 12l2 -16l2 0l2 8M388 696l2 9l2 -5l2 -6l2 14l2 1l2 -3l2 -3l2 9l2 -2l2 -1l2 5l2 -2l2 -6l2 4l2 -5l2 -3l2 5l2 -4l2 10l2 0l2 0l2 -8l2 2l2 -4l2 9l2 -4l2 5l2 -11l2 0l2 7l2 4l2 9l2 -8l2 -2l2 -10l2 0l2 3l2 -9l2 -6l2 0l2 10l2 -2l2 -4l2 4l2 -9l2 6l2 -1l2 1l2 -8l2 1l2 12l2 6l2 5l2 -4l2 -7l2 8l2 -7l2 -13l2 5l2 5l2 10l2 -10l2 1l2 -2l2 2l2 1l2 -6l2 17l2 -5l2 -9l2 0l2 -4l2 -2l2 -2l2 7l2 6l2 -3l2 6l2 -7l2 8l2 -5l2 7l2 -13l2 7l2 5l2 -2l2 -1l2 4l2 -5l2 -4l2 -1l2 11l2 8l2 -5l2 -2l2 -11l2 1l2 7l2 3l2 -5l2 -4l2 -1l2 4l2 10l2 -3l2 -9l2 -3l2 3l2 3l2 -9l2 5l2 -8l2 5l2 -3l2 3l2 -4l2 8l2 0l2 2l2 2l2 -9l2 11l2 1l2 -1l2 2l2 -9l2 5l2 -12l2 -7l2 4l2 6l2 -1l2 16l2 -1l2 -13l2 -4l2 0l2 6l2 -14l2 -1l2 7l2 -1l2 3l2 7l2 -10l2 0l2 5l2 -4l2 -10l2 16l2 -1l2 -3l2 3l2 -4l2 1l2 2l2 1l2 -11l2 -3l2 -2l2 6l2 10l2 16l2 -13l2 -13l2 -5l2 0l2 -7l2 19l2 -10l2 -3l2 -3l2 3l2 2l2 -8l2 17l2 3l2 -8l2 -2l2 -7l2 15l2 4l2 -5l2 -11l2 6l2 5l2 -8l2 5l2 -1l2 1l2 -13l2 12l2 4l2 -3l2 -3l2 10l2 8l2 -3l2 12l2 -8l2 -6l2 7l2 -17l2 12l2 -5l2 7l2 16l2 -4l2 -1l2 -9l2 17l2 -3l2 3l2 -19l2 -9l2 1l2 -1l2 -5l2 -6l2 11l2 -12l2 7l2 6l2 -17l2 18l2 14l2 6l2 -12l2 7l2 0l2 -20l2 9l2 11l2 8l2 13l2 -14l2 -25l2 -10l2 -1l2 1l2 13l2 26l2 -11l2 -3l2 -4l2 -2l2 -12l2 -4l2 0l2 3l2 -2l2 3l2 6l2 -4l2 6l2 6l2 -3l2 -4l2 12l2 4l2 -7l2 -17l2 -3l2 8l2 9l2 -11l2 -8l2 6l2 -8l2 17l2 -7l2 1l2 -5l2 0l2 1l2 -4l2 -1l2 18l2 2l2 4l2 -12l2 4l2 -1l2 -3l2 7l2 3l2 2l2 -3l2 -5l2 0l2 -12l2 -2l2 6l2 11l2 9l2 -1l2 -1l2 9l2 -9l2 -6l2 -9l2 1l2 11l2 5l2 -12l2 -6l2 3l2 -5l2 1l2 -3l2 -12l2 20l2 15l2 -14l2 -9l2 -3l2 -2l2 9l2 -1l2 -4l2 -6l2 16l2 9l2 -1l2 -8l2 -13l2 19l2 -6l2 3l2 5l2 -5l2 -2l2 -14l2 11l2 -6l2 9l2 -5l2 -8l2 6l2 0l2 1l2 15l2 6l2 -4l2 -17l2 -6l2 2l2 10l2 18l2 9l2 -14l2 -8l2 -19l2 18l2 1l2 -8l2 6l2 1l2 -15l2 -3l2 0l2 4l2 13l2 5l2 13l2 -4l2 -2l2 6l2 -6l2 -5l2 8l2 -2l2 -5l2 -2l2 -2l2 -1l2 2l2 10l2 -1M388 711l2 -4l2 -10l2 0l2 2l2 5l2 -12l2 4l2 -3l2 9l2 4l2 -3l2 -5l2 3l2 8l2 -12l2 3l2 -5l2 3l2 8l2 -7l2 -7l2 -1l2 11l2 -1l2 -6l2 8l2 -2l2 -9l2 6l2 2l2 5l2 3l2 4l2 -1l2 1l2 -6l2 0l2 4l2 6l2 -4l2 -8l2 3l2 4l2 3l2 -6l2 -6l2 1l2 -1l2 -1l2 2l2 -1l2 -1l2 -1l2 3l2 8l2 -7l2 -10l2 10l2 -5l2 -5l2 4l2 8l2 3l2 -2l2 -7l2 3l2 3l2 -4l2 -2l2 -8l2 -4l2 -4l2 6l2 -1l2 8l2 4l2 10l2 -8l2 1l2 -6l2 -3l2 3l2 5l2 -6l2 -1l2 6l2 -9l2 6l2 -13l2 8l2 8l2 -5l2 0l2 5l2 -1l2 -1l2 3l2 11l2 -4l2 -11l2 10l2 4l2 0l2 -6l2 11l2 -8l2 1l2 -4l2 -1l2 1l2 -5l2 -4l2 2l2 5l2 3l2 -1l2 4l2 -11l2 9l2 0l2 0l2 5l2 2l2 -2l2 3l2 4l2 -5l2 -4l2 -1l2 10l2 -4l2 16l2 -6l2 6l2 -1l2 -5l2 2l2 9l2 8l2 -6l2 4l2 10l2 1l2 -7l2 -7l2 10l2 -3l2 5l2 -2l2 19l2 -13l2 2l2 -6l2 2l2 -6l2 -9l2 3l2 10l2 -10l2 2l2 0l2 -18l2 6l2 5l2 -9l2 -3l2 -8l2 -1l2 -13l2 -3l2 3l2 -7l2 3l2 -8l2 -9l2 17l2 0l2 1l2 10l2 -18l2 -5l2 -5l2 7l2 3l2 -4l2 7l2 12l2 -4l2 0l2 -1l2 12l2 2l2 -8l2 10l2 -19l2 -7l2 10l2 -9l2 -16l2 8l2 19l2 -3l2 -5l2 -12l2 3l2 8l2 -3l2 -10l2 -13l2 6l2 3l2 11l2 -2l2 6l2 -5l2 5l2 0l2 -9l2 8l2 -6l2 20l2 -7l2 -5l2 -9l2 -10l2 10l2 -5l2 1l2 10l2 -20l2 2l2 13l2 13l2 -10l2 -2l2 15l2 -11l2 0l2 14l2 10l2 -16l2 -12l2 5l2 -2l2 -14l2 7l2 -1l2 -7l2 11l2 11l2 -21l2 0l2 -1l2 15l2 23l2 5l2 -2l2 -1l2 -6l2 -16l2 2l2 8l2 -13l2 4l2 -7l2 8l2 -2l2 0l2 -2l2 11l2 -15l2 5l2 -23l2 22l2 -4l2 12l2 -20l2 0l2 8l2 12l2 -1l2 -6l2 5l2 15l2 -2l2 -4l2 -24l2 15l2 8l2 6l2 -10l2 1l2 -4l2 4l2 -26l2 14l2 -1l2 -3l2 3l2 19l2 3l2 1l2 -5l2 -3l2 0l2 -11l2 3l2 11l2 3l2 5l2 -6l2 -16l2 5l2 -16l2 11l2 2l2 3l2 -3l2 -20l2 3l2 2l2 6l2 -6l2 20l2 -5l2 -12l2 10l2 5l2 9l2 -2l2 -19l2 16l2 19l2 -16l2 4l2 -4l2 3l2 6l2 -9l2 4l2 -7l2 4l2 -4l2 9l2 6l2 0l2 -11l2 11l2 23l2 -29l2 -14l2 -7l2 4l2 -4l2 4l2 13l2 -6l2 6l2 -5l2 4l2 13l2 -16l2 1l2 -9l2 8l2 -5l2 -9l2 0l2 -8l2 -8l2 10l2 20l2 -20l2 5l2 6l2 27l2 -16l2 -3l2 1M388 708l2 7l2 3l2 -7l2 -6l2 3l2 3l2 -9l2 2l2 -2l2 11l2 10l2 -9l2 4l2 -9l2 -6l2 -2l2 3l2 7l2 -1l2 -8l2 -1l2 2l2 1l2 -5l2 3l2 -7l2 2l2 -1l2 2l2 3l2 -2l2 -7l2 9l2 -3l2 -3l2 7l2 4l2 0l2 -7l2 3l2 -9l2 4l2 5l2 -1l2 -1l2 7l2 3l2 -7l2 1l2 0l2 -1l2 6l2 -1l2 -8l2 -5l2 3l2 -12l2 7l2 -1l2 7l2 1l2 -5l2 1l2 14l2 -5l2 4l2 -6l2 -8l2 -4l2 -1l2 6l2 6l2 0l2 -2l2 0l2 -3l2 -2l2 4l2 -4l2 -1l2 -1l2 1l2 -2l2 8l2 3l2 -2l2 -4l2 -5l2 -9l2 5l2 9l2 2l2 -12l2 5l2 -2l2 6l2 -7l2 9l2 1l2 -2l2 1l2 6l2 -1l2 0l2 -14l2 -2l2 5l2 0l2 -5l2 -7l2 6l2 2l2 13l2 12l2 4l2 -4l2 8l2 -17l2 -2l2 3l2 3l2 -11l2 10l2 -7l2 0l2 11l2 3l2 -6l2 10l2 -10l2 -8l2 14l2 6l2 13l2 -11l2 -10l2 15l2 -4l2 11l2 -8l2 7l2 -7l2 6l2 5l2 3l2 1l2 -4l2 8l2 -9l2 10l2 2l2 10l2 -1l2 -7l2 -2l2 15l2 -15l2 -5l2 6l2 5l2 -4l2 -8l2 11l2 -13l2 -16l2 3l2 -3l2 1l2 6l2 -7l2 -10l2 -9l2 10l2 7l2 4l2 -8l2 0l2 7l2 3l2 -16l2 5l2 14l2 -12l2 -23l2 3l2 19l2 -11l2 1l2 -8l2 12l2 -9l2 3l2 -9l2 12l2 -5l2 -10l2 5l2 1l2 -5l2 18l2 -11l2 -6l2 -4l2 -2l2 0l2 0l2 23l2 -3l2 11l2 -20l2 -8l2 2l2 9l2 -6l2 -6l2 2l2 -7l2 10l2 10l2 -7l2 7l2 0l2 -2l2 8l2 -8l2 15l2 -24l2 -12l2 -3l2 7l2 3l2 -1l2 4l2 3l2 5l2 13l2 1l2 2l2 4l2 2l2 -11l2 1l2 8l2 -3l2 -19l2 14l2 5l2 -12l2 -9l2 -5l2 6l2 3l2 -13l2 -5l2 4l2 -2l2 3l2 14l2 -2l2 -11l2 -8l2 2l2 1l2 9l2 -9l2 5l2 11l2 5l2 -8l2 3l2 -10l2 3l2 -13l2 4l2 8l2 -3l2 -3l2 -5l2 19l2 0l2 -15l2 7l2 5l2 -6l2 -11l2 -4l2 14l2 0l2 -4l2 7l2 1l2 -13l2 19l2 6l2 0l2 -20l2 1l2 -13l2 -4l2 0l2 4l2 7l2 -15l2 3l2 -7l2 -1l2 4l2 1l2 -4l2 9l2 7l2 -21l2 3l2 -19l2 6l2 -4l2 20l2 18l2 9l2 -12l2 -13l2 5l2 18l2 8l2 -5l2 0l2 -16l2 4l2 -4l2 -6l2 14l2 3l2 -10l2 16l2 -7l2 -12l2 10l2 11l2 -19l2 1l2 15l2 3l2 -13l2 3l2 -1l2 -6l2 6l2 -4l2 4l2 12l2 7l2 -13l2 -10l2 8l2 -12l2 15l2 12l2 -7l2 -5l2 -3l2 0l2 -2l2 -5l2 19l2 -15l2 3l2 3l2 6l2 16l2 -25l2 4l2 -9l2 8l2 2l2 -7l2 5l2 -7l2 4l2 3M388 697l2 8l2 -2l2 1l2 -2l2 -6l2 3l2 1l2 3l2 2l2 12l2 -11l2 -10l2 -1l2 4l2 12l2 -9l2 4l2 10l2 5l2 2l2 -4l2 -2l2 -4l2 -15l2 5l2 -1l2 0l2 11l2 -1l2 -5l2 3l2 -6l2 8l2 -10l2 -2l2 -3l2 -1l2 1l2 9l2 -4l2 -5l2 -3l2 7l2 4l2 3l2 -2l2 -3l2 -1l2 10l2 2l2 4l2 6l2 -6l2 -5l2 -5l2 -2l2 -1l2 1l2 -4l2 4l2 0l2 -11l2 -1l2 10l2 -6l2 0l2 7l2 -3l2 -6l2 3l2 1l2 9l2 0l2 4l2 8l2 -8l2 0l2 -7l2 -3l2 0l2 -8l2 -3l2 16l2 0l2 7l2 -1l2 2l2 -1l2 0l2 -5l2 -2l2 -1l2 3l2 1l2 -3l2 5l2 -5l2 4l2 -1l2 -9l2 2l2 -5l2 1l2 -2l2 9l2 0l2 1l2 -13l2 0l2 8l2 5l2 -5l2 10l2 -1l2 1l2 -7l2 9l2 11l2 4l2 5l2 1l2 5l2 -5l2 -6l2 8l2 0l2 1l2 3l2 -16l2 2l2 11l2 -12l2 -1l2 -11l2 7l2 2l2 -4l2 4l2 -2l2 2l2 1l2 3l2 0l2 -6l2 -15l2 0l2 4l2 -1l2 -6l2 5l2 -14l2 -2l2 10l2 -1l2 -2l2 6l2 -4l2 2l2 -4l2 -4l2 5l2 -10l2 7l2 -4l2 1l2 -7l2 6l2 1l2 1l2 4l2 -1l2 -7l2 2l2 -27l2 22l2 -1l2 5l2 2l2 2l2 -6l2 -6l2 2l2 4l2 4l2 -9l2 -11l2 9l2 -12l2 6l2 20l2 -7l2 1l2 3l2 -10l2 6l2 0l2 6l2 0l2 -7l2 5l2 0l2 9l2 3l2 -10l2 13l2 -20l2 -1l2 3l2 -12l2 4l2 13l2 10l2 -5l2 -11l2 5l2 10l2 1l2 13l2 -2l2 -11l2 -22l2 9l2 -3l2 -1l2 7l2 3l2 11l2 5l2 -9l2 7l2 -13l2 4l2 -4l2 14l2 -10l2 -1l2 3l2 -4l2 -5l2 3l2 4l2 -21l2 -5l2 1l2 17l2 -8l2 0l2 -4l2 16l2 -6l2 -13l2 -5l2 -3l2 10l2 -6l2 0l2 11l2 -4l2 2l2 5l2 14l2 -1l2 -3l2 1l2 -3l2 7l2 -2l2 5l2 -7l2 1l2 -7l2 -5l2 -4l2 5l2 10l2 4l2 -7l2 3l2 2l2 -1l2 -3l2 16l2 -6l2 2l2 -17l2 6l2 -6l2 9l2 -9l2 -7l2 0l2 3l2 -9l2 -6l2 3l2 5l2 8l2 -2l2 -4l2 -6l2 15l2 -15l2 -6l2 10l2 -9l2 17l2 11l2 -20l2 19l2 7l2 -12l2 -10l2 3l2 6l2 -7l2 11l2 6l2 7l2 10l2 -10l2 -4l2 9l2 6l2 -23l2 -5l2 15l2 -9l2 -9l2 11l2 -2l2 -15l2 -17l2 14l2 23l2 -19l2 -16l2 -1l2 8l2 9l2 12l2 -18l2 -8l2 -15l2 23l2 10l2 -7l2 2l2 13l2 4l2 -7l2 12l2 1l2 6l2 -4l2 -19l2 1l2 4l2 13l2 -4l2 11l2 12l2 -2l2 -19l2 -2l2 11l2 3l2 -8l2 -7l2 -4l2 -13l2 -2l2 15l2 5l2 6l2 -6l2 6l2 -2l2 -4l2 -4M388 711l2 -4l2 0l2 -6l2 10l2 -1l2 0l2 -3l2 -7l2 8l2 -6l2 2l2 6l2 0l2 -2l2 -1l2 3l2 -4l2 3l2 -3l2 -5l2 -4l2 4l2 -7l2 2l2 17l2 -1l2 -3l2 -5l2 0l2 0l2 4l2 8l2 0l2 -5l2 1l2 4l2 10l2 4l2 -8l2 -3l2 0l2 -5l2 -10l2 0l2 0l2 1l2 -3l2 1l2 11l2 -4l2 -6l2 6l2 -2l2 -3l2 9l2 -4l2 -3l2 -3l2 2l2 10l2 -7l2 7l2 5l2 -6l2 -2l2 2l2 -6l2 -4l2 -8l2 -5l2 11l2 4l2 6l2 -2l2 6l2 5l2 -9l2 -8l2 4l2 -5l2 -2l2 3l2 -16l2 8l2 6l2 -2l2 -9l2 8l2 1l2 0l2 1l2 6l2 3l2 3l2 -12l2 -4l2 9l2 -1l2 -7l2 6l2 -5l2 -5l2 0l2 2l2 -1l2 8l2 0l2 3l2 6l2 -5l2 -4l2 -8l2 -9l2 4l2 -8l2 8l2 -5l2 3l2 -6l2 8l2 -5l2 -6l2 0l2 9l2 -11l2 1l2 -4l2 -2l2 -5l2 4l2 -7l2 -13l2 -8l2 9l2 4l2 -4l2 -23l2 17l2 -18l2 5l2 -9l2 -4l2 6l2 -3l2 -8l2 5l2 12l2 -6l2 2l2 4l2 -15l2 2l2 0l2 0l2 9l2 2l2 12l2 2l2 -3l2 11l2 12l2 -6l2 -15l2 0l2 8l2 -5l2 0l2 -3l2 8l2 3l2 4l2 6l2 -14l2 -2l2 10l2 19l2 4l2 -2l2 -5l2 12l2 -1l2 12l2 -19l2 12l2 0l2 -13l2 -10l2 5l2 -4l2 -4l2 7l2 -8l2 12l2 8l2 8l2 -13l2 12l2 5l2 10l2 -10l2 1l2 -8l2 18l2 -5l2 4l2 -1l2 2l2 -21l2 14l2 -8l2 -3l2 -9l2 22l2 2l2 -13l2 9l2 -8l2 10l2 -10l2 -7l2 1l2 -12l2 3l2 -2l2 1l2 18l2 7l2 1l2 2l2 1l2 0l2 -6l2 13l2 -7l2 -2l2 -12l2 -27l2 16l2 -6l2 2l2 -3l2 -5l2 8l2 6l2 20l2 -7l2 14l2 8l2 -27l2 -9l2 5l2 5l2 17l2 -7l2 -4l2 -6l2 0l2 -13l2 -11l2 9l2 -4l2 14l2 -15l2 8l2 1l2 -4l2 14l2 2l2 -1l2 15l2 -5l2 7l2 2l2 -27l2 3l2 -12l2 15l2 9l2 0l2 4l2 -6l2 -3l2 2l2 9l2 -3l2 4l2 -1l2 -8l2 2l2 -7l2 6l2 1l2 10l2 1l2 -11l2 -1l2 5l2 6l2 3l2 5l2 3l2 -9l2 -13l2 -5l2 7l2 -3l2 3l2 -3l2 -4l2 -9l2 1l2 1l2 1l2 -4l2 -4l2 -3l2 0l2 10l2 18l2 -7l2 -18l2 13l2 -6l2 0l2 -2l2 2l2 -7l2 3l2 8l2 1l2 12l2 -11l2 8l2 -5l2 -4l2 12l2 -9l2 -27l2 5l2 17l2 -6l2 12l2 -7l2 -6l2 -6l2 -3l2 5l2 -14l2 13l2 6l2 16l2 -7l2 1l2 14l2 -16l2 0l2 -4l2 12l2 -11l2 16l2 -17l2 -9l2 13l2 8l2 6l2 -1l2 -5l2 -10l2 3l2 24l2 -4l2 -20l2 2l2 -3l2 4l2 5l2 1l2 -10l2 5M388 696l2 1l2 7l2 -3l2 -4l2 9l2 -3l2 -12l2 8l2 -4l2 -5l2 12l2 3l2 1l2 5l2 0l2 -4l2 6l2 -12l2 3l2 -2l2 -6l2 5l2 5l2 -5l2 1l2 -4l2 -4l2 4l2 2l2 -6l2 -4l2 -6l2 0l2 8l2 1l2 -2l2 -2l2 0l2 5l2 -3l2 -6l2 2l2 3l2 -1l2 6l2 -6l2 0l2 -5l2 11l2 5l2 -6l2 4l2 2l2 -2l2 0l2 2l2 -10l2 7l2 -2l2 -8l2 10l2 -6l2 11l2 -7l2 -12l2 3l2 2l2 0l2 2l2 -3l2 5l2 -5l2 4l2 10l2 -4l2 3l2 5l2 1l2 -3l2 -3l2 0l2 -7l2 8l2 -6l2 11l2 -14l2 5l2 -3l2 11l2 -6l2 5l2 -11l2 1l2 6l2 -6l2 6l2 -3l2 3l2 5l2 -6l2 4l2 -3l2 -4l2 -9l2 5l2 8l2 9l2 -6l2 -1l2 10l2 1l2 -18l2 2l2 10l2 -1l2 -3l2 -1l2 2l2 -11l2 6l2 9l2 -13l2 6l2 5l2 -12l2 -8l2 6l2 8l2 -3l2 -12l2 7l2 -5l2 11l2 3l2 17l2 -19l2 13l2 -1l2 -1l2 -3l2 -2l2 2l2 0l2 3l2 -4l2 0l2 -5l2 7l2 -12l2 17l2 2l2 -1l2 -8l2 3l2 -10l2 2l2 -20l2 15l2 -9l2 9l2 -3l2 -2l2 3l2 1l2 16l2 2l2 -4l2 -7l2 -10l2 4l2 8l2 -8l2 8l2 -5l2 15l2 -1l2 8l2 -10l2 4l2 -11l2 -6l2 10l2 -6l2 4l2 -16l2 13l2 2l2 13l2 1l2 -10l2 -4l2 -4l2 -13l2 23l2 11l2 -9l2 -8l2 -13l2 -14l2 -5l2 20l2 -7l2 7l2 3l2 5l2 11l2 7l2 -7l2 -11l2 -20l2 -2l2 5l2 12l2 -13l2 0l2 16l2 -17l2 18l2 -13l2 1l2 16l2 -13l2 3l2 -6l2 27l2 -11l2 -17l2 10l2 -8l2 4l2 2l2 -11l2 -6l2 1l2 1l2 -2l2 3l2 -9l2 23l2 -27l2 10l2 -10l2 5l2 19l2 -7l2 -2l2 -2l2 0l2 14l2 -6l2 9l2 -17l2 -3l2 -1l2 -6l2 12l2 1l2 -1l2 6l2 -14l2 -2l2 9l2 -17l2 9l2 19l2 12l2 1l2 -7l2 0l2 2l2 0l2 -3l2 -22l2 11l2 0l2 -12l2 12l2 10l2 -7l2 15l2 -12l2 -11l2 -3l2 13l2 -3l2 -12l2 1l2 14l2 -11l2 7l2 1l2 0l2 -17l2 10l2 0l2 5l2 5l2 -1l2 -8l2 2l2 4l2 4l2 2l2 -9l2 6l2 -1l2 -2l2 -7l2 -11l2 4l2 -4l2 3l2 0l2 1l2 5l2 11l2 2l2 -7l2 -2l2 -11l2 7l2 8l2 0l2 -2l2 -3l2 -4l2 -2l2 0l2 1l2 3l2 0l2 -3l2 -4l2 -2l2 8l2 16l2 14l2 -25l2 -8l2 2l2 -14l2 -12l2 9l2 -3l2 0l2 -15l2 9l2 13l2 13l2 10l2 1l2 3l2 -15l2 -3l2 9l2 -3l2 4l2 -4l2 -10l2 -1l2 -7l2 10l2 -1l2 1l2 9l2 11l2 -1l2 11l2 -5l2 6l2 3l2 8l2 6l2 -3l2 -21l2 0l2 -7l2 -2l2 16M388 697l2 1l2 6l2 1l2 -2l2 -2l2 -3l2 4l2 0l2 -6l2 -1l2 -17l2 3l2 9l2 10l2 -6l2 5l2 -6l2 -4l2 8l2 11l2 -2l2 -4l2 -4l2 -2l2 6l2 -13l2 12l2 0l2 1l2 2l2 -6l2 5l2 1l2 -3l2 -10l2 16l2 2l2 -9l2 3l2 1l2 -3l2 -7l2 9l2 -11l2 8l2 -2l2 -4l2 -3l2 2l2 5l2 0l2 2l2 -8l2 -2l2 2l2 -3l2 0l2 -1l2 6l2 10l2 0l2 -5l2 -5l2 3l2 3l2 4l2 -13l2 -1l2 -6l2 4l2 3l2 5l2 -6l2 1l2 -7l2 0l2 -2l2 11l2 -6l2 6l2 10l2 -12l2 6l2 -4l2 -2l2 7l2 2l2 -5l2 -3l2 -4l2 -6l2 10l2 -8l2 -1l2 8l2 -2l2 14l2 1l2 -2l2 -8l2 -3l2 7l2 8l2 2l2 -1l2 -3l2 -13l2 8l2 -1l2 -1l2 -7l2 5l2 -2l2 0l2 4l2 -7l2 2l2 8l2 6l2 0l2 -5l2 -8l2 -6l2 4l2 5l2 -4l2 -3l2 -4l2 -2l2 -9l2 12l2 1l2 -1l2 -10l2 7l2 -8l2 1l2 3l2 9l2 -1l2 -5l2 5l2 -2l2 -2l2 16l2 6l2 -3l2 4l2 13l2 -11l2 -14l2 -3l2 2l2 -1l2 -1l2 2l2 -1l2 -1l2 2l2 -5l2 7l2 11l2 -6l2 -7l2 -3l2 0l2 -4l2 7l2 8l2 4l2 -7l2 5l2 -9l2 -15l2 10l2 5l2 3l2 -20l2 19l2 0l2 -7l2 -12l2 4l2 4l2 -20l2 13l2 -6l2 4l2 -13l2 13l2 -2l2 -2l2 9l2 0l2 0l2 -5l2 6l2 1l2 18l2 -17l2 -16l2 16l2 13l2 -3l2 8l2 1l2 -10l2 -5l2 -4l2 2l2 8l2 -2l2 0l2 11l2 2l2 -13l2 6l2 4l2 -4l2 12l2 -24l2 -1l2 9l2 7l2 -5l2 11l2 -8l2 29l2 -9l2 0l2 -17l2 7l2 -9l2 11l2 1l2 -17l2 4l2 -1l2 -5l2 10l2 2l2 -16l2 22l2 -9l2 -18l2 19l2 -9l2 0l2 3l2 15l2 -7l2 -12l2 20l2 -9l2 4l2 -8l2 -1l2 14l2 1l2 -24l2 5l2 -6l2 -5l2 9l2 12l2 4l2 -3l2 -8l2 7l2 -1l2 2l2 -6l2 -14l2 12l2 21l2 -3l2 -3l2 5l2 -10l2 -6l2 -1l2 10l2 11l2 -5l2 3l2 -2l2 -12l2 18l2 3l2 -14l2 12l2 5l2 -5l2 -17l2 -5l2 -4l2 14l2 2l2 0l2 -10l2 -11l2 0l2 6l2 6l2 2l2 9l2 -12l2 -7l2 14l2 -19l2 3l2 8l2 -8l2 7l2 -24l2 -4l2 6l2 4l2 1l2 1l2 10l2 -10l2 0l2 -10l2 -4l2 2l2 -9l2 10l2 1l2 4l2 15l2 -13l2 13l2 -2l2 3l2 -13l2 25l2 5l2 -6l2 -11l2 14l2 0l2 2l2 -8l2 -11l2 -1l2 7l2 3l2 -4l2 -12l2 7l2 -4l2 -16l2 17l2 -14l2 7l2 10l2 5l2 -17l2 10l2 -7l2 3l2 -5l2 6l2 -13l2 11l2 -8l2 3l2 6l2 13l2 7l2 2l2 -13l2 -10l2 -5l2 8l2 -4l2 7l2 -7M388 700l2 0l2 1l2 -4l2 11l2 -9l2 -2l2 2l2 5l2 7l2 -6l2 -6l2 2l2 -9l2 2l2 3l2 0l2 0l2 2l2 -1l2 -3l2 5l2 -1l2 -5l2 5l2 6l2 7l2 -6l2 1l2 -3l2 -1l2 -7l2 -3l2 -5l2 2l2 7l2 -1l2 6l2 -1l2 -6l2 3l2 -8l2 11l2 -1l2 2l2 -5l2 -14l2 2l2 7l2 6l2 5l2 2l2 -1l2 17l2 -11l2 -10l2 2l2 0l2 2l2 -7l2 6l2 -1l2 -6l2 10l2 4l2 -8l2 4l2 -8l2 10l2 2l2 -16l2 -1l2 7l2 5l2 -7l2 5l2 9l2 -4l2 -4l2 3l2 4l2 -10l2 0l2 7l2 -2l2 7l2 -12l2 -1l2 5l2 -10l2 2l2 2l2 -2l2 -2l2 1l2 -10l2 0l2 -1l2 9l2 -1l2 6l2 3l2 1l2 -2l2 -3l2 -1l2 0l2 -3l2 6l2 -6l2 4l2 15l2 0l2 -9l2 -3l2 -7l2 -1l2 5l2 -6l2 2l2 -5l2 4l2 -9l2 -7l2 4l2 4l2 0l2 -5l2 8l2 -9l2 5l2 -10l2 -17l2 -2l2 -5l2 -15l2 -7l2 12l2 -1l2 -8l2 0l2 2l2 -6l2 -3l2 -2l2 0l2 -8l2 -5l2 -9l2 6l2 -9l2 7l2 2l2 0l2 -6l2 25l2 -8l2 3l2 4l2 -6l2 12l2 -8l2 9l2 1l2 1l2 1l2 -2l2 8l2 -10l2 23l2 3l2 -2l2 0l2 5l2 -16l2 19l2 12l2 3l2 5l2 -6l2 15l2 -3l2 -10l2 -1l2 8l2 1l2 0l2 -21l2 15l2 -6l2 2l2 16l2 -1l2 15l2 1l2 -3l2 -14l2 17l2 3l2 -4l2 1l2 0l2 -16l2 -13l2 -14l2 -3l2 25l2 4l2 -1l2 9l2 9l2 -15l2 -7l2 1l2 -9l2 30l2 0l2 -10l2 1l2 -2l2 -9l2 -14l2 -8l2 10l2 10l2 -14l2 4l2 9l2 11l2 7l2 -3l2 7l2 -12l2 -8l2 4l2 14l2 6l2 -10l2 11l2 -1l2 5l2 1l2 1l2 -10l2 -2l2 1l2 -1l2 2l2 24l2 8l2 -22l2 -16l2 1l2 2l2 -9l2 -7l2 -4l2 -2l2 2l2 5l2 -3l2 10l2 7l2 0l2 0l2 -9l2 10l2 5l2 -19l2 -1l2 -4l2 4l2 12l2 -2l2 -14l2 14l2 -6l2 6l2 -22l2 23l2 -4l2 -3l2 3l2 -2l2 -19l2 2l2 5l2 15l2 -1l2 0l2 -14l2 4l2 6l2 -18l2 4l2 -3l2 2l2 -11l2 -5l2 4l2 14l2 3l2 12l2 -13l2 16l2 -1l2 0l2 0l2 4l2 -13l2 -8l2 17l2 -10l2 11l2 -14l2 2l2 -4l2 0l2 2l2 -3l2 2l2 4l2 22l2 -20l2 -9l2 10l2 6l2 6l2 -10l2 -8l2 9l2 -1l2 -11l2 19l2 -12l2 0l2 -14l2 -2l2 10l2 -5l2 4l2 5l2 3l2 5l2 6l2 -6l2 2l2 5l2 -1l2 -7l2 -14l2 15l2 -12l2 -2l2 -2l2 -7l2 15l2 -4l2 7l2 -1l2 -1l2 8l2 7l2 -17l2 -3l2 6l2 2l2 -11l2 8l2 -8l2 4l2 16l2 -1l2 -9l2 3l2 14l2 -9l2 -4l2 -13l2 -1M388 708l2 -14l2 13l2 -3l2 -2l2 2l2 -2l2 -2l2 -3l2 1l2 4l2 1l2 -2l2 2l2 0l2 4l2 2l2 -1l2 1l2 -2l2 5l2 -10l2 1l2 -1l2 3l2 11l2 4l2 -8l2 -1l2 -5l2 0l2 2l2 1l2 2l2 -6l2 8l2 2l2 -9l2 7l2 -1l2 -4l2 7l2 2l2 -4l2 -11l2 1l2 -10l2 9l2 3l2 7l2 -7l2 4l2 5l2 -1l2 -2l2 -7l2 12l2 -10l2 1l2 -3l2 4l2 -2l2 -1l2 0l2 -2l2 7l2 -8l2 -1l2 11l2 -5l2 4l2 -4l2 3l2 3l2 8l2 -4l2 -2l2 5l2 0l2 -4l2 -9l2 -3l2 4l2 -3l2 1l2 6l2 6l2 -12l2 8l2 -2l2 -10l2 12l2 -2l2 -3l2 -2l2 -8l2 -7l2 6l2 7l2 4l2 13l2 -12l2 -3l2 -2l2 -2l2 4l2 2l2 -3l2 4l2 -2l2 12l2 -3l2 -3l2 5l2 3l2 -10l2 6l2 8l2 -10l2 -8l2 -1l2 1l2 5l2 7l2 1l2 9l2 -7l2 -4l2 2l2 1l2 0l2 -4l2 -7l2 6l2 -5l2 -7l2 3l2 10l2 6l2 -2l2 0l2 2l2 -17l2 -7l2 -2l2 8l2 13l2 8l2 -12l2 -4l2 11l2 -1l2 -6l2 13l2 -9l2 12l2 -15l2 -6l2 -5l2 2l2 -4l2 -2l2 -1l2 -1l2 18l2 -9l2 -10l2 6l2 -6l2 -1l2 6l2 12l2 -3l2 -10l2 7l2 -5l2 7l2 -7l2 1l2 -7l2 -9l2 0l2 -6l2 6l2 -5l2 12l2 2l2 -1l2 10l2 7l2 -4l2 -8l2 16l2 -9l2 -3l2 4l2 -7l2 8l2 -3l2 5l2 -7l2 -1l2 -6l2 14l2 -6l2 2l2 -1l2 -2l2 -7l2 8l2 2l2 6l2 5l2 -16l2 -29l2 27l2 -12l2 -11l2 -18l2 28l2 -10l2 5l2 5l2 10l2 8l2 10l2 -19l2 -10l2 -21l2 16l2 3l2 9l2 -13l2 5l2 11l2 -2l2 -15l2 9l2 -8l2 2l2 -7l2 22l2 20l2 -6l2 -2l2 -9l2 -3l2 10l2 0l2 -8l2 -7l2 9l2 -20l2 14l2 5l2 1l2 -13l2 4l2 -5l2 10l2 5l2 8l2 0l2 -3l2 3l2 -7l2 -7l2 -14l2 -9l2 19l2 1l2 2l2 -7l2 8l2 -4l2 -3l2 -5l2 8l2 0l2 -1l2 -3l2 7l2 10l2 -5l2 0l2 10l2 -6l2 -10l2 -10l2 4l2 -12l2 3l2 -9l2 1l2 13l2 19l2 -13l2 -3l2 12l2 -19l2 8l2 -25l2 14l2 -5l2 13l2 -7l2 10l2 -1l2 2l2 10l2 0l2 -13l2 14l2 -1l2 -12l2 -11l2 16l2 -10l2 -7l2 18l2 3l2 -14l2 4l2 -6l2 10l2 -15l2 -10l2 4l2 4l2 21l2 -20l2 -1l2 4l2 -1l2 -14l2 8l2 8l2 7l2 -14l2 12l2 -12l2 17l2 2l2 1l2 -12l2 -1l2 2l2 13l2 -1l2 -11l2 2l2 3l2 -3l2 2l2 4l2 13l2 -7l2 12l2 -10l2 -7l2 -7l2 -8l2 5l2 -16l2 -4l2 4l2 23l2 19l2 -10l2 6l2 -14l2 5l2 17l2 -3l2 -25l2 7l2 -8l2 -10l2 0l2 7M388 706l2 -9l2 -7l2 17l2 -8l2 4l2 0l2 2l2 -2l2 -3l2 -1l2 0l2 -9l2 2l2 4l2 5l2 3l2 8l2 -8l2 0l2 4l2 -4l2 -5l2 -1l2 0l2 13l2 -16l2 6l2 1l2 -6l2 -2l2 -2l2 5l2 1l2 15l2 -10l2 11l2 7l2 1l2 3l2 -4l2 -8l2 -13l2 6l2 7l2 -1l2 -1l2 -5l2 -14l2 7l2 5l2 11l2 -11l2 15l2 -1l2 -8l2 1l2 -3l2 -7l2 9l2 -14l2 2l2 -2l2 1l2 4l2 2l2 8l2 6l2 -9l2 1l2 7l2 1l2 -6l2 -1l2 -5l2 -11l2 -2l2 6l2 2l2 2l2 -9l2 17l2 -8l2 2l2 5l2 3l2 -2l2 0l2 6l2 1l2 -2l2 4l2 -5l2 -7l2 0l2 1l2 8l2 -13l2 8l2 12l2 -12l2 0l2 -2l2 -5l2 0l2 0l2 5l2 -2l2 -5l2 8l2 -5l2 1l2 -4l2 -7l2 -12l2 11l2 -1l2 9l2 -9l2 6l2 -8l2 21l2 9l2 -2l2 -7l2 2l2 -6l2 2l2 -7l2 -1l2 12l2 3l2 -9l2 -7l2 2l2 3l2 3l2 10l2 -22l2 11l2 -13l2 8l2 -1l2 5l2 -8l2 9l2 13l2 -11l2 -1l2 -1l2 5l2 1l2 -19l2 13l2 2l2 1l2 1l2 20l2 -7l2 -4l2 -11l2 -1l2 -11l2 -6l2 6l2 7l2 -1l2 7l2 7l2 -20l2 11l2 12l2 -7l2 -1l2 13l2 -4l2 -3l2 -7l2 10l2 8l2 -4l2 -1l2 -5l2 -9l2 -8l2 5l2 -1l2 -10l2 10l2 -2l2 10l2 3l2 -9l2 -10l2 -3l2 27l2 -3l2 -12l2 -16l2 1l2 6l2 -4l2 -10l2 12l2 0l2 -2l2 -1l2 -9l2 6l2 -6l2 -7l2 7l2 -1l2 15l2 3l2 3l2 10l2 -2l2 -8l2 16l2 2l2 9l2 -1l2 -2l2 -10l2 10l2 -2l2 12l2 1l2 -22l2 0l2 7l2 16l2 -19l2 -3l2 7l2 -16l2 -11l2 10l2 4l2 -2l2 1l2 7l2 -6l2 -5l2 0l2 -1l2 7l2 -1l2 -14l2 1l2 13l2 -9l2 -7l2 3l2 6l2 10l2 -21l2 2l2 -11l2 12l2 0l2 7l2 -19l2 15l2 3l2 -3l2 8l2 -9l2 -6l2 7l2 -7l2 15l2 0l2 -18l2 -3l2 23l2 -3l2 15l2 0l2 2l2 -2l2 -10l2 -13l2 2l2 4l2 11l2 1l2 -10l2 -3l2 8l2 1l2 -3l2 -8l2 -7l2 12l2 3l2 0l2 6l2 -2l2 0l2 -10l2 -3l2 -11l2 2l2 -14l2 11l2 -13l2 7l2 8l2 0l2 0l2 0l2 -2l2 8l2 -6l2 -11l2 17l2 4l2 -19l2 13l2 7l2 -8l2 -31l2 9l2 15l2 15l2 3l2 -1l2 -3l2 -7l2 7l2 -11l2 4l2 6l2 5l2 -11l2 6l2 5l2 -14l2 -20l2 26l2 5l2 -1l2 -4l2 -16l2 16l2 -14l2 1l2 -3l2 20l2 -10l2 -7l2 -5l2 1l2 11l2 -2l2 11l2 7l2 -15l2 7l2 -19l2 4l2 -5l2 -6l2 -3l2 -8l2 13l2 -5l2 -4l2 9l2 21l2 -3l2 -9l2 10l2 0l2 -8l2 -7l2 3l2 1M388 707l2 -2l2 1l2 2l2 5l2 -14l2 5l2 8l2 -5l2 -6l2 -5l2 0l2 5l2 1l2 -7l2 11l2 -5l2 -3l2 2l2 3l2 4l2 -9l2 4l2 -1l2 -3l2 1l2 -1l2 4l2 -5l2 -6l2 5l2 13l2 -7l2 -1l2 -2l2 1l2 -5l2 14l2 10l2 -1l2 -3l2 -1l2 -18l2 0l2 5l2 -6l2 -2l2 3l2 3l2 8l2 -2l2 -6l2 7l2 -2l2 5l2 1l2 -1l2 -3l2 1l2 7l2 -7l2 -7l2 -2l2 8l2 -4l2 2l2 -4l2 2l2 0l2 2l2 -1l2 0l2 4l2 -6l2 11l2 -8l2 8l2 5l2 -1l2 2l2 1l2 -1l2 -6l2 -4l2 1l2 -6l2 5l2 1l2 -1l2 6l2 0l2 -6l2 0l2 6l2 -1l2 -2l2 8l2 5l2 -8l2 0l2 -1l2 3l2 -1l2 -4l2 4l2 -5l2 4l2 6l2 -2l2 9l2 -5l2 -6l2 -13l2 -1l2 3l2 -3l2 6l2 6l2 7l2 0l2 0l2 1l2 10l2 -10l2 15l2 -12l2 -4l2 -5l2 9l2 6l2 -11l2 -1l2 2l2 -8l2 12l2 -1l2 -5l2 9l2 3l2 8l2 11l2 2l2 -6l2 -7l2 -8l2 -2l2 11l2 -4l2 7l2 -7l2 12l2 -19l2 5l2 2l2 1l2 -16l2 -9l2 3l2 9l2 -6l2 19l2 -9l2 -4l2 -1l2 9l2 -14l2 0l2 -20l2 17l2 -10l2 9l2 11l2 -4l2 -3l2 -3l2 -1l2 4l2 -19l2 2l2 -1l2 15l2 -8l2 -13l2 -3l2 -5l2 -2l2 2l2 10l2 -11l2 19l2 12l2 -8l2 4l2 -8l2 -9l2 -3l2 -9l2 20l2 5l2 -22l2 10l2 23l2 1l2 6l2 -7l2 -19l2 21l2 0l2 16l2 -1l2 1l2 -2l2 -24l2 13l2 -4l2 -8l2 -13l2 18l2 18l2 1l2 1l2 -12l2 9l2 2l2 15l2 -10l2 -13l2 1l2 6l2 30l2 -24l2 -12l2 -10l2 17l2 6l2 10l2 -34l2 -5l2 -7l2 13l2 -1l2 2l2 -5l2 7l2 -10l2 10l2 2l2 -6l2 7l2 4l2 -1l2 5l2 -9l2 -16l2 8l2 -10l2 14l2 -5l2 -12l2 3l2 8l2 -4l2 1l2 -1l2 1l2 0l2 1l2 12l2 0l2 3l2 -4l2 -17l2 3l2 -3l2 -15l2 10l2 9l2 -12l2 2l2 3l2 -7l2 13l2 10l2 -5l2 0l2 -4l2 -14l2 16l2 -1l2 8l2 -2l2 -2l2 -23l2 9l2 8l2 18l2 5l2 -7l2 -11l2 -10l2 11l2 -2l2 -5l2 1l2 8l2 -2l2 -7l2 12l2 -16l2 2l2 -8l2 1l2 17l2 -1l2 -4l2 -7l2 7l2 -20l2 3l2 -1l2 -2l2 -17l2 18l2 -10l2 4l2 6l2 13l2 4l2 -15l2 -12l2 2l2 3l2 -2l2 -12l2 14l2 15l2 7l2 -8l2 6l2 -4l2 -2l2 0l2 7l2 -4l2 14l2 -10l2 1l2 8l2 -18l2 -20l2 13l2 3l2 3l2 -11l2 -8l2 18l2 6l2 7l2 8l2 -17l2 -8l2 -15l2 0l2 11l2 3l2 -2l2 -3l2 -6l2 8l2 1l2 -7l2 -6l2 0l2 16l2 14l2 3l2 -13l2 20l2 5l2 -14M388 691l2 12l2 -11l2 -4l2 18l2 -5l2 -1l2 -1l2 1l2 5l2 -8l2 -2l2 7l2 -2l2 7l2 -5l2 0l2 -4l2 -3l2 -4l2 5l2 4l2 1l2 2l2 2l2 -11l2 8l2 4l2 -5l2 -1l2 0l2 -1l2 3l2 4l2 -5l2 -4l2 11l2 -4l2 1l2 1l2 -2l2 10l2 -3l2 -10l2 -1l2 -5l2 5l2 8l2 -1l2 -6l2 -7l2 6l2 6l2 -8l2 -4l2 7l2 3l2 5l2 -4l2 2l2 -2l2 -2l2 -5l2 9l2 -2l2 3l2 -2l2 2l2 -6l2 0l2 7l2 -2l2 3l2 -6l2 -4l2 -1l2 1l2 -6l2 2l2 4l2 -2l2 3l2 2l2 5l2 1l2 3l2 -2l2 -5l2 5l2 -8l2 1l2 0l2 2l2 4l2 -8l2 4l2 -13l2 -8l2 0l2 13l2 4l2 -2l2 -4l2 8l2 -2l2 3l2 -12l2 -3l2 3l2 3l2 -5l2 -4l2 -1l2 -2l2 12l2 -9l2 -17l2 -10l2 -2l2 5l2 -7l2 -9l2 3l2 -1l2 10l2 -2l2 -8l2 7l2 13l2 -10l2 -1l2 0l2 3l2 6l2 -4l2 -7l2 7l2 -4l2 6l2 -18l2 9l2 13l2 -3l2 -8l2 3l2 9l2 8l2 6l2 -7l2 3l2 3l2 -5l2 10l2 -2l2 -7l2 -7l2 -6l2 5l2 8l2 -12l2 6l2 1l2 14l2 -16l2 11l2 -2l2 7l2 -3l2 1l2 -9l2 8l2 1l2 9l2 -1l2 -2l2 0l2 -6l2 -6l2 22l2 10l2 8l2 -11l2 5l2 -19l2 -10l2 7l2 -10l2 7l2 0l2 3l2 -15l2 15l2 15l2 15l2 -2l2 -13l2 -7l2 -8l2 -3l2 9l2 17l2 -16l2 -2l2 0l2 7l2 -14l2 8l2 2l2 0l2 -5l2 -3l2 -9l2 -8l2 14l2 -15l2 6l2 -9l2 -22l2 -13l2 24l2 21l2 8l2 -8l2 0l2 17l2 -9l2 10l2 13l2 11l2 0l2 -14l2 13l2 -18l2 1l2 -22l2 -3l2 18l2 3l2 -3l2 2l2 12l2 -18l2 15l2 5l2 -15l2 -7l2 15l2 -13l2 5l2 10l2 6l2 -4l2 3l2 -1l2 9l2 -8l2 -10l2 12l2 -14l2 12l2 4l2 -3l2 5l2 -4l2 -3l2 12l2 -1l2 -32l2 -7l2 7l2 -9l2 10l2 -6l2 8l2 -9l2 -8l2 20l2 -13l2 10l2 -5l2 -17l2 -4l2 3l2 21l2 -2l2 -5l2 5l2 -10l2 -2l2 3l2 21l2 -5l2 -5l2 -1l2 3l2 4l2 -18l2 -8l2 0l2 8l2 -6l2 8l2 -11l2 14l2 9l2 4l2 -12l2 -1l2 8l2 -31l2 1l2 13l2 9l2 -14l2 7l2 2l2 4l2 0l2 -8l2 -2l2 6l2 -12l2 -1l2 4l2 10l2 -9l2 -16l2 14l2 8l2 1l2 0l2 3l2 -15l2 -2l2 -8l2 16l2 20l2 -2l2 -5l2 5l2 4l2 -9l2 -21l2 0l2 -4l2 3l2 -7l2 12l2 -10l2 -4l2 12l2 1l2 17l2 -13l2 3l2 9l2 -3l2 -2l2 9l2 -18l2 8l2 -14l2 -3l2 16l2 0l2 1l2 5l2 -1l2 10l2 -3l2 -7l2 31l2 -16l2 4l2 -8l2 4l2 -11l2 8l2 15l2 -13M388 709l2 -4l2 10l2 -1l2 4l2 4l2 1l2 -5l2 -7l2 -7l2 2l2 8l2 -8l2 2l2 -4l2 1l2 8l2 -6l2 -1l2 0l2 -5l2 10l2 -7l2 -4l2 1l2 -6l2 6l2 3l2 -7l2 -4l2 6l2 0l2 -3l2 7l2 5l2 -4l2 2l2 0l2 2l2 -9l2 5l2 -7l2 -6l2 4l2 -3l2 6l2 1l2 1l2 9l2 -6l2 0l2 4l2 1l2 6l2 -2l2 -10l2 -9l2 0l2 -3l2 4l2 0l2 -5l2 -3l2 -5l2 7l2 6l2 7l2 4l2 -10l2 -2l2 6l2 8l2 2l2 -3l2 9l2 -6l2 -6l2 -1l2 4l2 -6l2 5l2 -8l2 4l2 0l2 -2l2 -8l2 -2l2 6l2 5l2 7l2 -6l2 -4l2 -6l2 6l2 15l2 -8l2 5l2 -21l2 6l2 16l2 -13l2 4l2 5l2 2l2 4l2 -5l2 -7l2 3l2 -1l2 -4l2 -2l2 -1l2 2l2 2l2 -4l2 -3l2 1l2 5l2 -5l2 -2l2 2l2 2l2 -10l2 -9l2 -2l2 -4l2 3l2 18l2 7l2 0l2 -8l2 -7l2 3l2 -3l2 3l2 -5l2 -2l2 -2l2 -3l2 11l2 4l2 -3l2 -2l2 19l2 0l2 2l2 -4l2 -3l2 -9l2 -12l2 0l2 -4l2 12l2 -1l2 -1l2 12l2 -14l2 17l2 -3l2 -3l2 3l2 -12l2 8l2 -13l2 2l2 1l2 8l2 4l2 10l2 15l2 0l2 -5l2 -13l2 6l2 -2l2 -1l2 -7l2 -2l2 16l2 12l2 -6l2 -12l2 0l2 -4l2 1l2 0l2 -1l2 5l2 11l2 -21l2 14l2 -17l2 0l2 -1l2 -11l2 3l2 16l2 -9l2 7l2 -4l2 -2l2 4l2 -5l2 -9l2 7l2 0l2 -14l2 7l2 -2l2 23l2 -2l2 18l2 2l2 -23l2 -13l2 -1l2 34l2 -24l2 -14l2 6l2 -4l2 -10l2 -11l2 -4l2 -1l2 1l2 -5l2 13l2 16l2 5l2 3l2 -9l2 4l2 6l2 0l2 -9l2 12l2 -3l2 16l2 3l2 9l2 -15l2 11l2 4l2 -10l2 7l2 9l2 -11l2 -20l2 -9l2 21l2 -1l2 -4l2 2l2 7l2 -15l2 1l2 -4l2 -5l2 20l2 9l2 -4l2 -8l2 0l2 -14l2 11l2 -1l2 -15l2 20l2 2l2 -8l2 -19l2 -2l2 7l2 -8l2 6l2 3l2 6l2 -25l2 5l2 1l2 -8l2 21l2 5l2 -2l2 15l2 -7l2 5l2 4l2 -6l2 0l2 -14l2 7l2 15l2 8l2 -10l2 -10l2 -6l2 9l2 12l2 7l2 -4l2 1l2 -18l2 12l2 9l2 -4l2 -5l2 3l2 -8l2 15l2 -4l2 -6l2 1l2 -5l2 8l2 -1l2 16l2 -18l2 1l2 3l2 -9l2 6l2 0l2 -7l2 1l2 -18l2 12l2 6l2 -14l2 10l2 -5l2 -1l2 5l2 1l2 -1l2 4l2 -3l2 6l2 9l2 4l2 -16l2 9l2 -11l2 -6l2 5l2 6l2 11l2 -4l2 -12l2 -5l2 6l2 -14l2 7l2 16l2 0l2 5l2 -13l2 -14l2 14l2 -6l2 -5l2 4l2 -8l2 4l2 -6l2 14l2 -6l2 11l2 5l2 -6l2 5l2 7l2 -6l2 2l2 5l2 -4l2 -19l2 -10l2 -2M388 704l2 0l2 3l2 -2l2 -1l2 -2l2 5l2 -5l2 -2l2 6l2 -1l2 3l2 4l2 -7l2 -9l2 -3l2 7l2 -1l2 3l2 6l2 0l2 4l2 -5l2 9l2 -7l2 -4l2 10l2 -5l2 -1l2 -8l2 6l2 -4l2 -4l2 1l2 2l2 -6l2 8l2 4l2 -8l2 0l2 -2l2 4l2 -2l2 -1l2 1l2 1l2 9l2 4l2 -6l2 7l2 -5l2 -4l2 -8l2 0l2 0l2 4l2 3l2 0l2 -5l2 8l2 -10l2 5l2 -2l2 3l2 -3l2 4l2 3l2 -3l2 -4l2 3l2 -2l2 -6l2 -2l2 1l2 8l2 -2l2 4l2 -3l2 -1l2 1l2 -1l2 -1l2 -3l2 5l2 1l2 -7l2 8l2 -2l2 1l2 -6l2 -8l2 0l2 6l2 14l2 0l2 3l2 -4l2 -4l2 0l2 -3l2 -4l2 -6l2 -7l2 5l2 -4l2 -3l2 2l2 4l2 11l2 4l2 -3l2 2l2 -1l2 -2l2 -2l2 -13l2 3l2 5l2 15l2 -11l2 4l2 -23l2 -5l2 12l2 -3l2 3l2 -2l2 1l2 9l2 -14l2 4l2 4l2 3l2 -5l2 -13l2 -2l2 5l2 13l2 9l2 -11l2 -3l2 -10l2 4l2 8l2 -16l2 5l2 1l2 7l2 4l2 -9l2 -1l2 -4l2 14l2 5l2 -13l2 23l2 -7l2 -9l2 -2l2 12l2 3l2 -9l2 -1l2 2l2 6l2 13l2 1l2 -16l2 11l2 -1l2 -7l2 7l2 10l2 -14l2 2l2 -6l2 5l2 -14l2 2l2 25l2 -20l2 -7l2 -11l2 5l2 12l2 16l2 -3l2 11l2 -13l2 -15l2 9l2 -2l2 4l2 11l2 -8l2 5l2 -13l2 8l2 -10l2 0l2 -6l2 23l2 -5l2 10l2 -9l2 -6l2 -14l2 8l2 23l2 -15l2 18l2 -5l2 0l2 0l2 -21l2 19l2 -1l2 -5l2 8l2 -19l2 -14l2 -1l2 19l2 11l2 -4l2 20l2 2l2 -4l2 -10l2 -10l2 -6l2 -13l2 -18l2 14l2 11l2 -9l2 21l2 1l2 -17l2 6l2 0l2 -1l2 7l2 -5l2 4l2 0l2 -16l2 -2l2 -6l2 9l2 13l2 -7l2 5l2 -6l2 21l2 2l2 12l2 -3l2 -8l2 9l2 -5l2 -1l2 -8l2 14l2 -13l2 -12l2 6l2 5l2 -6l2 3l2 -5l2 1l2 -3l2 7l2 7l2 -3l2 -2l2 3l2 -9l2 2l2 -4l2 4l2 6l2 -14l2 9l2 7l2 -2l2 -18l2 -9l2 -6l2 8l2 14l2 5l2 -8l2 1l2 -2l2 1l2 -1l2 -9l2 10l2 -15l2 23l2 5l2 -2l2 -1l2 2l2 -6l2 7l2 -22l2 6l2 -7l2 -1l2 6l2 8l2 9l2 3l2 3l2 -3l2 1l2 -1l2 -24l2 2l2 7l2 -20l2 0l2 4l2 10l2 -9l2 -7l2 6l2 25l2 -4l2 -3l2 -9l2 15l2 -10l2 0l2 -10l2 -5l2 19l2 2l2 -12l2 -7l2 -5l2 15l2 -10l2 1l2 -7l2 16l2 -18l2 0l2 12l2 7l2 1l2 12l2 -13l2 16l2 -1l2 -8l2 2l2 -11l2 -1l2 3l2 -10l2 11l2 10l2 -13l2 -5l2 10l2 10l2 -5l2 2l2 -4l2 -4l2 -4l2 1l2 0l2 -8l2 16l2 28M388 710l2 -1l2 -4l2 -11l2 1l2 3l2 7l2 12l2 -8l2 -9l2 -3l2 -2l2 0l2 -4l2 3l2 4l2 3l2 6l2 -4l2 4l2 -6l2 1l2 -4l2 0l2 -4l2 3l2 2l2 -7l2 -2l2 1l2 3l2 5l2 6l2 -12l2 -2l2 3l2 1l2 6l2 -3l2 0l2 2l2 -6l2 5l2 -2l2 -5l2 6l2 1l2 4l2 -3l2 -2l2 -1l2 9l2 2l2 -7l2 -8l2 7l2 -5l2 8l2 -2l2 2l2 4l2 -3l2 6l2 -11l2 1l2 -3l2 -4l2 -5l2 6l2 5l2 5l2 -9l2 2l2 -6l2 3l2 -4l2 2l2 1l2 1l2 7l2 -3l2 -7l2 4l2 -1l2 12l2 3l2 -1l2 -3l2 -10l2 5l2 1l2 -7l2 1l2 4l2 1l2 -7l2 -4l2 7l2 -4l2 1l2 0l2 2l2 8l2 3l2 0l2 -1l2 -14l2 4l2 -8l2 6l2 4l2 -10l2 -2l2 5l2 6l2 -6l2 2l2 -1l2 0l2 -9l2 -6l2 1l2 2l2 7l2 3l2 -9l2 -8l2 -1l2 -14l2 -1l2 6l2 -12l2 3l2 -6l2 5l2 -7l2 -7l2 11l2 -5l2 2l2 -7l2 -15l2 -4l2 -16l2 8l2 4l2 -6l2 -1l2 -2l2 13l2 4l2 0l2 12l2 -5l2 8l2 -10l2 5l2 1l2 0l2 12l2 -4l2 -2l2 13l2 11l2 8l2 -11l2 13l2 9l2 8l2 -14l2 -2l2 -3l2 -13l2 21l2 25l2 -7l2 -3l2 -1l2 2l2 4l2 10l2 3l2 -24l2 8l2 -1l2 2l2 -6l2 4l2 -14l2 11l2 13l2 -4l2 -4l2 -5l2 3l2 -8l2 -4l2 21l2 13l2 -3l2 -7l2 17l2 -2l2 -22l2 -5l2 2l2 2l2 -2l2 14l2 -31l2 7l2 3l2 10l2 -5l2 -4l2 -3l2 8l2 12l2 -8l2 5l2 4l2 -6l2 -7l2 -4l2 -2l2 4l2 -14l2 7l2 -6l2 -8l2 1l2 12l2 2l2 -6l2 7l2 12l2 -7l2 5l2 2l2 -4l2 2l2 7l2 -17l2 -8l2 22l2 -21l2 0l2 -3l2 2l2 16l2 -17l2 6l2 16l2 1l2 -15l2 8l2 -4l2 -9l2 12l2 -3l2 -20l2 -4l2 15l2 -5l2 -3l2 2l2 3l2 0l2 -3l2 -15l2 11l2 -6l2 -21l2 25l2 6l2 2l2 9l2 9l2 -1l2 -10l2 -7l2 3l2 8l2 -5l2 13l2 1l2 6l2 3l2 3l2 7l2 -11l2 -7l2 10l2 -5l2 21l2 -1l2 -2l2 -11l2 4l2 -8l2 -20l2 5l2 8l2 -1l2 7l2 -12l2 -9l2 2l2 8l2 5l2 -17l2 -13l2 -4l2 8l2 13l2 -2l2 12l2 -4l2 1l2 11l2 -20l2 -3l2 -2l2 15l2 -10l2 -1l2 0l2 2l2 1l2 2l2 -1l2 -5l2 -5l2 -9l2 2l2 8l2 18l2 -10l2 10l2 11l2 -13l2 -11l2 13l2 -13l2 -15l2 5l2 6l2 2l2 -4l2 -12l2 -1l2 4l2 3l2 -1l2 9l2 -6l2 -3l2 -4l2 15l2 4l2 -11l2 13l2 0l2 12l2 1l2 0l2 5l2 -14l2 -11l2 14l2 -17l2 -9l2 2l2 17l2 -12l2 3l2 5l2 10l2 -4l2 -1M388 702l2 1l2 -7l2 0l2 -6l2 1l2 -2l2 4l2 9l2 0l2 0l2 -7l2 7l2 -8l2 5l2 -1l2 13l2 -9l2 0l2 -15l2 13l2 -3l2 -1l2 -9l2 12l2 -1l2 4l2 -1l2 7l2 -8l2 -1l2 -6l2 10l2 1l2 -6l2 4l2 4l2 2l2 -1l2 4l2 0l2 -7l2 1l2 -3l2 1l2 -4l2 -4l2 9l2 -1l2 3l2 -2l2 5l2 -4l2 -3l2 2l2 -2l2 6l2 -3l2 -3l2 3l2 -5l2 3l2 2l2 -2l2 -5l2 -5l2 -9l2 11l2 6l2 -5l2 -12l2 9l2 2l2 -2l2 3l2 10l2 -4l2 -1l2 1l2 -2l2 0l2 -4l2 5l2 6l2 -9l2 -1l2 1l2 -5l2 2l2 11l2 -3l2 -2l2 4l2 -7l2 -9l2 13l2 -1l2 -2l2 -1l2 -1l2 -2l2 5l2 7l2 -8l2 2l2 5l2 0l2 -1l2 -9l2 0l2 3l2 4l2 -8l2 1l2 -1l2 -10l2 11l2 6l2 0l2 2l2 -13l2 3l2 -6l2 2l2 -4l2 -11l2 -9l2 -2l2 -3l2 6l2 4l2 -10l2 -9l2 4l2 12l2 5l2 0l2 -9l2 -9l2 -3l2 7l2 -3l2 -11l2 4l2 -5l2 15l2 6l2 -14l2 3l2 -2l2 -5l2 13l2 2l2 1l2 6l2 0l2 -8l2 4l2 -14l2 10l2 -1l2 10l2 7l2 1l2 -10l2 11l2 -7l2 -10l2 31l2 -17l2 7l2 4l2 1l2 -12l2 0l2 2l2 5l2 3l2 -10l2 10l2 1l2 -10l2 5l2 -9l2 4l2 11l2 -1l2 0l2 11l2 6l2 1l2 -14l2 19l2 -3l2 21l2 -14l2 0l2 -3l2 -10l2 9l2 5l2 -13l2 -7l2 -1l2 0l2 9l2 16l2 -7l2 -13l2 7l2 -7l2 17l2 -26l2 -8l2 7l2 9l2 5l2 0l2 1l2 1l2 10l2 -1l2 10l2 -10l2 2l2 15l2 -18l2 9l2 -2l2 -12l2 -4l2 14l2 13l2 1l2 -17l2 12l2 -9l2 9l2 -4l2 -7l2 8l2 -24l2 -1l2 -19l2 12l2 -5l2 -2l2 -1l2 12l2 5l2 -4l2 -2l2 -10l2 6l2 -17l2 4l2 4l2 13l2 18l2 -8l2 -7l2 -6l2 -3l2 18l2 -19l2 14l2 -13l2 5l2 0l2 1l2 -10l2 10l2 6l2 -15l2 0l2 -5l2 2l2 3l2 -5l2 5l2 -8l2 11l2 -9l2 2l2 -5l2 -10l2 10l2 4l2 -2l2 13l2 -8l2 -5l2 12l2 -13l2 23l2 -14l2 6l2 23l2 3l2 -19l2 0l2 9l2 -13l2 -6l2 22l2 -10l2 -9l2 2l2 0l2 -4l2 -10l2 1l2 -2l2 -5l2 12l2 1l2 1l2 4l2 2l2 1l2 -22l2 -9l2 -4l2 22l2 -6l2 16l2 9l2 6l2 -10l2 8l2 -14l2 -4l2 4l2 24l2 -1l2 -4l2 -1l2 -3l2 -2l2 -4l2 -12l2 3l2 2l2 12l2 -5l2 -13l2 2l2 9l2 -8l2 0l2 3l2 -5l2 -10l2 7l2 -9l2 20l2 -13l2 10l2 2l2 11l2 -15l2 -2l2 4l2 17l2 1l2 -11l2 3l2 9l2 3l2 -9l2 4l2 8l2 -7l2 -9l2 0l2 -9l2 5l2 5l2 12l2 -1M388 705l2 -4l2 -4l2 3l2 -4l2 4l2 -11l2 5l2 4l2 5l2 -6l2 -7l2 6l2 4l2 -5l2 10l2 -6l2 -3l2 5l2 2l2 -5l2 2l2 5l2 -1l2 -1l2 6l2 -1l2 2l2 1l2 -5l2 -6l2 4l2 2l2 -2l2 8l2 -8l2 3l2 9l2 -9l2 11l2 7l2 -12l2 2l2 -4l2 6l2 3l2 -14l2 -2l2 6l2 5l2 -19l2 10l2 1l2 0l2 2l2 5l2 -11l2 -3l2 4l2 2l2 -1l2 7l2 -1l2 -2l2 -6l2 0l2 -7l2 -12l2 16l2 1l2 -1l2 0l2 9l2 -7l2 -2l2 -2l2 7l2 -4l2 -3l2 -2l2 -1l2 3l2 -12l2 8l2 -6l2 -1l2 12l2 -4l2 10l2 -5l2 5l2 4l2 0l2 -7l2 -4l2 6l2 4l2 -5l2 -2l2 3l2 0l2 -9l2 2l2 1l2 -5l2 2l2 -2l2 8l2 6l2 -16l2 0l2 1l2 12l2 5l2 17l2 -8l2 -3l2 15l2 -4l2 6l2 3l2 -8l2 -14l2 1l2 -1l2 4l2 7l2 -6l2 10l2 2l2 6l2 0l2 0l2 9l2 3l2 3l2 7l2 1l2 4l2 2l2 -5l2 8l2 0l2 -4l2 -14l2 11l2 -2l2 1l2 -8l2 -4l2 9l2 20l2 -5l2 9l2 -10l2 -1l2 -6l2 -10l2 -4l2 -6l2 -3l2 -1l2 5l2 -8l2 -8l2 2l2 17l2 -18l2 -4l2 11l2 4l2 0l2 -3l2 -4l2 1l2 -8l2 1l2 -14l2 13l2 -11l2 4l2 -3l2 -13l2 2l2 8l2 -1l2 -6l2 -1l2 5l2 9l2 -5l2 -7l2 12l2 1l2 1l2 9l2 -1l2 -34l2 -7l2 6l2 8l2 -1l2 -8l2 2l2 9l2 -2l2 -2l2 3l2 5l2 -5l2 -4l2 14l2 9l2 -12l2 5l2 -5l2 6l2 6l2 9l2 0l2 -3l2 -5l2 -11l2 -23l2 6l2 5l2 9l2 -8l2 2l2 -6l2 12l2 -11l2 9l2 6l2 -15l2 16l2 -7l2 -5l2 2l2 14l2 10l2 -10l2 -8l2 0l2 -7l2 0l2 6l2 13l2 3l2 -5l2 12l2 -1l2 0l2 -12l2 -9l2 7l2 3l2 5l2 4l2 5l2 -7l2 -1l2 -9l2 0l2 -3l2 12l2 -19l2 -12l2 -3l2 11l2 -19l2 23l2 0l2 -2l2 2l2 8l2 -7l2 5l2 -5l2 8l2 -2l2 4l2 -21l2 -4l2 18l2 -7l2 -3l2 -2l2 11l2 -7l2 1l2 13l2 -15l2 32l2 -20l2 2l2 -4l2 4l2 1l2 12l2 -12l2 -6l2 10l2 3l2 11l2 -1l2 -2l2 -21l2 -13l2 -4l2 3l2 7l2 2l2 -5l2 12l2 7l2 -6l2 -4l2 6l2 10l2 -6l2 16l2 -22l2 -2l2 -13l2 -9l2 6l2 16l2 -4l2 6l2 11l2 -14l2 -16l2 -5l2 11l2 10l2 -4l2 -4l2 17l2 6l2 -20l2 -18l2 8l2 5l2 2l2 7l2 -15l2 7l2 2l2 0l2 -4l2 -10l2 2l2 9l2 0l2 -4l2 19l2 -6l2 -16l2 1l2 -6l2 7l2 -5l2 5l2 -18l2 4l2 -4l2 0l2 29l2 -7l2 -9l2 -16l2 18l2 -4l2 -1l2 -28l2 3l2 32l2 3l2 14M388 703l2 9l2 -4l2 -3l2 -13l2 -2l2 9l2 -1l2 -2l2 0l2 5l2 -9l2 6l2 -4l2 8l2 1l2 -7l2 -6l2 -7l2 9l2 -4l2 4l2 -1l2 5l2 -8l2 2l2 11l2 1l2 1l2 0l2 0l2 -3l2 -5l2 -3l2 1l2 5l2 4l2 8l2 -1l2 -2l2 -3l2 5l2 5l2 -5l2 2l2 -3l2 -2l2 7l2 -4l2 -7l2 4l2 -5l2 6l2 4l2 1l2 0l2 -5l2 2l2 3l2 2l2 5l2 6l2 -15l2 1l2 9l2 0l2 -2l2 -6l2 -6l2 -1l2 -8l2 8l2 6l2 -1l2 -5l2 10l2 -12l2 -3l2 -5l2 10l2 -7l2 13l2 3l2 -7l2 -5l2 9l2 -7l2 -3l2 17l2 2l2 -8l2 -4l2 -2l2 -11l2 15l2 -4l2 -4l2 -4l2 4l2 0l2 6l2 -2l2 -8l2 4l2 -1l2 0l2 8l2 -10l2 1l2 1l2 2l2 -3l2 -16l2 -2l2 6l2 7l2 0l2 0l2 2l2 -5l2 -5l2 1l2 -6l2 4l2 -7l2 -15l2 -1l2 -9l2 -3l2 -6l2 0l2 -2l2 -16l2 -10l2 -2l2 3l2 2l2 0l2 -7l2 -10l2 -11l2 -14l2 5l2 -13l2 1l2 1l2 11l2 -8l2 -1l2 6l2 0l2 -2l2 -2l2 -7l2 6l2 -13l2 9l2 -4l2 13l2 9l2 -2l2 5l2 -4l2 9l2 7l2 2l2 -8l2 3l2 14l2 6l2 7l2 12l2 6l2 -14l2 9l2 1l2 11l2 3l2 16l2 -8l2 26l2 -3l2 5l2 7l2 0l2 -6l2 0l2 -4l2 6l2 -7l2 -1l2 10l2 -4l2 15l2 -13l2 -15l2 12l2 -2l2 8l2 -2l2 -12l2 1l2 6l2 9l2 9l2 7l2 -8l2 -5l2 9l2 9l2 -6l2 0l2 -7l2 1l2 -3l2 1l2 -19l2 1l2 -5l2 12l2 3l2 5l2 9l2 0l2 4l2 -17l2 -1l2 11l2 3l2 -1l2 -17l2 11l2 -8l2 -2l2 3l2 14l2 -12l2 0l2 -6l2 -6l2 -7l2 8l2 0l2 8l2 4l2 1l2 -5l2 17l2 -4l2 -12l2 3l2 -10l2 1l2 6l2 -8l2 14l2 -2l2 3l2 -9l2 9l2 5l2 -1l2 -9l2 -14l2 7l2 5l2 -1l2 -5l2 24l2 1l2 -19l2 8l2 -9l2 -4l2 7l2 5l2 -5l2 -18l2 20l2 -1l2 -11l2 10l2 5l2 -12l2 4l2 6l2 -8l2 24l2 -17l2 7l2 2l2 -9l2 4l2 -16l2 12l2 9l2 -4l2 -20l2 20l2 -8l2 1l2 6l2 1l2 -2l2 1l2 4l2 7l2 -2l2 0l2 14l2 -26l2 7l2 6l2 1l2 4l2 -30l2 9l2 6l2 -14l2 7l2 8l2 -15l2 -10l2 -1l2 24l2 -8l2 -3l2 -1l2 14l2 7l2 -11l2 -7l2 9l2 -8l2 -4l2 1l2 -16l2 6l2 18l2 -19l2 14l2 3l2 -5l2 5l2 2l2 -5l2 -2l2 -7l2 2l2 8l2 1l2 -8l2 4l2 3l2 -10l2 -1l2 10l2 -2l2 4l2 6l2 4l2 10l2 -9l2 7l2 -14l2 -4l2 -10l2 23l2 1l2 -18l2 11l2 -1l2 -13l2 5l2 -3l2 -3l2 -9l2 9l2 -2l2 -17M388 709l2 -1l2 1l2 8l2 1l2 8l2 -2l2 0l2 -7l2 0l2 -13l2 3l2 -4l2 -5l2 -4l2 0l2 2l2 -2l2 8l2 0l2 -3l2 8l2 11l2 1l2 -11l2 1l2 5l2 -11l2 -6l2 2l2 6l2 -1l2 2l2 -4l2 0l2 10l2 1l2 -5l2 4l2 1l2 -9l2 7l2 -11l2 -2l2 14l2 -1l2 -7l2 -3l2 6l2 -2l2 -3l2 -5l2 8l2 10l2 1l2 -3l2 5l2 -4l2 -2l2 -4l2 8l2 0l2 7l2 -9l2 -8l2 -5l2 -4l2 9l2 6l2 0l2 1l2 -5l2 1l2 0l2 -3l2 0l2 -6l2 3l2 3l2 6l2 -5l2 4l2 5l2 -7l2 -5l2 -9l2 13l2 -9l2 2l2 5l2 -8l2 1l2 7l2 0l2 -6l2 4l2 -2l2 -9l2 2l2 -5l2 11l2 -5l2 9l2 -1l2 -5l2 -5l2 -5l2 -2l2 11l2 -9l2 10l2 4l2 1l2 11l2 12l2 -13l2 1l2 -4l2 11l2 4l2 -5l2 -4l2 4l2 0l2 9l2 14l2 11l2 -3l2 -7l2 -4l2 0l2 3l2 14l2 7l2 2l2 -10l2 12l2 -1l2 -6l2 -6l2 -6l2 -16l2 7l2 2l2 6l2 -8l2 13l2 5l2 -9l2 -13l2 -3l2 -8l2 -8l2 7l2 -4l2 -3l2 16l2 -18l2 11l2 -4l2 -5l2 7l2 0l2 -12l2 7l2 -7l2 -1l2 -6l2 -1l2 -8l2 3l2 -1l2 14l2 4l2 -17l2 -11l2 7l2 -8l2 14l2 3l2 13l2 5l2 -3l2 -10l2 5l2 -5l2 -3l2 -7l2 2l2 5l2 -4l2 5l2 -14l2 16l2 -7l2 -6l2 4l2 27l2 -20l2 2l2 -11l2 1l2 8l2 11l2 -12l2 9l2 -2l2 19l2 -6l2 -10l2 9l2 -24l2 4l2 1l2 -13l2 3l2 8l2 14l2 -13l2 1l2 -9l2 -13l2 -6l2 1l2 -7l2 -5l2 6l2 11l2 5l2 10l2 2l2 3l2 2l2 4l2 -7l2 6l2 -5l2 1l2 -12l2 1l2 3l2 -3l2 1l2 -2l2 3l2 10l2 -19l2 10l2 0l2 8l2 -3l2 0l2 6l2 -12l2 -2l2 10l2 -13l2 6l2 -5l2 4l2 7l2 -7l2 5l2 -10l2 4l2 5l2 -2l2 2l2 -8l2 8l2 5l2 -11l2 2l2 6l2 4l2 2l2 -2l2 1l2 14l2 -16l2 8l2 -10l2 -14l2 11l2 2l2 -9l2 14l2 5l2 -3l2 3l2 -2l2 -5l2 -2l2 -9l2 -2l2 -3l2 -4l2 7l2 7l2 10l2 1l2 5l2 -9l2 -13l2 6l2 -3l2 -14l2 14l2 -12l2 16l2 -7l2 3l2 -2l2 -11l2 11l2 -16l2 -15l2 18l2 8l2 10l2 18l2 8l2 -16l2 -3l2 -1l2 2l2 -10l2 5l2 16l2 0l2 -1l2 -8l2 -8l2 -10l2 11l2 -8l2 16l2 5l2 -4l2 -10l2 3l2 -1l2 -7l2 2l2 9l2 -13l2 -6l2 1l2 12l2 7l2 -2l2 2l2 0l2 -5l2 0l2 13l2 -2l2 9l2 -22l2 -6l2 7l2 -16l2 2l2 -4l2 -16l2 28l2 -18l2 12l2 -11l2 22l2 11l2 -24l2 8l2 13l2 -6l2 0l2 6l2 -26l2 8l2 3M388 709l2 -5l2 4l2 -2l2 1l2 4l2 -3l2 -4l2 -3l2 0l2 1l2 1l2 5l2 0l2 -6l2 1l2 18l2 -6l2 2l2 -1l2 -4l2 -6l2 11l2 -10l2 -1l2 -3l2 5l2 4l2 -1l2 -14l2 7l2 9l2 -9l2 -10l2 7l2 6l2 -3l2 7l2 2l2 -5l2 -4l2 6l2 3l2 1l2 1l2 -12l2 5l2 6l2 -3l2 0l2 10l2 -6l2 0l2 -1l2 -10l2 -11l2 4l2 9l2 3l2 -2l2 -6l2 6l2 8l2 -4l2 -13l2 13l2 -15l2 5l2 1l2 5l2 2l2 6l2 3l2 2l2 -13l2 15l2 10l2 -13l2 -6l2 7l2 -3l2 -2l2 -6l2 -2l2 2l2 2l2 1l2 1l2 3l2 -2l2 1l2 -4l2 -8l2 8l2 5l2 -4l2 -8l2 11l2 0l2 -2l2 -1l2 14l2 -5l2 0l2 7l2 -1l2 -10l2 14l2 -8l2 -7l2 -12l2 -4l2 8l2 6l2 3l2 10l2 4l2 0l2 6l2 -10l2 -5l2 -7l2 7l2 8l2 10l2 -13l2 9l2 2l2 -2l2 6l2 7l2 -5l2 9l2 -6l2 5l2 -2l2 10l2 -4l2 -7l2 9l2 12l2 -4l2 0l2 -8l2 10l2 12l2 -1l2 -8l2 -2l2 -9l2 0l2 -4l2 7l2 7l2 -8l2 -9l2 -9l2 5l2 12l2 0l2 16l2 5l2 -13l2 -13l2 -4l2 2l2 -27l2 -12l2 -16l2 4l2 5l2 8l2 13l2 8l2 -15l2 -4l2 -2l2 4l2 -5l2 -10l2 8l2 -3l2 1l2 -10l2 -5l2 10l2 6l2 -3l2 33l2 -14l2 -9l2 -9l2 1l2 -9l2 -2l2 -11l2 -1l2 18l2 15l2 -13l2 -11l2 0l2 21l2 -22l2 8l2 16l2 -12l2 -8l2 8l2 -2l2 -1l2 2l2 -26l2 0l2 4l2 -1l2 4l2 2l2 -18l2 0l2 -7l2 8l2 7l2 -26l2 -1l2 -7l2 12l2 5l2 -1l2 -4l2 -9l2 -6l2 -13l2 26l2 -2l2 4l2 5l2 10l2 -7l2 -1l2 12l2 16l2 1l2 -3l2 -4l2 8l2 0l2 -5l2 -5l2 4l2 9l2 -11l2 -11l2 1l2 8l2 9l2 7l2 -7l2 -10l2 -5l2 4l2 -3l2 -5l2 10l2 -4l2 1l2 1l2 -1l2 13l2 1l2 -7l2 5l2 1l2 12l2 8l2 -3l2 -4l2 -10l2 -1l2 -17l2 9l2 -1l2 14l2 -14l2 -1l2 4l2 13l2 -8l2 -10l2 2l2 -3l2 23l2 -14l2 -9l2 -4l2 14l2 6l2 11l2 -12l2 -6l2 8l2 -2l2 4l2 3l2 -1l2 1l2 8l2 5l2 -16l2 -2l2 -18l2 -9l2 3l2 11l2 3l2 11l2 8l2 -22l2 20l2 -13l2 -4l2 3l2 -5l2 17l2 2l2 -1l2 -7l2 15l2 -13l2 -13l2 0l2 -13l2 5l2 6l2 -7l2 3l2 -12l2 9l2 3l2 16l2 -15l2 3l2 -11l2 22l2 15l2 -15l2 9l2 -12l2 9l2 3l2 3l2 2l2 6l2 -15l2 -9l2 17l2 7l2 -3l2 -11l2 -16l2 6l2 5l2 -4l2 7l2 -11l2 5l2 15l2 -16l2 -10l2 -12l2 5l2 5l2 25l2 -4l2 -7l2 -1l2 -1l2 8l2 -14l2 -4M388 712l2 -7l2 9l2 -5l2 2l2 -5l2 -2l2 7l2 -8l2 1l2 -6l2 -3l2 -1l2 8l2 -1l2 8l2 -6l2 3l2 -1l2 1l2 3l2 -3l2 3l2 3l2 1l2 -1l2 0l2 4l2 -6l2 6l2 -6l2 -5l2 -5l2 8l2 0l2 9l2 -6l2 4l2 9l2 1l2 -13l2 -3l2 5l2 1l2 9l2 -1l2 -15l2 7l2 -13l2 -4l2 4l2 2l2 -2l2 -5l2 1l2 7l2 1l2 -10l2 1l2 11l2 5l2 -15l2 3l2 -1l2 5l2 1l2 -6l2 2l2 -1l2 8l2 -2l2 5l2 9l2 -12l2 -4l2 -6l2 2l2 -7l2 7l2 0l2 -1l2 -17l2 15l2 1l2 2l2 -3l2 -1l2 1l2 -5l2 0l2 10l2 -12l2 -1l2 1l2 14l2 7l2 3l2 -17l2 -2l2 4l2 -3l2 -1l2 16l2 7l2 -7l2 0l2 -5l2 -1l2 8l2 -8l2 -3l2 1l2 2l2 -10l2 16l2 -5l2 3l2 -1l2 0l2 17l2 -6l2 1l2 -6l2 4l2 13l2 -9l2 -4l2 -2l2 8l2 3l2 8l2 6l2 -4l2 -9l2 3l2 4l2 1l2 3l2 9l2 -1l2 -2l2 5l2 5l2 0l2 1l2 4l2 11l2 -3l2 -6l2 -6l2 2l2 2l2 0l2 -7l2 -8l2 2l2 12l2 -8l2 8l2 -12l2 -9l2 -2l2 -4l2 -7l2 9l2 -9l2 11l2 5l2 -4l2 -2l2 -17l2 -4l2 10l2 2l2 -11l2 1l2 -4l2 -1l2 -7l2 -10l2 -2l2 -7l2 22l2 -12l2 4l2 -1l2 5l2 -2l2 -4l2 -16l2 14l2 10l2 9l2 -9l2 -20l2 -17l2 5l2 9l2 -3l2 2l2 -9l2 20l2 6l2 -2l2 4l2 -17l2 15l2 -7l2 15l2 12l2 -20l2 6l2 9l2 -5l2 -26l2 -9l2 10l2 21l2 0l2 -7l2 -1l2 -10l2 10l2 -17l2 12l2 -14l2 11l2 13l2 -6l2 6l2 4l2 -12l2 -18l2 12l2 18l2 -7l2 2l2 -7l2 -6l2 14l2 -13l2 -3l2 8l2 3l2 2l2 12l2 1l2 -7l2 -4l2 2l2 -9l2 10l2 3l2 -6l2 11l2 2l2 -21l2 13l2 2l2 -2l2 0l2 2l2 -1l2 -12l2 21l2 -17l2 10l2 0l2 -9l2 -26l2 4l2 2l2 5l2 5l2 8l2 11l2 4l2 -14l2 0l2 -5l2 3l2 -2l2 6l2 -1l2 -11l2 1l2 0l2 -2l2 -8l2 -5l2 15l2 -2l2 5l2 2l2 -1l2 11l2 -11l2 20l2 -10l2 -8l2 1l2 -1l2 13l2 2l2 -1l2 -8l2 -1l2 1l2 -10l2 6l2 7l2 0l2 -6l2 14l2 -9l2 6l2 -6l2 3l2 -2l2 -5l2 2l2 -27l2 10l2 5l2 -5l2 12l2 4l2 -16l2 14l2 -11l2 -12l2 12l2 15l2 10l2 -17l2 -6l2 -5l2 9l2 2l2 -16l2 -2l2 9l2 -14l2 17l2 1l2 9l2 2l2 -13l2 -13l2 12l2 -7l2 23l2 -15l2 -2l2 -16l2 -11l2 29l2 7l2 -14l2 -4l2 16l2 1l2 -1l2 2l2 16l2 0l2 7l2 -25l2 -9l2 7l2 2l2 -1l2 6l2 -1l2 9l2 13l2 2l2 -23l2 5l2 -2M388 706l2 5l2 -8l2 -11l2 11l2 -2l2 -12l2 9l2 10l2 -7l2 4l2 1l2 3l2 -14l2 -7l2 2l2 4l2 3l2 -2l2 1l2 7l2 0l2 4l2 -10l2 1l2 4l2 -2l2 -3l2 7l2 6l2 -3l2 4l2 -8l2 1l2 3l2 -11l2 0l2 1l2 3l2 7l2 -3l2 2l2 -7l2 -4l2 9l2 -6l2 1l2 10l2 -8l2 0l2 3l2 3l2 -1l2 0l2 -4l2 -1l2 -1l2 1l2 -3l2 7l2 -3l2 -2l2 -7l2 10l2 4l2 -11l2 -4l2 4l2 11l2 -8l2 -3l2 3l2 3l2 -4l2 -10l2 9l2 4l2 0l2 8l2 -2l2 -5l2 11l2 -6l2 -7l2 -3l2 8l2 -6l2 3l2 -1l2 -7l2 -6l2 0l2 0l2 5l2 10l2 6l2 2l2 3l2 -5l2 -1l2 0l2 -4l2 1l2 7l2 -5l2 0l2 5l2 -6l2 0l2 0l2 -22l2 4l2 8l2 4l2 -1l2 -9l2 4l2 6l2 -2l2 -15l2 9l2 2l2 -1l2 -1l2 5l2 -8l2 0l2 1l2 -4l2 0l2 2l2 -4l2 -6l2 -1l2 1l2 0l2 3l2 2l2 16l2 -5l2 -9l2 -1l2 7l2 -13l2 -6l2 13l2 -18l2 8l2 -4l2 -4l2 -3l2 -6l2 18l2 4l2 -6l2 -5l2 -1l2 -9l2 -5l2 0l2 -10l2 10l2 4l2 5l2 10l2 6l2 12l2 3l2 -10l2 4l2 -2l2 4l2 3l2 -6l2 -9l2 -1l2 -7l2 7l2 5l2 -20l2 -3l2 7l2 12l2 -4l2 -3l2 3l2 -14l2 -3l2 12l2 8l2 12l2 -5l2 1l2 17l2 2l2 -1l2 -5l2 -5l2 -7l2 20l2 -2l2 -23l2 5l2 8l2 -10l2 -7l2 10l2 3l2 -4l2 -3l2 -20l2 29l2 8l2 -16l2 17l2 -5l2 -4l2 -2l2 2l2 -11l2 -4l2 -25l2 5l2 8l2 5l2 -21l2 6l2 -8l2 17l2 -7l2 -11l2 15l2 -3l2 -9l2 2l2 9l2 5l2 5l2 -13l2 7l2 7l2 -1l2 11l2 3l2 6l2 -10l2 -6l2 22l2 -13l2 1l2 17l2 7l2 -9l2 -8l2 -10l2 1l2 4l2 7l2 -7l2 6l2 -9l2 -5l2 -11l2 13l2 4l2 13l2 -22l2 4l2 -3l2 17l2 -9l2 3l2 2l2 2l2 -12l2 20l2 -5l2 0l2 -13l2 -3l2 5l2 0l2 1l2 -4l2 3l2 -1l2 8l2 -16l2 15l2 -20l2 19l2 10l2 0l2 -13l2 -1l2 -12l2 -11l2 -15l2 7l2 9l2 -9l2 16l2 7l2 -1l2 -3l2 16l2 -16l2 5l2 -10l2 -17l2 15l2 -9l2 13l2 -2l2 19l2 -12l2 -6l2 8l2 5l2 -9l2 -11l2 9l2 5l2 6l2 -3l2 -9l2 12l2 -1l2 2l2 -3l2 -18l2 -1l2 5l2 24l2 10l2 -17l2 0l2 5l2 4l2 7l2 10l2 -18l2 -12l2 1l2 6l2 -2l2 -10l2 6l2 3l2 -4l2 -8l2 -7l2 14l2 6l2 10l2 2l2 11l2 -8l2 0l2 2l2 -12l2 2l2 -8l2 4l2 -18l2 -7l2 3l2 0l2 4l2 15l2 8l2 -2l2 2l2 -16l2 3l2 -2l2 9l2 3l2 16l2 -16M388 697l2 -1l2 2l2 6l2 5l2 -3l2 -9l2 1l2 -5l2 7l2 3l2 -4l2 1l2 8l2 -6l2 -6l2 3l2 0l2 -4l2 -5l2 6l2 3l2 1l2 6l2 -4l2 -8l2 -2l2 5l2 -1l2 -1l2 -1l2 -6l2 11l2 -1l2 -13l2 3l2 -1l2 -4l2 5l2 6l2 -2l2 5l2 7l2 -6l2 1l2 -4l2 1l2 -1l2 -6l2 -4l2 0l2 7l2 4l2 6l2 -8l2 -14l2 8l2 2l2 -2l2 10l2 3l2 2l2 1l2 3l2 11l2 -4l2 -5l2 2l2 4l2 -10l2 -3l2 5l2 3l2 -2l2 7l2 -5l2 -1l2 -11l2 -5l2 11l2 3l2 9l2 -2l2 -1l2 -2l2 -9l2 -4l2 -4l2 6l2 5l2 -5l2 -9l2 2l2 -6l2 3l2 0l2 -5l2 4l2 5l2 -4l2 -4l2 9l2 -5l2 -13l2 20l2 -1l2 12l2 -7l2 -5l2 -1l2 -3l2 0l2 11l2 -8l2 1l2 -4l2 8l2 -2l2 6l2 -2l2 12l2 -14l2 0l2 5l2 0l2 3l2 -1l2 0l2 -4l2 -14l2 18l2 2l2 0l2 7l2 1l2 7l2 2l2 -5l2 -6l2 22l2 2l2 -3l2 -4l2 -5l2 -1l2 3l2 -9l2 18l2 -9l2 8l2 -8l2 0l2 4l2 -8l2 6l2 2l2 -1l2 -6l2 -4l2 7l2 -8l2 3l2 -9l2 -2l2 -14l2 9l2 -11l2 13l2 -12l2 3l2 2l2 -17l2 16l2 14l2 -9l2 12l2 -14l2 -5l2 -1l2 -3l2 5l2 -7l2 21l2 -15l2 5l2 2l2 1l2 -5l2 -6l2 -1l2 -1l2 6l2 0l2 4l2 -5l2 -16l2 16l2 4l2 -14l2 4l2 0l2 -1l2 -13l2 3l2 -2l2 10l2 -5l2 2l2 5l2 19l2 -3l2 -21l2 12l2 -7l2 5l2 -19l2 9l2 3l2 -27l2 19l2 -4l2 2l2 5l2 4l2 -15l2 0l2 3l2 15l2 1l2 0l2 7l2 4l2 -4l2 -15l2 -13l2 4l2 19l2 9l2 10l2 -27l2 3l2 16l2 -12l2 4l2 7l2 -1l2 13l2 -14l2 17l2 0l2 -9l2 14l2 -7l2 9l2 3l2 4l2 -1l2 -6l2 -11l2 1l2 13l2 -3l2 -16l2 -1l2 -5l2 1l2 17l2 10l2 -9l2 -8l2 17l2 -11l2 -9l2 0l2 -7l2 -1l2 9l2 -2l2 0l2 -8l2 14l2 6l2 -7l2 1l2 11l2 -10l2 -11l2 -5l2 0l2 4l2 -18l2 14l2 10l2 3l2 -8l2 9l2 1l2 5l2 -7l2 -11l2 9l2 12l2 -4l2 -3l2 -14l2 9l2 -6l2 20l2 -30l2 18l2 -11l2 18l2 -13l2 -8l2 -5l2 10l2 -3l2 8l2 7l2 -12l2 5l2 5l2 0l2 9l2 2l2 -1l2 -14l2 6l2 16l2 -7l2 -4l2 6l2 -7l2 -8l2 6l2 4l2 -20l2 0l2 17l2 -4l2 -9l2 -8l2 -3l2 10l2 6l2 1l2 -7l2 3l2 -15l2 4l2 -1l2 5l2 4l2 2l2 -8l2 2l2 -9l2 5l2 -6l2 -3l2 -26l2 -5l2 13l2 1l2 3l2 11l2 12l2 -17l2 1l2 -2l2 14l2 -8l2 6l2 10l2 4l2 -28l2 1l2 5l2 -7l2 6M388 700l2 -4l2 13l2 1l2 9l2 -4l2 -18l2 2l2 -2l2 2l2 -2l2 7l2 -7l2 3l2 7l2 0l2 8l2 -8l2 7l2 0l2 -10l2 -3l2 2l2 3l2 -4l2 -3l2 10l2 0l2 1l2 0l2 -12l2 -3l2 12l2 -7l2 -12l2 -1l2 11l2 0l2 5l2 -2l2 -4l2 3l2 8l2 4l2 -8l2 1l2 1l2 10l2 -6l2 -10l2 -3l2 2l2 2l2 8l2 -12l2 8l2 5l2 0l2 2l2 -2l2 -2l2 -6l2 8l2 -7l2 7l2 -7l2 5l2 10l2 -5l2 0l2 -10l2 11l2 -6l2 -6l2 -4l2 2l2 10l2 -4l2 -5l2 11l2 1l2 -5l2 -1l2 -8l2 3l2 6l2 -8l2 12l2 -7l2 1l2 -3l2 2l2 6l2 -3l2 1l2 2l2 -1l2 -4l2 -9l2 17l2 -4l2 -2l2 2l2 2l2 0l2 4l2 16l2 -10l2 -9l2 0l2 8l2 6l2 -5l2 4l2 7l2 -15l2 12l2 -7l2 -7l2 0l2 0l2 2l2 3l2 -8l2 -8l2 1l2 1l2 4l2 6l2 -1l2 -10l2 -4l2 1l2 -3l2 16l2 0l2 3l2 -9l2 5l2 -2l2 14l2 -7l2 -5l2 4l2 0l2 3l2 18l2 -17l2 -14l2 -6l2 0l2 18l2 -12l2 -5l2 1l2 -5l2 -3l2 17l2 -12l2 7l2 -8l2 2l2 15l2 9l2 -15l2 12l2 1l2 -13l2 -1l2 -3l2 2l2 -4l2 -8l2 18l2 4l2 1l2 -13l2 7l2 3l2 -7l2 3l2 -1l2 7l2 -10l2 -2l2 8l2 -2l2 -10l2 -6l2 2l2 -5l2 -6l2 -4l2 7l2 -6l2 0l2 2l2 -7l2 11l2 -4l2 12l2 4l2 8l2 3l2 -12l2 -16l2 10l2 -6l2 4l2 -2l2 17l2 -9l2 -16l2 -17l2 23l2 -8l2 -11l2 -3l2 -4l2 5l2 6l2 -28l2 -10l2 18l2 3l2 6l2 6l2 13l2 -3l2 14l2 -9l2 4l2 -7l2 2l2 -4l2 2l2 19l2 -16l2 0l2 6l2 9l2 -3l2 3l2 2l2 15l2 -4l2 -17l2 -14l2 -8l2 -2l2 31l2 7l2 -14l2 11l2 2l2 -8l2 8l2 5l2 -2l2 8l2 0l2 1l2 -4l2 -9l2 -7l2 8l2 1l2 11l2 1l2 7l2 -4l2 12l2 4l2 -7l2 0l2 -11l2 -3l2 -1l2 12l2 -9l2 -6l2 8l2 -14l2 3l2 4l2 -1l2 4l2 -4l2 1l2 1l2 -11l2 3l2 3l2 0l2 -8l2 19l2 -13l2 -15l2 -1l2 1l2 17l2 16l2 -1l2 8l2 -18l2 -17l2 7l2 0l2 15l2 -11l2 4l2 4l2 -12l2 5l2 24l2 -8l2 6l2 -8l2 3l2 -7l2 12l2 -13l2 -3l2 -4l2 13l2 -10l2 -6l2 12l2 10l2 9l2 -11l2 -9l2 -1l2 5l2 -14l2 -1l2 0l2 -15l2 -21l2 9l2 5l2 9l2 -4l2 2l2 3l2 -11l2 16l2 -5l2 0l2 7l2 1l2 -3l2 7l2 -6l2 22l2 -18l2 1l2 -4l2 -1l2 -8l2 1l2 -1l2 6l2 4l2 -7l2 9l2 5l2 4l2 -10l2 -16l2 -7l2 17l2 8l2 2l2 0l2 10l2 -8l2 2l2 10l2 -23M388 707l2 2l2 -4l2 -1l2 3l2 8l2 -9l2 -4l2 5l2 13l2 -11l2 6l2 1l2 2l2 -2l2 1l2 -6l2 4l2 4l2 -13l2 4l2 -1l2 -8l2 11l2 -3l2 4l2 3l2 -1l2 -6l2 -3l2 -5l2 -7l2 2l2 7l2 0l2 0l2 -10l2 0l2 11l2 0l2 -4l2 4l2 -3l2 -4l2 14l2 -2l2 1l2 2l2 -1l2 3l2 0l2 -1l2 -3l2 -3l2 -3l2 6l2 6l2 -4l2 -3l2 -6l2 -7l2 -3l2 5l2 6l2 2l2 -6l2 6l2 3l2 -10l2 0l2 -9l2 4l2 9l2 2l2 -4l2 1l2 -10l2 11l2 -7l2 9l2 2l2 4l2 -3l2 -4l2 -4l2 -4l2 -7l2 1l2 11l2 0l2 -7l2 12l2 2l2 9l2 -5l2 -9l2 -5l2 -7l2 11l2 -1l2 5l2 1l2 3l2 1l2 2l2 -9l2 0l2 -3l2 5l2 -10l2 -1l2 0l2 -8l2 2l2 -1l2 0l2 5l2 8l2 13l2 -23l2 -3l2 4l2 -8l2 10l2 0l2 7l2 1l2 6l2 0l2 -5l2 -8l2 4l2 -8l2 8l2 6l2 -8l2 -11l2 -1l2 10l2 -1l2 5l2 2l2 2l2 3l2 -6l2 -13l2 10l2 -7l2 -12l2 10l2 -4l2 8l2 -1l2 -19l2 -3l2 19l2 2l2 2l2 -12l2 9l2 0l2 12l2 -14l2 -1l2 -6l2 16l2 8l2 -4l2 -2l2 -4l2 2l2 -6l2 4l2 6l2 9l2 -14l2 7l2 -7l2 -1l2 21l2 -3l2 7l2 -3l2 -6l2 -4l2 -5l2 3l2 3l2 -2l2 0l2 -2l2 14l2 -15l2 1l2 -4l2 5l2 2l2 -9l2 8l2 -5l2 4l2 -2l2 -8l2 5l2 18l2 -5l2 9l2 -4l2 -13l2 -10l2 5l2 -5l2 14l2 -4l2 0l2 9l2 -13l2 -6l2 -13l2 -2l2 11l2 -8l2 9l2 17l2 -1l2 -14l2 -13l2 15l2 -27l2 -1l2 6l2 -4l2 6l2 17l2 -4l2 2l2 14l2 -2l2 -1l2 -2l2 -3l2 3l2 -2l2 -9l2 -1l2 0l2 18l2 0l2 -15l2 -7l2 -8l2 -3l2 12l2 -9l2 2l2 8l2 12l2 1l2 9l2 -5l2 -7l2 2l2 2l2 -19l2 14l2 -2l2 18l2 -1l2 -8l2 7l2 -12l2 -2l2 -11l2 12l2 -19l2 7l2 -4l2 7l2 1l2 16l2 -1l2 -7l2 -6l2 2l2 15l2 9l2 -2l2 -9l2 -12l2 -4l2 -6l2 9l2 -2l2 6l2 8l2 -7l2 1l2 5l2 -6l2 6l2 -4l2 -2l2 -14l2 -4l2 5l2 -4l2 -9l2 2l2 -2l2 4l2 9l2 0l2 3l2 10l2 3l2 -10l2 -3l2 9l2 -6l2 -4l2 15l2 -13l2 10l2 1l2 -4l2 4l2 4l2 5l2 0l2 4l2 3l2 -19l2 9l2 -7l2 1l2 -7l2 -10l2 -6l2 28l2 -12l2 4l2 7l2 -7l2 -8l2 7l2 -26l2 11l2 0l2 3l2 -6l2 -3l2 13l2 -5l2 12l2 -10l2 -1l2 22l2 -2l2 -7l2 -12l2 17l2 9l2 10l2 -3l2 -18l2 0l2 -8l2 -16l2 16l2 -4l2 7l2 5l2 1l2 -12l2 29l2 -10l2 -3l2 -6l2 11l2 -14M388 705l2 6l2 -8l2 -6l2 3l2 3l2 3l2 -2l2 -4l2 5l2 0l2 10l2 -8l2 -1l2 2l2 -3l2 1l2 -1l2 -4l2 -5l2 6l2 -8l2 5l2 6l2 -1l2 -4l2 3l2 -8l2 -1l2 0l2 -1l2 0l2 2l2 -1l2 -9l2 0l2 6l2 -1l2 8l2 8l2 0l2 -2l2 -8l2 -2l2 8l2 -2l2 -4l2 -4l2 -6l2 -5l2 13l2 1l2 5l2 -6l2 -2l2 5l2 -1l2 0l2 6l2 1l2 -6l2 1l2 -2l2 5l2 10l2 -2l2 2l2 -1l2 -6l2 -6l2 4l2 -7l2 -4l2 8l2 0l2 -1l2 -5l2 9l2 -2l2 -4l2 -3l2 2l2 3l2 2l2 -3l2 -5l2 -1l2 -4l2 13l2 -7l2 5l2 -1l2 -8l2 2l2 -1l2 -1l2 5l2 -2l2 4l2 -6l2 11l2 -9l2 -11l2 8l2 -3l2 0l2 -2l2 -2l2 -6l2 -3l2 -8l2 4l2 5l2 -6l2 4l2 0l2 -2l2 5l2 -5l2 8l2 1l2 -21l2 2l2 15l2 -13l2 1l2 2l2 -1l2 -9l2 5l2 -3l2 15l2 -3l2 -7l2 9l2 -1l2 -1l2 1l2 10l2 8l2 1l2 -7l2 1l2 -14l2 15l2 -2l2 -3l2 9l2 -2l2 0l2 -25l2 0l2 8l2 2l2 3l2 10l2 18l2 1l2 1l2 5l2 -16l2 -7l2 6l2 2l2 3l2 -11l2 -12l2 -7l2 -3l2 17l2 20l2 4l2 -3l2 3l2 2l2 -8l2 -11l2 -7l2 0l2 2l2 13l2 -8l2 16l2 -10l2 -7l2 -1l2 12l2 2l2 4l2 -6l2 -12l2 0l2 -4l2 16l2 -19l2 13l2 1l2 4l2 3l2 8l2 10l2 -10l2 -15l2 -3l2 0l2 8l2 -12l2 9l2 -6l2 -6l2 2l2 6l2 16l2 -11l2 7l2 1l2 -39l2 13l2 0l2 -7l2 14l2 -4l2 1l2 12l2 3l2 6l2 7l2 -9l2 -16l2 -2l2 -8l2 3l2 -12l2 -1l2 3l2 -4l2 21l2 0l2 17l2 -17l2 2l2 9l2 -5l2 -22l2 8l2 2l2 9l2 -12l2 3l2 -2l2 0l2 -13l2 3l2 7l2 -6l2 18l2 15l2 -19l2 12l2 -2l2 -15l2 4l2 25l2 -17l2 -2l2 -23l2 7l2 17l2 -5l2 5l2 4l2 5l2 16l2 3l2 -1l2 7l2 -18l2 -4l2 1l2 18l2 -3l2 -24l2 11l2 -4l2 -16l2 14l2 -4l2 4l2 1l2 -2l2 -9l2 18l2 9l2 0l2 -6l2 -8l2 6l2 -20l2 20l2 6l2 -6l2 3l2 -20l2 -4l2 -6l2 17l2 -6l2 6l2 8l2 7l2 -4l2 -5l2 -16l2 12l2 4l2 20l2 -8l2 -1l2 -11l2 -1l2 4l2 -4l2 6l2 7l2 6l2 -7l2 8l2 -1l2 -7l2 13l2 -4l2 -5l2 -3l2 2l2 5l2 -19l2 2l2 -5l2 17l2 2l2 -6l2 -14l2 6l2 15l2 1l2 -4l2 -20l2 7l2 -4l2 10l2 8l2 -15l2 3l2 5l2 10l2 19l2 -19l2 4l2 16l2 -2l2 -34l2 -13l2 5l2 11l2 7l2 -9l2 -11l2 -5l2 -7l2 1l2 11l2 28l2 1l2 -4l2 -10l2 6l2 -18l2 -5l2 7l2 0M388 697l2 2l2 1l2 12l2 -7l2 -15l2 6l2 2l2 5l2 14l2 3l2 -6l2 -8l2 -2l2 -2l2 2l2 -1l2 -7l2 9l2 3l2 1l2 3l2 -8l2 3l2 0l2 7l2 -4l2 -3l2 -7l2 6l2 7l2 -5l2 -11l2 2l2 0l2 -4l2 2l2 -2l2 6l2 1l2 6l2 -4l2 -4l2 -4l2 -2l2 -8l2 7l2 8l2 5l2 -1l2 -6l2 8l2 -3l2 -14l2 5l2 5l2 -6l2 8l2 -9l2 1l2 -3l2 2l2 5l2 -5l2 0l2 -2l2 5l2 1l2 3l2 -4l2 2l2 -2l2 6l2 3l2 4l2 -3l2 5l2 -4l2 -7l2 3l2 -8l2 0l2 7l2 2l2 -7l2 10l2 -1l2 -11l2 1l2 0l2 -1l2 13l2 5l2 -5l2 3l2 -3l2 -5l2 -16l2 10l2 -7l2 -2l2 6l2 7l2 1l2 6l2 -1l2 4l2 4l2 -11l2 3l2 -6l2 4l2 3l2 -14l2 8l2 3l2 7l2 3l2 -4l2 -11l2 5l2 11l2 -12l2 2l2 -7l2 2l2 -2l2 -4l2 8l2 -1l2 2l2 -5l2 8l2 -8l2 4l2 -7l2 7l2 3l2 -9l2 15l2 -8l2 1l2 3l2 -7l2 -3l2 -10l2 3l2 2l2 -3l2 -6l2 -3l2 -5l2 1l2 1l2 22l2 10l2 -1l2 5l2 0l2 -11l2 8l2 0l2 -5l2 -1l2 -8l2 -13l2 12l2 2l2 8l2 1l2 0l2 10l2 -8l2 4l2 -2l2 -1l2 -7l2 -12l2 1l2 0l2 -13l2 -2l2 10l2 3l2 2l2 -4l2 1l2 3l2 3l2 0l2 -23l2 21l2 -3l2 20l2 -2l2 -1l2 3l2 4l2 -2l2 0l2 -17l2 9l2 -4l2 -2l2 1l2 -4l2 -7l2 3l2 -4l2 4l2 3l2 -1l2 -11l2 -2l2 22l2 14l2 1l2 -12l2 -13l2 25l2 -5l2 -10l2 10l2 1l2 -5l2 2l2 -8l2 20l2 4l2 -8l2 3l2 6l2 -2l2 4l2 -15l2 -1l2 -8l2 -7l2 18l2 0l2 2l2 0l2 2l2 -7l2 -4l2 3l2 -15l2 -13l2 4l2 6l2 4l2 -5l2 10l2 5l2 -17l2 3l2 -6l2 10l2 -18l2 11l2 -2l2 21l2 -14l2 3l2 4l2 -1l2 15l2 -3l2 -17l2 4l2 -4l2 3l2 9l2 -2l2 4l2 -3l2 -18l2 -5l2 14l2 -7l2 4l2 -7l2 2l2 6l2 11l2 -9l2 -2l2 7l2 -15l2 -13l2 -12l2 8l2 2l2 5l2 4l2 8l2 5l2 -12l2 15l2 3l2 11l2 -14l2 4l2 1l2 -7l2 -5l2 6l2 -9l2 -5l2 3l2 23l2 -9l2 -23l2 0l2 5l2 7l2 -1l2 3l2 0l2 10l2 -2l2 -3l2 -16l2 4l2 9l2 -7l2 -1l2 16l2 -12l2 6l2 9l2 6l2 -10l2 15l2 -22l2 15l2 -16l2 9l2 16l2 -7l2 0l2 -19l2 -7l2 21l2 -4l2 3l2 -6l2 19l2 -25l2 -5l2 9l2 -1l2 -3l2 -3l2 -9l2 11l2 1l2 -7l2 7l2 3l2 -11l2 -9l2 -4l2 3l2 3l2 -5l2 -7l2 -4l2 7l2 15l2 17l2 -8l2 -8l2 9l2 -6l2 12l2 -14l2 -5l2 15l2 12M388 705l2 -1l2 0l2 -4l2 -11l2 2l2 7l2 -3l2 1l2 -1l2 -2l2 2l2 9l2 0l2 9l2 -6l2 8l2 1l2 -6l2 -5l2 9l2 -11l2 5l2 -11l2 1l2 11l2 5l2 2l2 -4l2 4l2 -9l2 -2l2 1l2 -4l2 -5l2 4l2 -8l2 7l2 9l2 -5l2 4l2 -1l2 3l2 -4l2 2l2 2l2 -3l2 2l2 -2l2 -5l2 1l2 13l2 -1l2 -5l2 1l2 9l2 7l2 -10l2 -8l2 5l2 -9l2 0l2 -4l2 10l2 -1l2 4l2 1l2 5l2 -10l2 -3l2 -9l2 1l2 6l2 1l2 -1l2 1l2 5l2 15l2 -8l2 2l2 -18l2 0l2 5l2 1l2 2l2 1l2 -6l2 9l2 6l2 -10l2 -3l2 -6l2 2l2 17l2 -10l2 7l2 3l2 -3l2 5l2 -1l2 -3l2 0l2 5l2 1l2 -2l2 -4l2 1l2 -9l2 8l2 -7l2 2l2 -2l2 -2l2 0l2 8l2 -10l2 5l2 -5l2 2l2 -2l2 1l2 -8l2 3l2 -5l2 -3l2 -2l2 -5l2 -12l2 3l2 -12l2 7l2 -15l2 4l2 -5l2 -7l2 1l2 -4l2 -19l2 6l2 -13l2 4l2 -8l2 -15l2 -6l2 -10l2 -14l2 6l2 10l2 -8l2 -9l2 -19l2 6l2 3l2 -7l2 11l2 -14l2 8l2 3l2 -7l2 13l2 1l2 10l2 8l2 1l2 19l2 4l2 0l2 -6l2 6l2 -8l2 22l2 8l2 7l2 11l2 1l2 3l2 -1l2 12l2 2l2 12l2 -3l2 -4l2 14l2 8l2 -22l2 12l2 -12l2 2l2 0l2 -15l2 6l2 14l2 -3l2 3l2 5l2 2l2 8l2 6l2 1l2 -8l2 6l2 -3l2 -6l2 11l2 -10l2 2l2 -11l2 7l2 6l2 -11l2 5l2 8l2 -11l2 -3l2 -3l2 -2l2 -5l2 -3l2 6l2 -7l2 4l2 -1l2 -16l2 -6l2 3l2 -6l2 2l2 6l2 -6l2 -6l2 -10l2 4l2 -12l2 12l2 5l2 7l2 9l2 -2l2 1l2 -6l2 8l2 -5l2 13l2 -2l2 -14l2 11l2 4l2 4l2 12l2 -3l2 -19l2 18l2 5l2 3l2 0l2 -2l2 9l2 11l2 -22l2 -7l2 -2l2 18l2 -10l2 4l2 7l2 11l2 -18l2 -2l2 1l2 16l2 -3l2 -11l2 11l2 7l2 -19l2 8l2 -16l2 6l2 -7l2 24l2 -6l2 0l2 2l2 -1l2 9l2 7l2 -7l2 8l2 -24l2 6l2 4l2 -17l2 -3l2 -10l2 16l2 19l2 -4l2 -6l2 0l2 7l2 -3l2 -1l2 0l2 2l2 -9l2 -2l2 -2l2 7l2 -2l2 7l2 12l2 -20l2 -2l2 6l2 -13l2 2l2 24l2 -7l2 -9l2 4l2 -4l2 11l2 1l2 -15l2 8l2 21l2 -5l2 -12l2 -5l2 -2l2 -2l2 3l2 9l2 -1l2 16l2 -14l2 6l2 -14l2 -4l2 6l2 0l2 17l2 -8l2 11l2 -11l2 3l2 -6l2 -18l2 3l2 15l2 0l2 -10l2 -2l2 11l2 -8l2 3l2 11l2 -7l2 -10l2 -1l2 9l2 3l2 18l2 -2l2 4l2 1l2 3l2 -21l2 17l2 -13l2 7l2 -1l2 14l2 -21l2 17l2 12l2 -20l2 0l2 13l2 -38M388 704l2 5l2 -5l2 -4l2 4l2 6l2 7l2 -6l2 -7l2 2l2 -11l2 3l2 -10l2 2l2 2l2 10l2 3l2 3l2 -7l2 2l2 -7l2 10l2 3l2 -3l2 3l2 -7l2 -4l2 8l2 -9l2 3l2 0l2 -4l2 1l2 -1l2 -4l2 13l2 -4l2 -7l2 6l2 -1l2 -1l2 -2l2 0l2 -1l2 0l2 3l2 0l2 3l2 3l2 7l2 3l2 -6l2 -2l2 -3l2 -7l2 5l2 9l2 1l2 4l2 -10l2 -4l2 5l2 5l2 -1l2 -6l2 -9l2 0l2 -1l2 0l2 4l2 6l2 -2l2 -1l2 2l2 2l2 2l2 -5l2 6l2 -4l2 -3l2 0l2 -4l2 1l2 4l2 -6l2 0l2 -7l2 11l2 -1l2 -14l2 4l2 1l2 3l2 -6l2 1l2 -3l2 -3l2 2l2 10l2 0l2 1l2 -1l2 7l2 -7l2 -1l2 10l2 -13l2 -4l2 8l2 -6l2 10l2 8l2 -1l2 -6l2 7l2 -5l2 -13l2 4l2 -5l2 1l2 -5l2 1l2 13l2 4l2 18l2 -5l2 -7l2 -4l2 2l2 3l2 11l2 2l2 -4l2 -5l2 1l2 7l2 10l2 3l2 -3l2 -5l2 8l2 9l2 -10l2 -5l2 2l2 9l2 -6l2 -6l2 10l2 5l2 7l2 6l2 3l2 -12l2 -9l2 11l2 -12l2 -5l2 5l2 -4l2 -8l2 -9l2 2l2 -7l2 -7l2 2l2 2l2 -7l2 0l2 0l2 6l2 -1l2 0l2 3l2 -11l2 13l2 -1l2 -6l2 -4l2 0l2 9l2 5l2 4l2 -2l2 -2l2 -10l2 13l2 13l2 -7l2 -3l2 -14l2 3l2 12l2 7l2 -5l2 -14l2 4l2 -28l2 18l2 -2l2 9l2 16l2 -6l2 -8l2 10l2 -2l2 1l2 -20l2 7l2 5l2 5l2 1l2 -1l2 -18l2 -3l2 5l2 -13l2 4l2 6l2 -11l2 -2l2 5l2 -16l2 14l2 -22l2 12l2 0l2 -2l2 12l2 4l2 2l2 1l2 -6l2 -3l2 -4l2 1l2 10l2 6l2 -10l2 -1l2 3l2 6l2 4l2 -4l2 0l2 -2l2 -8l2 9l2 -14l2 28l2 -7l2 -11l2 -1l2 -5l2 28l2 -6l2 -1l2 3l2 -1l2 3l2 -21l2 10l2 5l2 -3l2 3l2 -3l2 -7l2 -4l2 14l2 12l2 -6l2 2l2 7l2 6l2 -1l2 -7l2 15l2 -9l2 -7l2 0l2 14l2 -23l2 3l2 5l2 6l2 0l2 12l2 -30l2 -6l2 6l2 2l2 2l2 -26l2 14l2 -2l2 15l2 10l2 -2l2 3l2 -7l2 -4l2 -3l2 -3l2 -5l2 -2l2 0l2 14l2 -11l2 -12l2 16l2 -16l2 3l2 0l2 12l2 -1l2 2l2 1l2 -12l2 -2l2 -9l2 14l2 -1l2 -9l2 4l2 11l2 1l2 -8l2 7l2 -2l2 -1l2 -12l2 12l2 -10l2 17l2 -1l2 -1l2 -2l2 -2l2 14l2 -6l2 -16l2 -6l2 -2l2 23l2 0l2 17l2 -11l2 10l2 -19l2 3l2 -4l2 3l2 -17l2 9l2 3l2 -4l2 6l2 0l2 3l2 -19l2 8l2 6l2 -4l2 7l2 3l2 -7l2 12l2 -5l2 9l2 -7l2 9l2 -14l2 -5l2 3l2 6l2 22l2 -2l2 -8l2 -5l2 -4M388 695l2 -2l2 1l2 -11l2 2l2 7l2 3l2 6l2 -12l2 6l2 0l2 3l2 -1l2 6l2 -4l2 10l2 2l2 -8l2 -8l2 1l2 0l2 -6l2 -2l2 5l2 11l2 4l2 -8l2 -1l2 -3l2 4l2 1l2 -2l2 -5l2 -5l2 4l2 -1l2 7l2 -1l2 -6l2 -5l2 -3l2 10l2 -3l2 5l2 -2l2 -10l2 12l2 1l2 2l2 -3l2 -2l2 6l2 -7l2 -2l2 6l2 3l2 -4l2 -1l2 -1l2 1l2 0l2 -2l2 0l2 -6l2 7l2 9l2 -1l2 3l2 1l2 -7l2 7l2 -9l2 3l2 -3l2 -3l2 2l2 1l2 -6l2 9l2 3l2 -8l2 8l2 3l2 -6l2 -2l2 -9l2 5l2 9l2 -7l2 -2l2 -4l2 2l2 -2l2 12l2 -2l2 -5l2 1l2 -14l2 -1l2 4l2 -1l2 8l2 -2l2 3l2 10l2 -3l2 5l2 2l2 -3l2 -10l2 7l2 3l2 -3l2 -13l2 3l2 3l2 5l2 2l2 -9l2 6l2 8l2 -2l2 -1l2 13l2 1l2 12l2 -14l2 3l2 12l2 8l2 13l2 -3l2 -12l2 12l2 -9l2 -3l2 14l2 5l2 -4l2 19l2 -10l2 6l2 10l2 -5l2 -4l2 -5l2 1l2 5l2 -1l2 1l2 2l2 -6l2 -10l2 14l2 8l2 -4l2 -9l2 -4l2 -12l2 -1l2 -12l2 9l2 2l2 -17l2 4l2 -11l2 1l2 -4l2 -1l2 8l2 -1l2 -1l2 4l2 -15l2 -1l2 -1l2 1l2 -13l2 -5l2 23l2 -11l2 -1l2 -6l2 5l2 0l2 -4l2 3l2 -18l2 13l2 4l2 11l2 0l2 -6l2 -23l2 -6l2 11l2 8l2 -3l2 8l2 -3l2 -9l2 7l2 -9l2 4l2 -4l2 6l2 -10l2 14l2 7l2 -11l2 8l2 -13l2 5l2 -5l2 10l2 -5l2 -5l2 3l2 -2l2 3l2 -7l2 -3l2 -13l2 12l2 -16l2 9l2 12l2 18l2 -5l2 -8l2 -18l2 6l2 11l2 7l2 -6l2 2l2 8l2 -12l2 0l2 7l2 -19l2 -6l2 12l2 -9l2 12l2 -2l2 12l2 -26l2 -4l2 -3l2 14l2 -10l2 6l2 7l2 2l2 7l2 -9l2 0l2 4l2 5l2 9l2 -8l2 -3l2 -11l2 -1l2 3l2 7l2 -6l2 -6l2 -2l2 -6l2 13l2 -1l2 -9l2 5l2 -1l2 3l2 3l2 -2l2 -8l2 -15l2 14l2 18l2 -9l2 13l2 -15l2 8l2 -3l2 1l2 -8l2 5l2 4l2 -7l2 4l2 4l2 19l2 -2l2 -6l2 -4l2 -7l2 12l2 -6l2 12l2 -12l2 1l2 0l2 6l2 12l2 6l2 -7l2 -1l2 3l2 -15l2 -1l2 9l2 -4l2 4l2 20l2 -8l2 0l2 7l2 4l2 -10l2 -12l2 -17l2 9l2 4l2 -9l2 8l2 9l2 8l2 -2l2 3l2 -21l2 11l2 -10l2 -4l2 5l2 -3l2 6l2 6l2 9l2 11l2 -20l2 -10l2 6l2 -5l2 4l2 -14l2 -2l2 3l2 -20l2 -5l2 15l2 11l2 -1l2 -17l2 2l2 -5l2 6l2 10l2 -3l2 11l2 1l2 -9l2 13l2 7l2 1l2 8l2 -24l2 19l2 6l2 5l2 -23l2 -5l2 8l2 10l2 -11l2 18l2 -5M388 704l2 1l2 -2l2 7l2 -5l2 -8l2 -4l2 7l2 0l2 -1l2 10l2 -2l2 2l2 -4l2 8l2 -2l2 -9l2 2l2 8l2 0l2 -10l2 1l2 -12l2 0l2 -2l2 5l2 -6l2 6l2 3l2 -3l2 -11l2 6l2 8l2 4l2 -7l2 6l2 -10l2 13l2 2l2 -6l2 -6l2 7l2 7l2 3l2 -9l2 -1l2 5l2 -4l2 9l2 8l2 3l2 -1l2 2l2 -14l2 1l2 -5l2 -6l2 9l2 -10l2 1l2 8l2 -3l2 3l2 7l2 -6l2 -9l2 9l2 -9l2 1l2 13l2 -8l2 -6l2 6l2 -2l2 -5l2 -3l2 8l2 -3l2 -14l2 -5l2 9l2 14l2 -8l2 3l2 -8l2 5l2 1l2 3l2 0l2 3l2 1l2 6l2 2l2 2l2 -2l2 -6l2 -3l2 -10l2 -14l2 2l2 5l2 13l2 -2l2 -10l2 6l2 0l2 1l2 2l2 -3l2 -4l2 -4l2 7l2 -4l2 -9l2 -6l2 -15l2 4l2 -4l2 -14l2 1l2 -6l2 4l2 -7l2 7l2 -5l2 -17l2 4l2 -6l2 -4l2 6l2 0l2 1l2 -3l2 5l2 0l2 -14l2 -4l2 -1l2 -8l2 5l2 4l2 -1l2 1l2 -1l2 -1l2 -6l2 9l2 7l2 -1l2 18l2 7l2 -18l2 7l2 12l2 10l2 1l2 -1l2 -2l2 -2l2 6l2 -1l2 6l2 20l2 -8l2 8l2 -12l2 2l2 5l2 -8l2 8l2 9l2 10l2 8l2 -5l2 10l2 2l2 13l2 -11l2 -17l2 -1l2 6l2 -16l2 6l2 -24l2 5l2 9l2 14l2 -2l2 -8l2 1l2 21l2 -13l2 -6l2 -3l2 -5l2 19l2 6l2 -6l2 -1l2 -10l2 21l2 -10l2 10l2 -1l2 0l2 -7l2 10l2 2l2 6l2 2l2 15l2 -14l2 -9l2 -3l2 -6l2 21l2 -9l2 -6l2 10l2 -5l2 -11l2 0l2 -5l2 -2l2 8l2 5l2 1l2 1l2 -16l2 13l2 5l2 3l2 7l2 6l2 -22l2 17l2 -16l2 -13l2 2l2 -7l2 23l2 -19l2 -6l2 -10l2 32l2 3l2 -12l2 -2l2 -4l2 5l2 -3l2 -12l2 3l2 15l2 9l2 -11l2 2l2 -10l2 -9l2 15l2 6l2 10l2 2l2 5l2 -20l2 2l2 -4l2 -1l2 -1l2 9l2 4l2 -13l2 6l2 -13l2 13l2 10l2 -10l2 -15l2 -5l2 -2l2 19l2 1l2 -8l2 -18l2 7l2 10l2 22l2 -11l2 -6l2 5l2 -14l2 12l2 5l2 -8l2 18l2 -8l2 -3l2 -7l2 -2l2 8l2 -17l2 3l2 -1l2 6l2 15l2 -15l2 -17l2 17l2 11l2 0l2 -3l2 -7l2 -2l2 2l2 -1l2 -1l2 -4l2 14l2 14l2 -5l2 11l2 -13l2 12l2 -9l2 -6l2 1l2 -5l2 6l2 -14l2 3l2 16l2 -15l2 3l2 -2l2 -17l2 15l2 -14l2 -16l2 24l2 -7l2 7l2 3l2 6l2 -10l2 7l2 -9l2 7l2 9l2 8l2 13l2 -14l2 -9l2 -12l2 6l2 9l2 -4l2 -6l2 4l2 -3l2 -2l2 1l2 -9l2 6l2 12l2 8l2 -4l2 6l2 -3l2 -4l2 -23l2 30l2 3l2 -16l2 4l2 -17l2 -2l2 -13l2 17l2 7l2 -7M388 699l2 0l2 3l2 1l2 -7l2 12l2 -1l2 12l2 -7l2 -3l2 -8l2 7l2 9l2 -1l2 -6l2 9l2 7l2 -5l2 -2l2 -12l2 3l2 2l2 -7l2 -3l2 1l2 -6l2 10l2 -7l2 8l2 1l2 -10l2 2l2 9l2 -5l2 9l2 5l2 9l2 -11l2 -4l2 -2l2 -3l2 3l2 -1l2 1l2 1l2 1l2 1l2 3l2 -5l2 5l2 1l2 -5l2 -4l2 1l2 2l2 -3l2 1l2 7l2 7l2 -2l2 -4l2 -15l2 2l2 1l2 6l2 0l2 1l2 8l2 1l2 -8l2 -2l2 -6l2 6l2 -3l2 -2l2 4l2 -3l2 -2l2 -5l2 -5l2 -5l2 5l2 4l2 1l2 -1l2 -1l2 2l2 -1l2 0l2 9l2 -7l2 9l2 6l2 -8l2 7l2 -13l2 6l2 -8l2 -4l2 17l2 -18l2 -7l2 6l2 -3l2 -5l2 11l2 -4l2 3l2 -4l2 3l2 12l2 -9l2 3l2 0l2 -3l2 3l2 10l2 9l2 -12l2 16l2 -6l2 -3l2 -1l2 6l2 -2l2 5l2 -5l2 8l2 6l2 7l2 -1l2 -3l2 2l2 -10l2 9l2 7l2 -6l2 12l2 -8l2 3l2 -9l2 1l2 -1l2 6l2 -4l2 0l2 22l2 1l2 -15l2 2l2 -13l2 4l2 4l2 -3l2 -10l2 3l2 5l2 -11l2 1l2 -4l2 -6l2 -9l2 12l2 -3l2 3l2 -1l2 -10l2 -4l2 6l2 -3l2 -2l2 3l2 -7l2 5l2 0l2 0l2 5l2 -6l2 -6l2 9l2 -19l2 12l2 -1l2 4l2 4l2 5l2 1l2 -10l2 7l2 -6l2 2l2 -1l2 -3l2 -15l2 2l2 14l2 20l2 7l2 -5l2 -5l2 4l2 -7l2 -7l2 -10l2 -2l2 1l2 1l2 3l2 -13l2 -9l2 3l2 10l2 -18l2 -4l2 8l2 -1l2 22l2 -3l2 -12l2 -12l2 -11l2 16l2 -20l2 8l2 7l2 13l2 3l2 -9l2 -1l2 -2l2 7l2 9l2 0l2 2l2 6l2 -19l2 5l2 -3l2 -14l2 13l2 12l2 -5l2 5l2 0l2 9l2 -10l2 5l2 -8l2 -1l2 8l2 1l2 -3l2 -5l2 7l2 -11l2 13l2 4l2 -3l2 -3l2 2l2 -4l2 14l2 -4l2 0l2 -19l2 2l2 4l2 3l2 -3l2 0l2 -3l2 -14l2 -6l2 15l2 6l2 17l2 10l2 -13l2 -2l2 4l2 8l2 -4l2 -4l2 -2l2 -1l2 -2l2 -15l2 -15l2 11l2 -5l2 13l2 -7l2 3l2 17l2 0l2 17l2 -25l2 6l2 15l2 -11l2 -7l2 15l2 -3l2 5l2 -5l2 2l2 5l2 -10l2 7l2 -7l2 1l2 -6l2 -14l2 9l2 -1l2 -9l2 1l2 0l2 -1l2 14l2 -15l2 14l2 9l2 -4l2 8l2 -13l2 0l2 1l2 -15l2 -10l2 20l2 11l2 -8l2 -12l2 3l2 16l2 -6l2 -4l2 -6l2 -3l2 -9l2 -4l2 10l2 -2l2 8l2 -5l2 12l2 2l2 1l2 10l2 4l2 -9l2 8l2 -8l2 -3l2 -5l2 -2l2 -16l2 13l2 1l2 5l2 13l2 -7l2 -11l2 -1l2 -14l2 15l2 26l2 -11l2 -15l2 18l2 17l2 -6l2 -19l2 -5l2 -7l2 13l2 -5l2 15l2 17M388 703l2 6l2 -4l2 5l2 6l2 -4l2 -7l2 -7l2 -6l2 6l2 -3l2 -3l2 7l2 3l2 1l2 -1l2 -6l2 3l2 4l2 1l2 3l2 -1l2 -10l2 -7l2 -10l2 0l2 10l2 8l2 1l2 -2l2 -12l2 5l2 9l2 2l2 -2l2 2l2 3l2 -2l2 0l2 -5l2 12l2 -3l2 -11l2 1l2 -2l2 10l2 3l2 -12l2 3l2 2l2 -4l2 7l2 -4l2 -11l2 16l2 -4l2 6l2 -5l2 9l2 2l2 -2l2 -10l2 1l2 1l2 2l2 -2l2 1l2 7l2 -4l2 -6l2 9l2 -6l2 -4l2 9l2 -6l2 -2l2 -2l2 5l2 5l2 1l2 -9l2 4l2 -4l2 5l2 -9l2 1l2 -3l2 6l2 -5l2 1l2 9l2 0l2 -1l2 3l2 -6l2 -9l2 -4l2 9l2 2l2 -4l2 0l2 8l2 -1l2 -2l2 -7l2 -2l2 -4l2 0l2 14l2 -5l2 2l2 12l2 -8l2 2l2 0l2 -7l2 6l2 3l2 -13l2 8l2 -6l2 14l2 -7l2 7l2 -5l2 -1l2 0l2 -2l2 7l2 0l2 -1l2 -7l2 7l2 2l2 -7l2 13l2 -5l2 -5l2 3l2 -12l2 -6l2 8l2 0l2 2l2 7l2 1l2 -1l2 3l2 6l2 -8l2 -2l2 -14l2 -8l2 7l2 7l2 8l2 -1l2 -14l2 6l2 2l2 -7l2 -3l2 9l2 14l2 -12l2 2l2 6l2 7l2 -1l2 -12l2 1l2 2l2 -6l2 13l2 9l2 -2l2 -7l2 -3l2 7l2 0l2 6l2 -11l2 -10l2 14l2 -7l2 15l2 -16l2 -7l2 14l2 -10l2 0l2 4l2 11l2 4l2 -24l2 17l2 -15l2 -5l2 -4l2 -15l2 5l2 5l2 -3l2 -4l2 11l2 20l2 -8l2 -7l2 -4l2 3l2 5l2 -8l2 23l2 6l2 -4l2 -29l2 -10l2 13l2 11l2 4l2 -7l2 12l2 -5l2 0l2 -3l2 -4l2 2l2 1l2 7l2 0l2 4l2 -16l2 1l2 -9l2 7l2 2l2 -3l2 -3l2 8l2 -11l2 -8l2 6l2 15l2 2l2 3l2 -24l2 0l2 4l2 24l2 -7l2 5l2 -14l2 -1l2 17l2 -12l2 4l2 9l2 1l2 6l2 -10l2 16l2 -11l2 -5l2 -7l2 9l2 13l2 -2l2 -7l2 18l2 7l2 -15l2 -14l2 -8l2 14l2 7l2 9l2 -15l2 -2l2 -12l2 8l2 2l2 1l2 -8l2 -9l2 -1l2 26l2 -4l2 -4l2 -7l2 0l2 -20l2 16l2 -7l2 16l2 2l2 3l2 -13l2 5l2 8l2 -9l2 -6l2 1l2 -5l2 9l2 8l2 0l2 -4l2 1l2 -7l2 -3l2 9l2 -13l2 2l2 0l2 -3l2 5l2 3l2 -2l2 -8l2 -3l2 7l2 -9l2 -9l2 17l2 -4l2 0l2 -7l2 -1l2 5l2 -18l2 13l2 -3l2 -6l2 20l2 -12l2 0l2 17l2 -2l2 -13l2 8l2 -4l2 3l2 14l2 7l2 -13l2 -4l2 3l2 -13l2 7l2 9l2 -10l2 -9l2 6l2 -9l2 -2l2 13l2 -20l2 24l2 -10l2 -3l2 2l2 8l2 -2l2 -4l2 -20l2 7l2 0l2 17l2 2l2 -7l2 8l2 0l2 3l2 -8l2 5l2 3l2 -17l2 3l2 4l2 -4M388 704l2 -4l2 2l2 -6l2 0l2 6l2 -2l2 1l2 0l2 3l2 -8l2 11l2 1l2 6l2 -13l2 5l2 4l2 -6l2 2l2 4l2 5l2 -9l2 -5l2 10l2 -3l2 -5l2 -5l2 -2l2 -1l2 0l2 3l2 -2l2 2l2 6l2 0l2 4l2 4l2 4l2 6l2 -2l2 1l2 -12l2 -8l2 2l2 5l2 -13l2 2l2 0l2 1l2 -7l2 3l2 0l2 -2l2 -1l2 2l2 -7l2 5l2 -2l2 -1l2 -2l2 5l2 -4l2 -1l2 10l2 4l2 -4l2 -7l2 -1l2 -3l2 -3l2 -5l2 6l2 4l2 9l2 -5l2 1l2 0l2 -11l2 14l2 -3l2 -5l2 1l2 -6l2 -4l2 -5l2 7l2 3l2 1l2 -4l2 2l2 1l2 -6l2 -7l2 -3l2 4l2 5l2 7l2 -12l2 -3l2 3l2 -1l2 -6l2 -6l2 2l2 -1l2 -9l2 -7l2 5l2 -2l2 -4l2 1l2 -11l2 -11l2 -8l2 -2l2 -10l2 -5l2 -5l2 -1l2 -10l2 0l2 1l2 -7l2 -4l2 -7l2 13l2 -13l2 3l2 5l2 -11l2 -3l2 0l2 -9l2 -7l2 1l2 -6l2 7l2 17l2 -9l2 -1l2 6l2 -6l2 3l2 0l2 -1l2 -7l2 -7l2 8l2 -6l2 21l2 12l2 -8l2 0l2 10l2 5l2 10l2 -1l2 14l2 10l2 -10l2 9l2 3l2 -18l2 2l2 0l2 15l2 10l2 10l2 14l2 -5l2 16l2 -15l2 12l2 11l2 -5l2 6l2 12l2 -16l2 0l2 14l2 -4l2 -7l2 -7l2 3l2 3l2 2l2 15l2 10l2 2l2 -2l2 22l2 3l2 -7l2 5l2 -10l2 1l2 6l2 -6l2 -19l2 21l2 -2l2 -5l2 -15l2 8l2 1l2 20l2 -8l2 1l2 -9l2 2l2 -2l2 -22l2 0l2 19l2 19l2 5l2 -7l2 -4l2 -16l2 9l2 16l2 -15l2 8l2 -2l2 3l2 -6l2 4l2 -12l2 3l2 -18l2 -4l2 14l2 10l2 10l2 -15l2 -5l2 24l2 -13l2 -13l2 -1l2 9l2 17l2 -10l2 1l2 -2l2 -14l2 14l2 -6l2 8l2 -19l2 -5l2 24l2 1l2 6l2 6l2 -15l2 8l2 -18l2 1l2 5l2 4l2 2l2 3l2 -9l2 4l2 3l2 -17l2 4l2 14l2 -2l2 0l2 11l2 11l2 5l2 -16l2 -3l2 2l2 19l2 -22l2 7l2 9l2 2l2 -14l2 15l2 -11l2 2l2 -4l2 -13l2 -9l2 -2l2 -1l2 17l2 1l2 6l2 -7l2 0l2 -9l2 16l2 12l2 0l2 -18l2 0l2 2l2 9l2 -9l2 -9l2 -5l2 4l2 -5l2 -1l2 5l2 2l2 1l2 -7l2 2l2 -7l2 12l2 -4l2 -4l2 10l2 1l2 12l2 -17l2 -16l2 15l2 3l2 -12l2 -12l2 14l2 -5l2 2l2 6l2 5l2 15l2 -1l2 -10l2 4l2 -1l2 -7l2 -8l2 -7l2 1l2 12l2 -11l2 -5l2 9l2 8l2 7l2 -7l2 -10l2 2l2 -14l2 3l2 19l2 -2l2 10l2 8l2 5l2 -21l2 -1l2 -10l2 8l2 0l2 -2l2 13l2 -1l2 -1l2 -13l2 -2l2 12l2 14l2 -16l2 3l2 -1l2 9l2 9l2 -5l2 -15l2 8l2 6M388 701l2 2l2 -2l2 9l2 -8l2 -7l2 -5l2 -6l2 -1l2 14l2 -3l2 -15l2 6l2 -6l2 12l2 -1l2 -6l2 -3l2 -4l2 5l2 -2l2 14l2 4l2 -1l2 7l2 0l2 -2l2 5l2 2l2 -7l2 -6l2 2l2 -1l2 13l2 -17l2 -1l2 9l2 -14l2 4l2 0l2 -2l2 3l2 11l2 -3l2 -4l2 6l2 3l2 -11l2 -3l2 1l2 0l2 1l2 4l2 5l2 -5l2 -7l2 1l2 -1l2 8l2 -10l2 4l2 14l2 -7l2 -5l2 15l2 -1l2 -10l2 4l2 -3l2 -8l2 0l2 10l2 -14l2 19l2 0l2 -12l2 -2l2 5l2 -6l2 -6l2 6l2 1l2 3l2 -6l2 -5l2 -2l2 4l2 4l2 6l2 8l2 -4l2 -16l2 6l2 -10l2 5l2 0l2 5l2 -4l2 7l2 -6l2 -1l2 3l2 5l2 -1l2 -5l2 5l2 2l2 3l2 -14l2 5l2 14l2 -6l2 5l2 -6l2 7l2 -4l2 2l2 -6l2 0l2 3l2 13l2 -4l2 4l2 -1l2 10l2 -8l2 -7l2 18l2 -3l2 7l2 -5l2 16l2 4l2 -5l2 1l2 7l2 1l2 2l2 7l2 -7l2 5l2 1l2 6l2 -7l2 11l2 5l2 0l2 -9l2 -3l2 -9l2 10l2 1l2 -3l2 12l2 8l2 -13l2 12l2 -10l2 6l2 -8l2 5l2 -22l2 12l2 -16l2 2l2 -7l2 -7l2 -3l2 18l2 -1l2 -11l2 -5l2 -7l2 -3l2 -5l2 0l2 8l2 -11l2 3l2 -1l2 5l2 2l2 -19l2 -6l2 0l2 2l2 0l2 7l2 2l2 1l2 5l2 -12l2 -2l2 -13l2 16l2 -5l2 9l2 -18l2 -1l2 13l2 -8l2 -8l2 -2l2 26l2 4l2 -7l2 -6l2 -10l2 21l2 4l2 -4l2 -2l2 2l2 16l2 -7l2 -2l2 -11l2 1l2 6l2 2l2 -17l2 12l2 5l2 6l2 -1l2 15l2 -13l2 -13l2 14l2 2l2 14l2 14l2 -8l2 -4l2 -9l2 0l2 -1l2 -3l2 -11l2 16l2 0l2 14l2 -24l2 -19l2 -6l2 9l2 8l2 -6l2 -15l2 2l2 -9l2 20l2 6l2 1l2 -4l2 -19l2 18l2 -13l2 10l2 -4l2 3l2 -15l2 8l2 3l2 -15l2 6l2 1l2 4l2 1l2 14l2 9l2 -17l2 6l2 -10l2 -2l2 8l2 1l2 -7l2 -4l2 -10l2 16l2 -9l2 -3l2 13l2 1l2 -12l2 3l2 -20l2 8l2 15l2 0l2 7l2 5l2 6l2 -1l2 13l2 -9l2 -16l2 -13l2 -3l2 18l2 -1l2 -11l2 0l2 -10l2 7l2 19l2 -11l2 -1l2 7l2 5l2 0l2 6l2 -16l2 -1l2 7l2 4l2 -4l2 -3l2 1l2 -12l2 0l2 1l2 -3l2 9l2 11l2 1l2 -11l2 2l2 -8l2 6l2 -15l2 4l2 -2l2 18l2 -15l2 7l2 -20l2 18l2 -5l2 -14l2 1l2 14l2 -3l2 1l2 5l2 6l2 -14l2 -7l2 -4l2 8l2 13l2 9l2 7l2 -9l2 -6l2 12l2 -3l2 -4l2 -12l2 0l2 0l2 -13l2 3l2 4l2 6l2 -6l2 5l2 -2l2 13l2 -12l2 12l2 -12l2 -9l2 7l2 -20l2 16l2 10l2 -4l2 4M388 701l2 14l2 -9l2 0l2 -2l2 -5l2 1l2 4l2 -4l2 -5l2 9l2 1l2 3l2 -5l2 5l2 10l2 -10l2 1l2 -1l2 -3l2 -4l2 9l2 -4l2 -1l2 5l2 -2l2 5l2 0l2 1l2 -5l2 -2l2 -3l2 12l2 -12l2 -2l2 2l2 8l2 1l2 -5l2 1l2 -2l2 12l2 -10l2 -3l2 -7l2 2l2 8l2 3l2 2l2 -7l2 -7l2 5l2 2l2 9l2 2l2 2l2 5l2 -19l2 7l2 2l2 -3l2 -1l2 -3l2 4l2 11l2 -8l2 5l2 -7l2 -4l2 -4l2 1l2 -1l2 7l2 2l2 -5l2 -1l2 -1l2 -7l2 1l2 4l2 7l2 1l2 -8l2 3l2 -5l2 7l2 -4l2 -1l2 -1l2 1l2 -14l2 4l2 5l2 -6l2 7l2 8l2 -7l2 0l2 -4l2 1l2 3l2 5l2 8l2 -2l2 -6l2 1l2 -5l2 -4l2 10l2 -6l2 1l2 9l2 -3l2 3l2 9l2 1l2 -2l2 -5l2 0l2 2l2 -2l2 -1l2 11l2 3l2 13l2 20l2 -16l2 -9l2 -1l2 -2l2 1l2 4l2 11l2 -5l2 4l2 -9l2 6l2 5l2 7l2 5l2 -6l2 -3l2 -6l2 7l2 -1l2 -13l2 -2l2 8l2 1l2 -7l2 0l2 -4l2 9l2 2l2 -15l2 0l2 12l2 -2l2 -13l2 -7l2 3l2 -14l2 2l2 3l2 -2l2 -1l2 0l2 16l2 -7l2 -11l2 -3l2 5l2 -7l2 6l2 -8l2 6l2 -8l2 11l2 -23l2 -2l2 0l2 1l2 4l2 23l2 -3l2 -4l2 -3l2 -10l2 16l2 7l2 -5l2 2l2 -15l2 -5l2 -13l2 -3l2 14l2 4l2 -6l2 9l2 6l2 8l2 -2l2 15l2 -2l2 -18l2 -14l2 13l2 19l2 -6l2 -18l2 -5l2 8l2 1l2 4l2 7l2 2l2 0l2 10l2 -24l2 -21l2 4l2 4l2 -2l2 6l2 3l2 2l2 7l2 -1l2 -6l2 1l2 -14l2 5l2 3l2 0l2 5l2 -12l2 -7l2 4l2 0l2 20l2 -4l2 4l2 16l2 -13l2 2l2 3l2 -12l2 18l2 -1l2 0l2 -8l2 2l2 0l2 -13l2 17l2 -8l2 -10l2 16l2 1l2 0l2 -5l2 -6l2 19l2 -15l2 -14l2 3l2 8l2 6l2 12l2 -5l2 -9l2 -19l2 2l2 17l2 35l2 -24l2 -1l2 -17l2 15l2 -1l2 -3l2 -16l2 2l2 0l2 -2l2 1l2 -1l2 24l2 -15l2 -2l2 -13l2 11l2 3l2 -7l2 11l2 2l2 -1l2 7l2 13l2 5l2 0l2 -18l2 4l2 -3l2 -10l2 -5l2 7l2 21l2 -1l2 -33l2 3l2 14l2 -12l2 16l2 -11l2 -3l2 14l2 -3l2 2l2 -2l2 3l2 -6l2 4l2 -5l2 2l2 6l2 -7l2 4l2 5l2 -4l2 11l2 1l2 -9l2 6l2 -7l2 10l2 -6l2 -1l2 4l2 7l2 5l2 -15l2 15l2 -10l2 -11l2 0l2 -1l2 3l2 -15l2 12l2 -10l2 -7l2 11l2 4l2 14l2 -6l2 1l2 -12l2 -6l2 -8l2 6l2 -11l2 -1l2 18l2 6l2 3l2 0l2 -15l2 -20l2 14l2 -8l2 11l2 5l2 -1l2 12l2 2l2 4l2 10l2 -25M388 706l2 -1l2 2l2 10l2 -6l2 0l2 -9l2 -2l2 6l2 -6l2 -4l2 10l2 -3l2 -1l2 -4l2 -5l2 -8l2 6l2 12l2 -6l2 -1l2 1l2 2l2 0l2 11l2 -4l2 -7l2 7l2 -9l2 -1l2 0l2 4l2 0l2 -4l2 6l2 -7l2 4l2 -2l2 0l2 1l2 4l2 0l2 4l2 -4l2 -4l2 6l2 10l2 -7l2 -1l2 -5l2 9l2 -1l2 0l2 -3l2 5l2 -6l2 -3l2 -3l2 3l2 -7l2 -6l2 19l2 10l2 -3l2 -4l2 0l2 2l2 0l2 -5l2 1l2 2l2 -8l2 -7l2 -7l2 0l2 8l2 -1l2 8l2 -5l2 2l2 2l2 1l2 1l2 -3l2 5l2 0l2 -1l2 2l2 -6l2 6l2 -4l2 -6l2 -4l2 5l2 13l2 0l2 -10l2 -6l2 4l2 9l2 2l2 -9l2 6l2 4l2 11l2 -5l2 -5l2 5l2 -3l2 7l2 -6l2 -7l2 -2l2 15l2 -9l2 2l2 8l2 -1l2 -12l2 11l2 3l2 -7l2 6l2 3l2 -9l2 1l2 -3l2 9l2 5l2 -1l2 -3l2 -3l2 0l2 2l2 1l2 4l2 5l2 -8l2 10l2 -8l2 -1l2 10l2 0l2 1l2 -8l2 20l2 -3l2 -2l2 -14l2 4l2 -1l2 -16l2 10l2 10l2 -10l2 8l2 1l2 9l2 -23l2 -5l2 1l2 9l2 5l2 -11l2 -4l2 -11l2 12l2 -13l2 -10l2 -4l2 -4l2 -5l2 0l2 -1l2 8l2 1l2 2l2 7l2 -8l2 0l2 3l2 -4l2 6l2 3l2 9l2 -14l2 -2l2 8l2 -5l2 10l2 -12l2 1l2 -8l2 -8l2 3l2 10l2 6l2 -10l2 16l2 -7l2 26l2 -14l2 -1l2 -2l2 6l2 -9l2 -13l2 -5l2 -3l2 4l2 -9l2 12l2 -7l2 4l2 -1l2 -11l2 18l2 -2l2 8l2 -7l2 -6l2 7l2 -9l2 1l2 9l2 2l2 4l2 -6l2 -8l2 -11l2 -3l2 -6l2 -3l2 2l2 10l2 -4l2 1l2 1l2 -3l2 24l2 -5l2 3l2 17l2 0l2 8l2 -12l2 -16l2 10l2 3l2 -7l2 13l2 3l2 -4l2 -1l2 7l2 -8l2 -13l2 3l2 11l2 -7l2 19l2 3l2 13l2 -26l2 -7l2 -5l2 0l2 -12l2 10l2 2l2 -5l2 3l2 8l2 6l2 -13l2 -7l2 14l2 -4l2 0l2 5l2 9l2 4l2 -14l2 -8l2 -6l2 -5l2 10l2 6l2 -9l2 -2l2 -6l2 11l2 -1l2 -12l2 -2l2 2l2 5l2 8l2 10l2 1l2 13l2 -4l2 -4l2 2l2 7l2 -6l2 -15l2 10l2 -1l2 12l2 -4l2 -12l2 7l2 -6l2 -13l2 1l2 -12l2 13l2 8l2 -7l2 5l2 6l2 2l2 -1l2 -9l2 28l2 -13l2 -1l2 -9l2 -8l2 10l2 1l2 11l2 0l2 7l2 -2l2 -14l2 -6l2 -2l2 11l2 -3l2 -4l2 -17l2 -1l2 8l2 15l2 15l2 -17l2 -2l2 -12l2 -18l2 8l2 1l2 -2l2 6l2 7l2 -13l2 22l2 -4l2 9l2 -5l2 9l2 -19l2 16l2 -17l2 2l2 13l2 2l2 -14l2 -5l2 -3l2 8l2 10l2 1l2 8l2 6l2 -17l2 3l2 12l2 12M388 712l2 -6l2 1l2 -8l2 -1l2 11l2 4l2 -3l2 -6l2 9l2 -13l2 0l2 -2l2 2l2 2l2 -2l2 0l2 4l2 0l2 10l2 -7l2 -2l2 -5l2 -5l2 5l2 6l2 2l2 -4l2 -6l2 12l2 6l2 -9l2 -10l2 -1l2 2l2 -10l2 10l2 0l2 4l2 -1l2 1l2 -9l2 5l2 -1l2 0l2 7l2 7l2 1l2 -9l2 -3l2 -1l2 5l2 -9l2 -5l2 6l2 -8l2 14l2 -7l2 0l2 2l2 -5l2 -4l2 0l2 0l2 4l2 0l2 13l2 17l2 -11l2 -7l2 -7l2 -4l2 -2l2 4l2 -6l2 9l2 -5l2 3l2 5l2 4l2 5l2 -1l2 -6l2 -4l2 2l2 -2l2 10l2 -5l2 11l2 -2l2 -11l2 -5l2 2l2 -2l2 7l2 -2l2 -6l2 -4l2 1l2 4l2 8l2 -10l2 2l2 2l2 13l2 8l2 -6l2 -3l2 -4l2 -4l2 -6l2 -1l2 7l2 1l2 -6l2 3l2 -12l2 8l2 -7l2 3l2 -3l2 3l2 4l2 2l2 5l2 -17l2 -4l2 4l2 -6l2 4l2 -16l2 -11l2 10l2 11l2 -15l2 3l2 4l2 -4l2 -4l2 -4l2 -18l2 1l2 -8l2 -1l2 -6l2 13l2 -6l2 11l2 8l2 -7l2 -7l2 8l2 16l2 -7l2 12l2 2l2 11l2 -3l2 0l2 -2l2 15l2 -4l2 -3l2 -5l2 -10l2 6l2 -5l2 -5l2 12l2 9l2 15l2 -10l2 9l2 -3l2 1l2 2l2 11l2 -5l2 -7l2 -8l2 14l2 0l2 7l2 -13l2 -2l2 8l2 -15l2 -3l2 -1l2 6l2 -13l2 14l2 -5l2 -8l2 15l2 7l2 -10l2 -9l2 3l2 4l2 3l2 1l2 9l2 -9l2 -14l2 15l2 20l2 5l2 -17l2 -5l2 12l2 -8l2 4l2 -6l2 -4l2 0l2 7l2 -3l2 0l2 4l2 6l2 9l2 -7l2 6l2 -4l2 3l2 -4l2 -10l2 -2l2 -7l2 -11l2 20l2 -2l2 -13l2 -7l2 11l2 -7l2 10l2 2l2 -12l2 4l2 2l2 -2l2 12l2 -4l2 -14l2 7l2 5l2 9l2 7l2 1l2 3l2 -19l2 -6l2 13l2 -7l2 -1l2 2l2 26l2 -8l2 -6l2 0l2 -3l2 -25l2 8l2 19l2 7l2 16l2 -16l2 3l2 0l2 3l2 -2l2 -9l2 5l2 5l2 -23l2 4l2 9l2 14l2 -3l2 -13l2 -5l2 0l2 -11l2 17l2 -8l2 0l2 0l2 23l2 -13l2 -20l2 0l2 14l2 -10l2 -25l2 17l2 9l2 -12l2 3l2 4l2 4l2 2l2 -1l2 1l2 9l2 -11l2 -9l2 2l2 -2l2 -4l2 -9l2 10l2 6l2 -15l2 17l2 -3l2 -7l2 8l2 7l2 -2l2 -8l2 -3l2 2l2 -3l2 6l2 -6l2 -1l2 5l2 -8l2 2l2 -3l2 -1l2 15l2 -3l2 -11l2 -8l2 -9l2 2l2 -8l2 19l2 12l2 3l2 2l2 -3l2 1l2 -1l2 2l2 -10l2 -11l2 8l2 -6l2 3l2 0l2 9l2 2l2 1l2 -14l2 0l2 -13l2 6l2 14l2 9l2 -1l2 4l2 13l2 11l2 -3l2 -27l2 6l2 -6l2 4l2 2l2 -1l2 -3l2 -8l2 8l2 -13l2 7l2 -1" fill="none" stroke="#ffff00" stroke-width="1"/></g><line x1="462.5" y1="528" x2="462.5" y2="871" stroke="#707070" stroke-width="1" stroke-dasharray="4 3"/><line x1="537.5" y1="528" x2="537.5" y2="871" stroke="#ff0000" stroke-width="1" stroke-dasharray="4 3"/><line x1="613.5" y1="528" x2="613.5" y2="871" stroke="#707070" stroke-width="1" stroke-dasharray="4 3"/><line x1="689.5" y1="528" x2="689.5" y2="871" stroke="#707070" stroke-width="1" stroke-dasharray="4 3"/><line x1="764.5" y1="528" x2="764.5" y2="871" stroke="#707070" stroke-width="1" stroke-dasharray="4 3"/><line x1="839.5" y1="528" x2="839.5" y2="871" stroke="#707070" stroke-width="1" stroke-dasharray="4 3"/><line x1="915.5" y1="528" x2="915.5" y2="871" stroke="#707070" stroke-width="1" stroke-dasharray="4 3"/><line x1="991.5" y1="528" x2="991.5" y2="871" stroke="#707070" stroke-width="1" stroke-dasharray="4 3"/><line x1="1067.5" y1="528" x2="1067.5" y2="871" stroke="#707070" stroke-width="1" stroke-dasharray="4 3"/><line x1="1142.5" y1="528" x2="1142.5" y2="871" stroke="#707070" stroke-width="1" stroke-dasharray="4 3"/><g fill="#000"><rect x="388" y="527" width="760" height="1"/><rect x="1146" y="527" width="2" height="346"/><rect x="388" y="871.6" width="760" height="1.4"/></g></svg><div class="t" style="left:468px;top:852px;font-size:17.5px;color:#777"><span class="s">-50ms</span></div><div class="t" style="left:543px;top:852px;font-size:17.5px;color:#ff0000"><span class="s">0ms / Stimulus</span></div><div class="t" style="left:619px;top:852px;font-size:17.5px;color:#777"><span class="s">50ms</span></div><div class="t" style="left:695px;top:852px;font-size:17.5px;color:#777"><span class="s">100ms</span></div><div class="t" style="left:770px;top:852px;font-size:17.5px;color:#777"><span class="s">150ms</span></div><div class="t" style="left:845px;top:852px;font-size:17.5px;color:#777"><span class="s">200ms</span></div><div class="t" style="left:921px;top:852px;font-size:17.5px;color:#777"><span class="s">250ms</span></div><div class="t" style="left:997px;top:852px;font-size:17.5px;color:#777"><span class="s">300ms</span></div><div class="t" style="left:1073px;top:852px;font-size:17.5px;color:#777"><span class="s">350ms</span></div></body></html>
